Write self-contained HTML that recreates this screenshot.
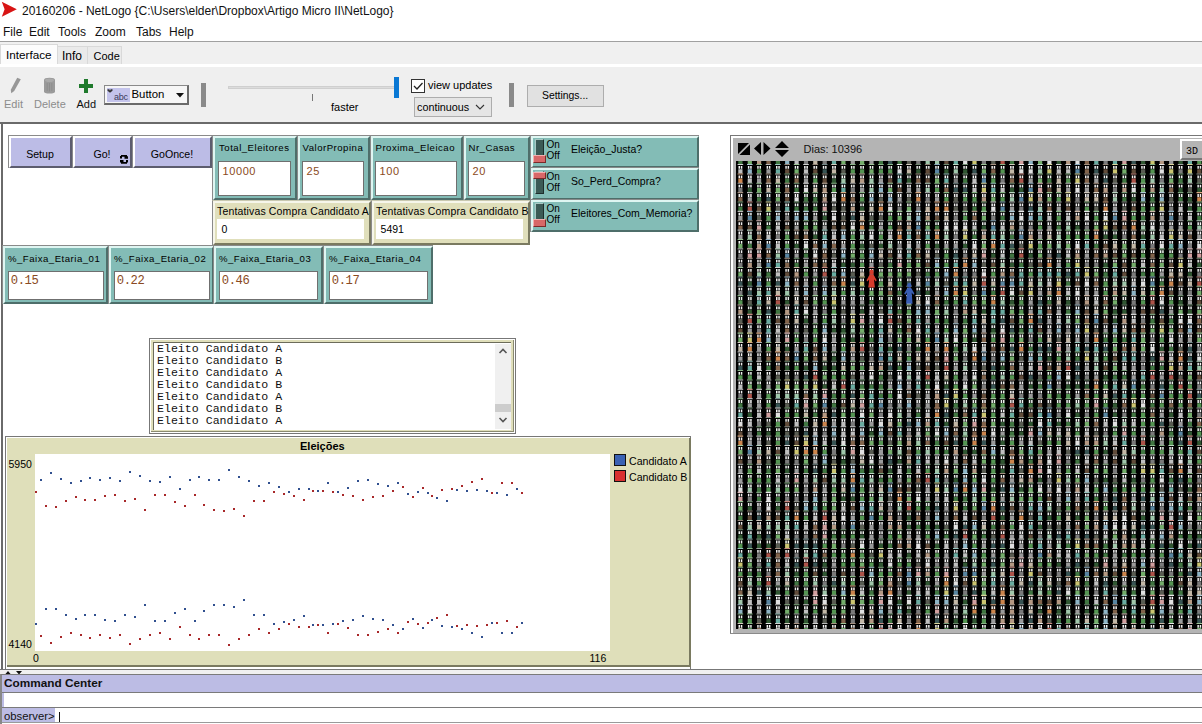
<!DOCTYPE html>
<html><head><meta charset="utf-8">
<style>
*{box-sizing:border-box;margin:0;padding:0}
html,body{width:1202px;height:724px;overflow:hidden;background:#f0f0f0;font-family:"Liberation Sans",sans-serif;color:#000}
.a{position:absolute}
.t{position:absolute;white-space:pre;line-height:1}
/* buttons */
.btn{position:absolute;background:#bcbce6;border-top:1px solid #8a8a8a;border-left:1px solid #8a8a8a;}
.btn .in{position:absolute;left:0;top:0;right:0;bottom:0;border-top:2px solid #fff;border-left:2px solid #fff;border-right:2px solid #5c5c6e;border-bottom:2px solid #5c5c6e}
.btn .lb{position:absolute;left:-1px;right:0;text-align:center;font-size:10.6px;top:12.7px;line-height:1}
/* teal widgets */
.tw{position:absolute;background:#83bcb6;border-top:1px solid #8a8a8a;border-left:1px solid #8a8a8a}
.tw .in{position:absolute;left:0;top:0;right:0;bottom:0;border-top:2px solid #dff6f2;border-left:2px solid #dff6f2;border-right:2px solid #4e6e6a;border-bottom:2px solid #4e6e6a}
.tw .lb{position:absolute;left:6px;top:7px;font-size:9.6px;letter-spacing:0.5px;white-space:pre;line-height:1}
.ibox{position:absolute;background:#fff;border:1px solid #6f6f6f}
.val{position:absolute;left:3.5px;top:3.8px;font-size:11px;letter-spacing:0.6px;color:#8a4a22;white-space:pre;line-height:1}
.mval{font-family:"Liberation Mono",monospace;font-size:12.2px;letter-spacing:-0.35px;top:3.2px;left:1.7px}
/* monitors */
.mon{position:absolute;background:#e0dfbb;border-top:1px solid #c8c8b0;border-left:1px solid #8a8a8a}
.mon .in{position:absolute;left:0;top:0;right:0;bottom:0;border-top:2px solid #f6f6ea;border-left:2px solid #f6f6ea;border-right:2px solid #7a7a60;border-bottom:2px solid #7a7a60}
.mon .lb{position:absolute;left:4px;top:4.8px;font-size:10.5px;letter-spacing:0.15px;white-space:pre;line-height:1}
.mbox{position:absolute;left:3.8px;width:147.4px;top:17.9px;height:20px;background:#fff}
.mbox span{position:absolute;left:4.8px;top:4.9px;font-size:10.5px;white-space:pre;line-height:1}
/* switches */
.sw{position:absolute;background:#83bcb6;border-top:1px solid #8a8a8a;border-left:1px solid #8a8a8a}
.sw .in{position:absolute;left:0;top:0;right:0;bottom:0;border-top:2px solid #dff6f2;border-left:2px solid #dff6f2;border-right:2px solid #4e6e6a;border-bottom:2px solid #4e6e6a}
.track{position:absolute;left:3.9px;top:3.4px;width:9px;height:22.5px;background:#3b5a55;border-left:1px solid #a8c8c4;border-top:1px solid #a8c8c4;border-right:1px solid #1e2e2c;border-bottom:1px solid #1e2e2c}
.knob{position:absolute;left:2.4px;width:12.6px;height:7.7px;background:#d86868;border-top:1px solid #f2b0b0;border-left:1px solid #f2b0b0;border-right:1px solid #7a2a2a;border-bottom:1px solid #7a2a2a}
.onoff{position:absolute;left:15.5px;font-size:10px;line-height:1;white-space:pre}
.swl{position:absolute;left:40px;top:8.2px;font-size:10.5px;white-space:pre;line-height:1}
</style></head><body>
<!-- title bar -->
<div class="a" style="left:0;top:0;width:1202px;height:41px;background:#fff"></div>
<svg class="a" style="left:0;top:0" width="20" height="20" viewBox="0 0 20 20"><path d="M1.8 1.8 L16.8 9.3 L1.8 16.8 L4.6 9.3 Z" fill="#d81414"/></svg>
<div class="t" style="left:22px;top:4.5px;font-size:12px;letter-spacing:-0.01px;color:#111">20160206 - NetLogo {C:\Users\elder\Dropbox\Artigo Micro II\NetLogo}</div>
<div class="t" style="left:3px;top:26px;font-size:12px;color:#111">File</div>
<div class="t" style="left:29px;top:26px;font-size:12px;color:#111">Edit</div>
<div class="t" style="left:58px;top:26px;font-size:12px;color:#111">Tools</div>
<div class="t" style="left:95px;top:26px;font-size:12px;color:#111">Zoom</div>
<div class="t" style="left:136px;top:26px;font-size:12px;color:#111">Tabs</div>
<div class="t" style="left:169px;top:26px;font-size:12px;color:#111">Help</div>
<div class="a" style="left:0;top:41px;width:1202px;height:1px;background:#a0a0a0"></div>
<!-- tabs -->
<div class="a" style="left:0;top:42px;width:1202px;height:26px;background:#f0f0f0"></div>
<div class="a" style="left:0;top:44px;width:58px;height:23px;background:#fcfcfc;border:1px solid #d9d9d9;border-bottom:none"></div>
<div class="a" style="left:58px;top:46px;width:30px;height:19px;background:#eaeaea;border:1px solid #d9d9d9;border-left:none"></div>
<div class="a" style="left:88px;top:46px;width:34px;height:19px;background:#eaeaea;border:1px solid #d9d9d9;border-left:none"></div>
<div class="t" style="left:6px;top:49.2px;font-size:11.7px">Interface</div>
<div class="t" style="left:62px;top:50.3px;font-size:12px">Info</div>
<div class="t" style="left:93.5px;top:50.6px;font-size:11px">Code</div>
<div class="a" style="left:0;top:64px;width:1202px;height:3px;background:#ffffff"></div>
<!-- toolbar -->
<div class="a" style="left:0;top:67px;width:1202px;height:55px;background:#efefef"></div>
<svg class="a" style="left:10px;top:77px" width="12" height="17" viewBox="0 0 12 17"><path d="M7.2 0.8 L10.8 2.2 L4.2 14 L1.2 16.3 L0.8 12.8 Z" fill="#979797"/></svg>
<svg class="a" style="left:43px;top:77px" width="13" height="17" viewBox="0 0 13 17"><path d="M1 3 Q1 0.8 6.5 0.8 Q12 0.8 12 3 L12 14.5 Q12 16.5 6.5 16.5 Q1 16.5 1 14.5Z" fill="#9a9a9a"/><path d="M4.2 6v8M6.5 6v8.5M8.8 6v8" stroke="#8a8a8a" stroke-width="0.8"/><ellipse cx="6.5" cy="3.2" rx="4.5" ry="1.8" fill="#aaa"/></svg>
<svg class="a" style="left:79px;top:79px" width="14" height="14" viewBox="0 0 14 14"><path d="M5 0h4v5h5v4h-5v5h-4v-5h-5v-4h5z" fill="#1f7a2c"/></svg>
<div class="t" style="left:4px;top:99.4px;font-size:11px;color:#8c8c8c">Edit</div>
<div class="t" style="left:34px;top:99.4px;font-size:11px;color:#8c8c8c">Delete</div>
<div class="t" style="left:76.5px;top:99.4px;font-size:11px;color:#111">Add</div>
<div class="a" style="left:104px;top:85px;width:85px;height:20px;background:#f6f6f6;border:1px solid #8a8a8a;border-right:2px solid #6a6a6a;border-bottom:2px solid #6a6a6a"></div>
<div class="a" style="left:107px;top:88px;width:23px;height:14px;background:#c4c4ec"></div>
<div class="t" style="left:114px;top:93px;font-size:9px;letter-spacing:-0.2px;color:#3c3c5c">abc</div>
<svg class="a" style="left:107px;top:88px" width="6" height="5"><path d="M0.5 1.2h2v1h1v-1h2v1.5l-2.5 2l-2.5-2z" fill="#333"/></svg>
<div class="t" style="left:131.5px;top:88.5px;font-size:11.4px">Button</div>
<svg class="a" style="left:176px;top:93px" width="8" height="5"><path d="M0 0h8L4 4.5z" fill="#111"/></svg>
<div class="a" style="left:201px;top:83px;width:5px;height:24px;background:#8a8a8a"></div>
<div class="a" style="left:228px;top:86px;width:168px;height:3px;background:#dcdcdc;border:1px solid #cfcfcf"></div>
<div class="a" style="left:312px;top:94px;width:1px;height:7px;background:#777"></div>
<div class="a" style="left:394px;top:77px;width:5px;height:21px;background:#0a78d4"></div>
<div class="t" style="left:331px;top:102.2px;font-size:11px">faster</div>
<div class="a" style="left:411px;top:79px;width:14px;height:14px;background:#fff;border:1px solid #333"></div>
<svg class="a" style="left:412px;top:80px" width="12" height="12"><path d="M2 6 L5 9 L10.5 3" stroke="#222" stroke-width="1.3" fill="none"/></svg>
<div class="t" style="left:428px;top:79.5px;font-size:11px">view updates</div>
<div class="a" style="left:414px;top:97px;width:78px;height:20px;background:#e5e5e5;border:1px solid #adadad"></div>
<div class="t" style="left:417px;top:101.7px;font-size:10.8px">continuous</div>
<svg class="a" style="left:475px;top:104px" width="10" height="6"><path d="M1 1 L5 5 L9 1" stroke="#333" stroke-width="1.1" fill="none"/></svg>
<div class="a" style="left:509px;top:83px;width:5px;height:24px;background:#8a8a8a"></div>
<div class="a" style="left:527px;top:85px;width:77px;height:22px;background:#e1e1e1;border:1px solid #adadad"></div>
<div class="t" style="left:542px;top:90.7px;font-size:10.4px">Settings...</div>
<div class="a" style="left:0;top:122px;width:1202px;height:2px;background:#6a6a6a"></div>
<!-- content area -->
<div class="a" style="left:0;top:124px;width:1202px;height:546px;background:#fff"></div>
<div class="a" style="left:1px;top:124px;width:2px;height:546px;background:#6a6a6a"></div>

<!-- buttons -->
<div class="btn" style="left:8px;top:135px;width:64px;height:33px"><div class="in"></div><div class="lb">Setup</div></div>
<div class="btn" style="left:72px;top:135px;width:60px;height:33px"><div class="in"></div><div class="lb">Go!</div>
<svg class="a" style="left:47px;top:19px" width="9" height="10" viewBox="0 0 9 10"><path fill="#000" d="M1 0h6v1.8h-6zM0 1h2v2.6h-2zM4.5 1.2h3.5v2.6h-3.5zM0 5h3.5v2.6h-3.5zM6 5h2v2.6h-2zM1 7h6v1.8h-6z"/></svg></div>
<div class="btn" style="left:132px;top:135px;width:80px;height:33px"><div class="in"></div><div class="lb">GoOnce!</div></div>

<!-- input widgets -->
<div class="tw" style="left:212px;top:135px;width:85px;height:65px"><div class="in"></div><div class="lb">Total_Eleitores</div><div class="ibox" style="left:5px;top:25px;width:73px;height:35px"><div class="val">10000</div></div></div>
<div class="tw" style="left:297px;top:135px;width:73px;height:65px"><div class="in"></div><div class="lb" style="left:4.5px">ValorPropina</div><div class="ibox" style="left:4px;top:25px;width:62px;height:35px"><div class="val">25</div></div></div>
<div class="tw" style="left:370px;top:135px;width:93px;height:65px"><div class="in"></div><div class="lb" style="left:4.5px">Proxima_Eleicao</div><div class="ibox" style="left:4px;top:25px;width:82px;height:35px"><div class="val">100</div></div></div>
<div class="tw" style="left:463px;top:135px;width:67px;height:65px"><div class="in"></div><div class="lb" style="left:4.5px">Nr_Casas</div><div class="ibox" style="left:4px;top:25px;width:57px;height:35px"><div class="val">20</div></div></div>

<!-- monitors -->
<div class="mon" style="left:212px;top:200px;width:159px;height:45px"><div class="in"></div><div class="lb">Tentativas Compra Candidato A</div><div class="mbox"><span>0</span></div></div>
<div class="mon" style="left:371px;top:200px;width:159px;height:45px"><div class="in"></div><div class="lb">Tentativas Compra Candidato B</div><div class="mbox"><span>5491</span></div></div>

<!-- switches -->
<div class="sw" style="left:530px;top:135px;width:169px;height:33px"><div class="in"></div><div class="track"></div><div class="knob" style="top:19px"></div><div class="onoff" style="top:4px">On</div><div class="onoff" style="top:15.1px">Off</div><div class="swl">Eleição_Justa?</div></div>
<div class="sw" style="left:530px;top:167px;width:169px;height:33px"><div class="in"></div><div class="track"></div><div class="knob" style="top:3.8px"></div><div class="onoff" style="top:4px">On</div><div class="onoff" style="top:15.1px">Off</div><div class="swl">So_Perd_Compra?</div></div>
<div class="sw" style="left:530px;top:199px;width:169px;height:33px"><div class="in"></div><div class="track"></div><div class="knob" style="top:19px"></div><div class="onoff" style="top:4px">On</div><div class="onoff" style="top:15.1px">Off</div><div class="swl">Eleitores_Com_Memoria?</div></div>

<!-- faixa inputs -->
<div class="tw" style="left:2px;top:245px;width:106px;height:59px"><div class="in"></div><div class="lb" style="left:5px;top:8.2px">%_Faixa_Etaria_01</div><div class="ibox" style="left:5px;top:25px;width:96px;height:29px"><div class="val mval">0.15</div></div></div>
<div class="tw" style="left:108px;top:245px;width:106px;height:59px"><div class="in"></div><div class="lb" style="left:5px;top:8.2px">%_Faixa_Etaria_02</div><div class="ibox" style="left:5px;top:25px;width:96px;height:29px"><div class="val mval">0.22</div></div></div>
<div class="tw" style="left:213px;top:245px;width:110px;height:59px"><div class="in"></div><div class="lb" style="left:5px;top:8.2px">%_Faixa_Etaria_03</div><div class="ibox" style="left:5px;top:25px;width:99px;height:29px"><div class="val mval">0.46</div></div></div>
<div class="tw" style="left:323px;top:245px;width:110px;height:59px"><div class="in"></div><div class="lb" style="left:5px;top:8.2px">%_Faixa_Etaria_04</div><div class="ibox" style="left:5px;top:25px;width:99px;height:29px"><div class="val mval">0.17</div></div></div>

<!-- output -->
<div class="a" style="left:149px;top:338px;width:367px;height:96px;border:1px solid #777;background:#fff"></div>
<div class="a" style="left:151px;top:340px;width:363px;height:92px;background:#e0dfbb;border-right:1px solid #8a8a70;border-bottom:1px solid #8a8a70"></div>
<div class="a" style="left:153px;top:342px;width:358px;height:88px;background:#fff;border-top:1px solid #6c6c5a;border-left:1px solid #6c6c5a"></div>
<div class="a" style="left:495px;top:344px;width:16px;height:85px;background:#f0f0f0"></div>
<div class="a" style="left:495px;top:404px;width:16px;height:8px;background:#cdcdcd"></div>
<svg class="a" style="left:498px;top:347px" width="10" height="8"><path d="M1.5 6 L5 2.5 L8.5 6" stroke="#555" stroke-width="1.6" fill="none"/></svg>
<svg class="a" style="left:498px;top:416px" width="10" height="8"><path d="M1.5 2 L5 5.5 L8.5 2" stroke="#555" stroke-width="1.6" fill="none"/></svg>
<div class="t" style="left:157px;top:343px;font-family:'Liberation Mono',monospace;font-size:11.6px;line-height:12px;color:#111">Eleito Candidato A
Eleito Candidato B
Eleito Candidato A
Eleito Candidato B
Eleito Candidato A
Eleito Candidato B
Eleito Candidato A</div>

<!-- plot -->
<div class="a" style="left:5px;top:436px;width:686px;height:234px;border:1px solid #777;background:#fff"></div>
<div class="a" style="left:7px;top:438px;width:684px;height:229px;background:#dfdfba;border-right:2px solid #7a7a60;border-bottom:2px solid #7a7a60"></div>
<div class="t" style="left:300px;top:441px;font-size:11px;font-weight:bold">Eleições</div>
<div class="a" style="left:35px;top:454px;width:575px;height:197px;background:#fff"></div>
<svg class="a" style="left:35px;top:454px" width="575" height="197"><path fill="#31508f" d="M0 169h2v2h-2zM5 25h2v2h-2zM10 154h2v2h-2zM15 18h2v2h-2zM20 154h2v2h-2zM25 24h2v2h-2zM30 160h2v2h-2zM35 28h2v2h-2zM40 164h2v2h-2zM45 26h2v2h-2zM49 160h2v2h-2zM54 23h2v2h-2zM59 160h2v2h-2zM64 25h2v2h-2zM69 165h2v2h-2zM74 23h2v2h-2zM79 166h2v2h-2zM84 26h2v2h-2zM89 160h2v2h-2zM94 17h2v2h-2zM99 162h2v2h-2zM104 21h2v2h-2zM109 150h2v2h-2zM114 26h2v2h-2zM119 166h2v2h-2zM124 27h2v2h-2zM129 166h2v2h-2zM134 22h2v2h-2zM139 158h2v2h-2zM144 34h2v2h-2zM149 154h2v2h-2zM154 25h2v2h-2zM159 166h2v2h-2zM163 22h2v2h-2zM168 156h2v2h-2zM173 25h2v2h-2zM178 150h2v2h-2zM183 25h2v2h-2zM188 150h2v2h-2zM193 15h2v2h-2zM198 152h2v2h-2zM203 22h2v2h-2zM208 145h2v2h-2zM213 26h2v2h-2zM218 160h2v2h-2zM223 31h2v2h-2zM228 160h2v2h-2zM233 28h2v2h-2zM238 169h2v2h-2zM243 32h2v2h-2zM248 167h2v2h-2zM253 37h2v2h-2zM258 165h2v2h-2zM263 34h2v2h-2zM268 161h2v2h-2zM273 34h2v2h-2zM277 170h2v2h-2zM282 36h2v2h-2zM287 170h2v2h-2zM292 28h2v2h-2zM297 169h2v2h-2zM302 37h2v2h-2zM307 166h2v2h-2zM312 33h2v2h-2zM317 165h2v2h-2zM322 26h2v2h-2zM327 161h2v2h-2zM332 25h2v2h-2zM337 164h2v2h-2zM342 29h2v2h-2zM347 165h2v2h-2zM352 31h2v2h-2zM357 170h2v2h-2zM362 28h2v2h-2zM367 174h2v2h-2zM372 39h2v2h-2zM377 164h2v2h-2zM382 37h2v2h-2zM387 173h2v2h-2zM392 38h2v2h-2zM396 165h2v2h-2zM401 43h2v2h-2zM406 171h2v2h-2zM411 46h2v2h-2zM416 172h2v2h-2zM421 35h2v2h-2zM426 174h2v2h-2zM431 36h2v2h-2zM436 178h2v2h-2zM441 35h2v2h-2zM446 182h2v2h-2zM451 36h2v2h-2zM456 168h2v2h-2zM461 38h2v2h-2zM466 178h2v2h-2zM471 40h2v2h-2zM476 178h2v2h-2zM481 34h2v2h-2zM486 168h2v2h-2z"/><path fill="#a8282a" d="M0 37h2v2h-2zM5 181h2v2h-2zM10 51h2v2h-2zM15 188h2v2h-2zM20 52h2v2h-2zM25 182h2v2h-2zM30 46h2v2h-2zM35 178h2v2h-2zM40 42h2v2h-2zM45 180h2v2h-2zM49 45h2v2h-2zM54 183h2v2h-2zM59 45h2v2h-2zM64 180h2v2h-2zM69 41h2v2h-2zM74 183h2v2h-2zM79 40h2v2h-2zM84 180h2v2h-2zM89 46h2v2h-2zM94 189h2v2h-2zM99 44h2v2h-2zM104 184h2v2h-2zM109 55h2v2h-2zM114 180h2v2h-2zM119 40h2v2h-2zM124 178h2v2h-2zM129 40h2v2h-2zM134 184h2v2h-2zM139 47h2v2h-2zM144 172h2v2h-2zM149 51h2v2h-2zM154 180h2v2h-2zM159 40h2v2h-2zM163 184h2v2h-2zM168 50h2v2h-2zM173 180h2v2h-2zM178 55h2v2h-2zM183 180h2v2h-2zM188 56h2v2h-2zM193 190h2v2h-2zM198 54h2v2h-2zM203 184h2v2h-2zM208 61h2v2h-2zM213 180h2v2h-2zM218 46h2v2h-2zM223 174h2v2h-2zM228 46h2v2h-2zM233 178h2v2h-2zM238 37h2v2h-2zM243 174h2v2h-2zM248 39h2v2h-2zM253 169h2v2h-2zM258 41h2v2h-2zM263 172h2v2h-2zM268 45h2v2h-2zM273 172h2v2h-2zM277 36h2v2h-2zM282 170h2v2h-2zM287 36h2v2h-2zM292 178h2v2h-2zM297 37h2v2h-2zM302 169h2v2h-2zM307 40h2v2h-2zM312 173h2v2h-2zM317 41h2v2h-2zM322 180h2v2h-2zM327 45h2v2h-2zM332 180h2v2h-2zM337 42h2v2h-2zM342 177h2v2h-2zM347 41h2v2h-2zM352 174h2v2h-2zM357 36h2v2h-2zM362 178h2v2h-2zM367 32h2v2h-2zM372 167h2v2h-2zM377 42h2v2h-2zM382 169h2v2h-2zM387 33h2v2h-2zM392 168h2v2h-2zM396 41h2v2h-2zM401 163h2v2h-2zM406 35h2v2h-2zM411 160h2v2h-2zM416 34h2v2h-2zM421 171h2v2h-2zM426 31h2v2h-2zM431 170h2v2h-2zM436 27h2v2h-2zM441 171h2v2h-2zM446 24h2v2h-2zM451 170h2v2h-2zM456 38h2v2h-2zM461 168h2v2h-2zM466 28h2v2h-2zM471 166h2v2h-2zM476 28h2v2h-2zM481 172h2v2h-2zM486 38h2v2h-2z"/></svg>
<div class="t" style="left:8.5px;top:459.3px;font-size:10.5px">5950</div>
<div class="t" style="left:8.5px;top:639.3px;font-size:10.5px">4140</div>
<div class="t" style="left:33px;top:653px;font-size:10.5px">0</div>
<div class="t" style="left:589.5px;top:652.5px;font-size:10.5px">116</div>
<div class="a" style="left:614px;top:454px;width:12px;height:12px;background:#3a62b4;border:1px solid #111"></div>
<div class="a" style="left:614px;top:470px;width:12px;height:12px;background:#d83030;border:1px solid #111"></div>
<div class="t" style="left:629px;top:456px;font-size:10.6px">Candidato A</div>
<div class="t" style="left:629px;top:472px;font-size:10.6px">Candidato B</div>

<!-- view -->
<div class="a" style="left:730px;top:135px;width:472px;height:499px;border-top:1px solid #777;border-left:1px solid #777;background:#fff"></div>
<div class="a" style="left:733px;top:138px;width:469px;height:495px;background:#b4b4b4"></div>
<svg class="a" style="left:738px;top:143px" width="12" height="12" viewBox="0 0 12 12"><path d="M0 0h11L0 11z M12 1.5V12H1.5z" fill="#000"/></svg>
<svg class="a" style="left:754px;top:142px" width="17" height="14" viewBox="0 0 17 14"><path d="M7 0V13L0 6.5z M9.5 0V13L16.5 6.5z" fill="#000"/></svg>
<svg class="a" style="left:775px;top:141px" width="14" height="16" viewBox="0 0 14 16"><path d="M0 7h14L7 0z M0 9h14L7 16z" fill="#000"/></svg>
<div class="t" style="left:803.5px;top:143.8px;font-size:11px;color:#111">Dias: 10396</div>
<div class="a" style="left:1180px;top:139px;width:22px;height:21px;background:#b4b4b4;border-top:2px solid #fff;border-left:2px solid #fff;border-bottom:2px solid #777"></div>
<div class="t" style="left:1186px;top:146.5px;font-family:'Liberation Mono',monospace;font-size:10px">3D</div>
<div class="a" style="left:736px;top:161px;width:466px;height:468px;background:#000;overflow:hidden">
<svg width="466" height="468"><path fill="#407641" d="M2.3 -1.2h4.2v4.3h-4.2zM2.3 45.7h4.2v4.3h-4.2zM2.3 242.3h4.2v4.3h-4.2zM2.3 354.7h4.2v4.3h-4.2zM11.7 83.1h4.2v4.3h-4.2zM11.7 410.9h4.2v4.3h-4.2zM21.0 36.3h4.2v4.3h-4.2zM21.0 223.6h4.2v4.3h-4.2zM21.0 270.4h4.2v4.3h-4.2zM21.0 326.6h4.2v4.3h-4.2zM21.0 336.0h4.2v4.3h-4.2zM21.0 410.9h4.2v4.3h-4.2zM30.4 64.4h4.2v4.3h-4.2zM30.4 111.2h4.2v4.3h-4.2zM30.4 204.9h4.2v4.3h-4.2zM30.4 307.9h4.2v4.3h-4.2zM39.8 -1.2h4.2v4.3h-4.2zM39.8 148.7h4.2v4.3h-4.2zM39.8 336.0h4.2v4.3h-4.2zM49.1 17.6h4.2v4.3h-4.2zM58.5 26.9h4.2v4.3h-4.2zM58.5 45.7h4.2v4.3h-4.2zM58.5 101.9h4.2v4.3h-4.2zM58.5 420.3h4.2v4.3h-4.2zM67.9 36.3h4.2v4.3h-4.2zM67.9 45.7h4.2v4.3h-4.2zM67.9 92.5h4.2v4.3h-4.2zM67.9 261.1h4.2v4.3h-4.2zM67.9 307.9h4.2v4.3h-4.2zM77.2 36.3h4.2v4.3h-4.2zM77.2 45.7h4.2v4.3h-4.2zM77.2 251.7h4.2v4.3h-4.2zM77.2 476.4h4.2v4.3h-4.2zM86.6 307.9h4.2v4.3h-4.2zM95.9 233.0h4.2v4.3h-4.2zM95.9 242.3h4.2v4.3h-4.2zM95.9 373.4h4.2v4.3h-4.2zM105.3 176.8h4.2v4.3h-4.2zM105.3 373.4h4.2v4.3h-4.2zM105.3 476.4h4.2v4.3h-4.2zM124.0 129.9h4.2v4.3h-4.2zM124.0 223.6h4.2v4.3h-4.2zM124.0 307.9h4.2v4.3h-4.2zM133.4 64.4h4.2v4.3h-4.2zM133.4 139.3h4.2v4.3h-4.2zM133.4 176.8h4.2v4.3h-4.2zM133.4 223.6h4.2v4.3h-4.2zM133.4 307.9h4.2v4.3h-4.2zM133.4 429.6h4.2v4.3h-4.2zM142.8 -1.2h4.2v4.3h-4.2zM142.8 214.2h4.2v4.3h-4.2zM142.8 223.6h4.2v4.3h-4.2zM142.8 233.0h4.2v4.3h-4.2zM142.8 317.2h4.2v4.3h-4.2zM152.1 101.9h4.2v4.3h-4.2zM152.1 382.8h4.2v4.3h-4.2zM152.1 457.7h4.2v4.3h-4.2zM161.5 -1.2h4.2v4.3h-4.2zM161.5 129.9h4.2v4.3h-4.2zM161.5 148.7h4.2v4.3h-4.2zM161.5 167.4h4.2v4.3h-4.2zM161.5 204.9h4.2v4.3h-4.2zM170.9 307.9h4.2v4.3h-4.2zM180.2 251.7h4.2v4.3h-4.2zM180.2 364.1h4.2v4.3h-4.2zM180.2 476.4h4.2v4.3h-4.2zM189.6 111.2h4.2v4.3h-4.2zM189.6 223.6h4.2v4.3h-4.2zM189.6 345.3h4.2v4.3h-4.2zM189.6 364.1h4.2v4.3h-4.2zM199.0 64.4h4.2v4.3h-4.2zM199.0 279.8h4.2v4.3h-4.2zM199.0 429.6h4.2v4.3h-4.2zM208.3 139.3h4.2v4.3h-4.2zM208.3 158.0h4.2v4.3h-4.2zM208.3 289.1h4.2v4.3h-4.2zM208.3 373.4h4.2v4.3h-4.2zM208.3 467.1h4.2v4.3h-4.2zM217.7 186.1h4.2v4.3h-4.2zM217.7 242.3h4.2v4.3h-4.2zM217.7 251.7h4.2v4.3h-4.2zM217.7 336.0h4.2v4.3h-4.2zM227.1 17.6h4.2v4.3h-4.2zM227.1 158.0h4.2v4.3h-4.2zM227.1 336.0h4.2v4.3h-4.2zM227.1 345.3h4.2v4.3h-4.2zM236.4 45.7h4.2v4.3h-4.2zM236.4 73.8h4.2v4.3h-4.2zM236.4 467.1h4.2v4.3h-4.2zM245.8 373.4h4.2v4.3h-4.2zM245.8 448.4h4.2v4.3h-4.2zM255.2 129.9h4.2v4.3h-4.2zM255.2 214.2h4.2v4.3h-4.2zM255.2 364.1h4.2v4.3h-4.2zM264.5 55.0h4.2v4.3h-4.2zM273.9 -1.2h4.2v4.3h-4.2zM273.9 73.8h4.2v4.3h-4.2zM273.9 92.5h4.2v4.3h-4.2zM273.9 261.1h4.2v4.3h-4.2zM273.9 270.4h4.2v4.3h-4.2zM283.2 101.9h4.2v4.3h-4.2zM283.2 167.4h4.2v4.3h-4.2zM292.6 186.1h4.2v4.3h-4.2zM292.6 242.3h4.2v4.3h-4.2zM292.6 298.5h4.2v4.3h-4.2zM292.6 429.6h4.2v4.3h-4.2zM292.6 476.4h4.2v4.3h-4.2zM302.0 223.6h4.2v4.3h-4.2zM311.3 17.6h4.2v4.3h-4.2zM311.3 139.3h4.2v4.3h-4.2zM320.7 64.4h4.2v4.3h-4.2zM320.7 233.0h4.2v4.3h-4.2zM320.7 457.7h4.2v4.3h-4.2zM330.1 120.6h4.2v4.3h-4.2zM330.1 148.7h4.2v4.3h-4.2zM330.1 261.1h4.2v4.3h-4.2zM330.1 382.8h4.2v4.3h-4.2zM339.4 195.5h4.2v4.3h-4.2zM339.4 298.5h4.2v4.3h-4.2zM339.4 410.9h4.2v4.3h-4.2zM348.8 420.3h4.2v4.3h-4.2zM348.8 439.0h4.2v4.3h-4.2zM358.2 83.1h4.2v4.3h-4.2zM358.2 336.0h4.2v4.3h-4.2zM367.5 111.2h4.2v4.3h-4.2zM367.5 176.8h4.2v4.3h-4.2zM367.5 382.8h4.2v4.3h-4.2zM367.5 392.2h4.2v4.3h-4.2zM376.9 214.2h4.2v4.3h-4.2zM376.9 326.6h4.2v4.3h-4.2zM386.3 17.6h4.2v4.3h-4.2zM386.3 36.3h4.2v4.3h-4.2zM386.3 176.8h4.2v4.3h-4.2zM386.3 214.2h4.2v4.3h-4.2zM386.3 392.2h4.2v4.3h-4.2zM386.3 448.4h4.2v4.3h-4.2zM386.3 476.4h4.2v4.3h-4.2zM395.6 233.0h4.2v4.3h-4.2zM395.6 251.7h4.2v4.3h-4.2zM395.6 307.9h4.2v4.3h-4.2zM395.6 429.6h4.2v4.3h-4.2zM405.0 55.0h4.2v4.3h-4.2zM405.0 111.2h4.2v4.3h-4.2zM405.0 223.6h4.2v4.3h-4.2zM405.0 289.1h4.2v4.3h-4.2zM405.0 392.2h4.2v4.3h-4.2zM414.4 36.3h4.2v4.3h-4.2zM414.4 158.0h4.2v4.3h-4.2zM414.4 204.9h4.2v4.3h-4.2zM414.4 242.3h4.2v4.3h-4.2zM414.4 279.8h4.2v4.3h-4.2zM414.4 420.3h4.2v4.3h-4.2zM414.4 476.4h4.2v4.3h-4.2zM423.7 120.6h4.2v4.3h-4.2zM423.7 204.9h4.2v4.3h-4.2zM433.1 158.0h4.2v4.3h-4.2zM433.1 186.1h4.2v4.3h-4.2zM433.1 270.4h4.2v4.3h-4.2zM433.1 317.2h4.2v4.3h-4.2zM433.1 429.6h4.2v4.3h-4.2zM442.5 17.6h4.2v4.3h-4.2zM442.5 36.3h4.2v4.3h-4.2zM442.5 373.4h4.2v4.3h-4.2zM442.5 401.5h4.2v4.3h-4.2zM442.5 410.9h4.2v4.3h-4.2zM442.5 429.6h4.2v4.3h-4.2zM451.8 261.1h4.2v4.3h-4.2zM451.8 345.3h4.2v4.3h-4.2zM451.8 373.4h4.2v4.3h-4.2zM461.2 55.0h4.2v4.3h-4.2z"/><path fill="#bfbfbf" d="M2.3 8.2h4.2v4.3h-4.2zM2.3 223.6h4.2v4.3h-4.2zM11.7 17.6h4.2v4.3h-4.2zM11.7 261.1h4.2v4.3h-4.2zM11.7 439.0h4.2v4.3h-4.2zM21.0 214.2h4.2v4.3h-4.2zM21.0 251.7h4.2v4.3h-4.2zM21.0 307.9h4.2v4.3h-4.2zM21.0 439.0h4.2v4.3h-4.2zM21.0 476.4h4.2v4.3h-4.2zM30.4 73.8h4.2v4.3h-4.2zM39.8 64.4h4.2v4.3h-4.2zM39.8 83.1h4.2v4.3h-4.2zM39.8 111.2h4.2v4.3h-4.2zM39.8 167.4h4.2v4.3h-4.2zM39.8 317.2h4.2v4.3h-4.2zM39.8 467.1h4.2v4.3h-4.2zM49.1 289.1h4.2v4.3h-4.2zM49.1 373.4h4.2v4.3h-4.2zM49.1 401.5h4.2v4.3h-4.2zM58.5 -1.2h4.2v4.3h-4.2zM58.5 261.1h4.2v4.3h-4.2zM67.9 8.2h4.2v4.3h-4.2zM67.9 364.1h4.2v4.3h-4.2zM67.9 448.4h4.2v4.3h-4.2zM77.2 270.4h4.2v4.3h-4.2zM77.2 354.7h4.2v4.3h-4.2zM77.2 467.1h4.2v4.3h-4.2zM86.6 279.8h4.2v4.3h-4.2zM95.9 73.8h4.2v4.3h-4.2zM95.9 101.9h4.2v4.3h-4.2zM95.9 223.6h4.2v4.3h-4.2zM105.3 261.1h4.2v4.3h-4.2zM105.3 270.4h4.2v4.3h-4.2zM105.3 345.3h4.2v4.3h-4.2zM114.7 270.4h4.2v4.3h-4.2zM124.0 429.6h4.2v4.3h-4.2zM124.0 467.1h4.2v4.3h-4.2zM133.4 148.7h4.2v4.3h-4.2zM152.1 73.8h4.2v4.3h-4.2zM152.1 392.2h4.2v4.3h-4.2zM161.5 92.5h4.2v4.3h-4.2zM161.5 307.9h4.2v4.3h-4.2zM161.5 392.2h4.2v4.3h-4.2zM170.9 83.1h4.2v4.3h-4.2zM180.2 120.6h4.2v4.3h-4.2zM180.2 214.2h4.2v4.3h-4.2zM180.2 270.4h4.2v4.3h-4.2zM180.2 307.9h4.2v4.3h-4.2zM180.2 392.2h4.2v4.3h-4.2zM180.2 429.6h4.2v4.3h-4.2zM189.6 251.7h4.2v4.3h-4.2zM189.6 298.5h4.2v4.3h-4.2zM189.6 429.6h4.2v4.3h-4.2zM189.6 457.7h4.2v4.3h-4.2zM199.0 214.2h4.2v4.3h-4.2zM208.3 336.0h4.2v4.3h-4.2zM208.3 382.8h4.2v4.3h-4.2zM217.7 401.5h4.2v4.3h-4.2zM227.1 354.7h4.2v4.3h-4.2zM227.1 392.2h4.2v4.3h-4.2zM236.4 17.6h4.2v4.3h-4.2zM236.4 26.9h4.2v4.3h-4.2zM236.4 64.4h4.2v4.3h-4.2zM236.4 298.5h4.2v4.3h-4.2zM245.8 186.1h4.2v4.3h-4.2zM255.2 429.6h4.2v4.3h-4.2zM264.5 26.9h4.2v4.3h-4.2zM264.5 64.4h4.2v4.3h-4.2zM264.5 92.5h4.2v4.3h-4.2zM264.5 251.7h4.2v4.3h-4.2zM264.5 289.1h4.2v4.3h-4.2zM283.2 373.4h4.2v4.3h-4.2zM292.6 204.9h4.2v4.3h-4.2zM292.6 279.8h4.2v4.3h-4.2zM311.3 55.0h4.2v4.3h-4.2zM311.3 120.6h4.2v4.3h-4.2zM320.7 8.2h4.2v4.3h-4.2zM320.7 158.0h4.2v4.3h-4.2zM320.7 270.4h4.2v4.3h-4.2zM320.7 289.1h4.2v4.3h-4.2zM320.7 392.2h4.2v4.3h-4.2zM330.1 8.2h4.2v4.3h-4.2zM330.1 55.0h4.2v4.3h-4.2zM330.1 92.5h4.2v4.3h-4.2zM330.1 129.9h4.2v4.3h-4.2zM330.1 392.2h4.2v4.3h-4.2zM330.1 476.4h4.2v4.3h-4.2zM339.4 307.9h4.2v4.3h-4.2zM348.8 270.4h4.2v4.3h-4.2zM348.8 298.5h4.2v4.3h-4.2zM348.8 326.6h4.2v4.3h-4.2zM358.2 139.3h4.2v4.3h-4.2zM358.2 420.3h4.2v4.3h-4.2zM358.2 439.0h4.2v4.3h-4.2zM367.5 261.1h4.2v4.3h-4.2zM367.5 373.4h4.2v4.3h-4.2zM376.9 279.8h4.2v4.3h-4.2zM386.3 204.9h4.2v4.3h-4.2zM386.3 317.2h4.2v4.3h-4.2zM395.6 120.6h4.2v4.3h-4.2zM395.6 158.0h4.2v4.3h-4.2zM395.6 261.1h4.2v4.3h-4.2zM405.0 101.9h4.2v4.3h-4.2zM405.0 298.5h4.2v4.3h-4.2zM405.0 382.8h4.2v4.3h-4.2zM405.0 476.4h4.2v4.3h-4.2zM414.4 373.4h4.2v4.3h-4.2zM423.7 73.8h4.2v4.3h-4.2zM433.1 195.5h4.2v4.3h-4.2zM433.1 298.5h4.2v4.3h-4.2zM433.1 354.7h4.2v4.3h-4.2zM442.5 45.7h4.2v4.3h-4.2zM442.5 251.7h4.2v4.3h-4.2zM442.5 336.0h4.2v4.3h-4.2zM451.8 55.0h4.2v4.3h-4.2zM451.8 101.9h4.2v4.3h-4.2zM451.8 307.9h4.2v4.3h-4.2zM461.2 476.4h4.2v4.3h-4.2z"/><path fill="#cb844c" d="M2.3 17.6h4.2v4.3h-4.2zM2.3 279.8h4.2v4.3h-4.2zM11.7 186.1h4.2v4.3h-4.2zM21.0 176.8h4.2v4.3h-4.2zM39.8 195.5h4.2v4.3h-4.2zM58.5 354.7h4.2v4.3h-4.2zM67.9 289.1h4.2v4.3h-4.2zM77.2 289.1h4.2v4.3h-4.2zM86.6 261.1h4.2v4.3h-4.2zM105.3 36.3h4.2v4.3h-4.2zM105.3 120.6h4.2v4.3h-4.2zM114.7 317.2h4.2v4.3h-4.2zM114.7 392.2h4.2v4.3h-4.2zM114.7 429.6h4.2v4.3h-4.2zM124.0 64.4h4.2v4.3h-4.2zM142.8 45.7h4.2v4.3h-4.2zM152.1 429.6h4.2v4.3h-4.2zM161.5 73.8h4.2v4.3h-4.2zM161.5 336.0h4.2v4.3h-4.2zM180.2 36.3h4.2v4.3h-4.2zM180.2 467.1h4.2v4.3h-4.2zM189.6 186.1h4.2v4.3h-4.2zM189.6 476.4h4.2v4.3h-4.2zM199.0 45.7h4.2v4.3h-4.2zM199.0 73.8h4.2v4.3h-4.2zM199.0 251.7h4.2v4.3h-4.2zM208.3 45.7h4.2v4.3h-4.2zM208.3 186.1h4.2v4.3h-4.2zM208.3 420.3h4.2v4.3h-4.2zM217.7 111.2h4.2v4.3h-4.2zM217.7 129.9h4.2v4.3h-4.2zM227.1 101.9h4.2v4.3h-4.2zM227.1 326.6h4.2v4.3h-4.2zM236.4 195.5h4.2v4.3h-4.2zM236.4 279.8h4.2v4.3h-4.2zM236.4 448.4h4.2v4.3h-4.2zM245.8 270.4h4.2v4.3h-4.2zM255.2 83.1h4.2v4.3h-4.2zM255.2 139.3h4.2v4.3h-4.2zM255.2 345.3h4.2v4.3h-4.2zM255.2 448.4h4.2v4.3h-4.2zM264.5 429.6h4.2v4.3h-4.2zM264.5 439.0h4.2v4.3h-4.2zM273.9 298.5h4.2v4.3h-4.2zM283.2 186.1h4.2v4.3h-4.2zM283.2 354.7h4.2v4.3h-4.2zM292.6 158.0h4.2v4.3h-4.2zM292.6 307.9h4.2v4.3h-4.2zM311.3 101.9h4.2v4.3h-4.2zM311.3 448.4h4.2v4.3h-4.2zM320.7 129.9h4.2v4.3h-4.2zM358.2 73.8h4.2v4.3h-4.2zM358.2 176.8h4.2v4.3h-4.2zM358.2 223.6h4.2v4.3h-4.2zM358.2 345.3h4.2v4.3h-4.2zM367.5 45.7h4.2v4.3h-4.2zM386.3 410.9h4.2v4.3h-4.2zM395.6 64.4h4.2v4.3h-4.2zM423.7 129.9h4.2v4.3h-4.2zM433.1 120.6h4.2v4.3h-4.2zM442.5 195.5h4.2v4.3h-4.2zM442.5 307.9h4.2v4.3h-4.2zM461.2 36.3h4.2v4.3h-4.2z"/><path fill="#7a7a7a" d="M2.3 26.9h4.2v4.3h-4.2zM2.3 92.5h4.2v4.3h-4.2zM2.3 101.9h4.2v4.3h-4.2zM2.3 129.9h4.2v4.3h-4.2zM2.3 233.0h4.2v4.3h-4.2zM2.3 476.4h4.2v4.3h-4.2zM11.7 270.4h4.2v4.3h-4.2zM11.7 298.5h4.2v4.3h-4.2zM11.7 336.0h4.2v4.3h-4.2zM21.0 167.4h4.2v4.3h-4.2zM21.0 195.5h4.2v4.3h-4.2zM21.0 261.1h4.2v4.3h-4.2zM21.0 345.3h4.2v4.3h-4.2zM21.0 392.2h4.2v4.3h-4.2zM21.0 401.5h4.2v4.3h-4.2zM30.4 410.9h4.2v4.3h-4.2zM39.8 73.8h4.2v4.3h-4.2zM49.1 55.0h4.2v4.3h-4.2zM49.1 298.5h4.2v4.3h-4.2zM49.1 317.2h4.2v4.3h-4.2zM49.1 336.0h4.2v4.3h-4.2zM58.5 167.4h4.2v4.3h-4.2zM58.5 214.2h4.2v4.3h-4.2zM58.5 298.5h4.2v4.3h-4.2zM58.5 336.0h4.2v4.3h-4.2zM58.5 373.4h4.2v4.3h-4.2zM58.5 392.2h4.2v4.3h-4.2zM58.5 457.7h4.2v4.3h-4.2zM67.9 -1.2h4.2v4.3h-4.2zM67.9 176.8h4.2v4.3h-4.2zM67.9 326.6h4.2v4.3h-4.2zM67.9 336.0h4.2v4.3h-4.2zM67.9 373.4h4.2v4.3h-4.2zM77.2 129.9h4.2v4.3h-4.2zM86.6 -1.2h4.2v4.3h-4.2zM86.6 120.6h4.2v4.3h-4.2zM86.6 148.7h4.2v4.3h-4.2zM86.6 270.4h4.2v4.3h-4.2zM86.6 420.3h4.2v4.3h-4.2zM95.9 289.1h4.2v4.3h-4.2zM95.9 410.9h4.2v4.3h-4.2zM105.3 158.0h4.2v4.3h-4.2zM105.3 364.1h4.2v4.3h-4.2zM105.3 382.8h4.2v4.3h-4.2zM114.7 26.9h4.2v4.3h-4.2zM114.7 261.1h4.2v4.3h-4.2zM114.7 410.9h4.2v4.3h-4.2zM114.7 448.4h4.2v4.3h-4.2zM114.7 457.7h4.2v4.3h-4.2zM133.4 195.5h4.2v4.3h-4.2zM142.8 251.7h4.2v4.3h-4.2zM142.8 364.1h4.2v4.3h-4.2zM142.8 373.4h4.2v4.3h-4.2zM142.8 476.4h4.2v4.3h-4.2zM152.1 176.8h4.2v4.3h-4.2zM152.1 242.3h4.2v4.3h-4.2zM152.1 345.3h4.2v4.3h-4.2zM161.5 45.7h4.2v4.3h-4.2zM161.5 83.1h4.2v4.3h-4.2zM161.5 354.7h4.2v4.3h-4.2zM161.5 429.6h4.2v4.3h-4.2zM161.5 476.4h4.2v4.3h-4.2zM170.9 186.1h4.2v4.3h-4.2zM170.9 270.4h4.2v4.3h-4.2zM170.9 457.7h4.2v4.3h-4.2zM170.9 467.1h4.2v4.3h-4.2zM180.2 -1.2h4.2v4.3h-4.2zM180.2 45.7h4.2v4.3h-4.2zM180.2 242.3h4.2v4.3h-4.2zM180.2 448.4h4.2v4.3h-4.2zM189.6 36.3h4.2v4.3h-4.2zM189.6 354.7h4.2v4.3h-4.2zM189.6 467.1h4.2v4.3h-4.2zM199.0 401.5h4.2v4.3h-4.2zM208.3 317.2h4.2v4.3h-4.2zM208.3 354.7h4.2v4.3h-4.2zM208.3 448.4h4.2v4.3h-4.2zM217.7 17.6h4.2v4.3h-4.2zM217.7 55.0h4.2v4.3h-4.2zM217.7 73.8h4.2v4.3h-4.2zM217.7 148.7h4.2v4.3h-4.2zM217.7 158.0h4.2v4.3h-4.2zM217.7 382.8h4.2v4.3h-4.2zM227.1 92.5h4.2v4.3h-4.2zM227.1 111.2h4.2v4.3h-4.2zM227.1 195.5h4.2v4.3h-4.2zM227.1 429.6h4.2v4.3h-4.2zM236.4 111.2h4.2v4.3h-4.2zM236.4 129.9h4.2v4.3h-4.2zM236.4 204.9h4.2v4.3h-4.2zM245.8 -1.2h4.2v4.3h-4.2zM245.8 223.6h4.2v4.3h-4.2zM245.8 354.7h4.2v4.3h-4.2zM255.2 55.0h4.2v4.3h-4.2zM255.2 195.5h4.2v4.3h-4.2zM264.5 17.6h4.2v4.3h-4.2zM264.5 420.3h4.2v4.3h-4.2zM283.2 45.7h4.2v4.3h-4.2zM283.2 233.0h4.2v4.3h-4.2zM283.2 345.3h4.2v4.3h-4.2zM283.2 410.9h4.2v4.3h-4.2zM283.2 429.6h4.2v4.3h-4.2zM283.2 448.4h4.2v4.3h-4.2zM292.6 64.4h4.2v4.3h-4.2zM292.6 176.8h4.2v4.3h-4.2zM302.0 233.0h4.2v4.3h-4.2zM302.0 373.4h4.2v4.3h-4.2zM311.3 92.5h4.2v4.3h-4.2zM311.3 317.2h4.2v4.3h-4.2zM311.3 410.9h4.2v4.3h-4.2zM320.7 223.6h4.2v4.3h-4.2zM320.7 251.7h4.2v4.3h-4.2zM320.7 410.9h4.2v4.3h-4.2zM330.1 167.4h4.2v4.3h-4.2zM330.1 298.5h4.2v4.3h-4.2zM339.4 36.3h4.2v4.3h-4.2zM339.4 45.7h4.2v4.3h-4.2zM339.4 139.3h4.2v4.3h-4.2zM339.4 373.4h4.2v4.3h-4.2zM348.8 64.4h4.2v4.3h-4.2zM348.8 101.9h4.2v4.3h-4.2zM348.8 176.8h4.2v4.3h-4.2zM348.8 214.2h4.2v4.3h-4.2zM348.8 251.7h4.2v4.3h-4.2zM358.2 101.9h4.2v4.3h-4.2zM358.2 354.7h4.2v4.3h-4.2zM358.2 429.6h4.2v4.3h-4.2zM367.5 -1.2h4.2v4.3h-4.2zM367.5 270.4h4.2v4.3h-4.2zM367.5 336.0h4.2v4.3h-4.2zM376.9 26.9h4.2v4.3h-4.2zM376.9 307.9h4.2v4.3h-4.2zM386.3 73.8h4.2v4.3h-4.2zM386.3 251.7h4.2v4.3h-4.2zM395.6 111.2h4.2v4.3h-4.2zM395.6 139.3h4.2v4.3h-4.2zM395.6 148.7h4.2v4.3h-4.2zM395.6 279.8h4.2v4.3h-4.2zM405.0 158.0h4.2v4.3h-4.2zM405.0 195.5h4.2v4.3h-4.2zM405.0 204.9h4.2v4.3h-4.2zM405.0 317.2h4.2v4.3h-4.2zM405.0 345.3h4.2v4.3h-4.2zM414.4 83.1h4.2v4.3h-4.2zM414.4 176.8h4.2v4.3h-4.2zM414.4 223.6h4.2v4.3h-4.2zM414.4 270.4h4.2v4.3h-4.2zM414.4 298.5h4.2v4.3h-4.2zM423.7 17.6h4.2v4.3h-4.2zM423.7 298.5h4.2v4.3h-4.2zM423.7 345.3h4.2v4.3h-4.2zM423.7 401.5h4.2v4.3h-4.2zM433.1 45.7h4.2v4.3h-4.2zM433.1 410.9h4.2v4.3h-4.2zM442.5 8.2h4.2v4.3h-4.2zM442.5 55.0h4.2v4.3h-4.2zM442.5 92.5h4.2v4.3h-4.2zM442.5 129.9h4.2v4.3h-4.2zM451.8 83.1h4.2v4.3h-4.2zM451.8 129.9h4.2v4.3h-4.2zM451.8 364.1h4.2v4.3h-4.2zM461.2 111.2h4.2v4.3h-4.2zM461.2 186.1h4.2v4.3h-4.2zM461.2 223.6h4.2v4.3h-4.2zM461.2 251.7h4.2v4.3h-4.2zM461.2 317.2h4.2v4.3h-4.2zM461.2 345.3h4.2v4.3h-4.2zM461.2 364.1h4.2v4.3h-4.2zM461.2 420.3h4.2v4.3h-4.2zM461.2 448.4h4.2v4.3h-4.2z"/><path fill="#81634b" d="M2.3 36.3h4.2v4.3h-4.2zM2.3 64.4h4.2v4.3h-4.2zM2.3 429.6h4.2v4.3h-4.2zM21.0 73.8h4.2v4.3h-4.2zM21.0 467.1h4.2v4.3h-4.2zM30.4 -1.2h4.2v4.3h-4.2zM30.4 17.6h4.2v4.3h-4.2zM30.4 92.5h4.2v4.3h-4.2zM30.4 195.5h4.2v4.3h-4.2zM39.8 204.9h4.2v4.3h-4.2zM39.8 392.2h4.2v4.3h-4.2zM39.8 401.5h4.2v4.3h-4.2zM39.8 410.9h4.2v4.3h-4.2zM49.1 26.9h4.2v4.3h-4.2zM49.1 101.9h4.2v4.3h-4.2zM49.1 158.0h4.2v4.3h-4.2zM49.1 167.4h4.2v4.3h-4.2zM49.1 195.5h4.2v4.3h-4.2zM58.5 17.6h4.2v4.3h-4.2zM58.5 120.6h4.2v4.3h-4.2zM58.5 467.1h4.2v4.3h-4.2zM67.9 73.8h4.2v4.3h-4.2zM67.9 233.0h4.2v4.3h-4.2zM77.2 83.1h4.2v4.3h-4.2zM77.2 101.9h4.2v4.3h-4.2zM77.2 195.5h4.2v4.3h-4.2zM77.2 364.1h4.2v4.3h-4.2zM77.2 373.4h4.2v4.3h-4.2zM86.6 92.5h4.2v4.3h-4.2zM86.6 101.9h4.2v4.3h-4.2zM86.6 392.2h4.2v4.3h-4.2zM95.9 83.1h4.2v4.3h-4.2zM95.9 120.6h4.2v4.3h-4.2zM95.9 467.1h4.2v4.3h-4.2zM105.3 457.7h4.2v4.3h-4.2zM114.7 36.3h4.2v4.3h-4.2zM114.7 279.8h4.2v4.3h-4.2zM114.7 467.1h4.2v4.3h-4.2zM124.0 279.8h4.2v4.3h-4.2zM152.1 129.9h4.2v4.3h-4.2zM161.5 382.8h4.2v4.3h-4.2zM161.5 410.9h4.2v4.3h-4.2zM170.9 167.4h4.2v4.3h-4.2zM180.2 17.6h4.2v4.3h-4.2zM180.2 73.8h4.2v4.3h-4.2zM180.2 92.5h4.2v4.3h-4.2zM180.2 317.2h4.2v4.3h-4.2zM180.2 354.7h4.2v4.3h-4.2zM180.2 457.7h4.2v4.3h-4.2zM189.6 279.8h4.2v4.3h-4.2zM199.0 139.3h4.2v4.3h-4.2zM199.0 242.3h4.2v4.3h-4.2zM208.3 26.9h4.2v4.3h-4.2zM217.7 270.4h4.2v4.3h-4.2zM217.7 354.7h4.2v4.3h-4.2zM227.1 251.7h4.2v4.3h-4.2zM227.1 298.5h4.2v4.3h-4.2zM236.4 55.0h4.2v4.3h-4.2zM236.4 270.4h4.2v4.3h-4.2zM245.8 176.8h4.2v4.3h-4.2zM245.8 214.2h4.2v4.3h-4.2zM245.8 242.3h4.2v4.3h-4.2zM245.8 261.1h4.2v4.3h-4.2zM245.8 289.1h4.2v4.3h-4.2zM255.2 8.2h4.2v4.3h-4.2zM264.5 186.1h4.2v4.3h-4.2zM264.5 317.2h4.2v4.3h-4.2zM273.9 17.6h4.2v4.3h-4.2zM273.9 111.2h4.2v4.3h-4.2zM273.9 204.9h4.2v4.3h-4.2zM273.9 223.6h4.2v4.3h-4.2zM302.0 439.0h4.2v4.3h-4.2zM311.3 45.7h4.2v4.3h-4.2zM311.3 148.7h4.2v4.3h-4.2zM330.1 420.3h4.2v4.3h-4.2zM339.4 345.3h4.2v4.3h-4.2zM339.4 364.1h4.2v4.3h-4.2zM348.8 -1.2h4.2v4.3h-4.2zM348.8 8.2h4.2v4.3h-4.2zM348.8 17.6h4.2v4.3h-4.2zM348.8 158.0h4.2v4.3h-4.2zM348.8 233.0h4.2v4.3h-4.2zM348.8 382.8h4.2v4.3h-4.2zM358.2 26.9h4.2v4.3h-4.2zM358.2 92.5h4.2v4.3h-4.2zM358.2 120.6h4.2v4.3h-4.2zM358.2 261.1h4.2v4.3h-4.2zM358.2 298.5h4.2v4.3h-4.2zM358.2 382.8h4.2v4.3h-4.2zM358.2 410.9h4.2v4.3h-4.2zM367.5 139.3h4.2v4.3h-4.2zM367.5 439.0h4.2v4.3h-4.2zM376.9 448.4h4.2v4.3h-4.2zM376.9 467.1h4.2v4.3h-4.2zM376.9 476.4h4.2v4.3h-4.2zM386.3 64.4h4.2v4.3h-4.2zM386.3 186.1h4.2v4.3h-4.2zM386.3 242.3h4.2v4.3h-4.2zM386.3 336.0h4.2v4.3h-4.2zM386.3 345.3h4.2v4.3h-4.2zM395.6 73.8h4.2v4.3h-4.2zM395.6 167.4h4.2v4.3h-4.2zM405.0 167.4h4.2v4.3h-4.2zM405.0 448.4h4.2v4.3h-4.2zM414.4 92.5h4.2v4.3h-4.2zM414.4 101.9h4.2v4.3h-4.2zM414.4 251.7h4.2v4.3h-4.2zM433.1 26.9h4.2v4.3h-4.2zM433.1 242.3h4.2v4.3h-4.2zM442.5 167.4h4.2v4.3h-4.2zM451.8 242.3h4.2v4.3h-4.2zM461.2 158.0h4.2v4.3h-4.2zM461.2 261.1h4.2v4.3h-4.2zM461.2 326.6h4.2v4.3h-4.2z"/><path fill="#9a9a9a" d="M2.3 55.0h4.2v4.3h-4.2zM2.3 73.8h4.2v4.3h-4.2zM2.3 195.5h4.2v4.3h-4.2zM2.3 307.9h4.2v4.3h-4.2zM2.3 317.2h4.2v4.3h-4.2zM11.7 36.3h4.2v4.3h-4.2zM11.7 167.4h4.2v4.3h-4.2zM11.7 242.3h4.2v4.3h-4.2zM11.7 279.8h4.2v4.3h-4.2zM21.0 17.6h4.2v4.3h-4.2zM21.0 101.9h4.2v4.3h-4.2zM21.0 186.1h4.2v4.3h-4.2zM21.0 233.0h4.2v4.3h-4.2zM21.0 242.3h4.2v4.3h-4.2zM21.0 279.8h4.2v4.3h-4.2zM21.0 448.4h4.2v4.3h-4.2zM30.4 8.2h4.2v4.3h-4.2zM30.4 214.2h4.2v4.3h-4.2zM30.4 223.6h4.2v4.3h-4.2zM39.8 176.8h4.2v4.3h-4.2zM39.8 420.3h4.2v4.3h-4.2zM39.8 448.4h4.2v4.3h-4.2zM58.5 64.4h4.2v4.3h-4.2zM58.5 92.5h4.2v4.3h-4.2zM58.5 129.9h4.2v4.3h-4.2zM58.5 186.1h4.2v4.3h-4.2zM58.5 307.9h4.2v4.3h-4.2zM67.9 17.6h4.2v4.3h-4.2zM67.9 101.9h4.2v4.3h-4.2zM67.9 120.6h4.2v4.3h-4.2zM67.9 317.2h4.2v4.3h-4.2zM77.2 55.0h4.2v4.3h-4.2zM77.2 111.2h4.2v4.3h-4.2zM77.2 148.7h4.2v4.3h-4.2zM77.2 158.0h4.2v4.3h-4.2zM77.2 298.5h4.2v4.3h-4.2zM77.2 457.7h4.2v4.3h-4.2zM86.6 64.4h4.2v4.3h-4.2zM86.6 326.6h4.2v4.3h-4.2zM86.6 336.0h4.2v4.3h-4.2zM86.6 467.1h4.2v4.3h-4.2zM95.9 176.8h4.2v4.3h-4.2zM95.9 186.1h4.2v4.3h-4.2zM95.9 261.1h4.2v4.3h-4.2zM95.9 401.5h4.2v4.3h-4.2zM105.3 83.1h4.2v4.3h-4.2zM105.3 139.3h4.2v4.3h-4.2zM114.7 -1.2h4.2v4.3h-4.2zM114.7 139.3h4.2v4.3h-4.2zM114.7 148.7h4.2v4.3h-4.2zM114.7 195.5h4.2v4.3h-4.2zM114.7 354.7h4.2v4.3h-4.2zM124.0 26.9h4.2v4.3h-4.2zM124.0 139.3h4.2v4.3h-4.2zM124.0 214.2h4.2v4.3h-4.2zM124.0 476.4h4.2v4.3h-4.2zM133.4 -1.2h4.2v4.3h-4.2zM133.4 101.9h4.2v4.3h-4.2zM133.4 158.0h4.2v4.3h-4.2zM133.4 261.1h4.2v4.3h-4.2zM133.4 326.6h4.2v4.3h-4.2zM133.4 364.1h4.2v4.3h-4.2zM133.4 373.4h4.2v4.3h-4.2zM133.4 382.8h4.2v4.3h-4.2zM142.8 17.6h4.2v4.3h-4.2zM142.8 64.4h4.2v4.3h-4.2zM142.8 289.1h4.2v4.3h-4.2zM142.8 298.5h4.2v4.3h-4.2zM152.1 223.6h4.2v4.3h-4.2zM152.1 448.4h4.2v4.3h-4.2zM161.5 36.3h4.2v4.3h-4.2zM161.5 242.3h4.2v4.3h-4.2zM161.5 317.2h4.2v4.3h-4.2zM170.9 26.9h4.2v4.3h-4.2zM170.9 223.6h4.2v4.3h-4.2zM170.9 251.7h4.2v4.3h-4.2zM170.9 373.4h4.2v4.3h-4.2zM180.2 26.9h4.2v4.3h-4.2zM180.2 83.1h4.2v4.3h-4.2zM180.2 373.4h4.2v4.3h-4.2zM189.6 158.0h4.2v4.3h-4.2zM189.6 233.0h4.2v4.3h-4.2zM189.6 242.3h4.2v4.3h-4.2zM189.6 326.6h4.2v4.3h-4.2zM189.6 336.0h4.2v4.3h-4.2zM199.0 36.3h4.2v4.3h-4.2zM199.0 129.9h4.2v4.3h-4.2zM199.0 167.4h4.2v4.3h-4.2zM199.0 186.1h4.2v4.3h-4.2zM199.0 298.5h4.2v4.3h-4.2zM199.0 336.0h4.2v4.3h-4.2zM199.0 420.3h4.2v4.3h-4.2zM208.3 83.1h4.2v4.3h-4.2zM208.3 345.3h4.2v4.3h-4.2zM208.3 392.2h4.2v4.3h-4.2zM208.3 401.5h4.2v4.3h-4.2zM217.7 83.1h4.2v4.3h-4.2zM217.7 204.9h4.2v4.3h-4.2zM217.7 298.5h4.2v4.3h-4.2zM217.7 410.9h4.2v4.3h-4.2zM217.7 448.4h4.2v4.3h-4.2zM227.1 214.2h4.2v4.3h-4.2zM236.4 233.0h4.2v4.3h-4.2zM245.8 167.4h4.2v4.3h-4.2zM245.8 382.8h4.2v4.3h-4.2zM245.8 410.9h4.2v4.3h-4.2zM255.2 279.8h4.2v4.3h-4.2zM255.2 392.2h4.2v4.3h-4.2zM255.2 457.7h4.2v4.3h-4.2zM255.2 467.1h4.2v4.3h-4.2zM264.5 270.4h4.2v4.3h-4.2zM264.5 336.0h4.2v4.3h-4.2zM264.5 448.4h4.2v4.3h-4.2zM273.9 45.7h4.2v4.3h-4.2zM273.9 317.2h4.2v4.3h-4.2zM273.9 354.7h4.2v4.3h-4.2zM273.9 373.4h4.2v4.3h-4.2zM283.2 64.4h4.2v4.3h-4.2zM283.2 204.9h4.2v4.3h-4.2zM283.2 223.6h4.2v4.3h-4.2zM283.2 279.8h4.2v4.3h-4.2zM283.2 382.8h4.2v4.3h-4.2zM283.2 392.2h4.2v4.3h-4.2zM283.2 457.7h4.2v4.3h-4.2zM292.6 17.6h4.2v4.3h-4.2zM292.6 139.3h4.2v4.3h-4.2zM292.6 148.7h4.2v4.3h-4.2zM292.6 233.0h4.2v4.3h-4.2zM292.6 392.2h4.2v4.3h-4.2zM302.0 73.8h4.2v4.3h-4.2zM302.0 129.9h4.2v4.3h-4.2zM311.3 64.4h4.2v4.3h-4.2zM311.3 158.0h4.2v4.3h-4.2zM311.3 167.4h4.2v4.3h-4.2zM311.3 289.1h4.2v4.3h-4.2zM311.3 326.6h4.2v4.3h-4.2zM311.3 382.8h4.2v4.3h-4.2zM320.7 45.7h4.2v4.3h-4.2zM320.7 101.9h4.2v4.3h-4.2zM320.7 148.7h4.2v4.3h-4.2zM320.7 307.9h4.2v4.3h-4.2zM320.7 336.0h4.2v4.3h-4.2zM330.1 26.9h4.2v4.3h-4.2zM330.1 186.1h4.2v4.3h-4.2zM330.1 326.6h4.2v4.3h-4.2zM330.1 364.1h4.2v4.3h-4.2zM330.1 401.5h4.2v4.3h-4.2zM339.4 176.8h4.2v4.3h-4.2zM339.4 233.0h4.2v4.3h-4.2zM339.4 336.0h4.2v4.3h-4.2zM339.4 448.4h4.2v4.3h-4.2zM348.8 26.9h4.2v4.3h-4.2zM348.8 92.5h4.2v4.3h-4.2zM348.8 129.9h4.2v4.3h-4.2zM348.8 204.9h4.2v4.3h-4.2zM358.2 17.6h4.2v4.3h-4.2zM358.2 129.9h4.2v4.3h-4.2zM358.2 214.2h4.2v4.3h-4.2zM367.5 167.4h4.2v4.3h-4.2zM367.5 298.5h4.2v4.3h-4.2zM376.9 45.7h4.2v4.3h-4.2zM376.9 392.2h4.2v4.3h-4.2zM376.9 401.5h4.2v4.3h-4.2zM386.3 420.3h4.2v4.3h-4.2zM386.3 467.1h4.2v4.3h-4.2zM395.6 204.9h4.2v4.3h-4.2zM395.6 214.2h4.2v4.3h-4.2zM395.6 336.0h4.2v4.3h-4.2zM395.6 401.5h4.2v4.3h-4.2zM405.0 270.4h4.2v4.3h-4.2zM414.4 392.2h4.2v4.3h-4.2zM423.7 55.0h4.2v4.3h-4.2zM423.7 64.4h4.2v4.3h-4.2zM423.7 111.2h4.2v4.3h-4.2zM423.7 214.2h4.2v4.3h-4.2zM423.7 251.7h4.2v4.3h-4.2zM423.7 279.8h4.2v4.3h-4.2zM433.1 -1.2h4.2v4.3h-4.2zM433.1 64.4h4.2v4.3h-4.2zM433.1 148.7h4.2v4.3h-4.2zM433.1 448.4h4.2v4.3h-4.2zM442.5 64.4h4.2v4.3h-4.2zM442.5 176.8h4.2v4.3h-4.2zM442.5 261.1h4.2v4.3h-4.2zM442.5 457.7h4.2v4.3h-4.2zM451.8 139.3h4.2v4.3h-4.2zM451.8 176.8h4.2v4.3h-4.2zM451.8 457.7h4.2v4.3h-4.2zM461.2 73.8h4.2v4.3h-4.2z"/><path fill="#73ad6a" d="M2.3 83.1h4.2v4.3h-4.2zM2.3 111.2h4.2v4.3h-4.2zM2.3 176.8h4.2v4.3h-4.2zM2.3 289.1h4.2v4.3h-4.2zM2.3 345.3h4.2v4.3h-4.2zM11.7 -1.2h4.2v4.3h-4.2zM11.7 223.6h4.2v4.3h-4.2zM11.7 317.2h4.2v4.3h-4.2zM11.7 401.5h4.2v4.3h-4.2zM21.0 26.9h4.2v4.3h-4.2zM21.0 148.7h4.2v4.3h-4.2zM21.0 158.0h4.2v4.3h-4.2zM39.8 26.9h4.2v4.3h-4.2zM39.8 36.3h4.2v4.3h-4.2zM39.8 223.6h4.2v4.3h-4.2zM39.8 307.9h4.2v4.3h-4.2zM39.8 373.4h4.2v4.3h-4.2zM49.1 448.4h4.2v4.3h-4.2zM58.5 8.2h4.2v4.3h-4.2zM58.5 223.6h4.2v4.3h-4.2zM58.5 326.6h4.2v4.3h-4.2zM67.9 195.5h4.2v4.3h-4.2zM67.9 223.6h4.2v4.3h-4.2zM67.9 298.5h4.2v4.3h-4.2zM77.2 64.4h4.2v4.3h-4.2zM77.2 139.3h4.2v4.3h-4.2zM77.2 242.3h4.2v4.3h-4.2zM86.6 214.2h4.2v4.3h-4.2zM95.9 336.0h4.2v4.3h-4.2zM95.9 345.3h4.2v4.3h-4.2zM95.9 382.8h4.2v4.3h-4.2zM105.3 -1.2h4.2v4.3h-4.2zM105.3 251.7h4.2v4.3h-4.2zM105.3 439.0h4.2v4.3h-4.2zM105.3 448.4h4.2v4.3h-4.2zM105.3 467.1h4.2v4.3h-4.2zM114.7 92.5h4.2v4.3h-4.2zM114.7 204.9h4.2v4.3h-4.2zM124.0 -1.2h4.2v4.3h-4.2zM124.0 167.4h4.2v4.3h-4.2zM124.0 233.0h4.2v4.3h-4.2zM124.0 401.5h4.2v4.3h-4.2zM124.0 439.0h4.2v4.3h-4.2zM133.4 8.2h4.2v4.3h-4.2zM133.4 120.6h4.2v4.3h-4.2zM133.4 129.9h4.2v4.3h-4.2zM133.4 251.7h4.2v4.3h-4.2zM133.4 279.8h4.2v4.3h-4.2zM133.4 336.0h4.2v4.3h-4.2zM142.8 111.2h4.2v4.3h-4.2zM142.8 129.9h4.2v4.3h-4.2zM142.8 420.3h4.2v4.3h-4.2zM152.1 26.9h4.2v4.3h-4.2zM152.1 111.2h4.2v4.3h-4.2zM152.1 289.1h4.2v4.3h-4.2zM161.5 55.0h4.2v4.3h-4.2zM161.5 111.2h4.2v4.3h-4.2zM161.5 176.8h4.2v4.3h-4.2zM161.5 261.1h4.2v4.3h-4.2zM161.5 279.8h4.2v4.3h-4.2zM161.5 373.4h4.2v4.3h-4.2zM170.9 45.7h4.2v4.3h-4.2zM170.9 111.2h4.2v4.3h-4.2zM170.9 158.0h4.2v4.3h-4.2zM170.9 176.8h4.2v4.3h-4.2zM170.9 317.2h4.2v4.3h-4.2zM170.9 336.0h4.2v4.3h-4.2zM170.9 476.4h4.2v4.3h-4.2zM180.2 101.9h4.2v4.3h-4.2zM189.6 64.4h4.2v4.3h-4.2zM189.6 270.4h4.2v4.3h-4.2zM199.0 17.6h4.2v4.3h-4.2zM199.0 148.7h4.2v4.3h-4.2zM217.7 195.5h4.2v4.3h-4.2zM217.7 307.9h4.2v4.3h-4.2zM227.1 167.4h4.2v4.3h-4.2zM227.1 176.8h4.2v4.3h-4.2zM227.1 261.1h4.2v4.3h-4.2zM236.4 139.3h4.2v4.3h-4.2zM236.4 223.6h4.2v4.3h-4.2zM236.4 242.3h4.2v4.3h-4.2zM236.4 317.2h4.2v4.3h-4.2zM236.4 345.3h4.2v4.3h-4.2zM236.4 373.4h4.2v4.3h-4.2zM245.8 8.2h4.2v4.3h-4.2zM245.8 55.0h4.2v4.3h-4.2zM245.8 83.1h4.2v4.3h-4.2zM245.8 139.3h4.2v4.3h-4.2zM245.8 298.5h4.2v4.3h-4.2zM245.8 336.0h4.2v4.3h-4.2zM245.8 401.5h4.2v4.3h-4.2zM245.8 420.3h4.2v4.3h-4.2zM245.8 429.6h4.2v4.3h-4.2zM255.2 36.3h4.2v4.3h-4.2zM255.2 242.3h4.2v4.3h-4.2zM255.2 261.1h4.2v4.3h-4.2zM255.2 336.0h4.2v4.3h-4.2zM264.5 392.2h4.2v4.3h-4.2zM264.5 401.5h4.2v4.3h-4.2zM273.9 148.7h4.2v4.3h-4.2zM273.9 195.5h4.2v4.3h-4.2zM283.2 158.0h4.2v4.3h-4.2zM283.2 176.8h4.2v4.3h-4.2zM283.2 289.1h4.2v4.3h-4.2zM283.2 336.0h4.2v4.3h-4.2zM292.6 326.6h4.2v4.3h-4.2zM292.6 336.0h4.2v4.3h-4.2zM302.0 -1.2h4.2v4.3h-4.2zM302.0 17.6h4.2v4.3h-4.2zM302.0 92.5h4.2v4.3h-4.2zM311.3 36.3h4.2v4.3h-4.2zM311.3 83.1h4.2v4.3h-4.2zM311.3 233.0h4.2v4.3h-4.2zM311.3 401.5h4.2v4.3h-4.2zM311.3 476.4h4.2v4.3h-4.2zM330.1 83.1h4.2v4.3h-4.2zM339.4 158.0h4.2v4.3h-4.2zM339.4 317.2h4.2v4.3h-4.2zM339.4 429.6h4.2v4.3h-4.2zM348.8 261.1h4.2v4.3h-4.2zM348.8 354.7h4.2v4.3h-4.2zM348.8 364.1h4.2v4.3h-4.2zM348.8 392.2h4.2v4.3h-4.2zM358.2 64.4h4.2v4.3h-4.2zM358.2 111.2h4.2v4.3h-4.2zM358.2 307.9h4.2v4.3h-4.2zM358.2 457.7h4.2v4.3h-4.2zM367.5 148.7h4.2v4.3h-4.2zM367.5 307.9h4.2v4.3h-4.2zM376.9 101.9h4.2v4.3h-4.2zM376.9 139.3h4.2v4.3h-4.2zM376.9 186.1h4.2v4.3h-4.2zM376.9 204.9h4.2v4.3h-4.2zM376.9 373.4h4.2v4.3h-4.2zM386.3 8.2h4.2v4.3h-4.2zM386.3 83.1h4.2v4.3h-4.2zM386.3 92.5h4.2v4.3h-4.2zM386.3 307.9h4.2v4.3h-4.2zM386.3 429.6h4.2v4.3h-4.2zM395.6 101.9h4.2v4.3h-4.2zM395.6 326.6h4.2v4.3h-4.2zM405.0 26.9h4.2v4.3h-4.2zM405.0 176.8h4.2v4.3h-4.2zM405.0 186.1h4.2v4.3h-4.2zM405.0 410.9h4.2v4.3h-4.2zM414.4 129.9h4.2v4.3h-4.2zM414.4 167.4h4.2v4.3h-4.2zM414.4 326.6h4.2v4.3h-4.2zM414.4 429.6h4.2v4.3h-4.2zM423.7 101.9h4.2v4.3h-4.2zM423.7 364.1h4.2v4.3h-4.2zM423.7 420.3h4.2v4.3h-4.2zM433.1 17.6h4.2v4.3h-4.2zM433.1 167.4h4.2v4.3h-4.2zM442.5 148.7h4.2v4.3h-4.2zM451.8 214.2h4.2v4.3h-4.2zM451.8 251.7h4.2v4.3h-4.2zM461.2 129.9h4.2v4.3h-4.2zM461.2 148.7h4.2v4.3h-4.2zM461.2 176.8h4.2v4.3h-4.2zM461.2 354.7h4.2v4.3h-4.2zM461.2 467.1h4.2v4.3h-4.2z"/><path fill="#385454" d="M2.3 120.6h4.2v4.3h-4.2zM2.3 204.9h4.2v4.3h-4.2zM11.7 129.9h4.2v4.3h-4.2zM11.7 382.8h4.2v4.3h-4.2zM21.0 354.7h4.2v4.3h-4.2zM21.0 429.6h4.2v4.3h-4.2zM30.4 36.3h4.2v4.3h-4.2zM30.4 148.7h4.2v4.3h-4.2zM30.4 373.4h4.2v4.3h-4.2zM39.8 120.6h4.2v4.3h-4.2zM39.8 242.3h4.2v4.3h-4.2zM49.1 279.8h4.2v4.3h-4.2zM49.1 476.4h4.2v4.3h-4.2zM58.5 382.8h4.2v4.3h-4.2zM58.5 401.5h4.2v4.3h-4.2zM67.9 214.2h4.2v4.3h-4.2zM67.9 270.4h4.2v4.3h-4.2zM67.9 382.8h4.2v4.3h-4.2zM77.2 307.9h4.2v4.3h-4.2zM77.2 382.8h4.2v4.3h-4.2zM77.2 401.5h4.2v4.3h-4.2zM86.6 8.2h4.2v4.3h-4.2zM95.9 251.7h4.2v4.3h-4.2zM95.9 279.8h4.2v4.3h-4.2zM95.9 420.3h4.2v4.3h-4.2zM114.7 55.0h4.2v4.3h-4.2zM114.7 120.6h4.2v4.3h-4.2zM114.7 233.0h4.2v4.3h-4.2zM142.8 457.7h4.2v4.3h-4.2zM152.1 -1.2h4.2v4.3h-4.2zM152.1 204.9h4.2v4.3h-4.2zM152.1 298.5h4.2v4.3h-4.2zM161.5 186.1h4.2v4.3h-4.2zM170.9 120.6h4.2v4.3h-4.2zM170.9 129.9h4.2v4.3h-4.2zM170.9 261.1h4.2v4.3h-4.2zM180.2 129.9h4.2v4.3h-4.2zM199.0 345.3h4.2v4.3h-4.2zM199.0 457.7h4.2v4.3h-4.2zM208.3 233.0h4.2v4.3h-4.2zM208.3 251.7h4.2v4.3h-4.2zM217.7 26.9h4.2v4.3h-4.2zM217.7 92.5h4.2v4.3h-4.2zM217.7 279.8h4.2v4.3h-4.2zM217.7 373.4h4.2v4.3h-4.2zM227.1 26.9h4.2v4.3h-4.2zM227.1 364.1h4.2v4.3h-4.2zM236.4 8.2h4.2v4.3h-4.2zM236.4 429.6h4.2v4.3h-4.2zM245.8 279.8h4.2v4.3h-4.2zM255.2 204.9h4.2v4.3h-4.2zM255.2 223.6h4.2v4.3h-4.2zM255.2 382.8h4.2v4.3h-4.2zM255.2 401.5h4.2v4.3h-4.2zM255.2 439.0h4.2v4.3h-4.2zM264.5 158.0h4.2v4.3h-4.2zM264.5 326.6h4.2v4.3h-4.2zM264.5 345.3h4.2v4.3h-4.2zM264.5 382.8h4.2v4.3h-4.2zM273.9 83.1h4.2v4.3h-4.2zM273.9 167.4h4.2v4.3h-4.2zM273.9 186.1h4.2v4.3h-4.2zM283.2 439.0h4.2v4.3h-4.2zM292.6 45.7h4.2v4.3h-4.2zM292.6 214.2h4.2v4.3h-4.2zM292.6 420.3h4.2v4.3h-4.2zM292.6 457.7h4.2v4.3h-4.2zM302.0 139.3h4.2v4.3h-4.2zM302.0 158.0h4.2v4.3h-4.2zM302.0 186.1h4.2v4.3h-4.2zM311.3 186.1h4.2v4.3h-4.2zM320.7 92.5h4.2v4.3h-4.2zM320.7 373.4h4.2v4.3h-4.2zM320.7 429.6h4.2v4.3h-4.2zM330.1 111.2h4.2v4.3h-4.2zM330.1 410.9h4.2v4.3h-4.2zM339.4 204.9h4.2v4.3h-4.2zM339.4 214.2h4.2v4.3h-4.2zM339.4 289.1h4.2v4.3h-4.2zM339.4 401.5h4.2v4.3h-4.2zM348.8 186.1h4.2v4.3h-4.2zM348.8 289.1h4.2v4.3h-4.2zM348.8 373.4h4.2v4.3h-4.2zM358.2 8.2h4.2v4.3h-4.2zM367.5 17.6h4.2v4.3h-4.2zM367.5 186.1h4.2v4.3h-4.2zM367.5 420.3h4.2v4.3h-4.2zM376.9 233.0h4.2v4.3h-4.2zM376.9 336.0h4.2v4.3h-4.2zM376.9 345.3h4.2v4.3h-4.2zM395.6 -1.2h4.2v4.3h-4.2zM395.6 420.3h4.2v4.3h-4.2zM405.0 336.0h4.2v4.3h-4.2zM405.0 364.1h4.2v4.3h-4.2zM414.4 195.5h4.2v4.3h-4.2zM414.4 364.1h4.2v4.3h-4.2zM414.4 467.1h4.2v4.3h-4.2zM423.7 148.7h4.2v4.3h-4.2zM423.7 223.6h4.2v4.3h-4.2zM423.7 261.1h4.2v4.3h-4.2zM423.7 382.8h4.2v4.3h-4.2zM423.7 457.7h4.2v4.3h-4.2zM433.1 401.5h4.2v4.3h-4.2zM442.5 279.8h4.2v4.3h-4.2zM442.5 317.2h4.2v4.3h-4.2zM442.5 354.7h4.2v4.3h-4.2zM442.5 439.0h4.2v4.3h-4.2zM451.8 186.1h4.2v4.3h-4.2zM451.8 195.5h4.2v4.3h-4.2zM451.8 410.9h4.2v4.3h-4.2zM461.2 233.0h4.2v4.3h-4.2zM461.2 382.8h4.2v4.3h-4.2zM461.2 457.7h4.2v4.3h-4.2z"/><path fill="#549552" d="M2.3 139.3h4.2v4.3h-4.2zM2.3 214.2h4.2v4.3h-4.2zM2.3 382.8h4.2v4.3h-4.2zM2.3 410.9h4.2v4.3h-4.2zM2.3 457.7h4.2v4.3h-4.2zM11.7 214.2h4.2v4.3h-4.2zM11.7 307.9h4.2v4.3h-4.2zM11.7 392.2h4.2v4.3h-4.2zM11.7 457.7h4.2v4.3h-4.2zM11.7 467.1h4.2v4.3h-4.2zM21.0 8.2h4.2v4.3h-4.2zM21.0 317.2h4.2v4.3h-4.2zM21.0 420.3h4.2v4.3h-4.2zM30.4 55.0h4.2v4.3h-4.2zM30.4 120.6h4.2v4.3h-4.2zM30.4 186.1h4.2v4.3h-4.2zM30.4 233.0h4.2v4.3h-4.2zM30.4 242.3h4.2v4.3h-4.2zM30.4 317.2h4.2v4.3h-4.2zM30.4 326.6h4.2v4.3h-4.2zM39.8 261.1h4.2v4.3h-4.2zM39.8 270.4h4.2v4.3h-4.2zM39.8 279.8h4.2v4.3h-4.2zM39.8 298.5h4.2v4.3h-4.2zM49.1 73.8h4.2v4.3h-4.2zM49.1 83.1h4.2v4.3h-4.2zM49.1 251.7h4.2v4.3h-4.2zM49.1 326.6h4.2v4.3h-4.2zM49.1 429.6h4.2v4.3h-4.2zM58.5 176.8h4.2v4.3h-4.2zM58.5 204.9h4.2v4.3h-4.2zM58.5 251.7h4.2v4.3h-4.2zM58.5 448.4h4.2v4.3h-4.2zM58.5 476.4h4.2v4.3h-4.2zM67.9 64.4h4.2v4.3h-4.2zM67.9 111.2h4.2v4.3h-4.2zM67.9 354.7h4.2v4.3h-4.2zM67.9 410.9h4.2v4.3h-4.2zM67.9 420.3h4.2v4.3h-4.2zM67.9 429.6h4.2v4.3h-4.2zM67.9 467.1h4.2v4.3h-4.2zM77.2 17.6h4.2v4.3h-4.2zM77.2 120.6h4.2v4.3h-4.2zM77.2 167.4h4.2v4.3h-4.2zM77.2 176.8h4.2v4.3h-4.2zM77.2 448.4h4.2v4.3h-4.2zM86.6 139.3h4.2v4.3h-4.2zM86.6 158.0h4.2v4.3h-4.2zM86.6 289.1h4.2v4.3h-4.2zM86.6 345.3h4.2v4.3h-4.2zM86.6 382.8h4.2v4.3h-4.2zM95.9 26.9h4.2v4.3h-4.2zM95.9 148.7h4.2v4.3h-4.2zM95.9 214.2h4.2v4.3h-4.2zM95.9 326.6h4.2v4.3h-4.2zM95.9 392.2h4.2v4.3h-4.2zM95.9 429.6h4.2v4.3h-4.2zM95.9 448.4h4.2v4.3h-4.2zM95.9 457.7h4.2v4.3h-4.2zM105.3 129.9h4.2v4.3h-4.2zM105.3 186.1h4.2v4.3h-4.2zM105.3 214.2h4.2v4.3h-4.2zM105.3 233.0h4.2v4.3h-4.2zM105.3 307.9h4.2v4.3h-4.2zM105.3 392.2h4.2v4.3h-4.2zM105.3 401.5h4.2v4.3h-4.2zM114.7 8.2h4.2v4.3h-4.2zM114.7 73.8h4.2v4.3h-4.2zM114.7 83.1h4.2v4.3h-4.2zM114.7 251.7h4.2v4.3h-4.2zM114.7 373.4h4.2v4.3h-4.2zM114.7 401.5h4.2v4.3h-4.2zM114.7 420.3h4.2v4.3h-4.2zM124.0 8.2h4.2v4.3h-4.2zM124.0 36.3h4.2v4.3h-4.2zM124.0 92.5h4.2v4.3h-4.2zM124.0 101.9h4.2v4.3h-4.2zM124.0 176.8h4.2v4.3h-4.2zM124.0 204.9h4.2v4.3h-4.2zM124.0 326.6h4.2v4.3h-4.2zM124.0 336.0h4.2v4.3h-4.2zM124.0 354.7h4.2v4.3h-4.2zM124.0 392.2h4.2v4.3h-4.2zM133.4 167.4h4.2v4.3h-4.2zM133.4 401.5h4.2v4.3h-4.2zM133.4 439.0h4.2v4.3h-4.2zM133.4 467.1h4.2v4.3h-4.2zM142.8 8.2h4.2v4.3h-4.2zM142.8 73.8h4.2v4.3h-4.2zM142.8 120.6h4.2v4.3h-4.2zM142.8 279.8h4.2v4.3h-4.2zM142.8 354.7h4.2v4.3h-4.2zM142.8 410.9h4.2v4.3h-4.2zM152.1 8.2h4.2v4.3h-4.2zM152.1 55.0h4.2v4.3h-4.2zM152.1 64.4h4.2v4.3h-4.2zM152.1 139.3h4.2v4.3h-4.2zM152.1 233.0h4.2v4.3h-4.2zM152.1 317.2h4.2v4.3h-4.2zM152.1 373.4h4.2v4.3h-4.2zM152.1 410.9h4.2v4.3h-4.2zM161.5 120.6h4.2v4.3h-4.2zM161.5 401.5h4.2v4.3h-4.2zM170.9 101.9h4.2v4.3h-4.2zM170.9 148.7h4.2v4.3h-4.2zM170.9 195.5h4.2v4.3h-4.2zM170.9 401.5h4.2v4.3h-4.2zM180.2 289.1h4.2v4.3h-4.2zM180.2 345.3h4.2v4.3h-4.2zM189.6 83.1h4.2v4.3h-4.2zM189.6 176.8h4.2v4.3h-4.2zM189.6 307.9h4.2v4.3h-4.2zM189.6 373.4h4.2v4.3h-4.2zM189.6 448.4h4.2v4.3h-4.2zM199.0 26.9h4.2v4.3h-4.2zM199.0 111.2h4.2v4.3h-4.2zM199.0 158.0h4.2v4.3h-4.2zM199.0 289.1h4.2v4.3h-4.2zM199.0 392.2h4.2v4.3h-4.2zM199.0 410.9h4.2v4.3h-4.2zM199.0 476.4h4.2v4.3h-4.2zM208.3 36.3h4.2v4.3h-4.2zM208.3 92.5h4.2v4.3h-4.2zM208.3 101.9h4.2v4.3h-4.2zM208.3 167.4h4.2v4.3h-4.2zM217.7 139.3h4.2v4.3h-4.2zM217.7 214.2h4.2v4.3h-4.2zM217.7 223.6h4.2v4.3h-4.2zM227.1 36.3h4.2v4.3h-4.2zM227.1 55.0h4.2v4.3h-4.2zM227.1 233.0h4.2v4.3h-4.2zM227.1 279.8h4.2v4.3h-4.2zM227.1 457.7h4.2v4.3h-4.2zM227.1 476.4h4.2v4.3h-4.2zM236.4 36.3h4.2v4.3h-4.2zM236.4 382.8h4.2v4.3h-4.2zM245.8 45.7h4.2v4.3h-4.2zM245.8 392.2h4.2v4.3h-4.2zM245.8 457.7h4.2v4.3h-4.2zM245.8 467.1h4.2v4.3h-4.2zM255.2 17.6h4.2v4.3h-4.2zM255.2 111.2h4.2v4.3h-4.2zM255.2 176.8h4.2v4.3h-4.2zM255.2 233.0h4.2v4.3h-4.2zM255.2 251.7h4.2v4.3h-4.2zM255.2 298.5h4.2v4.3h-4.2zM255.2 307.9h4.2v4.3h-4.2zM255.2 317.2h4.2v4.3h-4.2zM264.5 8.2h4.2v4.3h-4.2zM264.5 36.3h4.2v4.3h-4.2zM264.5 233.0h4.2v4.3h-4.2zM264.5 242.3h4.2v4.3h-4.2zM273.9 176.8h4.2v4.3h-4.2zM273.9 214.2h4.2v4.3h-4.2zM273.9 279.8h4.2v4.3h-4.2zM273.9 364.1h4.2v4.3h-4.2zM283.2 139.3h4.2v4.3h-4.2zM283.2 148.7h4.2v4.3h-4.2zM283.2 476.4h4.2v4.3h-4.2zM292.6 111.2h4.2v4.3h-4.2zM292.6 382.8h4.2v4.3h-4.2zM302.0 64.4h4.2v4.3h-4.2zM302.0 83.1h4.2v4.3h-4.2zM302.0 176.8h4.2v4.3h-4.2zM302.0 289.1h4.2v4.3h-4.2zM302.0 336.0h4.2v4.3h-4.2zM302.0 401.5h4.2v4.3h-4.2zM311.3 214.2h4.2v4.3h-4.2zM311.3 279.8h4.2v4.3h-4.2zM311.3 429.6h4.2v4.3h-4.2zM320.7 36.3h4.2v4.3h-4.2zM320.7 55.0h4.2v4.3h-4.2zM320.7 195.5h4.2v4.3h-4.2zM320.7 242.3h4.2v4.3h-4.2zM320.7 279.8h4.2v4.3h-4.2zM320.7 354.7h4.2v4.3h-4.2zM330.1 17.6h4.2v4.3h-4.2zM330.1 73.8h4.2v4.3h-4.2zM330.1 101.9h4.2v4.3h-4.2zM330.1 233.0h4.2v4.3h-4.2zM330.1 242.3h4.2v4.3h-4.2zM330.1 307.9h4.2v4.3h-4.2zM330.1 345.3h4.2v4.3h-4.2zM330.1 457.7h4.2v4.3h-4.2zM339.4 73.8h4.2v4.3h-4.2zM339.4 270.4h4.2v4.3h-4.2zM348.8 45.7h4.2v4.3h-4.2zM348.8 73.8h4.2v4.3h-4.2zM348.8 242.3h4.2v4.3h-4.2zM348.8 429.6h4.2v4.3h-4.2zM358.2 55.0h4.2v4.3h-4.2zM358.2 233.0h4.2v4.3h-4.2zM358.2 251.7h4.2v4.3h-4.2zM358.2 289.1h4.2v4.3h-4.2zM358.2 326.6h4.2v4.3h-4.2zM358.2 392.2h4.2v4.3h-4.2zM358.2 448.4h4.2v4.3h-4.2zM358.2 467.1h4.2v4.3h-4.2zM358.2 476.4h4.2v4.3h-4.2zM367.5 120.6h4.2v4.3h-4.2zM367.5 129.9h4.2v4.3h-4.2zM367.5 195.5h4.2v4.3h-4.2zM367.5 223.6h4.2v4.3h-4.2zM367.5 242.3h4.2v4.3h-4.2zM367.5 345.3h4.2v4.3h-4.2zM376.9 176.8h4.2v4.3h-4.2zM376.9 270.4h4.2v4.3h-4.2zM386.3 326.6h4.2v4.3h-4.2zM395.6 55.0h4.2v4.3h-4.2zM395.6 270.4h4.2v4.3h-4.2zM395.6 392.2h4.2v4.3h-4.2zM395.6 457.7h4.2v4.3h-4.2zM405.0 17.6h4.2v4.3h-4.2zM405.0 45.7h4.2v4.3h-4.2zM405.0 92.5h4.2v4.3h-4.2zM405.0 139.3h4.2v4.3h-4.2zM405.0 233.0h4.2v4.3h-4.2zM405.0 251.7h4.2v4.3h-4.2zM405.0 261.1h4.2v4.3h-4.2zM405.0 326.6h4.2v4.3h-4.2zM405.0 457.7h4.2v4.3h-4.2zM414.4 8.2h4.2v4.3h-4.2zM414.4 45.7h4.2v4.3h-4.2zM414.4 111.2h4.2v4.3h-4.2zM414.4 261.1h4.2v4.3h-4.2zM414.4 289.1h4.2v4.3h-4.2zM414.4 317.2h4.2v4.3h-4.2zM414.4 382.8h4.2v4.3h-4.2zM414.4 457.7h4.2v4.3h-4.2zM423.7 92.5h4.2v4.3h-4.2zM423.7 176.8h4.2v4.3h-4.2zM423.7 242.3h4.2v4.3h-4.2zM423.7 289.1h4.2v4.3h-4.2zM423.7 392.2h4.2v4.3h-4.2zM433.1 92.5h4.2v4.3h-4.2zM433.1 139.3h4.2v4.3h-4.2zM433.1 223.6h4.2v4.3h-4.2zM433.1 233.0h4.2v4.3h-4.2zM433.1 279.8h4.2v4.3h-4.2zM433.1 420.3h4.2v4.3h-4.2zM433.1 457.7h4.2v4.3h-4.2zM442.5 233.0h4.2v4.3h-4.2zM442.5 242.3h4.2v4.3h-4.2zM442.5 289.1h4.2v4.3h-4.2zM442.5 448.4h4.2v4.3h-4.2zM451.8 64.4h4.2v4.3h-4.2zM451.8 223.6h4.2v4.3h-4.2zM451.8 317.2h4.2v4.3h-4.2zM461.2 -1.2h4.2v4.3h-4.2zM461.2 45.7h4.2v4.3h-4.2zM461.2 242.3h4.2v4.3h-4.2zM461.2 270.4h4.2v4.3h-4.2zM461.2 298.5h4.2v4.3h-4.2z"/><path fill="#b49882" d="M2.3 148.7h4.2v4.3h-4.2zM11.7 101.9h4.2v4.3h-4.2zM21.0 -1.2h4.2v4.3h-4.2zM21.0 83.1h4.2v4.3h-4.2zM21.0 298.5h4.2v4.3h-4.2zM30.4 354.7h4.2v4.3h-4.2zM49.1 148.7h4.2v4.3h-4.2zM58.5 111.2h4.2v4.3h-4.2zM77.2 326.6h4.2v4.3h-4.2zM86.6 26.9h4.2v4.3h-4.2zM86.6 36.3h4.2v4.3h-4.2zM86.6 251.7h4.2v4.3h-4.2zM95.9 364.1h4.2v4.3h-4.2zM114.7 45.7h4.2v4.3h-4.2zM114.7 186.1h4.2v4.3h-4.2zM124.0 17.6h4.2v4.3h-4.2zM133.4 457.7h4.2v4.3h-4.2zM142.8 204.9h4.2v4.3h-4.2zM142.8 429.6h4.2v4.3h-4.2zM152.1 354.7h4.2v4.3h-4.2zM152.1 364.1h4.2v4.3h-4.2zM152.1 420.3h4.2v4.3h-4.2zM161.5 364.1h4.2v4.3h-4.2zM170.9 64.4h4.2v4.3h-4.2zM170.9 279.8h4.2v4.3h-4.2zM170.9 298.5h4.2v4.3h-4.2zM170.9 382.8h4.2v4.3h-4.2zM189.6 55.0h4.2v4.3h-4.2zM189.6 261.1h4.2v4.3h-4.2zM189.6 392.2h4.2v4.3h-4.2zM189.6 410.9h4.2v4.3h-4.2zM199.0 233.0h4.2v4.3h-4.2zM208.3 307.9h4.2v4.3h-4.2zM208.3 457.7h4.2v4.3h-4.2zM217.7 289.1h4.2v4.3h-4.2zM227.1 148.7h4.2v4.3h-4.2zM236.4 307.9h4.2v4.3h-4.2zM236.4 476.4h4.2v4.3h-4.2zM245.8 36.3h4.2v4.3h-4.2zM245.8 73.8h4.2v4.3h-4.2zM264.5 111.2h4.2v4.3h-4.2zM264.5 457.7h4.2v4.3h-4.2zM273.9 64.4h4.2v4.3h-4.2zM273.9 401.5h4.2v4.3h-4.2zM273.9 439.0h4.2v4.3h-4.2zM273.9 448.4h4.2v4.3h-4.2zM273.9 457.7h4.2v4.3h-4.2zM273.9 476.4h4.2v4.3h-4.2zM283.2 298.5h4.2v4.3h-4.2zM292.6 73.8h4.2v4.3h-4.2zM292.6 317.2h4.2v4.3h-4.2zM292.6 439.0h4.2v4.3h-4.2zM292.6 467.1h4.2v4.3h-4.2zM302.0 36.3h4.2v4.3h-4.2zM302.0 298.5h4.2v4.3h-4.2zM302.0 457.7h4.2v4.3h-4.2zM311.3 129.9h4.2v4.3h-4.2zM311.3 392.2h4.2v4.3h-4.2zM320.7 204.9h4.2v4.3h-4.2zM320.7 439.0h4.2v4.3h-4.2zM330.1 -1.2h4.2v4.3h-4.2zM339.4 55.0h4.2v4.3h-4.2zM339.4 92.5h4.2v4.3h-4.2zM339.4 326.6h4.2v4.3h-4.2zM348.8 139.3h4.2v4.3h-4.2zM348.8 279.8h4.2v4.3h-4.2zM358.2 279.8h4.2v4.3h-4.2zM358.2 364.1h4.2v4.3h-4.2zM367.5 26.9h4.2v4.3h-4.2zM367.5 92.5h4.2v4.3h-4.2zM367.5 410.9h4.2v4.3h-4.2zM376.9 129.9h4.2v4.3h-4.2zM386.3 26.9h4.2v4.3h-4.2zM386.3 158.0h4.2v4.3h-4.2zM386.3 373.4h4.2v4.3h-4.2zM386.3 382.8h4.2v4.3h-4.2zM395.6 186.1h4.2v4.3h-4.2zM395.6 382.8h4.2v4.3h-4.2zM395.6 467.1h4.2v4.3h-4.2zM414.4 26.9h4.2v4.3h-4.2zM414.4 55.0h4.2v4.3h-4.2zM423.7 -1.2h4.2v4.3h-4.2zM423.7 270.4h4.2v4.3h-4.2zM423.7 467.1h4.2v4.3h-4.2zM433.1 373.4h4.2v4.3h-4.2zM442.5 204.9h4.2v4.3h-4.2zM442.5 476.4h4.2v4.3h-4.2zM451.8 439.0h4.2v4.3h-4.2zM451.8 476.4h4.2v4.3h-4.2zM461.2 336.0h4.2v4.3h-4.2z"/><path fill="#595c52" d="M2.3 158.0h4.2v4.3h-4.2zM11.7 139.3h4.2v4.3h-4.2zM21.0 55.0h4.2v4.3h-4.2zM21.0 457.7h4.2v4.3h-4.2zM30.4 261.1h4.2v4.3h-4.2zM30.4 279.8h4.2v4.3h-4.2zM30.4 298.5h4.2v4.3h-4.2zM39.8 45.7h4.2v4.3h-4.2zM39.8 214.2h4.2v4.3h-4.2zM39.8 382.8h4.2v4.3h-4.2zM49.1 214.2h4.2v4.3h-4.2zM49.1 242.3h4.2v4.3h-4.2zM49.1 270.4h4.2v4.3h-4.2zM49.1 439.0h4.2v4.3h-4.2zM58.5 270.4h4.2v4.3h-4.2zM58.5 345.3h4.2v4.3h-4.2zM58.5 439.0h4.2v4.3h-4.2zM67.9 167.4h4.2v4.3h-4.2zM86.6 457.7h4.2v4.3h-4.2zM95.9 45.7h4.2v4.3h-4.2zM95.9 92.5h4.2v4.3h-4.2zM95.9 298.5h4.2v4.3h-4.2zM95.9 439.0h4.2v4.3h-4.2zM105.3 8.2h4.2v4.3h-4.2zM105.3 45.7h4.2v4.3h-4.2zM105.3 55.0h4.2v4.3h-4.2zM105.3 148.7h4.2v4.3h-4.2zM114.7 111.2h4.2v4.3h-4.2zM114.7 214.2h4.2v4.3h-4.2zM114.7 298.5h4.2v4.3h-4.2zM114.7 382.8h4.2v4.3h-4.2zM124.0 195.5h4.2v4.3h-4.2zM124.0 364.1h4.2v4.3h-4.2zM124.0 420.3h4.2v4.3h-4.2zM133.4 55.0h4.2v4.3h-4.2zM133.4 83.1h4.2v4.3h-4.2zM133.4 186.1h4.2v4.3h-4.2zM133.4 289.1h4.2v4.3h-4.2zM133.4 392.2h4.2v4.3h-4.2zM142.8 36.3h4.2v4.3h-4.2zM142.8 55.0h4.2v4.3h-4.2zM142.8 101.9h4.2v4.3h-4.2zM142.8 148.7h4.2v4.3h-4.2zM152.1 214.2h4.2v4.3h-4.2zM152.1 279.8h4.2v4.3h-4.2zM152.1 336.0h4.2v4.3h-4.2zM161.5 139.3h4.2v4.3h-4.2zM161.5 420.3h4.2v4.3h-4.2zM170.9 -1.2h4.2v4.3h-4.2zM170.9 36.3h4.2v4.3h-4.2zM180.2 111.2h4.2v4.3h-4.2zM180.2 204.9h4.2v4.3h-4.2zM180.2 233.0h4.2v4.3h-4.2zM180.2 326.6h4.2v4.3h-4.2zM180.2 401.5h4.2v4.3h-4.2zM189.6 439.0h4.2v4.3h-4.2zM199.0 92.5h4.2v4.3h-4.2zM199.0 204.9h4.2v4.3h-4.2zM208.3 120.6h4.2v4.3h-4.2zM208.3 364.1h4.2v4.3h-4.2zM217.7 36.3h4.2v4.3h-4.2zM217.7 45.7h4.2v4.3h-4.2zM227.1 45.7h4.2v4.3h-4.2zM245.8 101.9h4.2v4.3h-4.2zM245.8 204.9h4.2v4.3h-4.2zM245.8 307.9h4.2v4.3h-4.2zM255.2 -1.2h4.2v4.3h-4.2zM255.2 373.4h4.2v4.3h-4.2zM255.2 476.4h4.2v4.3h-4.2zM264.5 476.4h4.2v4.3h-4.2zM273.9 392.2h4.2v4.3h-4.2zM283.2 83.1h4.2v4.3h-4.2zM283.2 195.5h4.2v4.3h-4.2zM283.2 261.1h4.2v4.3h-4.2zM283.2 307.9h4.2v4.3h-4.2zM292.6 101.9h4.2v4.3h-4.2zM292.6 354.7h4.2v4.3h-4.2zM302.0 214.2h4.2v4.3h-4.2zM302.0 279.8h4.2v4.3h-4.2zM311.3 242.3h4.2v4.3h-4.2zM311.3 364.1h4.2v4.3h-4.2zM311.3 457.7h4.2v4.3h-4.2zM320.7 176.8h4.2v4.3h-4.2zM320.7 345.3h4.2v4.3h-4.2zM320.7 364.1h4.2v4.3h-4.2zM320.7 420.3h4.2v4.3h-4.2zM330.1 289.1h4.2v4.3h-4.2zM339.4 467.1h4.2v4.3h-4.2zM348.8 345.3h4.2v4.3h-4.2zM348.8 401.5h4.2v4.3h-4.2zM358.2 45.7h4.2v4.3h-4.2zM358.2 167.4h4.2v4.3h-4.2zM358.2 270.4h4.2v4.3h-4.2zM358.2 317.2h4.2v4.3h-4.2zM358.2 373.4h4.2v4.3h-4.2zM376.9 17.6h4.2v4.3h-4.2zM376.9 317.2h4.2v4.3h-4.2zM376.9 429.6h4.2v4.3h-4.2zM386.3 45.7h4.2v4.3h-4.2zM395.6 410.9h4.2v4.3h-4.2zM405.0 8.2h4.2v4.3h-4.2zM405.0 439.0h4.2v4.3h-4.2zM423.7 326.6h4.2v4.3h-4.2zM423.7 410.9h4.2v4.3h-4.2zM423.7 429.6h4.2v4.3h-4.2zM433.1 36.3h4.2v4.3h-4.2zM433.1 261.1h4.2v4.3h-4.2zM442.5 186.1h4.2v4.3h-4.2zM442.5 214.2h4.2v4.3h-4.2zM442.5 326.6h4.2v4.3h-4.2zM451.8 26.9h4.2v4.3h-4.2zM461.2 17.6h4.2v4.3h-4.2z"/><path fill="#614c3a" d="M2.3 167.4h4.2v4.3h-4.2zM2.3 270.4h4.2v4.3h-4.2zM2.3 298.5h4.2v4.3h-4.2zM2.3 364.1h4.2v4.3h-4.2zM2.3 420.3h4.2v4.3h-4.2zM11.7 64.4h4.2v4.3h-4.2zM11.7 111.2h4.2v4.3h-4.2zM11.7 354.7h4.2v4.3h-4.2zM21.0 45.7h4.2v4.3h-4.2zM39.8 158.0h4.2v4.3h-4.2zM39.8 289.1h4.2v4.3h-4.2zM39.8 354.7h4.2v4.3h-4.2zM49.1 8.2h4.2v4.3h-4.2zM49.1 36.3h4.2v4.3h-4.2zM49.1 64.4h4.2v4.3h-4.2zM49.1 111.2h4.2v4.3h-4.2zM49.1 261.1h4.2v4.3h-4.2zM58.5 73.8h4.2v4.3h-4.2zM58.5 279.8h4.2v4.3h-4.2zM58.5 429.6h4.2v4.3h-4.2zM67.9 139.3h4.2v4.3h-4.2zM77.2 8.2h4.2v4.3h-4.2zM77.2 186.1h4.2v4.3h-4.2zM77.2 410.9h4.2v4.3h-4.2zM86.6 17.6h4.2v4.3h-4.2zM86.6 317.2h4.2v4.3h-4.2zM95.9 64.4h4.2v4.3h-4.2zM105.3 64.4h4.2v4.3h-4.2zM105.3 242.3h4.2v4.3h-4.2zM105.3 410.9h4.2v4.3h-4.2zM114.7 345.3h4.2v4.3h-4.2zM114.7 476.4h4.2v4.3h-4.2zM142.8 307.9h4.2v4.3h-4.2zM152.1 17.6h4.2v4.3h-4.2zM152.1 92.5h4.2v4.3h-4.2zM152.1 270.4h4.2v4.3h-4.2zM161.5 26.9h4.2v4.3h-4.2zM161.5 64.4h4.2v4.3h-4.2zM161.5 158.0h4.2v4.3h-4.2zM161.5 326.6h4.2v4.3h-4.2zM170.9 233.0h4.2v4.3h-4.2zM170.9 289.1h4.2v4.3h-4.2zM170.9 326.6h4.2v4.3h-4.2zM189.6 8.2h4.2v4.3h-4.2zM189.6 17.6h4.2v4.3h-4.2zM189.6 101.9h4.2v4.3h-4.2zM189.6 204.9h4.2v4.3h-4.2zM189.6 382.8h4.2v4.3h-4.2zM199.0 55.0h4.2v4.3h-4.2zM199.0 195.5h4.2v4.3h-4.2zM208.3 -1.2h4.2v4.3h-4.2zM208.3 279.8h4.2v4.3h-4.2zM227.1 420.3h4.2v4.3h-4.2zM236.4 354.7h4.2v4.3h-4.2zM245.8 233.0h4.2v4.3h-4.2zM255.2 101.9h4.2v4.3h-4.2zM255.2 186.1h4.2v4.3h-4.2zM264.5 223.6h4.2v4.3h-4.2zM264.5 364.1h4.2v4.3h-4.2zM273.9 158.0h4.2v4.3h-4.2zM273.9 289.1h4.2v4.3h-4.2zM273.9 345.3h4.2v4.3h-4.2zM283.2 129.9h4.2v4.3h-4.2zM283.2 214.2h4.2v4.3h-4.2zM283.2 251.7h4.2v4.3h-4.2zM292.6 251.7h4.2v4.3h-4.2zM292.6 373.4h4.2v4.3h-4.2zM302.0 101.9h4.2v4.3h-4.2zM302.0 167.4h4.2v4.3h-4.2zM302.0 242.3h4.2v4.3h-4.2zM302.0 410.9h4.2v4.3h-4.2zM311.3 26.9h4.2v4.3h-4.2zM311.3 204.9h4.2v4.3h-4.2zM311.3 336.0h4.2v4.3h-4.2zM311.3 439.0h4.2v4.3h-4.2zM330.1 45.7h4.2v4.3h-4.2zM330.1 467.1h4.2v4.3h-4.2zM339.4 120.6h4.2v4.3h-4.2zM348.8 148.7h4.2v4.3h-4.2zM348.8 307.9h4.2v4.3h-4.2zM367.5 8.2h4.2v4.3h-4.2zM367.5 36.3h4.2v4.3h-4.2zM367.5 83.1h4.2v4.3h-4.2zM367.5 158.0h4.2v4.3h-4.2zM367.5 204.9h4.2v4.3h-4.2zM376.9 64.4h4.2v4.3h-4.2zM376.9 92.5h4.2v4.3h-4.2zM376.9 195.5h4.2v4.3h-4.2zM376.9 289.1h4.2v4.3h-4.2zM376.9 298.5h4.2v4.3h-4.2zM376.9 410.9h4.2v4.3h-4.2zM386.3 101.9h4.2v4.3h-4.2zM386.3 111.2h4.2v4.3h-4.2zM395.6 8.2h4.2v4.3h-4.2zM395.6 45.7h4.2v4.3h-4.2zM395.6 92.5h4.2v4.3h-4.2zM395.6 298.5h4.2v4.3h-4.2zM395.6 354.7h4.2v4.3h-4.2zM405.0 148.7h4.2v4.3h-4.2zM414.4 148.7h4.2v4.3h-4.2zM414.4 233.0h4.2v4.3h-4.2zM423.7 158.0h4.2v4.3h-4.2zM433.1 101.9h4.2v4.3h-4.2zM433.1 129.9h4.2v4.3h-4.2zM433.1 307.9h4.2v4.3h-4.2zM433.1 336.0h4.2v4.3h-4.2zM442.5 120.6h4.2v4.3h-4.2zM442.5 420.3h4.2v4.3h-4.2zM442.5 467.1h4.2v4.3h-4.2zM451.8 73.8h4.2v4.3h-4.2zM451.8 336.0h4.2v4.3h-4.2zM461.2 8.2h4.2v4.3h-4.2zM461.2 139.3h4.2v4.3h-4.2zM461.2 167.4h4.2v4.3h-4.2zM461.2 214.2h4.2v4.3h-4.2zM461.2 289.1h4.2v4.3h-4.2zM461.2 307.9h4.2v4.3h-4.2zM461.2 392.2h4.2v4.3h-4.2z"/><path fill="#c2b7a6" d="M2.3 186.1h4.2v4.3h-4.2zM2.3 467.1h4.2v4.3h-4.2zM11.7 195.5h4.2v4.3h-4.2zM11.7 429.6h4.2v4.3h-4.2zM21.0 364.1h4.2v4.3h-4.2zM30.4 26.9h4.2v4.3h-4.2zM30.4 139.3h4.2v4.3h-4.2zM30.4 289.1h4.2v4.3h-4.2zM39.8 17.6h4.2v4.3h-4.2zM39.8 129.9h4.2v4.3h-4.2zM39.8 186.1h4.2v4.3h-4.2zM49.1 420.3h4.2v4.3h-4.2zM49.1 467.1h4.2v4.3h-4.2zM58.5 139.3h4.2v4.3h-4.2zM58.5 158.0h4.2v4.3h-4.2zM67.9 251.7h4.2v4.3h-4.2zM67.9 476.4h4.2v4.3h-4.2zM77.2 -1.2h4.2v4.3h-4.2zM77.2 26.9h4.2v4.3h-4.2zM77.2 261.1h4.2v4.3h-4.2zM86.6 195.5h4.2v4.3h-4.2zM86.6 448.4h4.2v4.3h-4.2zM95.9 8.2h4.2v4.3h-4.2zM95.9 354.7h4.2v4.3h-4.2zM105.3 204.9h4.2v4.3h-4.2zM105.3 326.6h4.2v4.3h-4.2zM114.7 17.6h4.2v4.3h-4.2zM114.7 242.3h4.2v4.3h-4.2zM124.0 55.0h4.2v4.3h-4.2zM124.0 111.2h4.2v4.3h-4.2zM124.0 298.5h4.2v4.3h-4.2zM124.0 457.7h4.2v4.3h-4.2zM133.4 45.7h4.2v4.3h-4.2zM133.4 204.9h4.2v4.3h-4.2zM133.4 448.4h4.2v4.3h-4.2zM142.8 92.5h4.2v4.3h-4.2zM142.8 326.6h4.2v4.3h-4.2zM142.8 345.3h4.2v4.3h-4.2zM152.1 120.6h4.2v4.3h-4.2zM152.1 167.4h4.2v4.3h-4.2zM152.1 261.1h4.2v4.3h-4.2zM161.5 195.5h4.2v4.3h-4.2zM161.5 457.7h4.2v4.3h-4.2zM170.9 8.2h4.2v4.3h-4.2zM180.2 139.3h4.2v4.3h-4.2zM180.2 176.8h4.2v4.3h-4.2zM180.2 195.5h4.2v4.3h-4.2zM189.6 45.7h4.2v4.3h-4.2zM189.6 92.5h4.2v4.3h-4.2zM189.6 195.5h4.2v4.3h-4.2zM208.3 55.0h4.2v4.3h-4.2zM208.3 214.2h4.2v4.3h-4.2zM217.7 261.1h4.2v4.3h-4.2zM217.7 439.0h4.2v4.3h-4.2zM236.4 92.5h4.2v4.3h-4.2zM236.4 120.6h4.2v4.3h-4.2zM236.4 148.7h4.2v4.3h-4.2zM245.8 158.0h4.2v4.3h-4.2zM245.8 364.1h4.2v4.3h-4.2zM255.2 120.6h4.2v4.3h-4.2zM264.5 410.9h4.2v4.3h-4.2zM273.9 8.2h4.2v4.3h-4.2zM273.9 233.0h4.2v4.3h-4.2zM283.2 317.2h4.2v4.3h-4.2zM283.2 420.3h4.2v4.3h-4.2zM292.6 120.6h4.2v4.3h-4.2zM292.6 401.5h4.2v4.3h-4.2zM292.6 448.4h4.2v4.3h-4.2zM311.3 73.8h4.2v4.3h-4.2zM311.3 176.8h4.2v4.3h-4.2zM311.3 270.4h4.2v4.3h-4.2zM311.3 420.3h4.2v4.3h-4.2zM320.7 17.6h4.2v4.3h-4.2zM320.7 26.9h4.2v4.3h-4.2zM320.7 139.3h4.2v4.3h-4.2zM330.1 176.8h4.2v4.3h-4.2zM330.1 270.4h4.2v4.3h-4.2zM330.1 279.8h4.2v4.3h-4.2zM330.1 354.7h4.2v4.3h-4.2zM348.8 36.3h4.2v4.3h-4.2zM348.8 457.7h4.2v4.3h-4.2zM358.2 36.3h4.2v4.3h-4.2zM358.2 148.7h4.2v4.3h-4.2zM367.5 233.0h4.2v4.3h-4.2zM367.5 354.7h4.2v4.3h-4.2zM376.9 83.1h4.2v4.3h-4.2zM376.9 354.7h4.2v4.3h-4.2zM376.9 457.7h4.2v4.3h-4.2zM386.3 129.9h4.2v4.3h-4.2zM386.3 167.4h4.2v4.3h-4.2zM386.3 223.6h4.2v4.3h-4.2zM386.3 289.1h4.2v4.3h-4.2zM386.3 401.5h4.2v4.3h-4.2zM395.6 83.1h4.2v4.3h-4.2zM395.6 364.1h4.2v4.3h-4.2zM395.6 476.4h4.2v4.3h-4.2zM405.0 129.9h4.2v4.3h-4.2zM405.0 420.3h4.2v4.3h-4.2zM433.1 111.2h4.2v4.3h-4.2zM442.5 73.8h4.2v4.3h-4.2zM442.5 111.2h4.2v4.3h-4.2zM451.8 120.6h4.2v4.3h-4.2zM451.8 392.2h4.2v4.3h-4.2zM451.8 420.3h4.2v4.3h-4.2zM451.8 429.6h4.2v4.3h-4.2zM461.2 429.6h4.2v4.3h-4.2z"/><path fill="#69aca1" d="M2.3 251.7h4.2v4.3h-4.2zM2.3 392.2h4.2v4.3h-4.2zM11.7 204.9h4.2v4.3h-4.2zM11.7 373.4h4.2v4.3h-4.2zM21.0 139.3h4.2v4.3h-4.2zM30.4 129.9h4.2v4.3h-4.2zM30.4 158.0h4.2v4.3h-4.2zM30.4 167.4h4.2v4.3h-4.2zM30.4 401.5h4.2v4.3h-4.2zM30.4 476.4h4.2v4.3h-4.2zM39.8 8.2h4.2v4.3h-4.2zM39.8 101.9h4.2v4.3h-4.2zM39.8 457.7h4.2v4.3h-4.2zM49.1 45.7h4.2v4.3h-4.2zM49.1 354.7h4.2v4.3h-4.2zM58.5 148.7h4.2v4.3h-4.2zM58.5 242.3h4.2v4.3h-4.2zM58.5 364.1h4.2v4.3h-4.2zM67.9 186.1h4.2v4.3h-4.2zM77.2 345.3h4.2v4.3h-4.2zM77.2 392.2h4.2v4.3h-4.2zM86.6 73.8h4.2v4.3h-4.2zM95.9 -1.2h4.2v4.3h-4.2zM95.9 111.2h4.2v4.3h-4.2zM105.3 26.9h4.2v4.3h-4.2zM114.7 223.6h4.2v4.3h-4.2zM124.0 261.1h4.2v4.3h-4.2zM124.0 317.2h4.2v4.3h-4.2zM133.4 233.0h4.2v4.3h-4.2zM133.4 242.3h4.2v4.3h-4.2zM133.4 345.3h4.2v4.3h-4.2zM142.8 167.4h4.2v4.3h-4.2zM142.8 186.1h4.2v4.3h-4.2zM152.1 148.7h4.2v4.3h-4.2zM152.1 195.5h4.2v4.3h-4.2zM161.5 17.6h4.2v4.3h-4.2zM161.5 270.4h4.2v4.3h-4.2zM161.5 448.4h4.2v4.3h-4.2zM170.9 73.8h4.2v4.3h-4.2zM170.9 92.5h4.2v4.3h-4.2zM180.2 158.0h4.2v4.3h-4.2zM180.2 223.6h4.2v4.3h-4.2zM180.2 298.5h4.2v4.3h-4.2zM180.2 439.0h4.2v4.3h-4.2zM189.6 73.8h4.2v4.3h-4.2zM189.6 167.4h4.2v4.3h-4.2zM199.0 261.1h4.2v4.3h-4.2zM199.0 317.2h4.2v4.3h-4.2zM208.3 17.6h4.2v4.3h-4.2zM208.3 476.4h4.2v4.3h-4.2zM217.7 -1.2h4.2v4.3h-4.2zM217.7 101.9h4.2v4.3h-4.2zM217.7 120.6h4.2v4.3h-4.2zM217.7 392.2h4.2v4.3h-4.2zM217.7 476.4h4.2v4.3h-4.2zM227.1 120.6h4.2v4.3h-4.2zM227.1 139.3h4.2v4.3h-4.2zM236.4 158.0h4.2v4.3h-4.2zM236.4 251.7h4.2v4.3h-4.2zM255.2 26.9h4.2v4.3h-4.2zM255.2 73.8h4.2v4.3h-4.2zM255.2 148.7h4.2v4.3h-4.2zM255.2 158.0h4.2v4.3h-4.2zM255.2 420.3h4.2v4.3h-4.2zM264.5 83.1h4.2v4.3h-4.2zM264.5 148.7h4.2v4.3h-4.2zM273.9 251.7h4.2v4.3h-4.2zM273.9 307.9h4.2v4.3h-4.2zM273.9 420.3h4.2v4.3h-4.2zM283.2 111.2h4.2v4.3h-4.2zM283.2 120.6h4.2v4.3h-4.2zM283.2 242.3h4.2v4.3h-4.2zM292.6 167.4h4.2v4.3h-4.2zM292.6 289.1h4.2v4.3h-4.2zM292.6 345.3h4.2v4.3h-4.2zM292.6 364.1h4.2v4.3h-4.2zM302.0 55.0h4.2v4.3h-4.2zM302.0 111.2h4.2v4.3h-4.2zM302.0 148.7h4.2v4.3h-4.2zM302.0 195.5h4.2v4.3h-4.2zM302.0 251.7h4.2v4.3h-4.2zM302.0 354.7h4.2v4.3h-4.2zM302.0 382.8h4.2v4.3h-4.2zM311.3 111.2h4.2v4.3h-4.2zM311.3 261.1h4.2v4.3h-4.2zM320.7 111.2h4.2v4.3h-4.2zM320.7 467.1h4.2v4.3h-4.2zM330.1 373.4h4.2v4.3h-4.2zM339.4 111.2h4.2v4.3h-4.2zM339.4 186.1h4.2v4.3h-4.2zM339.4 392.2h4.2v4.3h-4.2zM348.8 83.1h4.2v4.3h-4.2zM348.8 336.0h4.2v4.3h-4.2zM348.8 467.1h4.2v4.3h-4.2zM358.2 -1.2h4.2v4.3h-4.2zM358.2 186.1h4.2v4.3h-4.2zM367.5 429.6h4.2v4.3h-4.2zM376.9 -1.2h4.2v4.3h-4.2zM376.9 111.2h4.2v4.3h-4.2zM376.9 223.6h4.2v4.3h-4.2zM386.3 195.5h4.2v4.3h-4.2zM386.3 233.0h4.2v4.3h-4.2zM386.3 279.8h4.2v4.3h-4.2zM386.3 439.0h4.2v4.3h-4.2zM395.6 176.8h4.2v4.3h-4.2zM395.6 195.5h4.2v4.3h-4.2zM395.6 448.4h4.2v4.3h-4.2zM405.0 83.1h4.2v4.3h-4.2zM405.0 214.2h4.2v4.3h-4.2zM405.0 373.4h4.2v4.3h-4.2zM423.7 307.9h4.2v4.3h-4.2zM433.1 83.1h4.2v4.3h-4.2zM433.1 326.6h4.2v4.3h-4.2zM442.5 345.3h4.2v4.3h-4.2zM442.5 392.2h4.2v4.3h-4.2zM451.8 -1.2h4.2v4.3h-4.2zM451.8 204.9h4.2v4.3h-4.2zM451.8 289.1h4.2v4.3h-4.2zM451.8 448.4h4.2v4.3h-4.2z"/><path fill="#e0e0e0" d="M2.3 261.1h4.2v4.3h-4.2zM2.3 326.6h4.2v4.3h-4.2zM11.7 448.4h4.2v4.3h-4.2zM21.0 204.9h4.2v4.3h-4.2zM30.4 336.0h4.2v4.3h-4.2zM30.4 345.3h4.2v4.3h-4.2zM30.4 467.1h4.2v4.3h-4.2zM39.8 251.7h4.2v4.3h-4.2zM39.8 439.0h4.2v4.3h-4.2zM58.5 36.3h4.2v4.3h-4.2zM67.9 26.9h4.2v4.3h-4.2zM67.9 83.1h4.2v4.3h-4.2zM67.9 148.7h4.2v4.3h-4.2zM77.2 92.5h4.2v4.3h-4.2zM86.6 176.8h4.2v4.3h-4.2zM86.6 439.0h4.2v4.3h-4.2zM95.9 36.3h4.2v4.3h-4.2zM95.9 55.0h4.2v4.3h-4.2zM95.9 476.4h4.2v4.3h-4.2zM105.3 279.8h4.2v4.3h-4.2zM105.3 354.7h4.2v4.3h-4.2zM114.7 64.4h4.2v4.3h-4.2zM124.0 251.7h4.2v4.3h-4.2zM124.0 289.1h4.2v4.3h-4.2zM124.0 382.8h4.2v4.3h-4.2zM124.0 448.4h4.2v4.3h-4.2zM133.4 73.8h4.2v4.3h-4.2zM133.4 214.2h4.2v4.3h-4.2zM133.4 298.5h4.2v4.3h-4.2zM142.8 158.0h4.2v4.3h-4.2zM142.8 261.1h4.2v4.3h-4.2zM152.1 45.7h4.2v4.3h-4.2zM152.1 251.7h4.2v4.3h-4.2zM152.1 401.5h4.2v4.3h-4.2zM152.1 439.0h4.2v4.3h-4.2zM152.1 476.4h4.2v4.3h-4.2zM161.5 8.2h4.2v4.3h-4.2zM161.5 214.2h4.2v4.3h-4.2zM161.5 233.0h4.2v4.3h-4.2zM161.5 467.1h4.2v4.3h-4.2zM170.9 139.3h4.2v4.3h-4.2zM170.9 439.0h4.2v4.3h-4.2zM180.2 167.4h4.2v4.3h-4.2zM180.2 336.0h4.2v4.3h-4.2zM180.2 382.8h4.2v4.3h-4.2zM189.6 139.3h4.2v4.3h-4.2zM189.6 401.5h4.2v4.3h-4.2zM199.0 223.6h4.2v4.3h-4.2zM199.0 270.4h4.2v4.3h-4.2zM208.3 64.4h4.2v4.3h-4.2zM208.3 298.5h4.2v4.3h-4.2zM217.7 64.4h4.2v4.3h-4.2zM217.7 176.8h4.2v4.3h-4.2zM217.7 364.1h4.2v4.3h-4.2zM217.7 420.3h4.2v4.3h-4.2zM227.1 -1.2h4.2v4.3h-4.2zM227.1 64.4h4.2v4.3h-4.2zM227.1 223.6h4.2v4.3h-4.2zM227.1 467.1h4.2v4.3h-4.2zM236.4 83.1h4.2v4.3h-4.2zM236.4 186.1h4.2v4.3h-4.2zM236.4 214.2h4.2v4.3h-4.2zM245.8 111.2h4.2v4.3h-4.2zM245.8 317.2h4.2v4.3h-4.2zM255.2 45.7h4.2v4.3h-4.2zM255.2 270.4h4.2v4.3h-4.2zM264.5 167.4h4.2v4.3h-4.2zM273.9 129.9h4.2v4.3h-4.2zM273.9 382.8h4.2v4.3h-4.2zM283.2 8.2h4.2v4.3h-4.2zM283.2 55.0h4.2v4.3h-4.2zM283.2 364.1h4.2v4.3h-4.2zM292.6 8.2h4.2v4.3h-4.2zM302.0 261.1h4.2v4.3h-4.2zM302.0 326.6h4.2v4.3h-4.2zM302.0 467.1h4.2v4.3h-4.2zM302.0 476.4h4.2v4.3h-4.2zM311.3 -1.2h4.2v4.3h-4.2zM311.3 298.5h4.2v4.3h-4.2zM311.3 307.9h4.2v4.3h-4.2zM320.7 326.6h4.2v4.3h-4.2zM330.1 214.2h4.2v4.3h-4.2zM330.1 251.7h4.2v4.3h-4.2zM330.1 429.6h4.2v4.3h-4.2zM339.4 -1.2h4.2v4.3h-4.2zM339.4 26.9h4.2v4.3h-4.2zM339.4 83.1h4.2v4.3h-4.2zM339.4 129.9h4.2v4.3h-4.2zM339.4 279.8h4.2v4.3h-4.2zM348.8 55.0h4.2v4.3h-4.2zM348.8 120.6h4.2v4.3h-4.2zM367.5 55.0h4.2v4.3h-4.2zM376.9 261.1h4.2v4.3h-4.2zM376.9 364.1h4.2v4.3h-4.2zM386.3 354.7h4.2v4.3h-4.2zM386.3 364.1h4.2v4.3h-4.2zM395.6 26.9h4.2v4.3h-4.2zM405.0 120.6h4.2v4.3h-4.2zM405.0 242.3h4.2v4.3h-4.2zM405.0 429.6h4.2v4.3h-4.2zM414.4 64.4h4.2v4.3h-4.2zM414.4 186.1h4.2v4.3h-4.2zM423.7 8.2h4.2v4.3h-4.2zM423.7 83.1h4.2v4.3h-4.2zM423.7 139.3h4.2v4.3h-4.2zM423.7 317.2h4.2v4.3h-4.2zM433.1 176.8h4.2v4.3h-4.2zM433.1 439.0h4.2v4.3h-4.2zM433.1 467.1h4.2v4.3h-4.2zM442.5 158.0h4.2v4.3h-4.2zM442.5 298.5h4.2v4.3h-4.2zM442.5 382.8h4.2v4.3h-4.2zM451.8 158.0h4.2v4.3h-4.2zM451.8 354.7h4.2v4.3h-4.2zM461.2 83.1h4.2v4.3h-4.2zM461.2 195.5h4.2v4.3h-4.2z"/><path fill="#d19f9f" d="M2.3 336.0h4.2v4.3h-4.2zM11.7 92.5h4.2v4.3h-4.2zM21.0 64.4h4.2v4.3h-4.2zM21.0 92.5h4.2v4.3h-4.2zM30.4 251.7h4.2v4.3h-4.2zM49.1 176.8h4.2v4.3h-4.2zM58.5 317.2h4.2v4.3h-4.2zM67.9 242.3h4.2v4.3h-4.2zM77.2 429.6h4.2v4.3h-4.2zM77.2 439.0h4.2v4.3h-4.2zM86.6 45.7h4.2v4.3h-4.2zM86.6 233.0h4.2v4.3h-4.2zM86.6 364.1h4.2v4.3h-4.2zM86.6 373.4h4.2v4.3h-4.2zM114.7 289.1h4.2v4.3h-4.2zM124.0 158.0h4.2v4.3h-4.2zM124.0 242.3h4.2v4.3h-4.2zM142.8 439.0h4.2v4.3h-4.2zM152.1 467.1h4.2v4.3h-4.2zM161.5 101.9h4.2v4.3h-4.2zM180.2 410.9h4.2v4.3h-4.2zM199.0 448.4h4.2v4.3h-4.2zM208.3 195.5h4.2v4.3h-4.2zM208.3 410.9h4.2v4.3h-4.2zM236.4 261.1h4.2v4.3h-4.2zM236.4 439.0h4.2v4.3h-4.2zM245.8 92.5h4.2v4.3h-4.2zM245.8 326.6h4.2v4.3h-4.2zM264.5 176.8h4.2v4.3h-4.2zM264.5 467.1h4.2v4.3h-4.2zM283.2 -1.2h4.2v4.3h-4.2zM283.2 401.5h4.2v4.3h-4.2zM292.6 270.4h4.2v4.3h-4.2zM302.0 26.9h4.2v4.3h-4.2zM302.0 204.9h4.2v4.3h-4.2zM302.0 307.9h4.2v4.3h-4.2zM320.7 186.1h4.2v4.3h-4.2zM320.7 298.5h4.2v4.3h-4.2zM358.2 242.3h4.2v4.3h-4.2zM367.5 401.5h4.2v4.3h-4.2zM386.3 -1.2h4.2v4.3h-4.2zM386.3 55.0h4.2v4.3h-4.2zM386.3 270.4h4.2v4.3h-4.2zM386.3 457.7h4.2v4.3h-4.2zM414.4 401.5h4.2v4.3h-4.2zM423.7 195.5h4.2v4.3h-4.2zM423.7 354.7h4.2v4.3h-4.2zM423.7 439.0h4.2v4.3h-4.2zM451.8 92.5h4.2v4.3h-4.2zM451.8 467.1h4.2v4.3h-4.2zM461.2 92.5h4.2v4.3h-4.2z"/><path fill="#305732" d="M2.3 373.4h4.2v4.3h-4.2zM11.7 26.9h4.2v4.3h-4.2zM11.7 120.6h4.2v4.3h-4.2zM11.7 148.7h4.2v4.3h-4.2zM11.7 251.7h4.2v4.3h-4.2zM11.7 345.3h4.2v4.3h-4.2zM11.7 476.4h4.2v4.3h-4.2zM21.0 373.4h4.2v4.3h-4.2zM21.0 382.8h4.2v4.3h-4.2zM30.4 270.4h4.2v4.3h-4.2zM30.4 382.8h4.2v4.3h-4.2zM30.4 457.7h4.2v4.3h-4.2zM39.8 345.3h4.2v4.3h-4.2zM39.8 429.6h4.2v4.3h-4.2zM39.8 476.4h4.2v4.3h-4.2zM49.1 139.3h4.2v4.3h-4.2zM49.1 186.1h4.2v4.3h-4.2zM49.1 204.9h4.2v4.3h-4.2zM49.1 307.9h4.2v4.3h-4.2zM49.1 457.7h4.2v4.3h-4.2zM58.5 83.1h4.2v4.3h-4.2zM58.5 410.9h4.2v4.3h-4.2zM67.9 158.0h4.2v4.3h-4.2zM67.9 204.9h4.2v4.3h-4.2zM67.9 439.0h4.2v4.3h-4.2zM67.9 457.7h4.2v4.3h-4.2zM77.2 73.8h4.2v4.3h-4.2zM86.6 55.0h4.2v4.3h-4.2zM86.6 204.9h4.2v4.3h-4.2zM86.6 223.6h4.2v4.3h-4.2zM86.6 401.5h4.2v4.3h-4.2zM86.6 410.9h4.2v4.3h-4.2zM86.6 476.4h4.2v4.3h-4.2zM95.9 17.6h4.2v4.3h-4.2zM95.9 167.4h4.2v4.3h-4.2zM95.9 195.5h4.2v4.3h-4.2zM95.9 204.9h4.2v4.3h-4.2zM105.3 101.9h4.2v4.3h-4.2zM105.3 167.4h4.2v4.3h-4.2zM105.3 298.5h4.2v4.3h-4.2zM105.3 336.0h4.2v4.3h-4.2zM114.7 101.9h4.2v4.3h-4.2zM114.7 176.8h4.2v4.3h-4.2zM114.7 336.0h4.2v4.3h-4.2zM124.0 45.7h4.2v4.3h-4.2zM124.0 83.1h4.2v4.3h-4.2zM124.0 148.7h4.2v4.3h-4.2zM124.0 373.4h4.2v4.3h-4.2zM133.4 270.4h4.2v4.3h-4.2zM142.8 83.1h4.2v4.3h-4.2zM142.8 139.3h4.2v4.3h-4.2zM142.8 382.8h4.2v4.3h-4.2zM142.8 401.5h4.2v4.3h-4.2zM152.1 186.1h4.2v4.3h-4.2zM152.1 307.9h4.2v4.3h-4.2zM161.5 298.5h4.2v4.3h-4.2zM161.5 439.0h4.2v4.3h-4.2zM170.9 17.6h4.2v4.3h-4.2zM170.9 354.7h4.2v4.3h-4.2zM170.9 364.1h4.2v4.3h-4.2zM170.9 392.2h4.2v4.3h-4.2zM170.9 429.6h4.2v4.3h-4.2zM170.9 448.4h4.2v4.3h-4.2zM180.2 8.2h4.2v4.3h-4.2zM180.2 186.1h4.2v4.3h-4.2zM189.6 129.9h4.2v4.3h-4.2zM189.6 420.3h4.2v4.3h-4.2zM199.0 83.1h4.2v4.3h-4.2zM199.0 364.1h4.2v4.3h-4.2zM199.0 382.8h4.2v4.3h-4.2zM208.3 8.2h4.2v4.3h-4.2zM208.3 223.6h4.2v4.3h-4.2zM208.3 261.1h4.2v4.3h-4.2zM217.7 317.2h4.2v4.3h-4.2zM217.7 457.7h4.2v4.3h-4.2zM217.7 467.1h4.2v4.3h-4.2zM227.1 8.2h4.2v4.3h-4.2zM227.1 83.1h4.2v4.3h-4.2zM227.1 289.1h4.2v4.3h-4.2zM227.1 401.5h4.2v4.3h-4.2zM227.1 439.0h4.2v4.3h-4.2zM236.4 176.8h4.2v4.3h-4.2zM236.4 289.1h4.2v4.3h-4.2zM236.4 457.7h4.2v4.3h-4.2zM245.8 64.4h4.2v4.3h-4.2zM245.8 148.7h4.2v4.3h-4.2zM255.2 92.5h4.2v4.3h-4.2zM255.2 167.4h4.2v4.3h-4.2zM255.2 326.6h4.2v4.3h-4.2zM264.5 204.9h4.2v4.3h-4.2zM264.5 261.1h4.2v4.3h-4.2zM264.5 279.8h4.2v4.3h-4.2zM264.5 298.5h4.2v4.3h-4.2zM264.5 307.9h4.2v4.3h-4.2zM264.5 354.7h4.2v4.3h-4.2zM273.9 26.9h4.2v4.3h-4.2zM273.9 101.9h4.2v4.3h-4.2zM273.9 139.3h4.2v4.3h-4.2zM283.2 26.9h4.2v4.3h-4.2zM283.2 270.4h4.2v4.3h-4.2zM283.2 326.6h4.2v4.3h-4.2zM292.6 92.5h4.2v4.3h-4.2zM292.6 223.6h4.2v4.3h-4.2zM292.6 261.1h4.2v4.3h-4.2zM302.0 317.2h4.2v4.3h-4.2zM302.0 364.1h4.2v4.3h-4.2zM302.0 448.4h4.2v4.3h-4.2zM311.3 195.5h4.2v4.3h-4.2zM311.3 354.7h4.2v4.3h-4.2zM320.7 -1.2h4.2v4.3h-4.2zM320.7 261.1h4.2v4.3h-4.2zM320.7 401.5h4.2v4.3h-4.2zM320.7 448.4h4.2v4.3h-4.2zM320.7 476.4h4.2v4.3h-4.2zM330.1 139.3h4.2v4.3h-4.2zM330.1 223.6h4.2v4.3h-4.2zM330.1 439.0h4.2v4.3h-4.2zM339.4 64.4h4.2v4.3h-4.2zM339.4 223.6h4.2v4.3h-4.2zM339.4 251.7h4.2v4.3h-4.2zM339.4 354.7h4.2v4.3h-4.2zM339.4 476.4h4.2v4.3h-4.2zM348.8 223.6h4.2v4.3h-4.2zM348.8 448.4h4.2v4.3h-4.2zM358.2 401.5h4.2v4.3h-4.2zM367.5 73.8h4.2v4.3h-4.2zM367.5 101.9h4.2v4.3h-4.2zM367.5 214.2h4.2v4.3h-4.2zM367.5 289.1h4.2v4.3h-4.2zM367.5 317.2h4.2v4.3h-4.2zM367.5 476.4h4.2v4.3h-4.2zM376.9 73.8h4.2v4.3h-4.2zM376.9 148.7h4.2v4.3h-4.2zM376.9 158.0h4.2v4.3h-4.2zM376.9 242.3h4.2v4.3h-4.2zM376.9 251.7h4.2v4.3h-4.2zM376.9 420.3h4.2v4.3h-4.2zM386.3 139.3h4.2v4.3h-4.2zM386.3 148.7h4.2v4.3h-4.2zM395.6 36.3h4.2v4.3h-4.2zM395.6 317.2h4.2v4.3h-4.2zM395.6 373.4h4.2v4.3h-4.2zM405.0 -1.2h4.2v4.3h-4.2zM405.0 73.8h4.2v4.3h-4.2zM405.0 354.7h4.2v4.3h-4.2zM405.0 467.1h4.2v4.3h-4.2zM423.7 186.1h4.2v4.3h-4.2zM423.7 476.4h4.2v4.3h-4.2zM433.1 251.7h4.2v4.3h-4.2zM433.1 382.8h4.2v4.3h-4.2zM442.5 -1.2h4.2v4.3h-4.2zM442.5 26.9h4.2v4.3h-4.2zM442.5 139.3h4.2v4.3h-4.2zM451.8 36.3h4.2v4.3h-4.2zM451.8 45.7h4.2v4.3h-4.2zM451.8 111.2h4.2v4.3h-4.2zM451.8 148.7h4.2v4.3h-4.2zM451.8 270.4h4.2v4.3h-4.2zM451.8 326.6h4.2v4.3h-4.2zM451.8 382.8h4.2v4.3h-4.2zM461.2 26.9h4.2v4.3h-4.2zM461.2 101.9h4.2v4.3h-4.2zM461.2 279.8h4.2v4.3h-4.2zM461.2 373.4h4.2v4.3h-4.2z"/><path fill="#cac470" d="M2.3 401.5h4.2v4.3h-4.2zM11.7 176.8h4.2v4.3h-4.2zM30.4 45.7h4.2v4.3h-4.2zM49.1 223.6h4.2v4.3h-4.2zM49.1 382.8h4.2v4.3h-4.2zM58.5 289.1h4.2v4.3h-4.2zM67.9 279.8h4.2v4.3h-4.2zM77.2 223.6h4.2v4.3h-4.2zM95.9 139.3h4.2v4.3h-4.2zM95.9 307.9h4.2v4.3h-4.2zM114.7 158.0h4.2v4.3h-4.2zM114.7 439.0h4.2v4.3h-4.2zM124.0 120.6h4.2v4.3h-4.2zM133.4 476.4h4.2v4.3h-4.2zM142.8 392.2h4.2v4.3h-4.2zM199.0 326.6h4.2v4.3h-4.2zM199.0 467.1h4.2v4.3h-4.2zM208.3 242.3h4.2v4.3h-4.2zM208.3 429.6h4.2v4.3h-4.2zM217.7 233.0h4.2v4.3h-4.2zM217.7 345.3h4.2v4.3h-4.2zM227.1 73.8h4.2v4.3h-4.2zM227.1 129.9h4.2v4.3h-4.2zM236.4 -1.2h4.2v4.3h-4.2zM236.4 420.3h4.2v4.3h-4.2zM245.8 26.9h4.2v4.3h-4.2zM245.8 251.7h4.2v4.3h-4.2zM245.8 439.0h4.2v4.3h-4.2zM273.9 467.1h4.2v4.3h-4.2zM292.6 36.3h4.2v4.3h-4.2zM292.6 83.1h4.2v4.3h-4.2zM292.6 129.9h4.2v4.3h-4.2zM292.6 410.9h4.2v4.3h-4.2zM311.3 8.2h4.2v4.3h-4.2zM320.7 120.6h4.2v4.3h-4.2zM320.7 317.2h4.2v4.3h-4.2zM330.1 36.3h4.2v4.3h-4.2zM339.4 17.6h4.2v4.3h-4.2zM339.4 101.9h4.2v4.3h-4.2zM339.4 382.8h4.2v4.3h-4.2zM339.4 420.3h4.2v4.3h-4.2zM348.8 111.2h4.2v4.3h-4.2zM348.8 167.4h4.2v4.3h-4.2zM348.8 195.5h4.2v4.3h-4.2zM367.5 64.4h4.2v4.3h-4.2zM376.9 8.2h4.2v4.3h-4.2zM395.6 242.3h4.2v4.3h-4.2zM405.0 307.9h4.2v4.3h-4.2zM414.4 -1.2h4.2v4.3h-4.2zM414.4 307.9h4.2v4.3h-4.2zM414.4 448.4h4.2v4.3h-4.2zM423.7 45.7h4.2v4.3h-4.2zM423.7 167.4h4.2v4.3h-4.2zM433.1 8.2h4.2v4.3h-4.2zM433.1 73.8h4.2v4.3h-4.2zM433.1 204.9h4.2v4.3h-4.2zM433.1 476.4h4.2v4.3h-4.2zM442.5 101.9h4.2v4.3h-4.2zM451.8 8.2h4.2v4.3h-4.2zM461.2 401.5h4.2v4.3h-4.2z"/><path fill="#9fc6aa" d="M2.3 439.0h4.2v4.3h-4.2zM11.7 73.8h4.2v4.3h-4.2zM11.7 326.6h4.2v4.3h-4.2zM11.7 364.1h4.2v4.3h-4.2zM11.7 420.3h4.2v4.3h-4.2zM21.0 111.2h4.2v4.3h-4.2zM21.0 129.9h4.2v4.3h-4.2zM21.0 289.1h4.2v4.3h-4.2zM30.4 364.1h4.2v4.3h-4.2zM30.4 429.6h4.2v4.3h-4.2zM39.8 92.5h4.2v4.3h-4.2zM39.8 233.0h4.2v4.3h-4.2zM39.8 326.6h4.2v4.3h-4.2zM39.8 364.1h4.2v4.3h-4.2zM49.1 129.9h4.2v4.3h-4.2zM49.1 233.0h4.2v4.3h-4.2zM49.1 364.1h4.2v4.3h-4.2zM49.1 410.9h4.2v4.3h-4.2zM58.5 233.0h4.2v4.3h-4.2zM67.9 392.2h4.2v4.3h-4.2zM77.2 233.0h4.2v4.3h-4.2zM77.2 317.2h4.2v4.3h-4.2zM77.2 420.3h4.2v4.3h-4.2zM86.6 429.6h4.2v4.3h-4.2zM95.9 129.9h4.2v4.3h-4.2zM95.9 158.0h4.2v4.3h-4.2zM95.9 317.2h4.2v4.3h-4.2zM105.3 17.6h4.2v4.3h-4.2zM105.3 289.1h4.2v4.3h-4.2zM105.3 317.2h4.2v4.3h-4.2zM105.3 420.3h4.2v4.3h-4.2zM114.7 129.9h4.2v4.3h-4.2zM114.7 167.4h4.2v4.3h-4.2zM124.0 73.8h4.2v4.3h-4.2zM133.4 17.6h4.2v4.3h-4.2zM133.4 26.9h4.2v4.3h-4.2zM133.4 317.2h4.2v4.3h-4.2zM133.4 420.3h4.2v4.3h-4.2zM142.8 336.0h4.2v4.3h-4.2zM152.1 83.1h4.2v4.3h-4.2zM161.5 251.7h4.2v4.3h-4.2zM161.5 289.1h4.2v4.3h-4.2zM161.5 345.3h4.2v4.3h-4.2zM170.9 55.0h4.2v4.3h-4.2zM170.9 214.2h4.2v4.3h-4.2zM180.2 279.8h4.2v4.3h-4.2zM180.2 420.3h4.2v4.3h-4.2zM189.6 -1.2h4.2v4.3h-4.2zM189.6 26.9h4.2v4.3h-4.2zM189.6 289.1h4.2v4.3h-4.2zM199.0 -1.2h4.2v4.3h-4.2zM199.0 120.6h4.2v4.3h-4.2zM199.0 307.9h4.2v4.3h-4.2zM208.3 73.8h4.2v4.3h-4.2zM208.3 148.7h4.2v4.3h-4.2zM208.3 176.8h4.2v4.3h-4.2zM208.3 326.6h4.2v4.3h-4.2zM217.7 8.2h4.2v4.3h-4.2zM227.1 186.1h4.2v4.3h-4.2zM227.1 204.9h4.2v4.3h-4.2zM227.1 242.3h4.2v4.3h-4.2zM227.1 270.4h4.2v4.3h-4.2zM227.1 448.4h4.2v4.3h-4.2zM236.4 336.0h4.2v4.3h-4.2zM236.4 401.5h4.2v4.3h-4.2zM255.2 410.9h4.2v4.3h-4.2zM264.5 73.8h4.2v4.3h-4.2zM264.5 101.9h4.2v4.3h-4.2zM264.5 139.3h4.2v4.3h-4.2zM264.5 214.2h4.2v4.3h-4.2zM273.9 36.3h4.2v4.3h-4.2zM273.9 336.0h4.2v4.3h-4.2zM273.9 429.6h4.2v4.3h-4.2zM302.0 8.2h4.2v4.3h-4.2zM302.0 45.7h4.2v4.3h-4.2zM302.0 120.6h4.2v4.3h-4.2zM302.0 420.3h4.2v4.3h-4.2zM302.0 429.6h4.2v4.3h-4.2zM311.3 345.3h4.2v4.3h-4.2zM311.3 373.4h4.2v4.3h-4.2zM320.7 73.8h4.2v4.3h-4.2zM320.7 83.1h4.2v4.3h-4.2zM320.7 382.8h4.2v4.3h-4.2zM330.1 64.4h4.2v4.3h-4.2zM330.1 158.0h4.2v4.3h-4.2zM330.1 195.5h4.2v4.3h-4.2zM330.1 317.2h4.2v4.3h-4.2zM330.1 448.4h4.2v4.3h-4.2zM339.4 242.3h4.2v4.3h-4.2zM339.4 261.1h4.2v4.3h-4.2zM339.4 457.7h4.2v4.3h-4.2zM348.8 476.4h4.2v4.3h-4.2zM358.2 195.5h4.2v4.3h-4.2zM358.2 204.9h4.2v4.3h-4.2zM367.5 279.8h4.2v4.3h-4.2zM376.9 36.3h4.2v4.3h-4.2zM376.9 120.6h4.2v4.3h-4.2zM376.9 382.8h4.2v4.3h-4.2zM386.3 120.6h4.2v4.3h-4.2zM386.3 261.1h4.2v4.3h-4.2zM386.3 298.5h4.2v4.3h-4.2zM395.6 289.1h4.2v4.3h-4.2zM395.6 345.3h4.2v4.3h-4.2zM395.6 439.0h4.2v4.3h-4.2zM405.0 64.4h4.2v4.3h-4.2zM414.4 17.6h4.2v4.3h-4.2zM414.4 73.8h4.2v4.3h-4.2zM414.4 336.0h4.2v4.3h-4.2zM414.4 354.7h4.2v4.3h-4.2zM423.7 26.9h4.2v4.3h-4.2zM433.1 289.1h4.2v4.3h-4.2zM451.8 17.6h4.2v4.3h-4.2zM451.8 298.5h4.2v4.3h-4.2zM451.8 401.5h4.2v4.3h-4.2zM461.2 64.4h4.2v4.3h-4.2zM461.2 204.9h4.2v4.3h-4.2z"/><path fill="#8db4c5" d="M2.3 448.4h4.2v4.3h-4.2zM11.7 8.2h4.2v4.3h-4.2zM30.4 176.8h4.2v4.3h-4.2zM30.4 448.4h4.2v4.3h-4.2zM39.8 55.0h4.2v4.3h-4.2zM49.1 -1.2h4.2v4.3h-4.2zM49.1 120.6h4.2v4.3h-4.2zM58.5 55.0h4.2v4.3h-4.2zM67.9 55.0h4.2v4.3h-4.2zM67.9 129.9h4.2v4.3h-4.2zM67.9 345.3h4.2v4.3h-4.2zM77.2 204.9h4.2v4.3h-4.2zM77.2 279.8h4.2v4.3h-4.2zM77.2 336.0h4.2v4.3h-4.2zM86.6 83.1h4.2v4.3h-4.2zM86.6 129.9h4.2v4.3h-4.2zM86.6 167.4h4.2v4.3h-4.2zM86.6 186.1h4.2v4.3h-4.2zM86.6 298.5h4.2v4.3h-4.2zM95.9 270.4h4.2v4.3h-4.2zM105.3 73.8h4.2v4.3h-4.2zM105.3 92.5h4.2v4.3h-4.2zM105.3 111.2h4.2v4.3h-4.2zM105.3 195.5h4.2v4.3h-4.2zM105.3 429.6h4.2v4.3h-4.2zM114.7 307.9h4.2v4.3h-4.2zM124.0 270.4h4.2v4.3h-4.2zM124.0 345.3h4.2v4.3h-4.2zM133.4 36.3h4.2v4.3h-4.2zM133.4 92.5h4.2v4.3h-4.2zM133.4 410.9h4.2v4.3h-4.2zM142.8 26.9h4.2v4.3h-4.2zM142.8 176.8h4.2v4.3h-4.2zM142.8 270.4h4.2v4.3h-4.2zM142.8 448.4h4.2v4.3h-4.2zM152.1 36.3h4.2v4.3h-4.2zM161.5 223.6h4.2v4.3h-4.2zM170.9 204.9h4.2v4.3h-4.2zM170.9 242.3h4.2v4.3h-4.2zM180.2 55.0h4.2v4.3h-4.2zM180.2 148.7h4.2v4.3h-4.2zM180.2 261.1h4.2v4.3h-4.2zM189.6 148.7h4.2v4.3h-4.2zM199.0 101.9h4.2v4.3h-4.2zM199.0 354.7h4.2v4.3h-4.2zM199.0 373.4h4.2v4.3h-4.2zM199.0 439.0h4.2v4.3h-4.2zM208.3 111.2h4.2v4.3h-4.2zM208.3 129.9h4.2v4.3h-4.2zM208.3 270.4h4.2v4.3h-4.2zM208.3 439.0h4.2v4.3h-4.2zM217.7 167.4h4.2v4.3h-4.2zM227.1 307.9h4.2v4.3h-4.2zM227.1 317.2h4.2v4.3h-4.2zM227.1 382.8h4.2v4.3h-4.2zM236.4 101.9h4.2v4.3h-4.2zM236.4 167.4h4.2v4.3h-4.2zM236.4 326.6h4.2v4.3h-4.2zM236.4 364.1h4.2v4.3h-4.2zM236.4 392.2h4.2v4.3h-4.2zM245.8 476.4h4.2v4.3h-4.2zM255.2 289.1h4.2v4.3h-4.2zM264.5 195.5h4.2v4.3h-4.2zM273.9 55.0h4.2v4.3h-4.2zM273.9 326.6h4.2v4.3h-4.2zM283.2 467.1h4.2v4.3h-4.2zM292.6 -1.2h4.2v4.3h-4.2zM292.6 55.0h4.2v4.3h-4.2zM292.6 195.5h4.2v4.3h-4.2zM302.0 270.4h4.2v4.3h-4.2zM302.0 345.3h4.2v4.3h-4.2zM320.7 167.4h4.2v4.3h-4.2zM320.7 214.2h4.2v4.3h-4.2zM330.1 336.0h4.2v4.3h-4.2zM339.4 148.7h4.2v4.3h-4.2zM339.4 167.4h4.2v4.3h-4.2zM339.4 439.0h4.2v4.3h-4.2zM348.8 317.2h4.2v4.3h-4.2zM367.5 326.6h4.2v4.3h-4.2zM367.5 364.1h4.2v4.3h-4.2zM367.5 448.4h4.2v4.3h-4.2zM367.5 457.7h4.2v4.3h-4.2zM367.5 467.1h4.2v4.3h-4.2zM376.9 167.4h4.2v4.3h-4.2zM395.6 129.9h4.2v4.3h-4.2zM405.0 36.3h4.2v4.3h-4.2zM405.0 401.5h4.2v4.3h-4.2zM423.7 36.3h4.2v4.3h-4.2zM423.7 336.0h4.2v4.3h-4.2zM423.7 373.4h4.2v4.3h-4.2zM423.7 448.4h4.2v4.3h-4.2zM433.1 345.3h4.2v4.3h-4.2zM442.5 83.1h4.2v4.3h-4.2zM442.5 364.1h4.2v4.3h-4.2zM451.8 167.4h4.2v4.3h-4.2zM461.2 410.9h4.2v4.3h-4.2zM461.2 439.0h4.2v4.3h-4.2z"/><path fill="#ad5349" d="M11.7 45.7h4.2v4.3h-4.2zM11.7 158.0h4.2v4.3h-4.2zM11.7 233.0h4.2v4.3h-4.2zM30.4 392.2h4.2v4.3h-4.2zM30.4 420.3h4.2v4.3h-4.2zM39.8 139.3h4.2v4.3h-4.2zM49.1 345.3h4.2v4.3h-4.2zM49.1 392.2h4.2v4.3h-4.2zM67.9 401.5h4.2v4.3h-4.2zM77.2 214.2h4.2v4.3h-4.2zM86.6 111.2h4.2v4.3h-4.2zM86.6 354.7h4.2v4.3h-4.2zM105.3 223.6h4.2v4.3h-4.2zM124.0 186.1h4.2v4.3h-4.2zM124.0 410.9h4.2v4.3h-4.2zM133.4 111.2h4.2v4.3h-4.2zM142.8 467.1h4.2v4.3h-4.2zM152.1 158.0h4.2v4.3h-4.2zM170.9 345.3h4.2v4.3h-4.2zM189.6 214.2h4.2v4.3h-4.2zM189.6 317.2h4.2v4.3h-4.2zM208.3 204.9h4.2v4.3h-4.2zM227.1 373.4h4.2v4.3h-4.2zM245.8 120.6h4.2v4.3h-4.2zM255.2 354.7h4.2v4.3h-4.2zM264.5 -1.2h4.2v4.3h-4.2zM264.5 129.9h4.2v4.3h-4.2zM264.5 373.4h4.2v4.3h-4.2zM273.9 242.3h4.2v4.3h-4.2zM273.9 410.9h4.2v4.3h-4.2zM283.2 17.6h4.2v4.3h-4.2zM283.2 92.5h4.2v4.3h-4.2zM311.3 467.1h4.2v4.3h-4.2zM330.1 204.9h4.2v4.3h-4.2zM395.6 17.6h4.2v4.3h-4.2zM405.0 279.8h4.2v4.3h-4.2zM414.4 139.3h4.2v4.3h-4.2zM414.4 214.2h4.2v4.3h-4.2zM414.4 410.9h4.2v4.3h-4.2zM414.4 439.0h4.2v4.3h-4.2zM433.1 214.2h4.2v4.3h-4.2zM433.1 364.1h4.2v4.3h-4.2zM442.5 223.6h4.2v4.3h-4.2zM451.8 233.0h4.2v4.3h-4.2zM451.8 279.8h4.2v4.3h-4.2zM461.2 120.6h4.2v4.3h-4.2z"/><path fill="#5885a1" d="M11.7 55.0h4.2v4.3h-4.2zM11.7 289.1h4.2v4.3h-4.2zM21.0 120.6h4.2v4.3h-4.2zM30.4 83.1h4.2v4.3h-4.2zM30.4 101.9h4.2v4.3h-4.2zM30.4 439.0h4.2v4.3h-4.2zM49.1 92.5h4.2v4.3h-4.2zM58.5 195.5h4.2v4.3h-4.2zM86.6 242.3h4.2v4.3h-4.2zM114.7 326.6h4.2v4.3h-4.2zM114.7 364.1h4.2v4.3h-4.2zM133.4 354.7h4.2v4.3h-4.2zM142.8 195.5h4.2v4.3h-4.2zM142.8 242.3h4.2v4.3h-4.2zM152.1 326.6h4.2v4.3h-4.2zM170.9 410.9h4.2v4.3h-4.2zM170.9 420.3h4.2v4.3h-4.2zM180.2 64.4h4.2v4.3h-4.2zM189.6 120.6h4.2v4.3h-4.2zM199.0 8.2h4.2v4.3h-4.2zM199.0 176.8h4.2v4.3h-4.2zM217.7 326.6h4.2v4.3h-4.2zM217.7 429.6h4.2v4.3h-4.2zM227.1 410.9h4.2v4.3h-4.2zM236.4 410.9h4.2v4.3h-4.2zM245.8 17.6h4.2v4.3h-4.2zM245.8 129.9h4.2v4.3h-4.2zM245.8 195.5h4.2v4.3h-4.2zM245.8 345.3h4.2v4.3h-4.2zM255.2 64.4h4.2v4.3h-4.2zM264.5 45.7h4.2v4.3h-4.2zM264.5 120.6h4.2v4.3h-4.2zM273.9 120.6h4.2v4.3h-4.2zM283.2 36.3h4.2v4.3h-4.2zM283.2 73.8h4.2v4.3h-4.2zM292.6 26.9h4.2v4.3h-4.2zM302.0 392.2h4.2v4.3h-4.2zM311.3 223.6h4.2v4.3h-4.2zM311.3 251.7h4.2v4.3h-4.2zM339.4 8.2h4.2v4.3h-4.2zM348.8 410.9h4.2v4.3h-4.2zM358.2 158.0h4.2v4.3h-4.2zM367.5 251.7h4.2v4.3h-4.2zM376.9 55.0h4.2v4.3h-4.2zM376.9 439.0h4.2v4.3h-4.2zM395.6 223.6h4.2v4.3h-4.2zM414.4 120.6h4.2v4.3h-4.2zM414.4 345.3h4.2v4.3h-4.2zM423.7 233.0h4.2v4.3h-4.2zM433.1 55.0h4.2v4.3h-4.2zM433.1 392.2h4.2v4.3h-4.2zM442.5 270.4h4.2v4.3h-4.2z"/><path fill="#799f7a" d="M1.6 -6.4h5.6v1.1h-5.6zM1.6 40.5h5.6v1.1h-5.6zM1.6 237.1h5.6v1.1h-5.6zM1.6 349.5h5.6v1.1h-5.6zM11.0 77.9h5.6v1.1h-5.6zM11.0 405.7h5.6v1.1h-5.6zM20.3 31.1h5.6v1.1h-5.6zM20.3 218.4h5.6v1.1h-5.6zM20.3 265.2h5.6v1.1h-5.6zM20.3 321.4h5.6v1.1h-5.6zM20.3 330.8h5.6v1.1h-5.6zM20.3 405.7h5.6v1.1h-5.6zM29.7 59.2h5.6v1.1h-5.6zM29.7 106.0h5.6v1.1h-5.6zM29.7 199.7h5.6v1.1h-5.6zM29.7 302.7h5.6v1.1h-5.6zM39.1 -6.4h5.6v1.1h-5.6zM39.1 143.5h5.6v1.1h-5.6zM39.1 330.8h5.6v1.1h-5.6zM48.4 12.4h5.6v1.1h-5.6zM57.8 21.7h5.6v1.1h-5.6zM57.8 40.5h5.6v1.1h-5.6zM57.8 96.7h5.6v1.1h-5.6zM57.8 415.1h5.6v1.1h-5.6zM67.2 31.1h5.6v1.1h-5.6zM67.2 40.5h5.6v1.1h-5.6zM67.2 87.3h5.6v1.1h-5.6zM67.2 255.9h5.6v1.1h-5.6zM67.2 302.7h5.6v1.1h-5.6zM76.5 31.1h5.6v1.1h-5.6zM76.5 40.5h5.6v1.1h-5.6zM76.5 246.5h5.6v1.1h-5.6zM76.5 471.2h5.6v1.1h-5.6zM85.9 302.7h5.6v1.1h-5.6zM95.2 227.8h5.6v1.1h-5.6zM95.2 237.1h5.6v1.1h-5.6zM95.2 368.2h5.6v1.1h-5.6zM104.6 171.6h5.6v1.1h-5.6zM104.6 368.2h5.6v1.1h-5.6zM104.6 471.2h5.6v1.1h-5.6zM123.3 124.7h5.6v1.1h-5.6zM123.3 218.4h5.6v1.1h-5.6zM123.3 302.7h5.6v1.1h-5.6zM132.7 59.2h5.6v1.1h-5.6zM132.7 134.1h5.6v1.1h-5.6zM132.7 171.6h5.6v1.1h-5.6zM132.7 218.4h5.6v1.1h-5.6zM132.7 302.7h5.6v1.1h-5.6zM132.7 424.4h5.6v1.1h-5.6zM142.1 -6.4h5.6v1.1h-5.6zM142.1 209.0h5.6v1.1h-5.6zM142.1 218.4h5.6v1.1h-5.6zM142.1 227.8h5.6v1.1h-5.6zM142.1 312.0h5.6v1.1h-5.6zM151.4 96.7h5.6v1.1h-5.6zM151.4 377.6h5.6v1.1h-5.6zM151.4 452.5h5.6v1.1h-5.6zM160.8 -6.4h5.6v1.1h-5.6zM160.8 124.7h5.6v1.1h-5.6zM160.8 143.5h5.6v1.1h-5.6zM160.8 162.2h5.6v1.1h-5.6zM160.8 199.7h5.6v1.1h-5.6zM170.2 302.7h5.6v1.1h-5.6zM179.5 246.5h5.6v1.1h-5.6zM179.5 358.9h5.6v1.1h-5.6zM179.5 471.2h5.6v1.1h-5.6zM188.9 106.0h5.6v1.1h-5.6zM188.9 218.4h5.6v1.1h-5.6zM188.9 340.1h5.6v1.1h-5.6zM188.9 358.9h5.6v1.1h-5.6zM198.3 59.2h5.6v1.1h-5.6zM198.3 274.6h5.6v1.1h-5.6zM198.3 424.4h5.6v1.1h-5.6zM207.6 134.1h5.6v1.1h-5.6zM207.6 152.8h5.6v1.1h-5.6zM207.6 283.9h5.6v1.1h-5.6zM207.6 368.2h5.6v1.1h-5.6zM207.6 461.9h5.6v1.1h-5.6zM217.0 180.9h5.6v1.1h-5.6zM217.0 237.1h5.6v1.1h-5.6zM217.0 246.5h5.6v1.1h-5.6zM217.0 330.8h5.6v1.1h-5.6zM226.4 12.4h5.6v1.1h-5.6zM226.4 152.8h5.6v1.1h-5.6zM226.4 330.8h5.6v1.1h-5.6zM226.4 340.1h5.6v1.1h-5.6zM235.7 40.5h5.6v1.1h-5.6zM235.7 68.6h5.6v1.1h-5.6zM235.7 461.9h5.6v1.1h-5.6zM245.1 368.2h5.6v1.1h-5.6zM245.1 443.2h5.6v1.1h-5.6zM254.5 124.7h5.6v1.1h-5.6zM254.5 209.0h5.6v1.1h-5.6zM254.5 358.9h5.6v1.1h-5.6zM263.8 49.8h5.6v1.1h-5.6zM273.2 -6.4h5.6v1.1h-5.6zM273.2 68.6h5.6v1.1h-5.6zM273.2 87.3h5.6v1.1h-5.6zM273.2 255.9h5.6v1.1h-5.6zM273.2 265.2h5.6v1.1h-5.6zM282.5 96.7h5.6v1.1h-5.6zM282.5 162.2h5.6v1.1h-5.6zM291.9 180.9h5.6v1.1h-5.6zM291.9 237.1h5.6v1.1h-5.6zM291.9 293.3h5.6v1.1h-5.6zM291.9 424.4h5.6v1.1h-5.6zM291.9 471.2h5.6v1.1h-5.6zM301.3 218.4h5.6v1.1h-5.6zM310.6 12.4h5.6v1.1h-5.6zM310.6 134.1h5.6v1.1h-5.6zM320.0 59.2h5.6v1.1h-5.6zM320.0 227.8h5.6v1.1h-5.6zM320.0 452.5h5.6v1.1h-5.6zM329.4 115.4h5.6v1.1h-5.6zM329.4 143.5h5.6v1.1h-5.6zM329.4 255.9h5.6v1.1h-5.6zM329.4 377.6h5.6v1.1h-5.6zM338.7 190.3h5.6v1.1h-5.6zM338.7 293.3h5.6v1.1h-5.6zM338.7 405.7h5.6v1.1h-5.6zM348.1 415.1h5.6v1.1h-5.6zM348.1 433.8h5.6v1.1h-5.6zM357.5 77.9h5.6v1.1h-5.6zM357.5 330.8h5.6v1.1h-5.6zM366.8 106.0h5.6v1.1h-5.6zM366.8 171.6h5.6v1.1h-5.6zM366.8 377.6h5.6v1.1h-5.6zM366.8 387.0h5.6v1.1h-5.6zM376.2 209.0h5.6v1.1h-5.6zM376.2 321.4h5.6v1.1h-5.6zM385.6 12.4h5.6v1.1h-5.6zM385.6 31.1h5.6v1.1h-5.6zM385.6 171.6h5.6v1.1h-5.6zM385.6 209.0h5.6v1.1h-5.6zM385.6 387.0h5.6v1.1h-5.6zM385.6 443.2h5.6v1.1h-5.6zM385.6 471.2h5.6v1.1h-5.6zM394.9 227.8h5.6v1.1h-5.6zM394.9 246.5h5.6v1.1h-5.6zM394.9 302.7h5.6v1.1h-5.6zM394.9 424.4h5.6v1.1h-5.6zM404.3 49.8h5.6v1.1h-5.6zM404.3 106.0h5.6v1.1h-5.6zM404.3 218.4h5.6v1.1h-5.6zM404.3 283.9h5.6v1.1h-5.6zM404.3 387.0h5.6v1.1h-5.6zM413.7 31.1h5.6v1.1h-5.6zM413.7 152.8h5.6v1.1h-5.6zM413.7 199.7h5.6v1.1h-5.6zM413.7 237.1h5.6v1.1h-5.6zM413.7 274.6h5.6v1.1h-5.6zM413.7 415.1h5.6v1.1h-5.6zM413.7 471.2h5.6v1.1h-5.6zM423.0 115.4h5.6v1.1h-5.6zM423.0 199.7h5.6v1.1h-5.6zM432.4 152.8h5.6v1.1h-5.6zM432.4 180.9h5.6v1.1h-5.6zM432.4 265.2h5.6v1.1h-5.6zM432.4 312.0h5.6v1.1h-5.6zM432.4 424.4h5.6v1.1h-5.6zM441.8 12.4h5.6v1.1h-5.6zM441.8 31.1h5.6v1.1h-5.6zM441.8 368.2h5.6v1.1h-5.6zM441.8 396.3h5.6v1.1h-5.6zM441.8 405.7h5.6v1.1h-5.6zM441.8 424.4h5.6v1.1h-5.6zM451.1 255.9h5.6v1.1h-5.6zM451.1 340.1h5.6v1.1h-5.6zM451.1 368.2h5.6v1.1h-5.6zM460.5 49.8h5.6v1.1h-5.6z"/><path fill="#d2d2d2" d="M1.6 3.0h5.6v1.1h-5.6zM1.6 218.4h5.6v1.1h-5.6zM11.0 12.4h5.6v1.1h-5.6zM11.0 255.9h5.6v1.1h-5.6zM11.0 433.8h5.6v1.1h-5.6zM20.3 209.0h5.6v1.1h-5.6zM20.3 246.5h5.6v1.1h-5.6zM20.3 302.7h5.6v1.1h-5.6zM20.3 433.8h5.6v1.1h-5.6zM20.3 471.2h5.6v1.1h-5.6zM29.7 68.6h5.6v1.1h-5.6zM39.1 59.2h5.6v1.1h-5.6zM39.1 77.9h5.6v1.1h-5.6zM39.1 106.0h5.6v1.1h-5.6zM39.1 162.2h5.6v1.1h-5.6zM39.1 312.0h5.6v1.1h-5.6zM39.1 461.9h5.6v1.1h-5.6zM48.4 283.9h5.6v1.1h-5.6zM48.4 368.2h5.6v1.1h-5.6zM48.4 396.3h5.6v1.1h-5.6zM57.8 -6.4h5.6v1.1h-5.6zM57.8 255.9h5.6v1.1h-5.6zM67.2 3.0h5.6v1.1h-5.6zM67.2 358.9h5.6v1.1h-5.6zM67.2 443.2h5.6v1.1h-5.6zM76.5 265.2h5.6v1.1h-5.6zM76.5 349.5h5.6v1.1h-5.6zM76.5 461.9h5.6v1.1h-5.6zM85.9 274.6h5.6v1.1h-5.6zM95.2 68.6h5.6v1.1h-5.6zM95.2 96.7h5.6v1.1h-5.6zM95.2 218.4h5.6v1.1h-5.6zM104.6 255.9h5.6v1.1h-5.6zM104.6 265.2h5.6v1.1h-5.6zM104.6 340.1h5.6v1.1h-5.6zM114.0 265.2h5.6v1.1h-5.6zM123.3 424.4h5.6v1.1h-5.6zM123.3 461.9h5.6v1.1h-5.6zM132.7 143.5h5.6v1.1h-5.6zM151.4 68.6h5.6v1.1h-5.6zM151.4 387.0h5.6v1.1h-5.6zM160.8 87.3h5.6v1.1h-5.6zM160.8 302.7h5.6v1.1h-5.6zM160.8 387.0h5.6v1.1h-5.6zM170.2 77.9h5.6v1.1h-5.6zM179.5 115.4h5.6v1.1h-5.6zM179.5 209.0h5.6v1.1h-5.6zM179.5 265.2h5.6v1.1h-5.6zM179.5 302.7h5.6v1.1h-5.6zM179.5 387.0h5.6v1.1h-5.6zM179.5 424.4h5.6v1.1h-5.6zM188.9 246.5h5.6v1.1h-5.6zM188.9 293.3h5.6v1.1h-5.6zM188.9 424.4h5.6v1.1h-5.6zM188.9 452.5h5.6v1.1h-5.6zM198.3 209.0h5.6v1.1h-5.6zM207.6 330.8h5.6v1.1h-5.6zM207.6 377.6h5.6v1.1h-5.6zM217.0 396.3h5.6v1.1h-5.6zM226.4 349.5h5.6v1.1h-5.6zM226.4 387.0h5.6v1.1h-5.6zM235.7 12.4h5.6v1.1h-5.6zM235.7 21.7h5.6v1.1h-5.6zM235.7 59.2h5.6v1.1h-5.6zM235.7 293.3h5.6v1.1h-5.6zM245.1 180.9h5.6v1.1h-5.6zM254.5 424.4h5.6v1.1h-5.6zM263.8 21.7h5.6v1.1h-5.6zM263.8 59.2h5.6v1.1h-5.6zM263.8 87.3h5.6v1.1h-5.6zM263.8 246.5h5.6v1.1h-5.6zM263.8 283.9h5.6v1.1h-5.6zM282.5 368.2h5.6v1.1h-5.6zM291.9 199.7h5.6v1.1h-5.6zM291.9 274.6h5.6v1.1h-5.6zM310.6 49.8h5.6v1.1h-5.6zM310.6 115.4h5.6v1.1h-5.6zM320.0 3.0h5.6v1.1h-5.6zM320.0 152.8h5.6v1.1h-5.6zM320.0 265.2h5.6v1.1h-5.6zM320.0 283.9h5.6v1.1h-5.6zM320.0 387.0h5.6v1.1h-5.6zM329.4 3.0h5.6v1.1h-5.6zM329.4 49.8h5.6v1.1h-5.6zM329.4 87.3h5.6v1.1h-5.6zM329.4 124.7h5.6v1.1h-5.6zM329.4 387.0h5.6v1.1h-5.6zM329.4 471.2h5.6v1.1h-5.6zM338.7 302.7h5.6v1.1h-5.6zM348.1 265.2h5.6v1.1h-5.6zM348.1 293.3h5.6v1.1h-5.6zM348.1 321.4h5.6v1.1h-5.6zM357.5 134.1h5.6v1.1h-5.6zM357.5 415.1h5.6v1.1h-5.6zM357.5 433.8h5.6v1.1h-5.6zM366.8 255.9h5.6v1.1h-5.6zM366.8 368.2h5.6v1.1h-5.6zM376.2 274.6h5.6v1.1h-5.6zM385.6 199.7h5.6v1.1h-5.6zM385.6 312.0h5.6v1.1h-5.6zM394.9 115.4h5.6v1.1h-5.6zM394.9 152.8h5.6v1.1h-5.6zM394.9 255.9h5.6v1.1h-5.6zM404.3 96.7h5.6v1.1h-5.6zM404.3 293.3h5.6v1.1h-5.6zM404.3 377.6h5.6v1.1h-5.6zM404.3 471.2h5.6v1.1h-5.6zM413.7 368.2h5.6v1.1h-5.6zM423.0 68.6h5.6v1.1h-5.6zM432.4 190.3h5.6v1.1h-5.6zM432.4 293.3h5.6v1.1h-5.6zM432.4 349.5h5.6v1.1h-5.6zM441.8 40.5h5.6v1.1h-5.6zM441.8 246.5h5.6v1.1h-5.6zM441.8 330.8h5.6v1.1h-5.6zM451.1 49.8h5.6v1.1h-5.6zM451.1 96.7h5.6v1.1h-5.6zM451.1 302.7h5.6v1.1h-5.6zM460.5 471.2h5.6v1.1h-5.6z"/><path fill="#daa881" d="M1.6 12.4h5.6v1.1h-5.6zM1.6 274.6h5.6v1.1h-5.6zM11.0 180.9h5.6v1.1h-5.6zM20.3 171.6h5.6v1.1h-5.6zM39.1 190.3h5.6v1.1h-5.6zM57.8 349.5h5.6v1.1h-5.6zM67.2 283.9h5.6v1.1h-5.6zM76.5 283.9h5.6v1.1h-5.6zM85.9 255.9h5.6v1.1h-5.6zM104.6 31.1h5.6v1.1h-5.6zM104.6 115.4h5.6v1.1h-5.6zM114.0 312.0h5.6v1.1h-5.6zM114.0 387.0h5.6v1.1h-5.6zM114.0 424.4h5.6v1.1h-5.6zM123.3 59.2h5.6v1.1h-5.6zM142.1 40.5h5.6v1.1h-5.6zM151.4 424.4h5.6v1.1h-5.6zM160.8 68.6h5.6v1.1h-5.6zM160.8 330.8h5.6v1.1h-5.6zM179.5 31.1h5.6v1.1h-5.6zM179.5 461.9h5.6v1.1h-5.6zM188.9 180.9h5.6v1.1h-5.6zM188.9 471.2h5.6v1.1h-5.6zM198.3 40.5h5.6v1.1h-5.6zM198.3 68.6h5.6v1.1h-5.6zM198.3 246.5h5.6v1.1h-5.6zM207.6 40.5h5.6v1.1h-5.6zM207.6 180.9h5.6v1.1h-5.6zM207.6 415.1h5.6v1.1h-5.6zM217.0 106.0h5.6v1.1h-5.6zM217.0 124.7h5.6v1.1h-5.6zM226.4 96.7h5.6v1.1h-5.6zM226.4 321.4h5.6v1.1h-5.6zM235.7 190.3h5.6v1.1h-5.6zM235.7 274.6h5.6v1.1h-5.6zM235.7 443.2h5.6v1.1h-5.6zM245.1 265.2h5.6v1.1h-5.6zM254.5 77.9h5.6v1.1h-5.6zM254.5 134.1h5.6v1.1h-5.6zM254.5 340.1h5.6v1.1h-5.6zM254.5 443.2h5.6v1.1h-5.6zM263.8 424.4h5.6v1.1h-5.6zM263.8 433.8h5.6v1.1h-5.6zM273.2 293.3h5.6v1.1h-5.6zM282.5 180.9h5.6v1.1h-5.6zM282.5 349.5h5.6v1.1h-5.6zM291.9 152.8h5.6v1.1h-5.6zM291.9 302.7h5.6v1.1h-5.6zM310.6 96.7h5.6v1.1h-5.6zM310.6 443.2h5.6v1.1h-5.6zM320.0 124.7h5.6v1.1h-5.6zM357.5 68.6h5.6v1.1h-5.6zM357.5 171.6h5.6v1.1h-5.6zM357.5 218.4h5.6v1.1h-5.6zM357.5 340.1h5.6v1.1h-5.6zM366.8 40.5h5.6v1.1h-5.6zM385.6 405.7h5.6v1.1h-5.6zM394.9 59.2h5.6v1.1h-5.6zM423.0 124.7h5.6v1.1h-5.6zM432.4 115.4h5.6v1.1h-5.6zM441.8 190.3h5.6v1.1h-5.6zM441.8 302.7h5.6v1.1h-5.6zM460.5 31.1h5.6v1.1h-5.6z"/><path fill="#a1a1a1" d="M1.6 21.7h5.6v1.1h-5.6zM1.6 87.3h5.6v1.1h-5.6zM1.6 96.7h5.6v1.1h-5.6zM1.6 124.7h5.6v1.1h-5.6zM1.6 227.8h5.6v1.1h-5.6zM1.6 471.2h5.6v1.1h-5.6zM11.0 265.2h5.6v1.1h-5.6zM11.0 293.3h5.6v1.1h-5.6zM11.0 330.8h5.6v1.1h-5.6zM20.3 162.2h5.6v1.1h-5.6zM20.3 190.3h5.6v1.1h-5.6zM20.3 255.9h5.6v1.1h-5.6zM20.3 340.1h5.6v1.1h-5.6zM20.3 387.0h5.6v1.1h-5.6zM20.3 396.3h5.6v1.1h-5.6zM29.7 405.7h5.6v1.1h-5.6zM39.1 68.6h5.6v1.1h-5.6zM48.4 49.8h5.6v1.1h-5.6zM48.4 293.3h5.6v1.1h-5.6zM48.4 312.0h5.6v1.1h-5.6zM48.4 330.8h5.6v1.1h-5.6zM57.8 162.2h5.6v1.1h-5.6zM57.8 209.0h5.6v1.1h-5.6zM57.8 293.3h5.6v1.1h-5.6zM57.8 330.8h5.6v1.1h-5.6zM57.8 368.2h5.6v1.1h-5.6zM57.8 387.0h5.6v1.1h-5.6zM57.8 452.5h5.6v1.1h-5.6zM67.2 -6.4h5.6v1.1h-5.6zM67.2 171.6h5.6v1.1h-5.6zM67.2 321.4h5.6v1.1h-5.6zM67.2 330.8h5.6v1.1h-5.6zM67.2 368.2h5.6v1.1h-5.6zM76.5 124.7h5.6v1.1h-5.6zM85.9 -6.4h5.6v1.1h-5.6zM85.9 115.4h5.6v1.1h-5.6zM85.9 143.5h5.6v1.1h-5.6zM85.9 265.2h5.6v1.1h-5.6zM85.9 415.1h5.6v1.1h-5.6zM95.2 283.9h5.6v1.1h-5.6zM95.2 405.7h5.6v1.1h-5.6zM104.6 152.8h5.6v1.1h-5.6zM104.6 358.9h5.6v1.1h-5.6zM104.6 377.6h5.6v1.1h-5.6zM114.0 21.7h5.6v1.1h-5.6zM114.0 255.9h5.6v1.1h-5.6zM114.0 405.7h5.6v1.1h-5.6zM114.0 443.2h5.6v1.1h-5.6zM114.0 452.5h5.6v1.1h-5.6zM132.7 190.3h5.6v1.1h-5.6zM142.1 246.5h5.6v1.1h-5.6zM142.1 358.9h5.6v1.1h-5.6zM142.1 368.2h5.6v1.1h-5.6zM142.1 471.2h5.6v1.1h-5.6zM151.4 171.6h5.6v1.1h-5.6zM151.4 237.1h5.6v1.1h-5.6zM151.4 340.1h5.6v1.1h-5.6zM160.8 40.5h5.6v1.1h-5.6zM160.8 77.9h5.6v1.1h-5.6zM160.8 349.5h5.6v1.1h-5.6zM160.8 424.4h5.6v1.1h-5.6zM160.8 471.2h5.6v1.1h-5.6zM170.2 180.9h5.6v1.1h-5.6zM170.2 265.2h5.6v1.1h-5.6zM170.2 452.5h5.6v1.1h-5.6zM170.2 461.9h5.6v1.1h-5.6zM179.5 -6.4h5.6v1.1h-5.6zM179.5 40.5h5.6v1.1h-5.6zM179.5 237.1h5.6v1.1h-5.6zM179.5 443.2h5.6v1.1h-5.6zM188.9 31.1h5.6v1.1h-5.6zM188.9 349.5h5.6v1.1h-5.6zM188.9 461.9h5.6v1.1h-5.6zM198.3 396.3h5.6v1.1h-5.6zM207.6 312.0h5.6v1.1h-5.6zM207.6 349.5h5.6v1.1h-5.6zM207.6 443.2h5.6v1.1h-5.6zM217.0 12.4h5.6v1.1h-5.6zM217.0 49.8h5.6v1.1h-5.6zM217.0 68.6h5.6v1.1h-5.6zM217.0 143.5h5.6v1.1h-5.6zM217.0 152.8h5.6v1.1h-5.6zM217.0 377.6h5.6v1.1h-5.6zM226.4 87.3h5.6v1.1h-5.6zM226.4 106.0h5.6v1.1h-5.6zM226.4 190.3h5.6v1.1h-5.6zM226.4 424.4h5.6v1.1h-5.6zM235.7 106.0h5.6v1.1h-5.6zM235.7 124.7h5.6v1.1h-5.6zM235.7 199.7h5.6v1.1h-5.6zM245.1 -6.4h5.6v1.1h-5.6zM245.1 218.4h5.6v1.1h-5.6zM245.1 349.5h5.6v1.1h-5.6zM254.5 49.8h5.6v1.1h-5.6zM254.5 190.3h5.6v1.1h-5.6zM263.8 12.4h5.6v1.1h-5.6zM263.8 415.1h5.6v1.1h-5.6zM282.5 40.5h5.6v1.1h-5.6zM282.5 227.8h5.6v1.1h-5.6zM282.5 340.1h5.6v1.1h-5.6zM282.5 405.7h5.6v1.1h-5.6zM282.5 424.4h5.6v1.1h-5.6zM282.5 443.2h5.6v1.1h-5.6zM291.9 59.2h5.6v1.1h-5.6zM291.9 171.6h5.6v1.1h-5.6zM301.3 227.8h5.6v1.1h-5.6zM301.3 368.2h5.6v1.1h-5.6zM310.6 87.3h5.6v1.1h-5.6zM310.6 312.0h5.6v1.1h-5.6zM310.6 405.7h5.6v1.1h-5.6zM320.0 218.4h5.6v1.1h-5.6zM320.0 246.5h5.6v1.1h-5.6zM320.0 405.7h5.6v1.1h-5.6zM329.4 162.2h5.6v1.1h-5.6zM329.4 293.3h5.6v1.1h-5.6zM338.7 31.1h5.6v1.1h-5.6zM338.7 40.5h5.6v1.1h-5.6zM338.7 134.1h5.6v1.1h-5.6zM338.7 368.2h5.6v1.1h-5.6zM348.1 59.2h5.6v1.1h-5.6zM348.1 96.7h5.6v1.1h-5.6zM348.1 171.6h5.6v1.1h-5.6zM348.1 209.0h5.6v1.1h-5.6zM348.1 246.5h5.6v1.1h-5.6zM357.5 96.7h5.6v1.1h-5.6zM357.5 349.5h5.6v1.1h-5.6zM357.5 424.4h5.6v1.1h-5.6zM366.8 -6.4h5.6v1.1h-5.6zM366.8 265.2h5.6v1.1h-5.6zM366.8 330.8h5.6v1.1h-5.6zM376.2 21.7h5.6v1.1h-5.6zM376.2 302.7h5.6v1.1h-5.6zM385.6 68.6h5.6v1.1h-5.6zM385.6 246.5h5.6v1.1h-5.6zM394.9 106.0h5.6v1.1h-5.6zM394.9 134.1h5.6v1.1h-5.6zM394.9 143.5h5.6v1.1h-5.6zM394.9 274.6h5.6v1.1h-5.6zM404.3 152.8h5.6v1.1h-5.6zM404.3 190.3h5.6v1.1h-5.6zM404.3 199.7h5.6v1.1h-5.6zM404.3 312.0h5.6v1.1h-5.6zM404.3 340.1h5.6v1.1h-5.6zM413.7 77.9h5.6v1.1h-5.6zM413.7 171.6h5.6v1.1h-5.6zM413.7 218.4h5.6v1.1h-5.6zM413.7 265.2h5.6v1.1h-5.6zM413.7 293.3h5.6v1.1h-5.6zM423.0 12.4h5.6v1.1h-5.6zM423.0 293.3h5.6v1.1h-5.6zM423.0 340.1h5.6v1.1h-5.6zM423.0 396.3h5.6v1.1h-5.6zM432.4 40.5h5.6v1.1h-5.6zM432.4 405.7h5.6v1.1h-5.6zM441.8 3.0h5.6v1.1h-5.6zM441.8 49.8h5.6v1.1h-5.6zM441.8 87.3h5.6v1.1h-5.6zM441.8 124.7h5.6v1.1h-5.6zM451.1 77.9h5.6v1.1h-5.6zM451.1 124.7h5.6v1.1h-5.6zM451.1 358.9h5.6v1.1h-5.6zM460.5 106.0h5.6v1.1h-5.6zM460.5 180.9h5.6v1.1h-5.6zM460.5 218.4h5.6v1.1h-5.6zM460.5 246.5h5.6v1.1h-5.6zM460.5 312.0h5.6v1.1h-5.6zM460.5 340.1h5.6v1.1h-5.6zM460.5 358.9h5.6v1.1h-5.6zM460.5 415.1h5.6v1.1h-5.6zM460.5 443.2h5.6v1.1h-5.6z"/><path fill="#a69181" d="M1.6 31.1h5.6v1.1h-5.6zM1.6 59.2h5.6v1.1h-5.6zM1.6 424.4h5.6v1.1h-5.6zM20.3 68.6h5.6v1.1h-5.6zM20.3 461.9h5.6v1.1h-5.6zM29.7 -6.4h5.6v1.1h-5.6zM29.7 12.4h5.6v1.1h-5.6zM29.7 87.3h5.6v1.1h-5.6zM29.7 190.3h5.6v1.1h-5.6zM39.1 199.7h5.6v1.1h-5.6zM39.1 387.0h5.6v1.1h-5.6zM39.1 396.3h5.6v1.1h-5.6zM39.1 405.7h5.6v1.1h-5.6zM48.4 21.7h5.6v1.1h-5.6zM48.4 96.7h5.6v1.1h-5.6zM48.4 152.8h5.6v1.1h-5.6zM48.4 162.2h5.6v1.1h-5.6zM48.4 190.3h5.6v1.1h-5.6zM57.8 12.4h5.6v1.1h-5.6zM57.8 115.4h5.6v1.1h-5.6zM57.8 461.9h5.6v1.1h-5.6zM67.2 68.6h5.6v1.1h-5.6zM67.2 227.8h5.6v1.1h-5.6zM76.5 77.9h5.6v1.1h-5.6zM76.5 96.7h5.6v1.1h-5.6zM76.5 190.3h5.6v1.1h-5.6zM76.5 358.9h5.6v1.1h-5.6zM76.5 368.2h5.6v1.1h-5.6zM85.9 87.3h5.6v1.1h-5.6zM85.9 96.7h5.6v1.1h-5.6zM85.9 387.0h5.6v1.1h-5.6zM95.2 77.9h5.6v1.1h-5.6zM95.2 115.4h5.6v1.1h-5.6zM95.2 461.9h5.6v1.1h-5.6zM104.6 452.5h5.6v1.1h-5.6zM114.0 31.1h5.6v1.1h-5.6zM114.0 274.6h5.6v1.1h-5.6zM114.0 461.9h5.6v1.1h-5.6zM123.3 274.6h5.6v1.1h-5.6zM151.4 124.7h5.6v1.1h-5.6zM160.8 377.6h5.6v1.1h-5.6zM160.8 405.7h5.6v1.1h-5.6zM170.2 162.2h5.6v1.1h-5.6zM179.5 12.4h5.6v1.1h-5.6zM179.5 68.6h5.6v1.1h-5.6zM179.5 87.3h5.6v1.1h-5.6zM179.5 312.0h5.6v1.1h-5.6zM179.5 349.5h5.6v1.1h-5.6zM179.5 452.5h5.6v1.1h-5.6zM188.9 274.6h5.6v1.1h-5.6zM198.3 134.1h5.6v1.1h-5.6zM198.3 237.1h5.6v1.1h-5.6zM207.6 21.7h5.6v1.1h-5.6zM217.0 265.2h5.6v1.1h-5.6zM217.0 349.5h5.6v1.1h-5.6zM226.4 246.5h5.6v1.1h-5.6zM226.4 293.3h5.6v1.1h-5.6zM235.7 49.8h5.6v1.1h-5.6zM235.7 265.2h5.6v1.1h-5.6zM245.1 171.6h5.6v1.1h-5.6zM245.1 209.0h5.6v1.1h-5.6zM245.1 237.1h5.6v1.1h-5.6zM245.1 255.9h5.6v1.1h-5.6zM245.1 283.9h5.6v1.1h-5.6zM254.5 3.0h5.6v1.1h-5.6zM263.8 180.9h5.6v1.1h-5.6zM263.8 312.0h5.6v1.1h-5.6zM273.2 12.4h5.6v1.1h-5.6zM273.2 106.0h5.6v1.1h-5.6zM273.2 199.7h5.6v1.1h-5.6zM273.2 218.4h5.6v1.1h-5.6zM301.3 433.8h5.6v1.1h-5.6zM310.6 40.5h5.6v1.1h-5.6zM310.6 143.5h5.6v1.1h-5.6zM329.4 415.1h5.6v1.1h-5.6zM338.7 340.1h5.6v1.1h-5.6zM338.7 358.9h5.6v1.1h-5.6zM348.1 -6.4h5.6v1.1h-5.6zM348.1 3.0h5.6v1.1h-5.6zM348.1 12.4h5.6v1.1h-5.6zM348.1 152.8h5.6v1.1h-5.6zM348.1 227.8h5.6v1.1h-5.6zM348.1 377.6h5.6v1.1h-5.6zM357.5 21.7h5.6v1.1h-5.6zM357.5 87.3h5.6v1.1h-5.6zM357.5 115.4h5.6v1.1h-5.6zM357.5 255.9h5.6v1.1h-5.6zM357.5 293.3h5.6v1.1h-5.6zM357.5 377.6h5.6v1.1h-5.6zM357.5 405.7h5.6v1.1h-5.6zM366.8 134.1h5.6v1.1h-5.6zM366.8 433.8h5.6v1.1h-5.6zM376.2 443.2h5.6v1.1h-5.6zM376.2 461.9h5.6v1.1h-5.6zM376.2 471.2h5.6v1.1h-5.6zM385.6 59.2h5.6v1.1h-5.6zM385.6 180.9h5.6v1.1h-5.6zM385.6 237.1h5.6v1.1h-5.6zM385.6 330.8h5.6v1.1h-5.6zM385.6 340.1h5.6v1.1h-5.6zM394.9 68.6h5.6v1.1h-5.6zM394.9 162.2h5.6v1.1h-5.6zM404.3 162.2h5.6v1.1h-5.6zM404.3 443.2h5.6v1.1h-5.6zM413.7 87.3h5.6v1.1h-5.6zM413.7 96.7h5.6v1.1h-5.6zM413.7 246.5h5.6v1.1h-5.6zM432.4 21.7h5.6v1.1h-5.6zM432.4 237.1h5.6v1.1h-5.6zM441.8 162.2h5.6v1.1h-5.6zM451.1 237.1h5.6v1.1h-5.6zM460.5 152.8h5.6v1.1h-5.6zM460.5 255.9h5.6v1.1h-5.6zM460.5 321.4h5.6v1.1h-5.6z"/><path fill="#b8b8b8" d="M1.6 49.8h5.6v1.1h-5.6zM1.6 68.6h5.6v1.1h-5.6zM1.6 190.3h5.6v1.1h-5.6zM1.6 302.7h5.6v1.1h-5.6zM1.6 312.0h5.6v1.1h-5.6zM11.0 31.1h5.6v1.1h-5.6zM11.0 162.2h5.6v1.1h-5.6zM11.0 237.1h5.6v1.1h-5.6zM11.0 274.6h5.6v1.1h-5.6zM20.3 12.4h5.6v1.1h-5.6zM20.3 96.7h5.6v1.1h-5.6zM20.3 180.9h5.6v1.1h-5.6zM20.3 227.8h5.6v1.1h-5.6zM20.3 237.1h5.6v1.1h-5.6zM20.3 274.6h5.6v1.1h-5.6zM20.3 443.2h5.6v1.1h-5.6zM29.7 3.0h5.6v1.1h-5.6zM29.7 209.0h5.6v1.1h-5.6zM29.7 218.4h5.6v1.1h-5.6zM39.1 171.6h5.6v1.1h-5.6zM39.1 415.1h5.6v1.1h-5.6zM39.1 443.2h5.6v1.1h-5.6zM57.8 59.2h5.6v1.1h-5.6zM57.8 87.3h5.6v1.1h-5.6zM57.8 124.7h5.6v1.1h-5.6zM57.8 180.9h5.6v1.1h-5.6zM57.8 302.7h5.6v1.1h-5.6zM67.2 12.4h5.6v1.1h-5.6zM67.2 96.7h5.6v1.1h-5.6zM67.2 115.4h5.6v1.1h-5.6zM67.2 312.0h5.6v1.1h-5.6zM76.5 49.8h5.6v1.1h-5.6zM76.5 106.0h5.6v1.1h-5.6zM76.5 143.5h5.6v1.1h-5.6zM76.5 152.8h5.6v1.1h-5.6zM76.5 293.3h5.6v1.1h-5.6zM76.5 452.5h5.6v1.1h-5.6zM85.9 59.2h5.6v1.1h-5.6zM85.9 321.4h5.6v1.1h-5.6zM85.9 330.8h5.6v1.1h-5.6zM85.9 461.9h5.6v1.1h-5.6zM95.2 171.6h5.6v1.1h-5.6zM95.2 180.9h5.6v1.1h-5.6zM95.2 255.9h5.6v1.1h-5.6zM95.2 396.3h5.6v1.1h-5.6zM104.6 77.9h5.6v1.1h-5.6zM104.6 134.1h5.6v1.1h-5.6zM114.0 -6.4h5.6v1.1h-5.6zM114.0 134.1h5.6v1.1h-5.6zM114.0 143.5h5.6v1.1h-5.6zM114.0 190.3h5.6v1.1h-5.6zM114.0 349.5h5.6v1.1h-5.6zM123.3 21.7h5.6v1.1h-5.6zM123.3 134.1h5.6v1.1h-5.6zM123.3 209.0h5.6v1.1h-5.6zM123.3 471.2h5.6v1.1h-5.6zM132.7 -6.4h5.6v1.1h-5.6zM132.7 96.7h5.6v1.1h-5.6zM132.7 152.8h5.6v1.1h-5.6zM132.7 255.9h5.6v1.1h-5.6zM132.7 321.4h5.6v1.1h-5.6zM132.7 358.9h5.6v1.1h-5.6zM132.7 368.2h5.6v1.1h-5.6zM132.7 377.6h5.6v1.1h-5.6zM142.1 12.4h5.6v1.1h-5.6zM142.1 59.2h5.6v1.1h-5.6zM142.1 283.9h5.6v1.1h-5.6zM142.1 293.3h5.6v1.1h-5.6zM151.4 218.4h5.6v1.1h-5.6zM151.4 443.2h5.6v1.1h-5.6zM160.8 31.1h5.6v1.1h-5.6zM160.8 237.1h5.6v1.1h-5.6zM160.8 312.0h5.6v1.1h-5.6zM170.2 21.7h5.6v1.1h-5.6zM170.2 218.4h5.6v1.1h-5.6zM170.2 246.5h5.6v1.1h-5.6zM170.2 368.2h5.6v1.1h-5.6zM179.5 21.7h5.6v1.1h-5.6zM179.5 77.9h5.6v1.1h-5.6zM179.5 368.2h5.6v1.1h-5.6zM188.9 152.8h5.6v1.1h-5.6zM188.9 227.8h5.6v1.1h-5.6zM188.9 237.1h5.6v1.1h-5.6zM188.9 321.4h5.6v1.1h-5.6zM188.9 330.8h5.6v1.1h-5.6zM198.3 31.1h5.6v1.1h-5.6zM198.3 124.7h5.6v1.1h-5.6zM198.3 162.2h5.6v1.1h-5.6zM198.3 180.9h5.6v1.1h-5.6zM198.3 293.3h5.6v1.1h-5.6zM198.3 330.8h5.6v1.1h-5.6zM198.3 415.1h5.6v1.1h-5.6zM207.6 77.9h5.6v1.1h-5.6zM207.6 340.1h5.6v1.1h-5.6zM207.6 387.0h5.6v1.1h-5.6zM207.6 396.3h5.6v1.1h-5.6zM217.0 77.9h5.6v1.1h-5.6zM217.0 199.7h5.6v1.1h-5.6zM217.0 293.3h5.6v1.1h-5.6zM217.0 405.7h5.6v1.1h-5.6zM217.0 443.2h5.6v1.1h-5.6zM226.4 209.0h5.6v1.1h-5.6zM235.7 227.8h5.6v1.1h-5.6zM245.1 162.2h5.6v1.1h-5.6zM245.1 377.6h5.6v1.1h-5.6zM245.1 405.7h5.6v1.1h-5.6zM254.5 274.6h5.6v1.1h-5.6zM254.5 387.0h5.6v1.1h-5.6zM254.5 452.5h5.6v1.1h-5.6zM254.5 461.9h5.6v1.1h-5.6zM263.8 265.2h5.6v1.1h-5.6zM263.8 330.8h5.6v1.1h-5.6zM263.8 443.2h5.6v1.1h-5.6zM273.2 40.5h5.6v1.1h-5.6zM273.2 312.0h5.6v1.1h-5.6zM273.2 349.5h5.6v1.1h-5.6zM273.2 368.2h5.6v1.1h-5.6zM282.5 59.2h5.6v1.1h-5.6zM282.5 199.7h5.6v1.1h-5.6zM282.5 218.4h5.6v1.1h-5.6zM282.5 274.6h5.6v1.1h-5.6zM282.5 377.6h5.6v1.1h-5.6zM282.5 387.0h5.6v1.1h-5.6zM282.5 452.5h5.6v1.1h-5.6zM291.9 12.4h5.6v1.1h-5.6zM291.9 134.1h5.6v1.1h-5.6zM291.9 143.5h5.6v1.1h-5.6zM291.9 227.8h5.6v1.1h-5.6zM291.9 387.0h5.6v1.1h-5.6zM301.3 68.6h5.6v1.1h-5.6zM301.3 124.7h5.6v1.1h-5.6zM310.6 59.2h5.6v1.1h-5.6zM310.6 152.8h5.6v1.1h-5.6zM310.6 162.2h5.6v1.1h-5.6zM310.6 283.9h5.6v1.1h-5.6zM310.6 321.4h5.6v1.1h-5.6zM310.6 377.6h5.6v1.1h-5.6zM320.0 40.5h5.6v1.1h-5.6zM320.0 96.7h5.6v1.1h-5.6zM320.0 143.5h5.6v1.1h-5.6zM320.0 302.7h5.6v1.1h-5.6zM320.0 330.8h5.6v1.1h-5.6zM329.4 21.7h5.6v1.1h-5.6zM329.4 180.9h5.6v1.1h-5.6zM329.4 321.4h5.6v1.1h-5.6zM329.4 358.9h5.6v1.1h-5.6zM329.4 396.3h5.6v1.1h-5.6zM338.7 171.6h5.6v1.1h-5.6zM338.7 227.8h5.6v1.1h-5.6zM338.7 330.8h5.6v1.1h-5.6zM338.7 443.2h5.6v1.1h-5.6zM348.1 21.7h5.6v1.1h-5.6zM348.1 87.3h5.6v1.1h-5.6zM348.1 124.7h5.6v1.1h-5.6zM348.1 199.7h5.6v1.1h-5.6zM357.5 12.4h5.6v1.1h-5.6zM357.5 124.7h5.6v1.1h-5.6zM357.5 209.0h5.6v1.1h-5.6zM366.8 162.2h5.6v1.1h-5.6zM366.8 293.3h5.6v1.1h-5.6zM376.2 40.5h5.6v1.1h-5.6zM376.2 387.0h5.6v1.1h-5.6zM376.2 396.3h5.6v1.1h-5.6zM385.6 415.1h5.6v1.1h-5.6zM385.6 461.9h5.6v1.1h-5.6zM394.9 199.7h5.6v1.1h-5.6zM394.9 209.0h5.6v1.1h-5.6zM394.9 330.8h5.6v1.1h-5.6zM394.9 396.3h5.6v1.1h-5.6zM404.3 265.2h5.6v1.1h-5.6zM413.7 387.0h5.6v1.1h-5.6zM423.0 49.8h5.6v1.1h-5.6zM423.0 59.2h5.6v1.1h-5.6zM423.0 106.0h5.6v1.1h-5.6zM423.0 209.0h5.6v1.1h-5.6zM423.0 246.5h5.6v1.1h-5.6zM423.0 274.6h5.6v1.1h-5.6zM432.4 -6.4h5.6v1.1h-5.6zM432.4 59.2h5.6v1.1h-5.6zM432.4 143.5h5.6v1.1h-5.6zM432.4 443.2h5.6v1.1h-5.6zM441.8 59.2h5.6v1.1h-5.6zM441.8 171.6h5.6v1.1h-5.6zM441.8 255.9h5.6v1.1h-5.6zM441.8 452.5h5.6v1.1h-5.6zM451.1 134.1h5.6v1.1h-5.6zM451.1 171.6h5.6v1.1h-5.6zM451.1 452.5h5.6v1.1h-5.6zM460.5 68.6h5.6v1.1h-5.6z"/><path fill="#9dc596" d="M1.6 77.9h5.6v1.1h-5.6zM1.6 106.0h5.6v1.1h-5.6zM1.6 171.6h5.6v1.1h-5.6zM1.6 283.9h5.6v1.1h-5.6zM1.6 340.1h5.6v1.1h-5.6zM11.0 -6.4h5.6v1.1h-5.6zM11.0 218.4h5.6v1.1h-5.6zM11.0 312.0h5.6v1.1h-5.6zM11.0 396.3h5.6v1.1h-5.6zM20.3 21.7h5.6v1.1h-5.6zM20.3 143.5h5.6v1.1h-5.6zM20.3 152.8h5.6v1.1h-5.6zM39.1 21.7h5.6v1.1h-5.6zM39.1 31.1h5.6v1.1h-5.6zM39.1 218.4h5.6v1.1h-5.6zM39.1 302.7h5.6v1.1h-5.6zM39.1 368.2h5.6v1.1h-5.6zM48.4 443.2h5.6v1.1h-5.6zM57.8 3.0h5.6v1.1h-5.6zM57.8 218.4h5.6v1.1h-5.6zM57.8 321.4h5.6v1.1h-5.6zM67.2 190.3h5.6v1.1h-5.6zM67.2 218.4h5.6v1.1h-5.6zM67.2 293.3h5.6v1.1h-5.6zM76.5 59.2h5.6v1.1h-5.6zM76.5 134.1h5.6v1.1h-5.6zM76.5 237.1h5.6v1.1h-5.6zM85.9 209.0h5.6v1.1h-5.6zM95.2 330.8h5.6v1.1h-5.6zM95.2 340.1h5.6v1.1h-5.6zM95.2 377.6h5.6v1.1h-5.6zM104.6 -6.4h5.6v1.1h-5.6zM104.6 246.5h5.6v1.1h-5.6zM104.6 433.8h5.6v1.1h-5.6zM104.6 443.2h5.6v1.1h-5.6zM104.6 461.9h5.6v1.1h-5.6zM114.0 87.3h5.6v1.1h-5.6zM114.0 199.7h5.6v1.1h-5.6zM123.3 -6.4h5.6v1.1h-5.6zM123.3 162.2h5.6v1.1h-5.6zM123.3 227.8h5.6v1.1h-5.6zM123.3 396.3h5.6v1.1h-5.6zM123.3 433.8h5.6v1.1h-5.6zM132.7 3.0h5.6v1.1h-5.6zM132.7 115.4h5.6v1.1h-5.6zM132.7 124.7h5.6v1.1h-5.6zM132.7 246.5h5.6v1.1h-5.6zM132.7 274.6h5.6v1.1h-5.6zM132.7 330.8h5.6v1.1h-5.6zM142.1 106.0h5.6v1.1h-5.6zM142.1 124.7h5.6v1.1h-5.6zM142.1 415.1h5.6v1.1h-5.6zM151.4 21.7h5.6v1.1h-5.6zM151.4 106.0h5.6v1.1h-5.6zM151.4 283.9h5.6v1.1h-5.6zM160.8 49.8h5.6v1.1h-5.6zM160.8 106.0h5.6v1.1h-5.6zM160.8 171.6h5.6v1.1h-5.6zM160.8 255.9h5.6v1.1h-5.6zM160.8 274.6h5.6v1.1h-5.6zM160.8 368.2h5.6v1.1h-5.6zM170.2 40.5h5.6v1.1h-5.6zM170.2 106.0h5.6v1.1h-5.6zM170.2 152.8h5.6v1.1h-5.6zM170.2 171.6h5.6v1.1h-5.6zM170.2 312.0h5.6v1.1h-5.6zM170.2 330.8h5.6v1.1h-5.6zM170.2 471.2h5.6v1.1h-5.6zM179.5 96.7h5.6v1.1h-5.6zM188.9 59.2h5.6v1.1h-5.6zM188.9 265.2h5.6v1.1h-5.6zM198.3 12.4h5.6v1.1h-5.6zM198.3 143.5h5.6v1.1h-5.6zM217.0 190.3h5.6v1.1h-5.6zM217.0 302.7h5.6v1.1h-5.6zM226.4 162.2h5.6v1.1h-5.6zM226.4 171.6h5.6v1.1h-5.6zM226.4 255.9h5.6v1.1h-5.6zM235.7 134.1h5.6v1.1h-5.6zM235.7 218.4h5.6v1.1h-5.6zM235.7 237.1h5.6v1.1h-5.6zM235.7 312.0h5.6v1.1h-5.6zM235.7 340.1h5.6v1.1h-5.6zM235.7 368.2h5.6v1.1h-5.6zM245.1 3.0h5.6v1.1h-5.6zM245.1 49.8h5.6v1.1h-5.6zM245.1 77.9h5.6v1.1h-5.6zM245.1 134.1h5.6v1.1h-5.6zM245.1 293.3h5.6v1.1h-5.6zM245.1 330.8h5.6v1.1h-5.6zM245.1 396.3h5.6v1.1h-5.6zM245.1 415.1h5.6v1.1h-5.6zM245.1 424.4h5.6v1.1h-5.6zM254.5 31.1h5.6v1.1h-5.6zM254.5 237.1h5.6v1.1h-5.6zM254.5 255.9h5.6v1.1h-5.6zM254.5 330.8h5.6v1.1h-5.6zM263.8 387.0h5.6v1.1h-5.6zM263.8 396.3h5.6v1.1h-5.6zM273.2 143.5h5.6v1.1h-5.6zM273.2 190.3h5.6v1.1h-5.6zM282.5 152.8h5.6v1.1h-5.6zM282.5 171.6h5.6v1.1h-5.6zM282.5 283.9h5.6v1.1h-5.6zM282.5 330.8h5.6v1.1h-5.6zM291.9 321.4h5.6v1.1h-5.6zM291.9 330.8h5.6v1.1h-5.6zM301.3 -6.4h5.6v1.1h-5.6zM301.3 12.4h5.6v1.1h-5.6zM301.3 87.3h5.6v1.1h-5.6zM310.6 31.1h5.6v1.1h-5.6zM310.6 77.9h5.6v1.1h-5.6zM310.6 227.8h5.6v1.1h-5.6zM310.6 396.3h5.6v1.1h-5.6zM310.6 471.2h5.6v1.1h-5.6zM329.4 77.9h5.6v1.1h-5.6zM338.7 152.8h5.6v1.1h-5.6zM338.7 312.0h5.6v1.1h-5.6zM338.7 424.4h5.6v1.1h-5.6zM348.1 255.9h5.6v1.1h-5.6zM348.1 349.5h5.6v1.1h-5.6zM348.1 358.9h5.6v1.1h-5.6zM348.1 387.0h5.6v1.1h-5.6zM357.5 59.2h5.6v1.1h-5.6zM357.5 106.0h5.6v1.1h-5.6zM357.5 302.7h5.6v1.1h-5.6zM357.5 452.5h5.6v1.1h-5.6zM366.8 143.5h5.6v1.1h-5.6zM366.8 302.7h5.6v1.1h-5.6zM376.2 96.7h5.6v1.1h-5.6zM376.2 134.1h5.6v1.1h-5.6zM376.2 180.9h5.6v1.1h-5.6zM376.2 199.7h5.6v1.1h-5.6zM376.2 368.2h5.6v1.1h-5.6zM385.6 3.0h5.6v1.1h-5.6zM385.6 77.9h5.6v1.1h-5.6zM385.6 87.3h5.6v1.1h-5.6zM385.6 302.7h5.6v1.1h-5.6zM385.6 424.4h5.6v1.1h-5.6zM394.9 96.7h5.6v1.1h-5.6zM394.9 321.4h5.6v1.1h-5.6zM404.3 21.7h5.6v1.1h-5.6zM404.3 171.6h5.6v1.1h-5.6zM404.3 180.9h5.6v1.1h-5.6zM404.3 405.7h5.6v1.1h-5.6zM413.7 124.7h5.6v1.1h-5.6zM413.7 162.2h5.6v1.1h-5.6zM413.7 321.4h5.6v1.1h-5.6zM413.7 424.4h5.6v1.1h-5.6zM423.0 96.7h5.6v1.1h-5.6zM423.0 358.9h5.6v1.1h-5.6zM423.0 415.1h5.6v1.1h-5.6zM432.4 12.4h5.6v1.1h-5.6zM432.4 162.2h5.6v1.1h-5.6zM441.8 143.5h5.6v1.1h-5.6zM451.1 209.0h5.6v1.1h-5.6zM451.1 246.5h5.6v1.1h-5.6zM460.5 124.7h5.6v1.1h-5.6zM460.5 143.5h5.6v1.1h-5.6zM460.5 171.6h5.6v1.1h-5.6zM460.5 349.5h5.6v1.1h-5.6zM460.5 461.9h5.6v1.1h-5.6z"/><path fill="#738787" d="M1.6 115.4h5.6v1.1h-5.6zM1.6 199.7h5.6v1.1h-5.6zM11.0 124.7h5.6v1.1h-5.6zM11.0 377.6h5.6v1.1h-5.6zM20.3 349.5h5.6v1.1h-5.6zM20.3 424.4h5.6v1.1h-5.6zM29.7 31.1h5.6v1.1h-5.6zM29.7 143.5h5.6v1.1h-5.6zM29.7 368.2h5.6v1.1h-5.6zM39.1 115.4h5.6v1.1h-5.6zM39.1 237.1h5.6v1.1h-5.6zM48.4 274.6h5.6v1.1h-5.6zM48.4 471.2h5.6v1.1h-5.6zM57.8 377.6h5.6v1.1h-5.6zM57.8 396.3h5.6v1.1h-5.6zM67.2 209.0h5.6v1.1h-5.6zM67.2 265.2h5.6v1.1h-5.6zM67.2 377.6h5.6v1.1h-5.6zM76.5 302.7h5.6v1.1h-5.6zM76.5 377.6h5.6v1.1h-5.6zM76.5 396.3h5.6v1.1h-5.6zM85.9 3.0h5.6v1.1h-5.6zM95.2 246.5h5.6v1.1h-5.6zM95.2 274.6h5.6v1.1h-5.6zM95.2 415.1h5.6v1.1h-5.6zM114.0 49.8h5.6v1.1h-5.6zM114.0 115.4h5.6v1.1h-5.6zM114.0 227.8h5.6v1.1h-5.6zM142.1 452.5h5.6v1.1h-5.6zM151.4 -6.4h5.6v1.1h-5.6zM151.4 199.7h5.6v1.1h-5.6zM151.4 293.3h5.6v1.1h-5.6zM160.8 180.9h5.6v1.1h-5.6zM170.2 115.4h5.6v1.1h-5.6zM170.2 124.7h5.6v1.1h-5.6zM170.2 255.9h5.6v1.1h-5.6zM179.5 124.7h5.6v1.1h-5.6zM198.3 340.1h5.6v1.1h-5.6zM198.3 452.5h5.6v1.1h-5.6zM207.6 227.8h5.6v1.1h-5.6zM207.6 246.5h5.6v1.1h-5.6zM217.0 21.7h5.6v1.1h-5.6zM217.0 87.3h5.6v1.1h-5.6zM217.0 274.6h5.6v1.1h-5.6zM217.0 368.2h5.6v1.1h-5.6zM226.4 21.7h5.6v1.1h-5.6zM226.4 358.9h5.6v1.1h-5.6zM235.7 3.0h5.6v1.1h-5.6zM235.7 424.4h5.6v1.1h-5.6zM245.1 274.6h5.6v1.1h-5.6zM254.5 199.7h5.6v1.1h-5.6zM254.5 218.4h5.6v1.1h-5.6zM254.5 377.6h5.6v1.1h-5.6zM254.5 396.3h5.6v1.1h-5.6zM254.5 433.8h5.6v1.1h-5.6zM263.8 152.8h5.6v1.1h-5.6zM263.8 321.4h5.6v1.1h-5.6zM263.8 340.1h5.6v1.1h-5.6zM263.8 377.6h5.6v1.1h-5.6zM273.2 77.9h5.6v1.1h-5.6zM273.2 162.2h5.6v1.1h-5.6zM273.2 180.9h5.6v1.1h-5.6zM282.5 433.8h5.6v1.1h-5.6zM291.9 40.5h5.6v1.1h-5.6zM291.9 209.0h5.6v1.1h-5.6zM291.9 415.1h5.6v1.1h-5.6zM291.9 452.5h5.6v1.1h-5.6zM301.3 134.1h5.6v1.1h-5.6zM301.3 152.8h5.6v1.1h-5.6zM301.3 180.9h5.6v1.1h-5.6zM310.6 180.9h5.6v1.1h-5.6zM320.0 87.3h5.6v1.1h-5.6zM320.0 368.2h5.6v1.1h-5.6zM320.0 424.4h5.6v1.1h-5.6zM329.4 106.0h5.6v1.1h-5.6zM329.4 405.7h5.6v1.1h-5.6zM338.7 199.7h5.6v1.1h-5.6zM338.7 209.0h5.6v1.1h-5.6zM338.7 283.9h5.6v1.1h-5.6zM338.7 396.3h5.6v1.1h-5.6zM348.1 180.9h5.6v1.1h-5.6zM348.1 283.9h5.6v1.1h-5.6zM348.1 368.2h5.6v1.1h-5.6zM357.5 3.0h5.6v1.1h-5.6zM366.8 12.4h5.6v1.1h-5.6zM366.8 180.9h5.6v1.1h-5.6zM366.8 415.1h5.6v1.1h-5.6zM376.2 227.8h5.6v1.1h-5.6zM376.2 330.8h5.6v1.1h-5.6zM376.2 340.1h5.6v1.1h-5.6zM394.9 -6.4h5.6v1.1h-5.6zM394.9 415.1h5.6v1.1h-5.6zM404.3 330.8h5.6v1.1h-5.6zM404.3 358.9h5.6v1.1h-5.6zM413.7 190.3h5.6v1.1h-5.6zM413.7 358.9h5.6v1.1h-5.6zM413.7 461.9h5.6v1.1h-5.6zM423.0 143.5h5.6v1.1h-5.6zM423.0 218.4h5.6v1.1h-5.6zM423.0 255.9h5.6v1.1h-5.6zM423.0 377.6h5.6v1.1h-5.6zM423.0 452.5h5.6v1.1h-5.6zM432.4 396.3h5.6v1.1h-5.6zM441.8 274.6h5.6v1.1h-5.6zM441.8 312.0h5.6v1.1h-5.6zM441.8 349.5h5.6v1.1h-5.6zM441.8 433.8h5.6v1.1h-5.6zM451.1 180.9h5.6v1.1h-5.6zM451.1 190.3h5.6v1.1h-5.6zM451.1 405.7h5.6v1.1h-5.6zM460.5 227.8h5.6v1.1h-5.6zM460.5 377.6h5.6v1.1h-5.6zM460.5 452.5h5.6v1.1h-5.6z"/><path fill="#87b485" d="M1.6 134.1h5.6v1.1h-5.6zM1.6 209.0h5.6v1.1h-5.6zM1.6 377.6h5.6v1.1h-5.6zM1.6 405.7h5.6v1.1h-5.6zM1.6 452.5h5.6v1.1h-5.6zM11.0 209.0h5.6v1.1h-5.6zM11.0 302.7h5.6v1.1h-5.6zM11.0 387.0h5.6v1.1h-5.6zM11.0 452.5h5.6v1.1h-5.6zM11.0 461.9h5.6v1.1h-5.6zM20.3 3.0h5.6v1.1h-5.6zM20.3 312.0h5.6v1.1h-5.6zM20.3 415.1h5.6v1.1h-5.6zM29.7 49.8h5.6v1.1h-5.6zM29.7 115.4h5.6v1.1h-5.6zM29.7 180.9h5.6v1.1h-5.6zM29.7 227.8h5.6v1.1h-5.6zM29.7 237.1h5.6v1.1h-5.6zM29.7 312.0h5.6v1.1h-5.6zM29.7 321.4h5.6v1.1h-5.6zM39.1 255.9h5.6v1.1h-5.6zM39.1 265.2h5.6v1.1h-5.6zM39.1 274.6h5.6v1.1h-5.6zM39.1 293.3h5.6v1.1h-5.6zM48.4 68.6h5.6v1.1h-5.6zM48.4 77.9h5.6v1.1h-5.6zM48.4 246.5h5.6v1.1h-5.6zM48.4 321.4h5.6v1.1h-5.6zM48.4 424.4h5.6v1.1h-5.6zM57.8 171.6h5.6v1.1h-5.6zM57.8 199.7h5.6v1.1h-5.6zM57.8 246.5h5.6v1.1h-5.6zM57.8 443.2h5.6v1.1h-5.6zM57.8 471.2h5.6v1.1h-5.6zM67.2 59.2h5.6v1.1h-5.6zM67.2 106.0h5.6v1.1h-5.6zM67.2 349.5h5.6v1.1h-5.6zM67.2 405.7h5.6v1.1h-5.6zM67.2 415.1h5.6v1.1h-5.6zM67.2 424.4h5.6v1.1h-5.6zM67.2 461.9h5.6v1.1h-5.6zM76.5 12.4h5.6v1.1h-5.6zM76.5 115.4h5.6v1.1h-5.6zM76.5 162.2h5.6v1.1h-5.6zM76.5 171.6h5.6v1.1h-5.6zM76.5 443.2h5.6v1.1h-5.6zM85.9 134.1h5.6v1.1h-5.6zM85.9 152.8h5.6v1.1h-5.6zM85.9 283.9h5.6v1.1h-5.6zM85.9 340.1h5.6v1.1h-5.6zM85.9 377.6h5.6v1.1h-5.6zM95.2 21.7h5.6v1.1h-5.6zM95.2 143.5h5.6v1.1h-5.6zM95.2 209.0h5.6v1.1h-5.6zM95.2 321.4h5.6v1.1h-5.6zM95.2 387.0h5.6v1.1h-5.6zM95.2 424.4h5.6v1.1h-5.6zM95.2 443.2h5.6v1.1h-5.6zM95.2 452.5h5.6v1.1h-5.6zM104.6 124.7h5.6v1.1h-5.6zM104.6 180.9h5.6v1.1h-5.6zM104.6 209.0h5.6v1.1h-5.6zM104.6 227.8h5.6v1.1h-5.6zM104.6 302.7h5.6v1.1h-5.6zM104.6 387.0h5.6v1.1h-5.6zM104.6 396.3h5.6v1.1h-5.6zM114.0 3.0h5.6v1.1h-5.6zM114.0 68.6h5.6v1.1h-5.6zM114.0 77.9h5.6v1.1h-5.6zM114.0 246.5h5.6v1.1h-5.6zM114.0 368.2h5.6v1.1h-5.6zM114.0 396.3h5.6v1.1h-5.6zM114.0 415.1h5.6v1.1h-5.6zM123.3 3.0h5.6v1.1h-5.6zM123.3 31.1h5.6v1.1h-5.6zM123.3 87.3h5.6v1.1h-5.6zM123.3 96.7h5.6v1.1h-5.6zM123.3 171.6h5.6v1.1h-5.6zM123.3 199.7h5.6v1.1h-5.6zM123.3 321.4h5.6v1.1h-5.6zM123.3 330.8h5.6v1.1h-5.6zM123.3 349.5h5.6v1.1h-5.6zM123.3 387.0h5.6v1.1h-5.6zM132.7 162.2h5.6v1.1h-5.6zM132.7 396.3h5.6v1.1h-5.6zM132.7 433.8h5.6v1.1h-5.6zM132.7 461.9h5.6v1.1h-5.6zM142.1 3.0h5.6v1.1h-5.6zM142.1 68.6h5.6v1.1h-5.6zM142.1 115.4h5.6v1.1h-5.6zM142.1 274.6h5.6v1.1h-5.6zM142.1 349.5h5.6v1.1h-5.6zM142.1 405.7h5.6v1.1h-5.6zM151.4 3.0h5.6v1.1h-5.6zM151.4 49.8h5.6v1.1h-5.6zM151.4 59.2h5.6v1.1h-5.6zM151.4 134.1h5.6v1.1h-5.6zM151.4 227.8h5.6v1.1h-5.6zM151.4 312.0h5.6v1.1h-5.6zM151.4 368.2h5.6v1.1h-5.6zM151.4 405.7h5.6v1.1h-5.6zM160.8 115.4h5.6v1.1h-5.6zM160.8 396.3h5.6v1.1h-5.6zM170.2 96.7h5.6v1.1h-5.6zM170.2 143.5h5.6v1.1h-5.6zM170.2 190.3h5.6v1.1h-5.6zM170.2 396.3h5.6v1.1h-5.6zM179.5 283.9h5.6v1.1h-5.6zM179.5 340.1h5.6v1.1h-5.6zM188.9 77.9h5.6v1.1h-5.6zM188.9 171.6h5.6v1.1h-5.6zM188.9 302.7h5.6v1.1h-5.6zM188.9 368.2h5.6v1.1h-5.6zM188.9 443.2h5.6v1.1h-5.6zM198.3 21.7h5.6v1.1h-5.6zM198.3 106.0h5.6v1.1h-5.6zM198.3 152.8h5.6v1.1h-5.6zM198.3 283.9h5.6v1.1h-5.6zM198.3 387.0h5.6v1.1h-5.6zM198.3 405.7h5.6v1.1h-5.6zM198.3 471.2h5.6v1.1h-5.6zM207.6 31.1h5.6v1.1h-5.6zM207.6 87.3h5.6v1.1h-5.6zM207.6 96.7h5.6v1.1h-5.6zM207.6 162.2h5.6v1.1h-5.6zM217.0 134.1h5.6v1.1h-5.6zM217.0 209.0h5.6v1.1h-5.6zM217.0 218.4h5.6v1.1h-5.6zM226.4 31.1h5.6v1.1h-5.6zM226.4 49.8h5.6v1.1h-5.6zM226.4 227.8h5.6v1.1h-5.6zM226.4 274.6h5.6v1.1h-5.6zM226.4 452.5h5.6v1.1h-5.6zM226.4 471.2h5.6v1.1h-5.6zM235.7 31.1h5.6v1.1h-5.6zM235.7 377.6h5.6v1.1h-5.6zM245.1 40.5h5.6v1.1h-5.6zM245.1 387.0h5.6v1.1h-5.6zM245.1 452.5h5.6v1.1h-5.6zM245.1 461.9h5.6v1.1h-5.6zM254.5 12.4h5.6v1.1h-5.6zM254.5 106.0h5.6v1.1h-5.6zM254.5 171.6h5.6v1.1h-5.6zM254.5 227.8h5.6v1.1h-5.6zM254.5 246.5h5.6v1.1h-5.6zM254.5 293.3h5.6v1.1h-5.6zM254.5 302.7h5.6v1.1h-5.6zM254.5 312.0h5.6v1.1h-5.6zM263.8 3.0h5.6v1.1h-5.6zM263.8 31.1h5.6v1.1h-5.6zM263.8 227.8h5.6v1.1h-5.6zM263.8 237.1h5.6v1.1h-5.6zM273.2 171.6h5.6v1.1h-5.6zM273.2 209.0h5.6v1.1h-5.6zM273.2 274.6h5.6v1.1h-5.6zM273.2 358.9h5.6v1.1h-5.6zM282.5 134.1h5.6v1.1h-5.6zM282.5 143.5h5.6v1.1h-5.6zM282.5 471.2h5.6v1.1h-5.6zM291.9 106.0h5.6v1.1h-5.6zM291.9 377.6h5.6v1.1h-5.6zM301.3 59.2h5.6v1.1h-5.6zM301.3 77.9h5.6v1.1h-5.6zM301.3 171.6h5.6v1.1h-5.6zM301.3 283.9h5.6v1.1h-5.6zM301.3 330.8h5.6v1.1h-5.6zM301.3 396.3h5.6v1.1h-5.6zM310.6 209.0h5.6v1.1h-5.6zM310.6 274.6h5.6v1.1h-5.6zM310.6 424.4h5.6v1.1h-5.6zM320.0 31.1h5.6v1.1h-5.6zM320.0 49.8h5.6v1.1h-5.6zM320.0 190.3h5.6v1.1h-5.6zM320.0 237.1h5.6v1.1h-5.6zM320.0 274.6h5.6v1.1h-5.6zM320.0 349.5h5.6v1.1h-5.6zM329.4 12.4h5.6v1.1h-5.6zM329.4 68.6h5.6v1.1h-5.6zM329.4 96.7h5.6v1.1h-5.6zM329.4 227.8h5.6v1.1h-5.6zM329.4 237.1h5.6v1.1h-5.6zM329.4 302.7h5.6v1.1h-5.6zM329.4 340.1h5.6v1.1h-5.6zM329.4 452.5h5.6v1.1h-5.6zM338.7 68.6h5.6v1.1h-5.6zM338.7 265.2h5.6v1.1h-5.6zM348.1 40.5h5.6v1.1h-5.6zM348.1 68.6h5.6v1.1h-5.6zM348.1 237.1h5.6v1.1h-5.6zM348.1 424.4h5.6v1.1h-5.6zM357.5 49.8h5.6v1.1h-5.6zM357.5 227.8h5.6v1.1h-5.6zM357.5 246.5h5.6v1.1h-5.6zM357.5 283.9h5.6v1.1h-5.6zM357.5 321.4h5.6v1.1h-5.6zM357.5 387.0h5.6v1.1h-5.6zM357.5 443.2h5.6v1.1h-5.6zM357.5 461.9h5.6v1.1h-5.6zM357.5 471.2h5.6v1.1h-5.6zM366.8 115.4h5.6v1.1h-5.6zM366.8 124.7h5.6v1.1h-5.6zM366.8 190.3h5.6v1.1h-5.6zM366.8 218.4h5.6v1.1h-5.6zM366.8 237.1h5.6v1.1h-5.6zM366.8 340.1h5.6v1.1h-5.6zM376.2 171.6h5.6v1.1h-5.6zM376.2 265.2h5.6v1.1h-5.6zM385.6 321.4h5.6v1.1h-5.6zM394.9 49.8h5.6v1.1h-5.6zM394.9 265.2h5.6v1.1h-5.6zM394.9 387.0h5.6v1.1h-5.6zM394.9 452.5h5.6v1.1h-5.6zM404.3 12.4h5.6v1.1h-5.6zM404.3 40.5h5.6v1.1h-5.6zM404.3 87.3h5.6v1.1h-5.6zM404.3 134.1h5.6v1.1h-5.6zM404.3 227.8h5.6v1.1h-5.6zM404.3 246.5h5.6v1.1h-5.6zM404.3 255.9h5.6v1.1h-5.6zM404.3 321.4h5.6v1.1h-5.6zM404.3 452.5h5.6v1.1h-5.6zM413.7 3.0h5.6v1.1h-5.6zM413.7 40.5h5.6v1.1h-5.6zM413.7 106.0h5.6v1.1h-5.6zM413.7 255.9h5.6v1.1h-5.6zM413.7 283.9h5.6v1.1h-5.6zM413.7 312.0h5.6v1.1h-5.6zM413.7 377.6h5.6v1.1h-5.6zM413.7 452.5h5.6v1.1h-5.6zM423.0 87.3h5.6v1.1h-5.6zM423.0 171.6h5.6v1.1h-5.6zM423.0 237.1h5.6v1.1h-5.6zM423.0 283.9h5.6v1.1h-5.6zM423.0 387.0h5.6v1.1h-5.6zM432.4 87.3h5.6v1.1h-5.6zM432.4 134.1h5.6v1.1h-5.6zM432.4 218.4h5.6v1.1h-5.6zM432.4 227.8h5.6v1.1h-5.6zM432.4 274.6h5.6v1.1h-5.6zM432.4 415.1h5.6v1.1h-5.6zM432.4 452.5h5.6v1.1h-5.6zM441.8 227.8h5.6v1.1h-5.6zM441.8 237.1h5.6v1.1h-5.6zM441.8 283.9h5.6v1.1h-5.6zM441.8 443.2h5.6v1.1h-5.6zM451.1 59.2h5.6v1.1h-5.6zM451.1 218.4h5.6v1.1h-5.6zM451.1 312.0h5.6v1.1h-5.6zM460.5 -6.4h5.6v1.1h-5.6zM460.5 40.5h5.6v1.1h-5.6zM460.5 237.1h5.6v1.1h-5.6zM460.5 265.2h5.6v1.1h-5.6zM460.5 293.3h5.6v1.1h-5.6z"/><path fill="#cab6a7" d="M1.6 143.5h5.6v1.1h-5.6zM11.0 96.7h5.6v1.1h-5.6zM20.3 -6.4h5.6v1.1h-5.6zM20.3 77.9h5.6v1.1h-5.6zM20.3 293.3h5.6v1.1h-5.6zM29.7 349.5h5.6v1.1h-5.6zM48.4 143.5h5.6v1.1h-5.6zM57.8 106.0h5.6v1.1h-5.6zM76.5 321.4h5.6v1.1h-5.6zM85.9 21.7h5.6v1.1h-5.6zM85.9 31.1h5.6v1.1h-5.6zM85.9 246.5h5.6v1.1h-5.6zM95.2 358.9h5.6v1.1h-5.6zM114.0 40.5h5.6v1.1h-5.6zM114.0 180.9h5.6v1.1h-5.6zM123.3 12.4h5.6v1.1h-5.6zM132.7 452.5h5.6v1.1h-5.6zM142.1 199.7h5.6v1.1h-5.6zM142.1 424.4h5.6v1.1h-5.6zM151.4 349.5h5.6v1.1h-5.6zM151.4 358.9h5.6v1.1h-5.6zM151.4 415.1h5.6v1.1h-5.6zM160.8 358.9h5.6v1.1h-5.6zM170.2 59.2h5.6v1.1h-5.6zM170.2 274.6h5.6v1.1h-5.6zM170.2 293.3h5.6v1.1h-5.6zM170.2 377.6h5.6v1.1h-5.6zM188.9 49.8h5.6v1.1h-5.6zM188.9 255.9h5.6v1.1h-5.6zM188.9 387.0h5.6v1.1h-5.6zM188.9 405.7h5.6v1.1h-5.6zM198.3 227.8h5.6v1.1h-5.6zM207.6 302.7h5.6v1.1h-5.6zM207.6 452.5h5.6v1.1h-5.6zM217.0 283.9h5.6v1.1h-5.6zM226.4 143.5h5.6v1.1h-5.6zM235.7 302.7h5.6v1.1h-5.6zM235.7 471.2h5.6v1.1h-5.6zM245.1 31.1h5.6v1.1h-5.6zM245.1 68.6h5.6v1.1h-5.6zM263.8 106.0h5.6v1.1h-5.6zM263.8 452.5h5.6v1.1h-5.6zM273.2 59.2h5.6v1.1h-5.6zM273.2 396.3h5.6v1.1h-5.6zM273.2 433.8h5.6v1.1h-5.6zM273.2 443.2h5.6v1.1h-5.6zM273.2 452.5h5.6v1.1h-5.6zM273.2 471.2h5.6v1.1h-5.6zM282.5 293.3h5.6v1.1h-5.6zM291.9 68.6h5.6v1.1h-5.6zM291.9 312.0h5.6v1.1h-5.6zM291.9 433.8h5.6v1.1h-5.6zM291.9 461.9h5.6v1.1h-5.6zM301.3 31.1h5.6v1.1h-5.6zM301.3 293.3h5.6v1.1h-5.6zM301.3 452.5h5.6v1.1h-5.6zM310.6 124.7h5.6v1.1h-5.6zM310.6 387.0h5.6v1.1h-5.6zM320.0 199.7h5.6v1.1h-5.6zM320.0 433.8h5.6v1.1h-5.6zM329.4 -6.4h5.6v1.1h-5.6zM338.7 49.8h5.6v1.1h-5.6zM338.7 87.3h5.6v1.1h-5.6zM338.7 321.4h5.6v1.1h-5.6zM348.1 134.1h5.6v1.1h-5.6zM348.1 274.6h5.6v1.1h-5.6zM357.5 274.6h5.6v1.1h-5.6zM357.5 358.9h5.6v1.1h-5.6zM366.8 21.7h5.6v1.1h-5.6zM366.8 87.3h5.6v1.1h-5.6zM366.8 405.7h5.6v1.1h-5.6zM376.2 124.7h5.6v1.1h-5.6zM385.6 21.7h5.6v1.1h-5.6zM385.6 152.8h5.6v1.1h-5.6zM385.6 368.2h5.6v1.1h-5.6zM385.6 377.6h5.6v1.1h-5.6zM394.9 180.9h5.6v1.1h-5.6zM394.9 377.6h5.6v1.1h-5.6zM394.9 461.9h5.6v1.1h-5.6zM413.7 21.7h5.6v1.1h-5.6zM413.7 49.8h5.6v1.1h-5.6zM423.0 -6.4h5.6v1.1h-5.6zM423.0 265.2h5.6v1.1h-5.6zM423.0 461.9h5.6v1.1h-5.6zM432.4 368.2h5.6v1.1h-5.6zM441.8 199.7h5.6v1.1h-5.6zM441.8 471.2h5.6v1.1h-5.6zM451.1 433.8h5.6v1.1h-5.6zM451.1 471.2h5.6v1.1h-5.6zM460.5 330.8h5.6v1.1h-5.6z"/><path fill="#8a8c85" d="M1.6 152.8h5.6v1.1h-5.6zM11.0 134.1h5.6v1.1h-5.6zM20.3 49.8h5.6v1.1h-5.6zM20.3 452.5h5.6v1.1h-5.6zM29.7 255.9h5.6v1.1h-5.6zM29.7 274.6h5.6v1.1h-5.6zM29.7 293.3h5.6v1.1h-5.6zM39.1 40.5h5.6v1.1h-5.6zM39.1 209.0h5.6v1.1h-5.6zM39.1 377.6h5.6v1.1h-5.6zM48.4 209.0h5.6v1.1h-5.6zM48.4 237.1h5.6v1.1h-5.6zM48.4 265.2h5.6v1.1h-5.6zM48.4 433.8h5.6v1.1h-5.6zM57.8 265.2h5.6v1.1h-5.6zM57.8 340.1h5.6v1.1h-5.6zM57.8 433.8h5.6v1.1h-5.6zM67.2 162.2h5.6v1.1h-5.6zM85.9 452.5h5.6v1.1h-5.6zM95.2 40.5h5.6v1.1h-5.6zM95.2 87.3h5.6v1.1h-5.6zM95.2 293.3h5.6v1.1h-5.6zM95.2 433.8h5.6v1.1h-5.6zM104.6 3.0h5.6v1.1h-5.6zM104.6 40.5h5.6v1.1h-5.6zM104.6 49.8h5.6v1.1h-5.6zM104.6 143.5h5.6v1.1h-5.6zM114.0 106.0h5.6v1.1h-5.6zM114.0 209.0h5.6v1.1h-5.6zM114.0 293.3h5.6v1.1h-5.6zM114.0 377.6h5.6v1.1h-5.6zM123.3 190.3h5.6v1.1h-5.6zM123.3 358.9h5.6v1.1h-5.6zM123.3 415.1h5.6v1.1h-5.6zM132.7 49.8h5.6v1.1h-5.6zM132.7 77.9h5.6v1.1h-5.6zM132.7 180.9h5.6v1.1h-5.6zM132.7 283.9h5.6v1.1h-5.6zM132.7 387.0h5.6v1.1h-5.6zM142.1 31.1h5.6v1.1h-5.6zM142.1 49.8h5.6v1.1h-5.6zM142.1 96.7h5.6v1.1h-5.6zM142.1 143.5h5.6v1.1h-5.6zM151.4 209.0h5.6v1.1h-5.6zM151.4 274.6h5.6v1.1h-5.6zM151.4 330.8h5.6v1.1h-5.6zM160.8 134.1h5.6v1.1h-5.6zM160.8 415.1h5.6v1.1h-5.6zM170.2 -6.4h5.6v1.1h-5.6zM170.2 31.1h5.6v1.1h-5.6zM179.5 106.0h5.6v1.1h-5.6zM179.5 199.7h5.6v1.1h-5.6zM179.5 227.8h5.6v1.1h-5.6zM179.5 321.4h5.6v1.1h-5.6zM179.5 396.3h5.6v1.1h-5.6zM188.9 433.8h5.6v1.1h-5.6zM198.3 87.3h5.6v1.1h-5.6zM198.3 199.7h5.6v1.1h-5.6zM207.6 115.4h5.6v1.1h-5.6zM207.6 358.9h5.6v1.1h-5.6zM217.0 31.1h5.6v1.1h-5.6zM217.0 40.5h5.6v1.1h-5.6zM226.4 40.5h5.6v1.1h-5.6zM245.1 96.7h5.6v1.1h-5.6zM245.1 199.7h5.6v1.1h-5.6zM245.1 302.7h5.6v1.1h-5.6zM254.5 -6.4h5.6v1.1h-5.6zM254.5 368.2h5.6v1.1h-5.6zM254.5 471.2h5.6v1.1h-5.6zM263.8 471.2h5.6v1.1h-5.6zM273.2 387.0h5.6v1.1h-5.6zM282.5 77.9h5.6v1.1h-5.6zM282.5 190.3h5.6v1.1h-5.6zM282.5 255.9h5.6v1.1h-5.6zM282.5 302.7h5.6v1.1h-5.6zM291.9 96.7h5.6v1.1h-5.6zM291.9 349.5h5.6v1.1h-5.6zM301.3 209.0h5.6v1.1h-5.6zM301.3 274.6h5.6v1.1h-5.6zM310.6 237.1h5.6v1.1h-5.6zM310.6 358.9h5.6v1.1h-5.6zM310.6 452.5h5.6v1.1h-5.6zM320.0 171.6h5.6v1.1h-5.6zM320.0 340.1h5.6v1.1h-5.6zM320.0 358.9h5.6v1.1h-5.6zM320.0 415.1h5.6v1.1h-5.6zM329.4 283.9h5.6v1.1h-5.6zM338.7 461.9h5.6v1.1h-5.6zM348.1 340.1h5.6v1.1h-5.6zM348.1 396.3h5.6v1.1h-5.6zM357.5 40.5h5.6v1.1h-5.6zM357.5 162.2h5.6v1.1h-5.6zM357.5 265.2h5.6v1.1h-5.6zM357.5 312.0h5.6v1.1h-5.6zM357.5 368.2h5.6v1.1h-5.6zM376.2 12.4h5.6v1.1h-5.6zM376.2 312.0h5.6v1.1h-5.6zM376.2 424.4h5.6v1.1h-5.6zM385.6 40.5h5.6v1.1h-5.6zM394.9 405.7h5.6v1.1h-5.6zM404.3 3.0h5.6v1.1h-5.6zM404.3 433.8h5.6v1.1h-5.6zM423.0 321.4h5.6v1.1h-5.6zM423.0 405.7h5.6v1.1h-5.6zM423.0 424.4h5.6v1.1h-5.6zM432.4 31.1h5.6v1.1h-5.6zM432.4 255.9h5.6v1.1h-5.6zM441.8 180.9h5.6v1.1h-5.6zM441.8 209.0h5.6v1.1h-5.6zM441.8 321.4h5.6v1.1h-5.6zM451.1 21.7h5.6v1.1h-5.6zM460.5 12.4h5.6v1.1h-5.6z"/><path fill="#908175" d="M1.6 162.2h5.6v1.1h-5.6zM1.6 265.2h5.6v1.1h-5.6zM1.6 293.3h5.6v1.1h-5.6zM1.6 358.9h5.6v1.1h-5.6zM1.6 415.1h5.6v1.1h-5.6zM11.0 59.2h5.6v1.1h-5.6zM11.0 106.0h5.6v1.1h-5.6zM11.0 349.5h5.6v1.1h-5.6zM20.3 40.5h5.6v1.1h-5.6zM39.1 152.8h5.6v1.1h-5.6zM39.1 283.9h5.6v1.1h-5.6zM39.1 349.5h5.6v1.1h-5.6zM48.4 3.0h5.6v1.1h-5.6zM48.4 31.1h5.6v1.1h-5.6zM48.4 59.2h5.6v1.1h-5.6zM48.4 106.0h5.6v1.1h-5.6zM48.4 255.9h5.6v1.1h-5.6zM57.8 68.6h5.6v1.1h-5.6zM57.8 274.6h5.6v1.1h-5.6zM57.8 424.4h5.6v1.1h-5.6zM67.2 134.1h5.6v1.1h-5.6zM76.5 3.0h5.6v1.1h-5.6zM76.5 180.9h5.6v1.1h-5.6zM76.5 405.7h5.6v1.1h-5.6zM85.9 12.4h5.6v1.1h-5.6zM85.9 312.0h5.6v1.1h-5.6zM95.2 59.2h5.6v1.1h-5.6zM104.6 59.2h5.6v1.1h-5.6zM104.6 237.1h5.6v1.1h-5.6zM104.6 405.7h5.6v1.1h-5.6zM114.0 340.1h5.6v1.1h-5.6zM114.0 471.2h5.6v1.1h-5.6zM142.1 302.7h5.6v1.1h-5.6zM151.4 12.4h5.6v1.1h-5.6zM151.4 87.3h5.6v1.1h-5.6zM151.4 265.2h5.6v1.1h-5.6zM160.8 21.7h5.6v1.1h-5.6zM160.8 59.2h5.6v1.1h-5.6zM160.8 152.8h5.6v1.1h-5.6zM160.8 321.4h5.6v1.1h-5.6zM170.2 227.8h5.6v1.1h-5.6zM170.2 283.9h5.6v1.1h-5.6zM170.2 321.4h5.6v1.1h-5.6zM188.9 3.0h5.6v1.1h-5.6zM188.9 12.4h5.6v1.1h-5.6zM188.9 96.7h5.6v1.1h-5.6zM188.9 199.7h5.6v1.1h-5.6zM188.9 377.6h5.6v1.1h-5.6zM198.3 49.8h5.6v1.1h-5.6zM198.3 190.3h5.6v1.1h-5.6zM207.6 -6.4h5.6v1.1h-5.6zM207.6 274.6h5.6v1.1h-5.6zM226.4 415.1h5.6v1.1h-5.6zM235.7 349.5h5.6v1.1h-5.6zM245.1 227.8h5.6v1.1h-5.6zM254.5 96.7h5.6v1.1h-5.6zM254.5 180.9h5.6v1.1h-5.6zM263.8 218.4h5.6v1.1h-5.6zM263.8 358.9h5.6v1.1h-5.6zM273.2 152.8h5.6v1.1h-5.6zM273.2 283.9h5.6v1.1h-5.6zM273.2 340.1h5.6v1.1h-5.6zM282.5 124.7h5.6v1.1h-5.6zM282.5 209.0h5.6v1.1h-5.6zM282.5 246.5h5.6v1.1h-5.6zM291.9 246.5h5.6v1.1h-5.6zM291.9 368.2h5.6v1.1h-5.6zM301.3 96.7h5.6v1.1h-5.6zM301.3 162.2h5.6v1.1h-5.6zM301.3 237.1h5.6v1.1h-5.6zM301.3 405.7h5.6v1.1h-5.6zM310.6 21.7h5.6v1.1h-5.6zM310.6 199.7h5.6v1.1h-5.6zM310.6 330.8h5.6v1.1h-5.6zM310.6 433.8h5.6v1.1h-5.6zM329.4 40.5h5.6v1.1h-5.6zM329.4 461.9h5.6v1.1h-5.6zM338.7 115.4h5.6v1.1h-5.6zM348.1 143.5h5.6v1.1h-5.6zM348.1 302.7h5.6v1.1h-5.6zM366.8 3.0h5.6v1.1h-5.6zM366.8 31.1h5.6v1.1h-5.6zM366.8 77.9h5.6v1.1h-5.6zM366.8 152.8h5.6v1.1h-5.6zM366.8 199.7h5.6v1.1h-5.6zM376.2 59.2h5.6v1.1h-5.6zM376.2 87.3h5.6v1.1h-5.6zM376.2 190.3h5.6v1.1h-5.6zM376.2 283.9h5.6v1.1h-5.6zM376.2 293.3h5.6v1.1h-5.6zM376.2 405.7h5.6v1.1h-5.6zM385.6 96.7h5.6v1.1h-5.6zM385.6 106.0h5.6v1.1h-5.6zM394.9 3.0h5.6v1.1h-5.6zM394.9 40.5h5.6v1.1h-5.6zM394.9 87.3h5.6v1.1h-5.6zM394.9 293.3h5.6v1.1h-5.6zM394.9 349.5h5.6v1.1h-5.6zM404.3 143.5h5.6v1.1h-5.6zM413.7 143.5h5.6v1.1h-5.6zM413.7 227.8h5.6v1.1h-5.6zM423.0 152.8h5.6v1.1h-5.6zM432.4 96.7h5.6v1.1h-5.6zM432.4 124.7h5.6v1.1h-5.6zM432.4 302.7h5.6v1.1h-5.6zM432.4 330.8h5.6v1.1h-5.6zM441.8 115.4h5.6v1.1h-5.6zM441.8 415.1h5.6v1.1h-5.6zM441.8 461.9h5.6v1.1h-5.6zM451.1 68.6h5.6v1.1h-5.6zM451.1 330.8h5.6v1.1h-5.6zM460.5 3.0h5.6v1.1h-5.6zM460.5 134.1h5.6v1.1h-5.6zM460.5 162.2h5.6v1.1h-5.6zM460.5 209.0h5.6v1.1h-5.6zM460.5 283.9h5.6v1.1h-5.6zM460.5 302.7h5.6v1.1h-5.6zM460.5 387.0h5.6v1.1h-5.6z"/><path fill="#d4ccc0" d="M1.6 180.9h5.6v1.1h-5.6zM1.6 461.9h5.6v1.1h-5.6zM11.0 190.3h5.6v1.1h-5.6zM11.0 424.4h5.6v1.1h-5.6zM20.3 358.9h5.6v1.1h-5.6zM29.7 21.7h5.6v1.1h-5.6zM29.7 134.1h5.6v1.1h-5.6zM29.7 283.9h5.6v1.1h-5.6zM39.1 12.4h5.6v1.1h-5.6zM39.1 124.7h5.6v1.1h-5.6zM39.1 180.9h5.6v1.1h-5.6zM48.4 415.1h5.6v1.1h-5.6zM48.4 461.9h5.6v1.1h-5.6zM57.8 134.1h5.6v1.1h-5.6zM57.8 152.8h5.6v1.1h-5.6zM67.2 246.5h5.6v1.1h-5.6zM67.2 471.2h5.6v1.1h-5.6zM76.5 -6.4h5.6v1.1h-5.6zM76.5 21.7h5.6v1.1h-5.6zM76.5 255.9h5.6v1.1h-5.6zM85.9 190.3h5.6v1.1h-5.6zM85.9 443.2h5.6v1.1h-5.6zM95.2 3.0h5.6v1.1h-5.6zM95.2 349.5h5.6v1.1h-5.6zM104.6 199.7h5.6v1.1h-5.6zM104.6 321.4h5.6v1.1h-5.6zM114.0 12.4h5.6v1.1h-5.6zM114.0 237.1h5.6v1.1h-5.6zM123.3 49.8h5.6v1.1h-5.6zM123.3 106.0h5.6v1.1h-5.6zM123.3 293.3h5.6v1.1h-5.6zM123.3 452.5h5.6v1.1h-5.6zM132.7 40.5h5.6v1.1h-5.6zM132.7 199.7h5.6v1.1h-5.6zM132.7 443.2h5.6v1.1h-5.6zM142.1 87.3h5.6v1.1h-5.6zM142.1 321.4h5.6v1.1h-5.6zM142.1 340.1h5.6v1.1h-5.6zM151.4 115.4h5.6v1.1h-5.6zM151.4 162.2h5.6v1.1h-5.6zM151.4 255.9h5.6v1.1h-5.6zM160.8 190.3h5.6v1.1h-5.6zM160.8 452.5h5.6v1.1h-5.6zM170.2 3.0h5.6v1.1h-5.6zM179.5 134.1h5.6v1.1h-5.6zM179.5 171.6h5.6v1.1h-5.6zM179.5 190.3h5.6v1.1h-5.6zM188.9 40.5h5.6v1.1h-5.6zM188.9 87.3h5.6v1.1h-5.6zM188.9 190.3h5.6v1.1h-5.6zM207.6 49.8h5.6v1.1h-5.6zM207.6 209.0h5.6v1.1h-5.6zM217.0 255.9h5.6v1.1h-5.6zM217.0 433.8h5.6v1.1h-5.6zM235.7 87.3h5.6v1.1h-5.6zM235.7 115.4h5.6v1.1h-5.6zM235.7 143.5h5.6v1.1h-5.6zM245.1 152.8h5.6v1.1h-5.6zM245.1 358.9h5.6v1.1h-5.6zM254.5 115.4h5.6v1.1h-5.6zM263.8 405.7h5.6v1.1h-5.6zM273.2 3.0h5.6v1.1h-5.6zM273.2 227.8h5.6v1.1h-5.6zM282.5 312.0h5.6v1.1h-5.6zM282.5 415.1h5.6v1.1h-5.6zM291.9 115.4h5.6v1.1h-5.6zM291.9 396.3h5.6v1.1h-5.6zM291.9 443.2h5.6v1.1h-5.6zM310.6 68.6h5.6v1.1h-5.6zM310.6 171.6h5.6v1.1h-5.6zM310.6 265.2h5.6v1.1h-5.6zM310.6 415.1h5.6v1.1h-5.6zM320.0 12.4h5.6v1.1h-5.6zM320.0 21.7h5.6v1.1h-5.6zM320.0 134.1h5.6v1.1h-5.6zM329.4 171.6h5.6v1.1h-5.6zM329.4 265.2h5.6v1.1h-5.6zM329.4 274.6h5.6v1.1h-5.6zM329.4 349.5h5.6v1.1h-5.6zM348.1 31.1h5.6v1.1h-5.6zM348.1 452.5h5.6v1.1h-5.6zM357.5 31.1h5.6v1.1h-5.6zM357.5 143.5h5.6v1.1h-5.6zM366.8 227.8h5.6v1.1h-5.6zM366.8 349.5h5.6v1.1h-5.6zM376.2 77.9h5.6v1.1h-5.6zM376.2 349.5h5.6v1.1h-5.6zM376.2 452.5h5.6v1.1h-5.6zM385.6 124.7h5.6v1.1h-5.6zM385.6 162.2h5.6v1.1h-5.6zM385.6 218.4h5.6v1.1h-5.6zM385.6 283.9h5.6v1.1h-5.6zM385.6 396.3h5.6v1.1h-5.6zM394.9 77.9h5.6v1.1h-5.6zM394.9 358.9h5.6v1.1h-5.6zM394.9 471.2h5.6v1.1h-5.6zM404.3 124.7h5.6v1.1h-5.6zM404.3 415.1h5.6v1.1h-5.6zM432.4 106.0h5.6v1.1h-5.6zM441.8 68.6h5.6v1.1h-5.6zM441.8 106.0h5.6v1.1h-5.6zM451.1 115.4h5.6v1.1h-5.6zM451.1 387.0h5.6v1.1h-5.6zM451.1 415.1h5.6v1.1h-5.6zM451.1 424.4h5.6v1.1h-5.6zM460.5 424.4h5.6v1.1h-5.6z"/><path fill="#96c4bd" d="M1.6 246.5h5.6v1.1h-5.6zM1.6 387.0h5.6v1.1h-5.6zM11.0 199.7h5.6v1.1h-5.6zM11.0 368.2h5.6v1.1h-5.6zM20.3 134.1h5.6v1.1h-5.6zM29.7 124.7h5.6v1.1h-5.6zM29.7 152.8h5.6v1.1h-5.6zM29.7 162.2h5.6v1.1h-5.6zM29.7 396.3h5.6v1.1h-5.6zM29.7 471.2h5.6v1.1h-5.6zM39.1 3.0h5.6v1.1h-5.6zM39.1 96.7h5.6v1.1h-5.6zM39.1 452.5h5.6v1.1h-5.6zM48.4 40.5h5.6v1.1h-5.6zM48.4 349.5h5.6v1.1h-5.6zM57.8 143.5h5.6v1.1h-5.6zM57.8 237.1h5.6v1.1h-5.6zM57.8 358.9h5.6v1.1h-5.6zM67.2 180.9h5.6v1.1h-5.6zM76.5 340.1h5.6v1.1h-5.6zM76.5 387.0h5.6v1.1h-5.6zM85.9 68.6h5.6v1.1h-5.6zM95.2 -6.4h5.6v1.1h-5.6zM95.2 106.0h5.6v1.1h-5.6zM104.6 21.7h5.6v1.1h-5.6zM114.0 218.4h5.6v1.1h-5.6zM123.3 255.9h5.6v1.1h-5.6zM123.3 312.0h5.6v1.1h-5.6zM132.7 227.8h5.6v1.1h-5.6zM132.7 237.1h5.6v1.1h-5.6zM132.7 340.1h5.6v1.1h-5.6zM142.1 162.2h5.6v1.1h-5.6zM142.1 180.9h5.6v1.1h-5.6zM151.4 143.5h5.6v1.1h-5.6zM151.4 190.3h5.6v1.1h-5.6zM160.8 12.4h5.6v1.1h-5.6zM160.8 265.2h5.6v1.1h-5.6zM160.8 443.2h5.6v1.1h-5.6zM170.2 68.6h5.6v1.1h-5.6zM170.2 87.3h5.6v1.1h-5.6zM179.5 152.8h5.6v1.1h-5.6zM179.5 218.4h5.6v1.1h-5.6zM179.5 293.3h5.6v1.1h-5.6zM179.5 433.8h5.6v1.1h-5.6zM188.9 68.6h5.6v1.1h-5.6zM188.9 162.2h5.6v1.1h-5.6zM198.3 255.9h5.6v1.1h-5.6zM198.3 312.0h5.6v1.1h-5.6zM207.6 12.4h5.6v1.1h-5.6zM207.6 471.2h5.6v1.1h-5.6zM217.0 -6.4h5.6v1.1h-5.6zM217.0 96.7h5.6v1.1h-5.6zM217.0 115.4h5.6v1.1h-5.6zM217.0 387.0h5.6v1.1h-5.6zM217.0 471.2h5.6v1.1h-5.6zM226.4 115.4h5.6v1.1h-5.6zM226.4 134.1h5.6v1.1h-5.6zM235.7 152.8h5.6v1.1h-5.6zM235.7 246.5h5.6v1.1h-5.6zM254.5 21.7h5.6v1.1h-5.6zM254.5 68.6h5.6v1.1h-5.6zM254.5 143.5h5.6v1.1h-5.6zM254.5 152.8h5.6v1.1h-5.6zM254.5 415.1h5.6v1.1h-5.6zM263.8 77.9h5.6v1.1h-5.6zM263.8 143.5h5.6v1.1h-5.6zM273.2 246.5h5.6v1.1h-5.6zM273.2 302.7h5.6v1.1h-5.6zM273.2 415.1h5.6v1.1h-5.6zM282.5 106.0h5.6v1.1h-5.6zM282.5 115.4h5.6v1.1h-5.6zM282.5 237.1h5.6v1.1h-5.6zM291.9 162.2h5.6v1.1h-5.6zM291.9 283.9h5.6v1.1h-5.6zM291.9 340.1h5.6v1.1h-5.6zM291.9 358.9h5.6v1.1h-5.6zM301.3 49.8h5.6v1.1h-5.6zM301.3 106.0h5.6v1.1h-5.6zM301.3 143.5h5.6v1.1h-5.6zM301.3 190.3h5.6v1.1h-5.6zM301.3 246.5h5.6v1.1h-5.6zM301.3 349.5h5.6v1.1h-5.6zM301.3 377.6h5.6v1.1h-5.6zM310.6 106.0h5.6v1.1h-5.6zM310.6 255.9h5.6v1.1h-5.6zM320.0 106.0h5.6v1.1h-5.6zM320.0 461.9h5.6v1.1h-5.6zM329.4 368.2h5.6v1.1h-5.6zM338.7 106.0h5.6v1.1h-5.6zM338.7 180.9h5.6v1.1h-5.6zM338.7 387.0h5.6v1.1h-5.6zM348.1 77.9h5.6v1.1h-5.6zM348.1 330.8h5.6v1.1h-5.6zM348.1 461.9h5.6v1.1h-5.6zM357.5 -6.4h5.6v1.1h-5.6zM357.5 180.9h5.6v1.1h-5.6zM366.8 424.4h5.6v1.1h-5.6zM376.2 -6.4h5.6v1.1h-5.6zM376.2 106.0h5.6v1.1h-5.6zM376.2 218.4h5.6v1.1h-5.6zM385.6 190.3h5.6v1.1h-5.6zM385.6 227.8h5.6v1.1h-5.6zM385.6 274.6h5.6v1.1h-5.6zM385.6 433.8h5.6v1.1h-5.6zM394.9 171.6h5.6v1.1h-5.6zM394.9 190.3h5.6v1.1h-5.6zM394.9 443.2h5.6v1.1h-5.6zM404.3 77.9h5.6v1.1h-5.6zM404.3 209.0h5.6v1.1h-5.6zM404.3 368.2h5.6v1.1h-5.6zM423.0 302.7h5.6v1.1h-5.6zM432.4 77.9h5.6v1.1h-5.6zM432.4 321.4h5.6v1.1h-5.6zM441.8 340.1h5.6v1.1h-5.6zM441.8 387.0h5.6v1.1h-5.6zM451.1 -6.4h5.6v1.1h-5.6zM451.1 199.7h5.6v1.1h-5.6zM451.1 283.9h5.6v1.1h-5.6zM451.1 443.2h5.6v1.1h-5.6z"/><path fill="#e9e9e9" d="M1.6 255.9h5.6v1.1h-5.6zM1.6 321.4h5.6v1.1h-5.6zM11.0 443.2h5.6v1.1h-5.6zM20.3 199.7h5.6v1.1h-5.6zM29.7 330.8h5.6v1.1h-5.6zM29.7 340.1h5.6v1.1h-5.6zM29.7 461.9h5.6v1.1h-5.6zM39.1 246.5h5.6v1.1h-5.6zM39.1 433.8h5.6v1.1h-5.6zM57.8 31.1h5.6v1.1h-5.6zM67.2 21.7h5.6v1.1h-5.6zM67.2 77.9h5.6v1.1h-5.6zM67.2 143.5h5.6v1.1h-5.6zM76.5 87.3h5.6v1.1h-5.6zM85.9 171.6h5.6v1.1h-5.6zM85.9 433.8h5.6v1.1h-5.6zM95.2 31.1h5.6v1.1h-5.6zM95.2 49.8h5.6v1.1h-5.6zM95.2 471.2h5.6v1.1h-5.6zM104.6 274.6h5.6v1.1h-5.6zM104.6 349.5h5.6v1.1h-5.6zM114.0 59.2h5.6v1.1h-5.6zM123.3 246.5h5.6v1.1h-5.6zM123.3 283.9h5.6v1.1h-5.6zM123.3 377.6h5.6v1.1h-5.6zM123.3 443.2h5.6v1.1h-5.6zM132.7 68.6h5.6v1.1h-5.6zM132.7 209.0h5.6v1.1h-5.6zM132.7 293.3h5.6v1.1h-5.6zM142.1 152.8h5.6v1.1h-5.6zM142.1 255.9h5.6v1.1h-5.6zM151.4 40.5h5.6v1.1h-5.6zM151.4 246.5h5.6v1.1h-5.6zM151.4 396.3h5.6v1.1h-5.6zM151.4 433.8h5.6v1.1h-5.6zM151.4 471.2h5.6v1.1h-5.6zM160.8 3.0h5.6v1.1h-5.6zM160.8 209.0h5.6v1.1h-5.6zM160.8 227.8h5.6v1.1h-5.6zM160.8 461.9h5.6v1.1h-5.6zM170.2 134.1h5.6v1.1h-5.6zM170.2 433.8h5.6v1.1h-5.6zM179.5 162.2h5.6v1.1h-5.6zM179.5 330.8h5.6v1.1h-5.6zM179.5 377.6h5.6v1.1h-5.6zM188.9 134.1h5.6v1.1h-5.6zM188.9 396.3h5.6v1.1h-5.6zM198.3 218.4h5.6v1.1h-5.6zM198.3 265.2h5.6v1.1h-5.6zM207.6 59.2h5.6v1.1h-5.6zM207.6 293.3h5.6v1.1h-5.6zM217.0 59.2h5.6v1.1h-5.6zM217.0 171.6h5.6v1.1h-5.6zM217.0 358.9h5.6v1.1h-5.6zM217.0 415.1h5.6v1.1h-5.6zM226.4 -6.4h5.6v1.1h-5.6zM226.4 59.2h5.6v1.1h-5.6zM226.4 218.4h5.6v1.1h-5.6zM226.4 461.9h5.6v1.1h-5.6zM235.7 77.9h5.6v1.1h-5.6zM235.7 180.9h5.6v1.1h-5.6zM235.7 209.0h5.6v1.1h-5.6zM245.1 106.0h5.6v1.1h-5.6zM245.1 312.0h5.6v1.1h-5.6zM254.5 40.5h5.6v1.1h-5.6zM254.5 265.2h5.6v1.1h-5.6zM263.8 162.2h5.6v1.1h-5.6zM273.2 124.7h5.6v1.1h-5.6zM273.2 377.6h5.6v1.1h-5.6zM282.5 3.0h5.6v1.1h-5.6zM282.5 49.8h5.6v1.1h-5.6zM282.5 358.9h5.6v1.1h-5.6zM291.9 3.0h5.6v1.1h-5.6zM301.3 255.9h5.6v1.1h-5.6zM301.3 321.4h5.6v1.1h-5.6zM301.3 461.9h5.6v1.1h-5.6zM301.3 471.2h5.6v1.1h-5.6zM310.6 -6.4h5.6v1.1h-5.6zM310.6 293.3h5.6v1.1h-5.6zM310.6 302.7h5.6v1.1h-5.6zM320.0 321.4h5.6v1.1h-5.6zM329.4 209.0h5.6v1.1h-5.6zM329.4 246.5h5.6v1.1h-5.6zM329.4 424.4h5.6v1.1h-5.6zM338.7 -6.4h5.6v1.1h-5.6zM338.7 21.7h5.6v1.1h-5.6zM338.7 77.9h5.6v1.1h-5.6zM338.7 124.7h5.6v1.1h-5.6zM338.7 274.6h5.6v1.1h-5.6zM348.1 49.8h5.6v1.1h-5.6zM348.1 115.4h5.6v1.1h-5.6zM366.8 49.8h5.6v1.1h-5.6zM376.2 255.9h5.6v1.1h-5.6zM376.2 358.9h5.6v1.1h-5.6zM385.6 349.5h5.6v1.1h-5.6zM385.6 358.9h5.6v1.1h-5.6zM394.9 21.7h5.6v1.1h-5.6zM404.3 115.4h5.6v1.1h-5.6zM404.3 237.1h5.6v1.1h-5.6zM404.3 424.4h5.6v1.1h-5.6zM413.7 59.2h5.6v1.1h-5.6zM413.7 180.9h5.6v1.1h-5.6zM423.0 3.0h5.6v1.1h-5.6zM423.0 77.9h5.6v1.1h-5.6zM423.0 134.1h5.6v1.1h-5.6zM423.0 312.0h5.6v1.1h-5.6zM432.4 171.6h5.6v1.1h-5.6zM432.4 433.8h5.6v1.1h-5.6zM432.4 461.9h5.6v1.1h-5.6zM441.8 152.8h5.6v1.1h-5.6zM441.8 293.3h5.6v1.1h-5.6zM441.8 377.6h5.6v1.1h-5.6zM451.1 152.8h5.6v1.1h-5.6zM451.1 349.5h5.6v1.1h-5.6zM460.5 77.9h5.6v1.1h-5.6zM460.5 190.3h5.6v1.1h-5.6z"/><path fill="#debbbb" d="M1.6 330.8h5.6v1.1h-5.6zM11.0 87.3h5.6v1.1h-5.6zM20.3 59.2h5.6v1.1h-5.6zM20.3 87.3h5.6v1.1h-5.6zM29.7 246.5h5.6v1.1h-5.6zM48.4 171.6h5.6v1.1h-5.6zM57.8 312.0h5.6v1.1h-5.6zM67.2 237.1h5.6v1.1h-5.6zM76.5 424.4h5.6v1.1h-5.6zM76.5 433.8h5.6v1.1h-5.6zM85.9 40.5h5.6v1.1h-5.6zM85.9 227.8h5.6v1.1h-5.6zM85.9 358.9h5.6v1.1h-5.6zM85.9 368.2h5.6v1.1h-5.6zM114.0 283.9h5.6v1.1h-5.6zM123.3 152.8h5.6v1.1h-5.6zM123.3 237.1h5.6v1.1h-5.6zM142.1 433.8h5.6v1.1h-5.6zM151.4 461.9h5.6v1.1h-5.6zM160.8 96.7h5.6v1.1h-5.6zM179.5 405.7h5.6v1.1h-5.6zM198.3 443.2h5.6v1.1h-5.6zM207.6 190.3h5.6v1.1h-5.6zM207.6 405.7h5.6v1.1h-5.6zM235.7 255.9h5.6v1.1h-5.6zM235.7 433.8h5.6v1.1h-5.6zM245.1 87.3h5.6v1.1h-5.6zM245.1 321.4h5.6v1.1h-5.6zM263.8 171.6h5.6v1.1h-5.6zM263.8 461.9h5.6v1.1h-5.6zM282.5 -6.4h5.6v1.1h-5.6zM282.5 396.3h5.6v1.1h-5.6zM291.9 265.2h5.6v1.1h-5.6zM301.3 21.7h5.6v1.1h-5.6zM301.3 199.7h5.6v1.1h-5.6zM301.3 302.7h5.6v1.1h-5.6zM320.0 180.9h5.6v1.1h-5.6zM320.0 293.3h5.6v1.1h-5.6zM357.5 237.1h5.6v1.1h-5.6zM366.8 396.3h5.6v1.1h-5.6zM385.6 -6.4h5.6v1.1h-5.6zM385.6 49.8h5.6v1.1h-5.6zM385.6 265.2h5.6v1.1h-5.6zM385.6 452.5h5.6v1.1h-5.6zM413.7 396.3h5.6v1.1h-5.6zM423.0 190.3h5.6v1.1h-5.6zM423.0 349.5h5.6v1.1h-5.6zM423.0 433.8h5.6v1.1h-5.6zM451.1 87.3h5.6v1.1h-5.6zM451.1 461.9h5.6v1.1h-5.6zM460.5 87.3h5.6v1.1h-5.6z"/><path fill="#6e896f" d="M1.6 368.2h5.6v1.1h-5.6zM11.0 21.7h5.6v1.1h-5.6zM11.0 115.4h5.6v1.1h-5.6zM11.0 143.5h5.6v1.1h-5.6zM11.0 246.5h5.6v1.1h-5.6zM11.0 340.1h5.6v1.1h-5.6zM11.0 471.2h5.6v1.1h-5.6zM20.3 368.2h5.6v1.1h-5.6zM20.3 377.6h5.6v1.1h-5.6zM29.7 265.2h5.6v1.1h-5.6zM29.7 377.6h5.6v1.1h-5.6zM29.7 452.5h5.6v1.1h-5.6zM39.1 340.1h5.6v1.1h-5.6zM39.1 424.4h5.6v1.1h-5.6zM39.1 471.2h5.6v1.1h-5.6zM48.4 134.1h5.6v1.1h-5.6zM48.4 180.9h5.6v1.1h-5.6zM48.4 199.7h5.6v1.1h-5.6zM48.4 302.7h5.6v1.1h-5.6zM48.4 452.5h5.6v1.1h-5.6zM57.8 77.9h5.6v1.1h-5.6zM57.8 405.7h5.6v1.1h-5.6zM67.2 152.8h5.6v1.1h-5.6zM67.2 199.7h5.6v1.1h-5.6zM67.2 433.8h5.6v1.1h-5.6zM67.2 452.5h5.6v1.1h-5.6zM76.5 68.6h5.6v1.1h-5.6zM85.9 49.8h5.6v1.1h-5.6zM85.9 199.7h5.6v1.1h-5.6zM85.9 218.4h5.6v1.1h-5.6zM85.9 396.3h5.6v1.1h-5.6zM85.9 405.7h5.6v1.1h-5.6zM85.9 471.2h5.6v1.1h-5.6zM95.2 12.4h5.6v1.1h-5.6zM95.2 162.2h5.6v1.1h-5.6zM95.2 190.3h5.6v1.1h-5.6zM95.2 199.7h5.6v1.1h-5.6zM104.6 96.7h5.6v1.1h-5.6zM104.6 162.2h5.6v1.1h-5.6zM104.6 293.3h5.6v1.1h-5.6zM104.6 330.8h5.6v1.1h-5.6zM114.0 96.7h5.6v1.1h-5.6zM114.0 171.6h5.6v1.1h-5.6zM114.0 330.8h5.6v1.1h-5.6zM123.3 40.5h5.6v1.1h-5.6zM123.3 77.9h5.6v1.1h-5.6zM123.3 143.5h5.6v1.1h-5.6zM123.3 368.2h5.6v1.1h-5.6zM132.7 265.2h5.6v1.1h-5.6zM142.1 77.9h5.6v1.1h-5.6zM142.1 134.1h5.6v1.1h-5.6zM142.1 377.6h5.6v1.1h-5.6zM142.1 396.3h5.6v1.1h-5.6zM151.4 180.9h5.6v1.1h-5.6zM151.4 302.7h5.6v1.1h-5.6zM160.8 293.3h5.6v1.1h-5.6zM160.8 433.8h5.6v1.1h-5.6zM170.2 12.4h5.6v1.1h-5.6zM170.2 349.5h5.6v1.1h-5.6zM170.2 358.9h5.6v1.1h-5.6zM170.2 387.0h5.6v1.1h-5.6zM170.2 424.4h5.6v1.1h-5.6zM170.2 443.2h5.6v1.1h-5.6zM179.5 3.0h5.6v1.1h-5.6zM179.5 180.9h5.6v1.1h-5.6zM188.9 124.7h5.6v1.1h-5.6zM188.9 415.1h5.6v1.1h-5.6zM198.3 77.9h5.6v1.1h-5.6zM198.3 358.9h5.6v1.1h-5.6zM198.3 377.6h5.6v1.1h-5.6zM207.6 3.0h5.6v1.1h-5.6zM207.6 218.4h5.6v1.1h-5.6zM207.6 255.9h5.6v1.1h-5.6zM217.0 312.0h5.6v1.1h-5.6zM217.0 452.5h5.6v1.1h-5.6zM217.0 461.9h5.6v1.1h-5.6zM226.4 3.0h5.6v1.1h-5.6zM226.4 77.9h5.6v1.1h-5.6zM226.4 283.9h5.6v1.1h-5.6zM226.4 396.3h5.6v1.1h-5.6zM226.4 433.8h5.6v1.1h-5.6zM235.7 171.6h5.6v1.1h-5.6zM235.7 283.9h5.6v1.1h-5.6zM235.7 452.5h5.6v1.1h-5.6zM245.1 59.2h5.6v1.1h-5.6zM245.1 143.5h5.6v1.1h-5.6zM254.5 87.3h5.6v1.1h-5.6zM254.5 162.2h5.6v1.1h-5.6zM254.5 321.4h5.6v1.1h-5.6zM263.8 199.7h5.6v1.1h-5.6zM263.8 255.9h5.6v1.1h-5.6zM263.8 274.6h5.6v1.1h-5.6zM263.8 293.3h5.6v1.1h-5.6zM263.8 302.7h5.6v1.1h-5.6zM263.8 349.5h5.6v1.1h-5.6zM273.2 21.7h5.6v1.1h-5.6zM273.2 96.7h5.6v1.1h-5.6zM273.2 134.1h5.6v1.1h-5.6zM282.5 21.7h5.6v1.1h-5.6zM282.5 265.2h5.6v1.1h-5.6zM282.5 321.4h5.6v1.1h-5.6zM291.9 87.3h5.6v1.1h-5.6zM291.9 218.4h5.6v1.1h-5.6zM291.9 255.9h5.6v1.1h-5.6zM301.3 312.0h5.6v1.1h-5.6zM301.3 358.9h5.6v1.1h-5.6zM301.3 443.2h5.6v1.1h-5.6zM310.6 190.3h5.6v1.1h-5.6zM310.6 349.5h5.6v1.1h-5.6zM320.0 -6.4h5.6v1.1h-5.6zM320.0 255.9h5.6v1.1h-5.6zM320.0 396.3h5.6v1.1h-5.6zM320.0 443.2h5.6v1.1h-5.6zM320.0 471.2h5.6v1.1h-5.6zM329.4 134.1h5.6v1.1h-5.6zM329.4 218.4h5.6v1.1h-5.6zM329.4 433.8h5.6v1.1h-5.6zM338.7 59.2h5.6v1.1h-5.6zM338.7 218.4h5.6v1.1h-5.6zM338.7 246.5h5.6v1.1h-5.6zM338.7 349.5h5.6v1.1h-5.6zM338.7 471.2h5.6v1.1h-5.6zM348.1 218.4h5.6v1.1h-5.6zM348.1 443.2h5.6v1.1h-5.6zM357.5 396.3h5.6v1.1h-5.6zM366.8 68.6h5.6v1.1h-5.6zM366.8 96.7h5.6v1.1h-5.6zM366.8 209.0h5.6v1.1h-5.6zM366.8 283.9h5.6v1.1h-5.6zM366.8 312.0h5.6v1.1h-5.6zM366.8 471.2h5.6v1.1h-5.6zM376.2 68.6h5.6v1.1h-5.6zM376.2 143.5h5.6v1.1h-5.6zM376.2 152.8h5.6v1.1h-5.6zM376.2 237.1h5.6v1.1h-5.6zM376.2 246.5h5.6v1.1h-5.6zM376.2 415.1h5.6v1.1h-5.6zM385.6 134.1h5.6v1.1h-5.6zM385.6 143.5h5.6v1.1h-5.6zM394.9 31.1h5.6v1.1h-5.6zM394.9 312.0h5.6v1.1h-5.6zM394.9 368.2h5.6v1.1h-5.6zM404.3 -6.4h5.6v1.1h-5.6zM404.3 68.6h5.6v1.1h-5.6zM404.3 349.5h5.6v1.1h-5.6zM404.3 461.9h5.6v1.1h-5.6zM423.0 180.9h5.6v1.1h-5.6zM423.0 471.2h5.6v1.1h-5.6zM432.4 246.5h5.6v1.1h-5.6zM432.4 377.6h5.6v1.1h-5.6zM441.8 -6.4h5.6v1.1h-5.6zM441.8 21.7h5.6v1.1h-5.6zM441.8 134.1h5.6v1.1h-5.6zM451.1 31.1h5.6v1.1h-5.6zM451.1 40.5h5.6v1.1h-5.6zM451.1 106.0h5.6v1.1h-5.6zM451.1 143.5h5.6v1.1h-5.6zM451.1 265.2h5.6v1.1h-5.6zM451.1 321.4h5.6v1.1h-5.6zM451.1 377.6h5.6v1.1h-5.6zM460.5 21.7h5.6v1.1h-5.6zM460.5 96.7h5.6v1.1h-5.6zM460.5 274.6h5.6v1.1h-5.6zM460.5 368.2h5.6v1.1h-5.6z"/><path fill="#d9d59a" d="M1.6 396.3h5.6v1.1h-5.6zM11.0 171.6h5.6v1.1h-5.6zM29.7 40.5h5.6v1.1h-5.6zM48.4 218.4h5.6v1.1h-5.6zM48.4 377.6h5.6v1.1h-5.6zM57.8 283.9h5.6v1.1h-5.6zM67.2 274.6h5.6v1.1h-5.6zM76.5 218.4h5.6v1.1h-5.6zM95.2 134.1h5.6v1.1h-5.6zM95.2 302.7h5.6v1.1h-5.6zM114.0 152.8h5.6v1.1h-5.6zM114.0 433.8h5.6v1.1h-5.6zM123.3 115.4h5.6v1.1h-5.6zM132.7 471.2h5.6v1.1h-5.6zM142.1 387.0h5.6v1.1h-5.6zM198.3 321.4h5.6v1.1h-5.6zM198.3 461.9h5.6v1.1h-5.6zM207.6 237.1h5.6v1.1h-5.6zM207.6 424.4h5.6v1.1h-5.6zM217.0 227.8h5.6v1.1h-5.6zM217.0 340.1h5.6v1.1h-5.6zM226.4 68.6h5.6v1.1h-5.6zM226.4 124.7h5.6v1.1h-5.6zM235.7 -6.4h5.6v1.1h-5.6zM235.7 415.1h5.6v1.1h-5.6zM245.1 21.7h5.6v1.1h-5.6zM245.1 246.5h5.6v1.1h-5.6zM245.1 433.8h5.6v1.1h-5.6zM273.2 461.9h5.6v1.1h-5.6zM291.9 31.1h5.6v1.1h-5.6zM291.9 77.9h5.6v1.1h-5.6zM291.9 124.7h5.6v1.1h-5.6zM291.9 405.7h5.6v1.1h-5.6zM310.6 3.0h5.6v1.1h-5.6zM320.0 115.4h5.6v1.1h-5.6zM320.0 312.0h5.6v1.1h-5.6zM329.4 31.1h5.6v1.1h-5.6zM338.7 12.4h5.6v1.1h-5.6zM338.7 96.7h5.6v1.1h-5.6zM338.7 377.6h5.6v1.1h-5.6zM338.7 415.1h5.6v1.1h-5.6zM348.1 106.0h5.6v1.1h-5.6zM348.1 162.2h5.6v1.1h-5.6zM348.1 190.3h5.6v1.1h-5.6zM366.8 59.2h5.6v1.1h-5.6zM376.2 3.0h5.6v1.1h-5.6zM394.9 237.1h5.6v1.1h-5.6zM404.3 302.7h5.6v1.1h-5.6zM413.7 -6.4h5.6v1.1h-5.6zM413.7 302.7h5.6v1.1h-5.6zM413.7 443.2h5.6v1.1h-5.6zM423.0 40.5h5.6v1.1h-5.6zM423.0 162.2h5.6v1.1h-5.6zM432.4 3.0h5.6v1.1h-5.6zM432.4 68.6h5.6v1.1h-5.6zM432.4 199.7h5.6v1.1h-5.6zM432.4 471.2h5.6v1.1h-5.6zM441.8 96.7h5.6v1.1h-5.6zM451.1 3.0h5.6v1.1h-5.6zM460.5 396.3h5.6v1.1h-5.6z"/><path fill="#bbd7c3" d="M1.6 433.8h5.6v1.1h-5.6zM11.0 68.6h5.6v1.1h-5.6zM11.0 321.4h5.6v1.1h-5.6zM11.0 358.9h5.6v1.1h-5.6zM11.0 415.1h5.6v1.1h-5.6zM20.3 106.0h5.6v1.1h-5.6zM20.3 124.7h5.6v1.1h-5.6zM20.3 283.9h5.6v1.1h-5.6zM29.7 358.9h5.6v1.1h-5.6zM29.7 424.4h5.6v1.1h-5.6zM39.1 87.3h5.6v1.1h-5.6zM39.1 227.8h5.6v1.1h-5.6zM39.1 321.4h5.6v1.1h-5.6zM39.1 358.9h5.6v1.1h-5.6zM48.4 124.7h5.6v1.1h-5.6zM48.4 227.8h5.6v1.1h-5.6zM48.4 358.9h5.6v1.1h-5.6zM48.4 405.7h5.6v1.1h-5.6zM57.8 227.8h5.6v1.1h-5.6zM67.2 387.0h5.6v1.1h-5.6zM76.5 227.8h5.6v1.1h-5.6zM76.5 312.0h5.6v1.1h-5.6zM76.5 415.1h5.6v1.1h-5.6zM85.9 424.4h5.6v1.1h-5.6zM95.2 124.7h5.6v1.1h-5.6zM95.2 152.8h5.6v1.1h-5.6zM95.2 312.0h5.6v1.1h-5.6zM104.6 12.4h5.6v1.1h-5.6zM104.6 283.9h5.6v1.1h-5.6zM104.6 312.0h5.6v1.1h-5.6zM104.6 415.1h5.6v1.1h-5.6zM114.0 124.7h5.6v1.1h-5.6zM114.0 162.2h5.6v1.1h-5.6zM123.3 68.6h5.6v1.1h-5.6zM132.7 12.4h5.6v1.1h-5.6zM132.7 21.7h5.6v1.1h-5.6zM132.7 312.0h5.6v1.1h-5.6zM132.7 415.1h5.6v1.1h-5.6zM142.1 330.8h5.6v1.1h-5.6zM151.4 77.9h5.6v1.1h-5.6zM160.8 246.5h5.6v1.1h-5.6zM160.8 283.9h5.6v1.1h-5.6zM160.8 340.1h5.6v1.1h-5.6zM170.2 49.8h5.6v1.1h-5.6zM170.2 209.0h5.6v1.1h-5.6zM179.5 274.6h5.6v1.1h-5.6zM179.5 415.1h5.6v1.1h-5.6zM188.9 -6.4h5.6v1.1h-5.6zM188.9 21.7h5.6v1.1h-5.6zM188.9 283.9h5.6v1.1h-5.6zM198.3 -6.4h5.6v1.1h-5.6zM198.3 115.4h5.6v1.1h-5.6zM198.3 302.7h5.6v1.1h-5.6zM207.6 68.6h5.6v1.1h-5.6zM207.6 143.5h5.6v1.1h-5.6zM207.6 171.6h5.6v1.1h-5.6zM207.6 321.4h5.6v1.1h-5.6zM217.0 3.0h5.6v1.1h-5.6zM226.4 180.9h5.6v1.1h-5.6zM226.4 199.7h5.6v1.1h-5.6zM226.4 237.1h5.6v1.1h-5.6zM226.4 265.2h5.6v1.1h-5.6zM226.4 443.2h5.6v1.1h-5.6zM235.7 330.8h5.6v1.1h-5.6zM235.7 396.3h5.6v1.1h-5.6zM254.5 405.7h5.6v1.1h-5.6zM263.8 68.6h5.6v1.1h-5.6zM263.8 96.7h5.6v1.1h-5.6zM263.8 134.1h5.6v1.1h-5.6zM263.8 209.0h5.6v1.1h-5.6zM273.2 31.1h5.6v1.1h-5.6zM273.2 330.8h5.6v1.1h-5.6zM273.2 424.4h5.6v1.1h-5.6zM301.3 3.0h5.6v1.1h-5.6zM301.3 40.5h5.6v1.1h-5.6zM301.3 115.4h5.6v1.1h-5.6zM301.3 415.1h5.6v1.1h-5.6zM301.3 424.4h5.6v1.1h-5.6zM310.6 340.1h5.6v1.1h-5.6zM310.6 368.2h5.6v1.1h-5.6zM320.0 68.6h5.6v1.1h-5.6zM320.0 77.9h5.6v1.1h-5.6zM320.0 377.6h5.6v1.1h-5.6zM329.4 59.2h5.6v1.1h-5.6zM329.4 152.8h5.6v1.1h-5.6zM329.4 190.3h5.6v1.1h-5.6zM329.4 312.0h5.6v1.1h-5.6zM329.4 443.2h5.6v1.1h-5.6zM338.7 237.1h5.6v1.1h-5.6zM338.7 255.9h5.6v1.1h-5.6zM338.7 452.5h5.6v1.1h-5.6zM348.1 471.2h5.6v1.1h-5.6zM357.5 190.3h5.6v1.1h-5.6zM357.5 199.7h5.6v1.1h-5.6zM366.8 274.6h5.6v1.1h-5.6zM376.2 31.1h5.6v1.1h-5.6zM376.2 115.4h5.6v1.1h-5.6zM376.2 377.6h5.6v1.1h-5.6zM385.6 115.4h5.6v1.1h-5.6zM385.6 255.9h5.6v1.1h-5.6zM385.6 293.3h5.6v1.1h-5.6zM394.9 283.9h5.6v1.1h-5.6zM394.9 340.1h5.6v1.1h-5.6zM394.9 433.8h5.6v1.1h-5.6zM404.3 59.2h5.6v1.1h-5.6zM413.7 12.4h5.6v1.1h-5.6zM413.7 68.6h5.6v1.1h-5.6zM413.7 330.8h5.6v1.1h-5.6zM413.7 349.5h5.6v1.1h-5.6zM423.0 21.7h5.6v1.1h-5.6zM432.4 283.9h5.6v1.1h-5.6zM451.1 12.4h5.6v1.1h-5.6zM451.1 293.3h5.6v1.1h-5.6zM451.1 396.3h5.6v1.1h-5.6zM460.5 59.2h5.6v1.1h-5.6zM460.5 199.7h5.6v1.1h-5.6z"/><path fill="#afcad6" d="M1.6 443.2h5.6v1.1h-5.6zM11.0 3.0h5.6v1.1h-5.6zM29.7 171.6h5.6v1.1h-5.6zM29.7 443.2h5.6v1.1h-5.6zM39.1 49.8h5.6v1.1h-5.6zM48.4 -6.4h5.6v1.1h-5.6zM48.4 115.4h5.6v1.1h-5.6zM57.8 49.8h5.6v1.1h-5.6zM67.2 49.8h5.6v1.1h-5.6zM67.2 124.7h5.6v1.1h-5.6zM67.2 340.1h5.6v1.1h-5.6zM76.5 199.7h5.6v1.1h-5.6zM76.5 274.6h5.6v1.1h-5.6zM76.5 330.8h5.6v1.1h-5.6zM85.9 77.9h5.6v1.1h-5.6zM85.9 124.7h5.6v1.1h-5.6zM85.9 162.2h5.6v1.1h-5.6zM85.9 180.9h5.6v1.1h-5.6zM85.9 293.3h5.6v1.1h-5.6zM95.2 265.2h5.6v1.1h-5.6zM104.6 68.6h5.6v1.1h-5.6zM104.6 87.3h5.6v1.1h-5.6zM104.6 106.0h5.6v1.1h-5.6zM104.6 190.3h5.6v1.1h-5.6zM104.6 424.4h5.6v1.1h-5.6zM114.0 302.7h5.6v1.1h-5.6zM123.3 265.2h5.6v1.1h-5.6zM123.3 340.1h5.6v1.1h-5.6zM132.7 31.1h5.6v1.1h-5.6zM132.7 87.3h5.6v1.1h-5.6zM132.7 405.7h5.6v1.1h-5.6zM142.1 21.7h5.6v1.1h-5.6zM142.1 171.6h5.6v1.1h-5.6zM142.1 265.2h5.6v1.1h-5.6zM142.1 443.2h5.6v1.1h-5.6zM151.4 31.1h5.6v1.1h-5.6zM160.8 218.4h5.6v1.1h-5.6zM170.2 199.7h5.6v1.1h-5.6zM170.2 237.1h5.6v1.1h-5.6zM179.5 49.8h5.6v1.1h-5.6zM179.5 143.5h5.6v1.1h-5.6zM179.5 255.9h5.6v1.1h-5.6zM188.9 143.5h5.6v1.1h-5.6zM198.3 96.7h5.6v1.1h-5.6zM198.3 349.5h5.6v1.1h-5.6zM198.3 368.2h5.6v1.1h-5.6zM198.3 433.8h5.6v1.1h-5.6zM207.6 106.0h5.6v1.1h-5.6zM207.6 124.7h5.6v1.1h-5.6zM207.6 265.2h5.6v1.1h-5.6zM207.6 433.8h5.6v1.1h-5.6zM217.0 162.2h5.6v1.1h-5.6zM226.4 302.7h5.6v1.1h-5.6zM226.4 312.0h5.6v1.1h-5.6zM226.4 377.6h5.6v1.1h-5.6zM235.7 96.7h5.6v1.1h-5.6zM235.7 162.2h5.6v1.1h-5.6zM235.7 321.4h5.6v1.1h-5.6zM235.7 358.9h5.6v1.1h-5.6zM235.7 387.0h5.6v1.1h-5.6zM245.1 471.2h5.6v1.1h-5.6zM254.5 283.9h5.6v1.1h-5.6zM263.8 190.3h5.6v1.1h-5.6zM273.2 49.8h5.6v1.1h-5.6zM273.2 321.4h5.6v1.1h-5.6zM282.5 461.9h5.6v1.1h-5.6zM291.9 -6.4h5.6v1.1h-5.6zM291.9 49.8h5.6v1.1h-5.6zM291.9 190.3h5.6v1.1h-5.6zM301.3 265.2h5.6v1.1h-5.6zM301.3 340.1h5.6v1.1h-5.6zM320.0 162.2h5.6v1.1h-5.6zM320.0 209.0h5.6v1.1h-5.6zM329.4 330.8h5.6v1.1h-5.6zM338.7 143.5h5.6v1.1h-5.6zM338.7 162.2h5.6v1.1h-5.6zM338.7 433.8h5.6v1.1h-5.6zM348.1 312.0h5.6v1.1h-5.6zM366.8 321.4h5.6v1.1h-5.6zM366.8 358.9h5.6v1.1h-5.6zM366.8 443.2h5.6v1.1h-5.6zM366.8 452.5h5.6v1.1h-5.6zM366.8 461.9h5.6v1.1h-5.6zM376.2 162.2h5.6v1.1h-5.6zM394.9 124.7h5.6v1.1h-5.6zM404.3 31.1h5.6v1.1h-5.6zM404.3 396.3h5.6v1.1h-5.6zM423.0 31.1h5.6v1.1h-5.6zM423.0 330.8h5.6v1.1h-5.6zM423.0 368.2h5.6v1.1h-5.6zM423.0 443.2h5.6v1.1h-5.6zM432.4 340.1h5.6v1.1h-5.6zM441.8 77.9h5.6v1.1h-5.6zM441.8 358.9h5.6v1.1h-5.6zM451.1 162.2h5.6v1.1h-5.6zM460.5 405.7h5.6v1.1h-5.6zM460.5 433.8h5.6v1.1h-5.6z"/><path fill="#c5867f" d="M11.0 40.5h5.6v1.1h-5.6zM11.0 152.8h5.6v1.1h-5.6zM11.0 227.8h5.6v1.1h-5.6zM29.7 387.0h5.6v1.1h-5.6zM29.7 415.1h5.6v1.1h-5.6zM39.1 134.1h5.6v1.1h-5.6zM48.4 340.1h5.6v1.1h-5.6zM48.4 387.0h5.6v1.1h-5.6zM67.2 396.3h5.6v1.1h-5.6zM76.5 209.0h5.6v1.1h-5.6zM85.9 106.0h5.6v1.1h-5.6zM85.9 349.5h5.6v1.1h-5.6zM104.6 218.4h5.6v1.1h-5.6zM123.3 180.9h5.6v1.1h-5.6zM123.3 405.7h5.6v1.1h-5.6zM132.7 106.0h5.6v1.1h-5.6zM142.1 461.9h5.6v1.1h-5.6zM151.4 152.8h5.6v1.1h-5.6zM170.2 340.1h5.6v1.1h-5.6zM188.9 209.0h5.6v1.1h-5.6zM188.9 312.0h5.6v1.1h-5.6zM207.6 199.7h5.6v1.1h-5.6zM226.4 368.2h5.6v1.1h-5.6zM245.1 115.4h5.6v1.1h-5.6zM254.5 349.5h5.6v1.1h-5.6zM263.8 -6.4h5.6v1.1h-5.6zM263.8 124.7h5.6v1.1h-5.6zM263.8 368.2h5.6v1.1h-5.6zM273.2 237.1h5.6v1.1h-5.6zM273.2 405.7h5.6v1.1h-5.6zM282.5 12.4h5.6v1.1h-5.6zM282.5 87.3h5.6v1.1h-5.6zM310.6 461.9h5.6v1.1h-5.6zM329.4 199.7h5.6v1.1h-5.6zM394.9 12.4h5.6v1.1h-5.6zM404.3 274.6h5.6v1.1h-5.6zM413.7 134.1h5.6v1.1h-5.6zM413.7 209.0h5.6v1.1h-5.6zM413.7 405.7h5.6v1.1h-5.6zM413.7 433.8h5.6v1.1h-5.6zM432.4 209.0h5.6v1.1h-5.6zM432.4 358.9h5.6v1.1h-5.6zM441.8 218.4h5.6v1.1h-5.6zM451.1 227.8h5.6v1.1h-5.6zM451.1 274.6h5.6v1.1h-5.6zM460.5 115.4h5.6v1.1h-5.6z"/><path fill="#8aa9bd" d="M11.0 49.8h5.6v1.1h-5.6zM11.0 283.9h5.6v1.1h-5.6zM20.3 115.4h5.6v1.1h-5.6zM29.7 77.9h5.6v1.1h-5.6zM29.7 96.7h5.6v1.1h-5.6zM29.7 433.8h5.6v1.1h-5.6zM48.4 87.3h5.6v1.1h-5.6zM57.8 190.3h5.6v1.1h-5.6zM85.9 237.1h5.6v1.1h-5.6zM114.0 321.4h5.6v1.1h-5.6zM114.0 358.9h5.6v1.1h-5.6zM132.7 349.5h5.6v1.1h-5.6zM142.1 190.3h5.6v1.1h-5.6zM142.1 237.1h5.6v1.1h-5.6zM151.4 321.4h5.6v1.1h-5.6zM170.2 405.7h5.6v1.1h-5.6zM170.2 415.1h5.6v1.1h-5.6zM179.5 59.2h5.6v1.1h-5.6zM188.9 115.4h5.6v1.1h-5.6zM198.3 3.0h5.6v1.1h-5.6zM198.3 171.6h5.6v1.1h-5.6zM217.0 321.4h5.6v1.1h-5.6zM217.0 424.4h5.6v1.1h-5.6zM226.4 405.7h5.6v1.1h-5.6zM235.7 405.7h5.6v1.1h-5.6zM245.1 12.4h5.6v1.1h-5.6zM245.1 124.7h5.6v1.1h-5.6zM245.1 190.3h5.6v1.1h-5.6zM245.1 340.1h5.6v1.1h-5.6zM254.5 59.2h5.6v1.1h-5.6zM263.8 40.5h5.6v1.1h-5.6zM263.8 115.4h5.6v1.1h-5.6zM273.2 115.4h5.6v1.1h-5.6zM282.5 31.1h5.6v1.1h-5.6zM282.5 68.6h5.6v1.1h-5.6zM291.9 21.7h5.6v1.1h-5.6zM301.3 387.0h5.6v1.1h-5.6zM310.6 218.4h5.6v1.1h-5.6zM310.6 246.5h5.6v1.1h-5.6zM338.7 3.0h5.6v1.1h-5.6zM348.1 405.7h5.6v1.1h-5.6zM357.5 152.8h5.6v1.1h-5.6zM366.8 246.5h5.6v1.1h-5.6zM376.2 49.8h5.6v1.1h-5.6zM376.2 433.8h5.6v1.1h-5.6zM394.9 218.4h5.6v1.1h-5.6zM413.7 115.4h5.6v1.1h-5.6zM413.7 340.1h5.6v1.1h-5.6zM423.0 227.8h5.6v1.1h-5.6zM432.4 49.8h5.6v1.1h-5.6zM432.4 387.0h5.6v1.1h-5.6zM441.8 265.2h5.6v1.1h-5.6z"/><path fill="#ebf1ec" d="M2.5 -4.4h1.5v2.8h-1.5zM4.8 -4.4h1.5v2.8h-1.5zM2.5 42.5h1.5v2.8h-1.5zM4.8 42.5h1.5v2.8h-1.5zM2.5 239.1h1.5v2.8h-1.5zM4.8 239.1h1.5v2.8h-1.5zM2.5 351.5h1.5v2.8h-1.5zM4.8 351.5h1.5v2.8h-1.5zM11.9 79.9h1.5v2.8h-1.5zM14.2 79.9h1.5v2.8h-1.5zM11.9 407.7h1.5v2.8h-1.5zM14.2 407.7h1.5v2.8h-1.5zM21.2 33.1h1.5v2.8h-1.5zM23.5 33.1h1.5v2.8h-1.5zM21.2 220.4h1.5v2.8h-1.5zM23.5 220.4h1.5v2.8h-1.5zM21.2 267.2h1.5v2.8h-1.5zM23.5 267.2h1.5v2.8h-1.5zM21.2 323.4h1.5v2.8h-1.5zM23.5 323.4h1.5v2.8h-1.5zM21.2 332.8h1.5v2.8h-1.5zM23.5 332.8h1.5v2.8h-1.5zM21.2 407.7h1.5v2.8h-1.5zM23.5 407.7h1.5v2.8h-1.5zM30.6 61.2h1.5v2.8h-1.5zM32.9 61.2h1.5v2.8h-1.5zM30.6 108.0h1.5v2.8h-1.5zM32.9 108.0h1.5v2.8h-1.5zM30.6 201.7h1.5v2.8h-1.5zM32.9 201.7h1.5v2.8h-1.5zM30.6 304.7h1.5v2.8h-1.5zM32.9 304.7h1.5v2.8h-1.5zM40.0 -4.4h1.5v2.8h-1.5zM42.3 -4.4h1.5v2.8h-1.5zM40.0 145.5h1.5v2.8h-1.5zM42.3 145.5h1.5v2.8h-1.5zM40.0 332.8h1.5v2.8h-1.5zM42.3 332.8h1.5v2.8h-1.5zM49.3 14.4h1.5v2.8h-1.5zM51.6 14.4h1.5v2.8h-1.5zM58.7 23.7h1.5v2.8h-1.5zM61.0 23.7h1.5v2.8h-1.5zM58.7 42.5h1.5v2.8h-1.5zM61.0 42.5h1.5v2.8h-1.5zM58.7 98.7h1.5v2.8h-1.5zM61.0 98.7h1.5v2.8h-1.5zM58.7 417.1h1.5v2.8h-1.5zM61.0 417.1h1.5v2.8h-1.5zM68.1 33.1h1.5v2.8h-1.5zM70.4 33.1h1.5v2.8h-1.5zM68.1 42.5h1.5v2.8h-1.5zM70.4 42.5h1.5v2.8h-1.5zM68.1 89.3h1.5v2.8h-1.5zM70.4 89.3h1.5v2.8h-1.5zM68.1 257.9h1.5v2.8h-1.5zM70.4 257.9h1.5v2.8h-1.5zM68.1 304.7h1.5v2.8h-1.5zM70.4 304.7h1.5v2.8h-1.5zM77.4 33.1h1.5v2.8h-1.5zM79.7 33.1h1.5v2.8h-1.5zM77.4 42.5h1.5v2.8h-1.5zM79.7 42.5h1.5v2.8h-1.5zM77.4 248.5h1.5v2.8h-1.5zM79.7 248.5h1.5v2.8h-1.5zM77.4 473.2h1.5v2.8h-1.5zM79.7 473.2h1.5v2.8h-1.5zM86.8 304.7h1.5v2.8h-1.5zM89.1 304.7h1.5v2.8h-1.5zM96.1 229.8h1.5v2.8h-1.5zM98.4 229.8h1.5v2.8h-1.5zM96.1 239.1h1.5v2.8h-1.5zM98.4 239.1h1.5v2.8h-1.5zM96.1 370.2h1.5v2.8h-1.5zM98.4 370.2h1.5v2.8h-1.5zM105.5 173.6h1.5v2.8h-1.5zM107.8 173.6h1.5v2.8h-1.5zM105.5 370.2h1.5v2.8h-1.5zM107.8 370.2h1.5v2.8h-1.5zM105.5 473.2h1.5v2.8h-1.5zM107.8 473.2h1.5v2.8h-1.5zM124.2 126.7h1.5v2.8h-1.5zM126.5 126.7h1.5v2.8h-1.5zM124.2 220.4h1.5v2.8h-1.5zM126.5 220.4h1.5v2.8h-1.5zM124.2 304.7h1.5v2.8h-1.5zM126.5 304.7h1.5v2.8h-1.5zM133.6 61.2h1.5v2.8h-1.5zM135.9 61.2h1.5v2.8h-1.5zM133.6 136.1h1.5v2.8h-1.5zM135.9 136.1h1.5v2.8h-1.5zM133.6 173.6h1.5v2.8h-1.5zM135.9 173.6h1.5v2.8h-1.5zM133.6 220.4h1.5v2.8h-1.5zM135.9 220.4h1.5v2.8h-1.5zM133.6 304.7h1.5v2.8h-1.5zM135.9 304.7h1.5v2.8h-1.5zM133.6 426.4h1.5v2.8h-1.5zM135.9 426.4h1.5v2.8h-1.5zM143.0 -4.4h1.5v2.8h-1.5zM145.3 -4.4h1.5v2.8h-1.5zM143.0 211.0h1.5v2.8h-1.5zM145.3 211.0h1.5v2.8h-1.5zM143.0 220.4h1.5v2.8h-1.5zM145.3 220.4h1.5v2.8h-1.5zM143.0 229.8h1.5v2.8h-1.5zM145.3 229.8h1.5v2.8h-1.5zM143.0 314.0h1.5v2.8h-1.5zM145.3 314.0h1.5v2.8h-1.5zM152.3 98.7h1.5v2.8h-1.5zM154.6 98.7h1.5v2.8h-1.5zM152.3 379.6h1.5v2.8h-1.5zM154.6 379.6h1.5v2.8h-1.5zM152.3 454.5h1.5v2.8h-1.5zM154.6 454.5h1.5v2.8h-1.5zM161.7 -4.4h1.5v2.8h-1.5zM164.0 -4.4h1.5v2.8h-1.5zM161.7 126.7h1.5v2.8h-1.5zM164.0 126.7h1.5v2.8h-1.5zM161.7 145.5h1.5v2.8h-1.5zM164.0 145.5h1.5v2.8h-1.5zM161.7 164.2h1.5v2.8h-1.5zM164.0 164.2h1.5v2.8h-1.5zM161.7 201.7h1.5v2.8h-1.5zM164.0 201.7h1.5v2.8h-1.5zM171.1 304.7h1.5v2.8h-1.5zM173.4 304.7h1.5v2.8h-1.5zM180.4 248.5h1.5v2.8h-1.5zM182.7 248.5h1.5v2.8h-1.5zM180.4 360.9h1.5v2.8h-1.5zM182.7 360.9h1.5v2.8h-1.5zM180.4 473.2h1.5v2.8h-1.5zM182.7 473.2h1.5v2.8h-1.5zM189.8 108.0h1.5v2.8h-1.5zM192.1 108.0h1.5v2.8h-1.5zM189.8 220.4h1.5v2.8h-1.5zM192.1 220.4h1.5v2.8h-1.5zM189.8 342.1h1.5v2.8h-1.5zM192.1 342.1h1.5v2.8h-1.5zM189.8 360.9h1.5v2.8h-1.5zM192.1 360.9h1.5v2.8h-1.5zM199.2 61.2h1.5v2.8h-1.5zM201.5 61.2h1.5v2.8h-1.5zM199.2 276.6h1.5v2.8h-1.5zM201.5 276.6h1.5v2.8h-1.5zM199.2 426.4h1.5v2.8h-1.5zM201.5 426.4h1.5v2.8h-1.5zM208.5 136.1h1.5v2.8h-1.5zM210.8 136.1h1.5v2.8h-1.5zM208.5 154.8h1.5v2.8h-1.5zM210.8 154.8h1.5v2.8h-1.5zM208.5 285.9h1.5v2.8h-1.5zM210.8 285.9h1.5v2.8h-1.5zM208.5 370.2h1.5v2.8h-1.5zM210.8 370.2h1.5v2.8h-1.5zM208.5 463.9h1.5v2.8h-1.5zM210.8 463.9h1.5v2.8h-1.5zM217.9 182.9h1.5v2.8h-1.5zM220.2 182.9h1.5v2.8h-1.5zM217.9 239.1h1.5v2.8h-1.5zM220.2 239.1h1.5v2.8h-1.5zM217.9 248.5h1.5v2.8h-1.5zM220.2 248.5h1.5v2.8h-1.5zM217.9 332.8h1.5v2.8h-1.5zM220.2 332.8h1.5v2.8h-1.5zM227.3 14.4h1.5v2.8h-1.5zM229.6 14.4h1.5v2.8h-1.5zM227.3 154.8h1.5v2.8h-1.5zM229.6 154.8h1.5v2.8h-1.5zM227.3 332.8h1.5v2.8h-1.5zM229.6 332.8h1.5v2.8h-1.5zM227.3 342.1h1.5v2.8h-1.5zM229.6 342.1h1.5v2.8h-1.5zM236.6 42.5h1.5v2.8h-1.5zM238.9 42.5h1.5v2.8h-1.5zM236.6 70.6h1.5v2.8h-1.5zM238.9 70.6h1.5v2.8h-1.5zM236.6 463.9h1.5v2.8h-1.5zM238.9 463.9h1.5v2.8h-1.5zM246.0 370.2h1.5v2.8h-1.5zM248.3 370.2h1.5v2.8h-1.5zM246.0 445.2h1.5v2.8h-1.5zM248.3 445.2h1.5v2.8h-1.5zM255.4 126.7h1.5v2.8h-1.5zM257.7 126.7h1.5v2.8h-1.5zM255.4 211.0h1.5v2.8h-1.5zM257.7 211.0h1.5v2.8h-1.5zM255.4 360.9h1.5v2.8h-1.5zM257.7 360.9h1.5v2.8h-1.5zM264.7 51.8h1.5v2.8h-1.5zM267.0 51.8h1.5v2.8h-1.5zM274.1 -4.4h1.5v2.8h-1.5zM276.4 -4.4h1.5v2.8h-1.5zM274.1 70.6h1.5v2.8h-1.5zM276.4 70.6h1.5v2.8h-1.5zM274.1 89.3h1.5v2.8h-1.5zM276.4 89.3h1.5v2.8h-1.5zM274.1 257.9h1.5v2.8h-1.5zM276.4 257.9h1.5v2.8h-1.5zM274.1 267.2h1.5v2.8h-1.5zM276.4 267.2h1.5v2.8h-1.5zM283.4 98.7h1.5v2.8h-1.5zM285.7 98.7h1.5v2.8h-1.5zM283.4 164.2h1.5v2.8h-1.5zM285.7 164.2h1.5v2.8h-1.5zM292.8 182.9h1.5v2.8h-1.5zM295.1 182.9h1.5v2.8h-1.5zM292.8 239.1h1.5v2.8h-1.5zM295.1 239.1h1.5v2.8h-1.5zM292.8 295.3h1.5v2.8h-1.5zM295.1 295.3h1.5v2.8h-1.5zM292.8 426.4h1.5v2.8h-1.5zM295.1 426.4h1.5v2.8h-1.5zM292.8 473.2h1.5v2.8h-1.5zM295.1 473.2h1.5v2.8h-1.5zM302.2 220.4h1.5v2.8h-1.5zM304.5 220.4h1.5v2.8h-1.5zM311.5 14.4h1.5v2.8h-1.5zM313.8 14.4h1.5v2.8h-1.5zM311.5 136.1h1.5v2.8h-1.5zM313.8 136.1h1.5v2.8h-1.5zM320.9 61.2h1.5v2.8h-1.5zM323.2 61.2h1.5v2.8h-1.5zM320.9 229.8h1.5v2.8h-1.5zM323.2 229.8h1.5v2.8h-1.5zM320.9 454.5h1.5v2.8h-1.5zM323.2 454.5h1.5v2.8h-1.5zM330.3 117.4h1.5v2.8h-1.5zM332.6 117.4h1.5v2.8h-1.5zM330.3 145.5h1.5v2.8h-1.5zM332.6 145.5h1.5v2.8h-1.5zM330.3 257.9h1.5v2.8h-1.5zM332.6 257.9h1.5v2.8h-1.5zM330.3 379.6h1.5v2.8h-1.5zM332.6 379.6h1.5v2.8h-1.5zM339.6 192.3h1.5v2.8h-1.5zM341.9 192.3h1.5v2.8h-1.5zM339.6 295.3h1.5v2.8h-1.5zM341.9 295.3h1.5v2.8h-1.5zM339.6 407.7h1.5v2.8h-1.5zM341.9 407.7h1.5v2.8h-1.5zM349.0 417.1h1.5v2.8h-1.5zM351.3 417.1h1.5v2.8h-1.5zM349.0 435.8h1.5v2.8h-1.5zM351.3 435.8h1.5v2.8h-1.5zM358.4 79.9h1.5v2.8h-1.5zM360.7 79.9h1.5v2.8h-1.5zM358.4 332.8h1.5v2.8h-1.5zM360.7 332.8h1.5v2.8h-1.5zM367.7 108.0h1.5v2.8h-1.5zM370.0 108.0h1.5v2.8h-1.5zM367.7 173.6h1.5v2.8h-1.5zM370.0 173.6h1.5v2.8h-1.5zM367.7 379.6h1.5v2.8h-1.5zM370.0 379.6h1.5v2.8h-1.5zM367.7 389.0h1.5v2.8h-1.5zM370.0 389.0h1.5v2.8h-1.5zM377.1 211.0h1.5v2.8h-1.5zM379.4 211.0h1.5v2.8h-1.5zM377.1 323.4h1.5v2.8h-1.5zM379.4 323.4h1.5v2.8h-1.5zM386.5 14.4h1.5v2.8h-1.5zM388.8 14.4h1.5v2.8h-1.5zM386.5 33.1h1.5v2.8h-1.5zM388.8 33.1h1.5v2.8h-1.5zM386.5 173.6h1.5v2.8h-1.5zM388.8 173.6h1.5v2.8h-1.5zM386.5 211.0h1.5v2.8h-1.5zM388.8 211.0h1.5v2.8h-1.5zM386.5 389.0h1.5v2.8h-1.5zM388.8 389.0h1.5v2.8h-1.5zM386.5 445.2h1.5v2.8h-1.5zM388.8 445.2h1.5v2.8h-1.5zM386.5 473.2h1.5v2.8h-1.5zM388.8 473.2h1.5v2.8h-1.5zM395.8 229.8h1.5v2.8h-1.5zM398.1 229.8h1.5v2.8h-1.5zM395.8 248.5h1.5v2.8h-1.5zM398.1 248.5h1.5v2.8h-1.5zM395.8 304.7h1.5v2.8h-1.5zM398.1 304.7h1.5v2.8h-1.5zM395.8 426.4h1.5v2.8h-1.5zM398.1 426.4h1.5v2.8h-1.5zM405.2 51.8h1.5v2.8h-1.5zM407.5 51.8h1.5v2.8h-1.5zM405.2 108.0h1.5v2.8h-1.5zM407.5 108.0h1.5v2.8h-1.5zM405.2 220.4h1.5v2.8h-1.5zM407.5 220.4h1.5v2.8h-1.5zM405.2 285.9h1.5v2.8h-1.5zM407.5 285.9h1.5v2.8h-1.5zM405.2 389.0h1.5v2.8h-1.5zM407.5 389.0h1.5v2.8h-1.5zM414.6 33.1h1.5v2.8h-1.5zM416.9 33.1h1.5v2.8h-1.5zM414.6 154.8h1.5v2.8h-1.5zM416.9 154.8h1.5v2.8h-1.5zM414.6 201.7h1.5v2.8h-1.5zM416.9 201.7h1.5v2.8h-1.5zM414.6 239.1h1.5v2.8h-1.5zM416.9 239.1h1.5v2.8h-1.5zM414.6 276.6h1.5v2.8h-1.5zM416.9 276.6h1.5v2.8h-1.5zM414.6 417.1h1.5v2.8h-1.5zM416.9 417.1h1.5v2.8h-1.5zM414.6 473.2h1.5v2.8h-1.5zM416.9 473.2h1.5v2.8h-1.5zM423.9 117.4h1.5v2.8h-1.5zM426.2 117.4h1.5v2.8h-1.5zM423.9 201.7h1.5v2.8h-1.5zM426.2 201.7h1.5v2.8h-1.5zM433.3 154.8h1.5v2.8h-1.5zM435.6 154.8h1.5v2.8h-1.5zM433.3 182.9h1.5v2.8h-1.5zM435.6 182.9h1.5v2.8h-1.5zM433.3 267.2h1.5v2.8h-1.5zM435.6 267.2h1.5v2.8h-1.5zM433.3 314.0h1.5v2.8h-1.5zM435.6 314.0h1.5v2.8h-1.5zM433.3 426.4h1.5v2.8h-1.5zM435.6 426.4h1.5v2.8h-1.5zM442.7 14.4h1.5v2.8h-1.5zM445.0 14.4h1.5v2.8h-1.5zM442.7 33.1h1.5v2.8h-1.5zM445.0 33.1h1.5v2.8h-1.5zM442.7 370.2h1.5v2.8h-1.5zM445.0 370.2h1.5v2.8h-1.5zM442.7 398.3h1.5v2.8h-1.5zM445.0 398.3h1.5v2.8h-1.5zM442.7 407.7h1.5v2.8h-1.5zM445.0 407.7h1.5v2.8h-1.5zM442.7 426.4h1.5v2.8h-1.5zM445.0 426.4h1.5v2.8h-1.5zM452.0 257.9h1.5v2.8h-1.5zM454.3 257.9h1.5v2.8h-1.5zM452.0 342.1h1.5v2.8h-1.5zM454.3 342.1h1.5v2.8h-1.5zM452.0 370.2h1.5v2.8h-1.5zM454.3 370.2h1.5v2.8h-1.5zM461.4 51.8h1.5v2.8h-1.5zM463.7 51.8h1.5v2.8h-1.5z"/><path fill="#f8f8f8" d="M2.5 5.0h1.5v2.8h-1.5zM4.8 5.0h1.5v2.8h-1.5zM2.5 220.4h1.5v2.8h-1.5zM4.8 220.4h1.5v2.8h-1.5zM11.9 14.4h1.5v2.8h-1.5zM14.2 14.4h1.5v2.8h-1.5zM11.9 257.9h1.5v2.8h-1.5zM14.2 257.9h1.5v2.8h-1.5zM11.9 435.8h1.5v2.8h-1.5zM14.2 435.8h1.5v2.8h-1.5zM21.2 211.0h1.5v2.8h-1.5zM23.5 211.0h1.5v2.8h-1.5zM21.2 248.5h1.5v2.8h-1.5zM23.5 248.5h1.5v2.8h-1.5zM21.2 304.7h1.5v2.8h-1.5zM23.5 304.7h1.5v2.8h-1.5zM21.2 435.8h1.5v2.8h-1.5zM23.5 435.8h1.5v2.8h-1.5zM21.2 473.2h1.5v2.8h-1.5zM23.5 473.2h1.5v2.8h-1.5zM30.6 70.6h1.5v2.8h-1.5zM32.9 70.6h1.5v2.8h-1.5zM40.0 61.2h1.5v2.8h-1.5zM42.3 61.2h1.5v2.8h-1.5zM40.0 79.9h1.5v2.8h-1.5zM42.3 79.9h1.5v2.8h-1.5zM40.0 108.0h1.5v2.8h-1.5zM42.3 108.0h1.5v2.8h-1.5zM40.0 164.2h1.5v2.8h-1.5zM42.3 164.2h1.5v2.8h-1.5zM40.0 314.0h1.5v2.8h-1.5zM42.3 314.0h1.5v2.8h-1.5zM40.0 463.9h1.5v2.8h-1.5zM42.3 463.9h1.5v2.8h-1.5zM49.3 285.9h1.5v2.8h-1.5zM51.6 285.9h1.5v2.8h-1.5zM49.3 370.2h1.5v2.8h-1.5zM51.6 370.2h1.5v2.8h-1.5zM49.3 398.3h1.5v2.8h-1.5zM51.6 398.3h1.5v2.8h-1.5zM58.7 -4.4h1.5v2.8h-1.5zM61.0 -4.4h1.5v2.8h-1.5zM58.7 257.9h1.5v2.8h-1.5zM61.0 257.9h1.5v2.8h-1.5zM68.1 5.0h1.5v2.8h-1.5zM70.4 5.0h1.5v2.8h-1.5zM68.1 360.9h1.5v2.8h-1.5zM70.4 360.9h1.5v2.8h-1.5zM68.1 445.2h1.5v2.8h-1.5zM70.4 445.2h1.5v2.8h-1.5zM77.4 267.2h1.5v2.8h-1.5zM79.7 267.2h1.5v2.8h-1.5zM77.4 351.5h1.5v2.8h-1.5zM79.7 351.5h1.5v2.8h-1.5zM77.4 463.9h1.5v2.8h-1.5zM79.7 463.9h1.5v2.8h-1.5zM86.8 276.6h1.5v2.8h-1.5zM89.1 276.6h1.5v2.8h-1.5zM96.1 70.6h1.5v2.8h-1.5zM98.4 70.6h1.5v2.8h-1.5zM96.1 98.7h1.5v2.8h-1.5zM98.4 98.7h1.5v2.8h-1.5zM96.1 220.4h1.5v2.8h-1.5zM98.4 220.4h1.5v2.8h-1.5zM105.5 257.9h1.5v2.8h-1.5zM107.8 257.9h1.5v2.8h-1.5zM105.5 267.2h1.5v2.8h-1.5zM107.8 267.2h1.5v2.8h-1.5zM105.5 342.1h1.5v2.8h-1.5zM107.8 342.1h1.5v2.8h-1.5zM114.9 267.2h1.5v2.8h-1.5zM117.2 267.2h1.5v2.8h-1.5zM124.2 426.4h1.5v2.8h-1.5zM126.5 426.4h1.5v2.8h-1.5zM124.2 463.9h1.5v2.8h-1.5zM126.5 463.9h1.5v2.8h-1.5zM133.6 145.5h1.5v2.8h-1.5zM135.9 145.5h1.5v2.8h-1.5zM152.3 70.6h1.5v2.8h-1.5zM154.6 70.6h1.5v2.8h-1.5zM152.3 389.0h1.5v2.8h-1.5zM154.6 389.0h1.5v2.8h-1.5zM161.7 89.3h1.5v2.8h-1.5zM164.0 89.3h1.5v2.8h-1.5zM161.7 304.7h1.5v2.8h-1.5zM164.0 304.7h1.5v2.8h-1.5zM161.7 389.0h1.5v2.8h-1.5zM164.0 389.0h1.5v2.8h-1.5zM171.1 79.9h1.5v2.8h-1.5zM173.4 79.9h1.5v2.8h-1.5zM180.4 117.4h1.5v2.8h-1.5zM182.7 117.4h1.5v2.8h-1.5zM180.4 211.0h1.5v2.8h-1.5zM182.7 211.0h1.5v2.8h-1.5zM180.4 267.2h1.5v2.8h-1.5zM182.7 267.2h1.5v2.8h-1.5zM180.4 304.7h1.5v2.8h-1.5zM182.7 304.7h1.5v2.8h-1.5zM180.4 389.0h1.5v2.8h-1.5zM182.7 389.0h1.5v2.8h-1.5zM180.4 426.4h1.5v2.8h-1.5zM182.7 426.4h1.5v2.8h-1.5zM189.8 248.5h1.5v2.8h-1.5zM192.1 248.5h1.5v2.8h-1.5zM189.8 295.3h1.5v2.8h-1.5zM192.1 295.3h1.5v2.8h-1.5zM189.8 426.4h1.5v2.8h-1.5zM192.1 426.4h1.5v2.8h-1.5zM189.8 454.5h1.5v2.8h-1.5zM192.1 454.5h1.5v2.8h-1.5zM199.2 211.0h1.5v2.8h-1.5zM201.5 211.0h1.5v2.8h-1.5zM208.5 332.8h1.5v2.8h-1.5zM210.8 332.8h1.5v2.8h-1.5zM208.5 379.6h1.5v2.8h-1.5zM210.8 379.6h1.5v2.8h-1.5zM217.9 398.3h1.5v2.8h-1.5zM220.2 398.3h1.5v2.8h-1.5zM227.3 351.5h1.5v2.8h-1.5zM229.6 351.5h1.5v2.8h-1.5zM227.3 389.0h1.5v2.8h-1.5zM229.6 389.0h1.5v2.8h-1.5zM236.6 14.4h1.5v2.8h-1.5zM238.9 14.4h1.5v2.8h-1.5zM236.6 23.7h1.5v2.8h-1.5zM238.9 23.7h1.5v2.8h-1.5zM236.6 61.2h1.5v2.8h-1.5zM238.9 61.2h1.5v2.8h-1.5zM236.6 295.3h1.5v2.8h-1.5zM238.9 295.3h1.5v2.8h-1.5zM246.0 182.9h1.5v2.8h-1.5zM248.3 182.9h1.5v2.8h-1.5zM255.4 426.4h1.5v2.8h-1.5zM257.7 426.4h1.5v2.8h-1.5zM264.7 23.7h1.5v2.8h-1.5zM267.0 23.7h1.5v2.8h-1.5zM264.7 61.2h1.5v2.8h-1.5zM267.0 61.2h1.5v2.8h-1.5zM264.7 89.3h1.5v2.8h-1.5zM267.0 89.3h1.5v2.8h-1.5zM264.7 248.5h1.5v2.8h-1.5zM267.0 248.5h1.5v2.8h-1.5zM264.7 285.9h1.5v2.8h-1.5zM267.0 285.9h1.5v2.8h-1.5zM283.4 370.2h1.5v2.8h-1.5zM285.7 370.2h1.5v2.8h-1.5zM292.8 201.7h1.5v2.8h-1.5zM295.1 201.7h1.5v2.8h-1.5zM292.8 276.6h1.5v2.8h-1.5zM295.1 276.6h1.5v2.8h-1.5zM311.5 51.8h1.5v2.8h-1.5zM313.8 51.8h1.5v2.8h-1.5zM311.5 117.4h1.5v2.8h-1.5zM313.8 117.4h1.5v2.8h-1.5zM320.9 5.0h1.5v2.8h-1.5zM323.2 5.0h1.5v2.8h-1.5zM320.9 154.8h1.5v2.8h-1.5zM323.2 154.8h1.5v2.8h-1.5zM320.9 267.2h1.5v2.8h-1.5zM323.2 267.2h1.5v2.8h-1.5zM320.9 285.9h1.5v2.8h-1.5zM323.2 285.9h1.5v2.8h-1.5zM320.9 389.0h1.5v2.8h-1.5zM323.2 389.0h1.5v2.8h-1.5zM330.3 5.0h1.5v2.8h-1.5zM332.6 5.0h1.5v2.8h-1.5zM330.3 51.8h1.5v2.8h-1.5zM332.6 51.8h1.5v2.8h-1.5zM330.3 89.3h1.5v2.8h-1.5zM332.6 89.3h1.5v2.8h-1.5zM330.3 126.7h1.5v2.8h-1.5zM332.6 126.7h1.5v2.8h-1.5zM330.3 389.0h1.5v2.8h-1.5zM332.6 389.0h1.5v2.8h-1.5zM330.3 473.2h1.5v2.8h-1.5zM332.6 473.2h1.5v2.8h-1.5zM339.6 304.7h1.5v2.8h-1.5zM341.9 304.7h1.5v2.8h-1.5zM349.0 267.2h1.5v2.8h-1.5zM351.3 267.2h1.5v2.8h-1.5zM349.0 295.3h1.5v2.8h-1.5zM351.3 295.3h1.5v2.8h-1.5zM349.0 323.4h1.5v2.8h-1.5zM351.3 323.4h1.5v2.8h-1.5zM358.4 136.1h1.5v2.8h-1.5zM360.7 136.1h1.5v2.8h-1.5zM358.4 417.1h1.5v2.8h-1.5zM360.7 417.1h1.5v2.8h-1.5zM358.4 435.8h1.5v2.8h-1.5zM360.7 435.8h1.5v2.8h-1.5zM367.7 257.9h1.5v2.8h-1.5zM370.0 257.9h1.5v2.8h-1.5zM367.7 370.2h1.5v2.8h-1.5zM370.0 370.2h1.5v2.8h-1.5zM377.1 276.6h1.5v2.8h-1.5zM379.4 276.6h1.5v2.8h-1.5zM386.5 201.7h1.5v2.8h-1.5zM388.8 201.7h1.5v2.8h-1.5zM386.5 314.0h1.5v2.8h-1.5zM388.8 314.0h1.5v2.8h-1.5zM395.8 117.4h1.5v2.8h-1.5zM398.1 117.4h1.5v2.8h-1.5zM395.8 154.8h1.5v2.8h-1.5zM398.1 154.8h1.5v2.8h-1.5zM395.8 257.9h1.5v2.8h-1.5zM398.1 257.9h1.5v2.8h-1.5zM405.2 98.7h1.5v2.8h-1.5zM407.5 98.7h1.5v2.8h-1.5zM405.2 295.3h1.5v2.8h-1.5zM407.5 295.3h1.5v2.8h-1.5zM405.2 379.6h1.5v2.8h-1.5zM407.5 379.6h1.5v2.8h-1.5zM405.2 473.2h1.5v2.8h-1.5zM407.5 473.2h1.5v2.8h-1.5zM414.6 370.2h1.5v2.8h-1.5zM416.9 370.2h1.5v2.8h-1.5zM423.9 70.6h1.5v2.8h-1.5zM426.2 70.6h1.5v2.8h-1.5zM433.3 192.3h1.5v2.8h-1.5zM435.6 192.3h1.5v2.8h-1.5zM433.3 295.3h1.5v2.8h-1.5zM435.6 295.3h1.5v2.8h-1.5zM433.3 351.5h1.5v2.8h-1.5zM435.6 351.5h1.5v2.8h-1.5zM442.7 42.5h1.5v2.8h-1.5zM445.0 42.5h1.5v2.8h-1.5zM442.7 248.5h1.5v2.8h-1.5zM445.0 248.5h1.5v2.8h-1.5zM442.7 332.8h1.5v2.8h-1.5zM445.0 332.8h1.5v2.8h-1.5zM452.0 51.8h1.5v2.8h-1.5zM454.3 51.8h1.5v2.8h-1.5zM452.0 98.7h1.5v2.8h-1.5zM454.3 98.7h1.5v2.8h-1.5zM452.0 304.7h1.5v2.8h-1.5zM454.3 304.7h1.5v2.8h-1.5zM461.4 473.2h1.5v2.8h-1.5zM463.7 473.2h1.5v2.8h-1.5z"/><path fill="#f9f2ed" d="M2.5 14.4h1.5v2.8h-1.5zM4.8 14.4h1.5v2.8h-1.5zM2.5 276.6h1.5v2.8h-1.5zM4.8 276.6h1.5v2.8h-1.5zM11.9 182.9h1.5v2.8h-1.5zM14.2 182.9h1.5v2.8h-1.5zM21.2 173.6h1.5v2.8h-1.5zM23.5 173.6h1.5v2.8h-1.5zM40.0 192.3h1.5v2.8h-1.5zM42.3 192.3h1.5v2.8h-1.5zM58.7 351.5h1.5v2.8h-1.5zM61.0 351.5h1.5v2.8h-1.5zM68.1 285.9h1.5v2.8h-1.5zM70.4 285.9h1.5v2.8h-1.5zM77.4 285.9h1.5v2.8h-1.5zM79.7 285.9h1.5v2.8h-1.5zM86.8 257.9h1.5v2.8h-1.5zM89.1 257.9h1.5v2.8h-1.5zM105.5 33.1h1.5v2.8h-1.5zM107.8 33.1h1.5v2.8h-1.5zM105.5 117.4h1.5v2.8h-1.5zM107.8 117.4h1.5v2.8h-1.5zM114.9 314.0h1.5v2.8h-1.5zM117.2 314.0h1.5v2.8h-1.5zM114.9 389.0h1.5v2.8h-1.5zM117.2 389.0h1.5v2.8h-1.5zM114.9 426.4h1.5v2.8h-1.5zM117.2 426.4h1.5v2.8h-1.5zM124.2 61.2h1.5v2.8h-1.5zM126.5 61.2h1.5v2.8h-1.5zM143.0 42.5h1.5v2.8h-1.5zM145.3 42.5h1.5v2.8h-1.5zM152.3 426.4h1.5v2.8h-1.5zM154.6 426.4h1.5v2.8h-1.5zM161.7 70.6h1.5v2.8h-1.5zM164.0 70.6h1.5v2.8h-1.5zM161.7 332.8h1.5v2.8h-1.5zM164.0 332.8h1.5v2.8h-1.5zM180.4 33.1h1.5v2.8h-1.5zM182.7 33.1h1.5v2.8h-1.5zM180.4 463.9h1.5v2.8h-1.5zM182.7 463.9h1.5v2.8h-1.5zM189.8 182.9h1.5v2.8h-1.5zM192.1 182.9h1.5v2.8h-1.5zM189.8 473.2h1.5v2.8h-1.5zM192.1 473.2h1.5v2.8h-1.5zM199.2 42.5h1.5v2.8h-1.5zM201.5 42.5h1.5v2.8h-1.5zM199.2 70.6h1.5v2.8h-1.5zM201.5 70.6h1.5v2.8h-1.5zM199.2 248.5h1.5v2.8h-1.5zM201.5 248.5h1.5v2.8h-1.5zM208.5 42.5h1.5v2.8h-1.5zM210.8 42.5h1.5v2.8h-1.5zM208.5 182.9h1.5v2.8h-1.5zM210.8 182.9h1.5v2.8h-1.5zM208.5 417.1h1.5v2.8h-1.5zM210.8 417.1h1.5v2.8h-1.5zM217.9 108.0h1.5v2.8h-1.5zM220.2 108.0h1.5v2.8h-1.5zM217.9 126.7h1.5v2.8h-1.5zM220.2 126.7h1.5v2.8h-1.5zM227.3 98.7h1.5v2.8h-1.5zM229.6 98.7h1.5v2.8h-1.5zM227.3 323.4h1.5v2.8h-1.5zM229.6 323.4h1.5v2.8h-1.5zM236.6 192.3h1.5v2.8h-1.5zM238.9 192.3h1.5v2.8h-1.5zM236.6 276.6h1.5v2.8h-1.5zM238.9 276.6h1.5v2.8h-1.5zM236.6 445.2h1.5v2.8h-1.5zM238.9 445.2h1.5v2.8h-1.5zM246.0 267.2h1.5v2.8h-1.5zM248.3 267.2h1.5v2.8h-1.5zM255.4 79.9h1.5v2.8h-1.5zM257.7 79.9h1.5v2.8h-1.5zM255.4 136.1h1.5v2.8h-1.5zM257.7 136.1h1.5v2.8h-1.5zM255.4 342.1h1.5v2.8h-1.5zM257.7 342.1h1.5v2.8h-1.5zM255.4 445.2h1.5v2.8h-1.5zM257.7 445.2h1.5v2.8h-1.5zM264.7 426.4h1.5v2.8h-1.5zM267.0 426.4h1.5v2.8h-1.5zM264.7 435.8h1.5v2.8h-1.5zM267.0 435.8h1.5v2.8h-1.5zM274.1 295.3h1.5v2.8h-1.5zM276.4 295.3h1.5v2.8h-1.5zM283.4 182.9h1.5v2.8h-1.5zM285.7 182.9h1.5v2.8h-1.5zM283.4 351.5h1.5v2.8h-1.5zM285.7 351.5h1.5v2.8h-1.5zM292.8 154.8h1.5v2.8h-1.5zM295.1 154.8h1.5v2.8h-1.5zM292.8 304.7h1.5v2.8h-1.5zM295.1 304.7h1.5v2.8h-1.5zM311.5 98.7h1.5v2.8h-1.5zM313.8 98.7h1.5v2.8h-1.5zM311.5 445.2h1.5v2.8h-1.5zM313.8 445.2h1.5v2.8h-1.5zM320.9 126.7h1.5v2.8h-1.5zM323.2 126.7h1.5v2.8h-1.5zM358.4 70.6h1.5v2.8h-1.5zM360.7 70.6h1.5v2.8h-1.5zM358.4 173.6h1.5v2.8h-1.5zM360.7 173.6h1.5v2.8h-1.5zM358.4 220.4h1.5v2.8h-1.5zM360.7 220.4h1.5v2.8h-1.5zM358.4 342.1h1.5v2.8h-1.5zM360.7 342.1h1.5v2.8h-1.5zM367.7 42.5h1.5v2.8h-1.5zM370.0 42.5h1.5v2.8h-1.5zM386.5 407.7h1.5v2.8h-1.5zM388.8 407.7h1.5v2.8h-1.5zM395.8 61.2h1.5v2.8h-1.5zM398.1 61.2h1.5v2.8h-1.5zM423.9 126.7h1.5v2.8h-1.5zM426.2 126.7h1.5v2.8h-1.5zM433.3 117.4h1.5v2.8h-1.5zM435.6 117.4h1.5v2.8h-1.5zM442.7 192.3h1.5v2.8h-1.5zM445.0 192.3h1.5v2.8h-1.5zM442.7 304.7h1.5v2.8h-1.5zM445.0 304.7h1.5v2.8h-1.5zM461.4 33.1h1.5v2.8h-1.5zM463.7 33.1h1.5v2.8h-1.5z"/><path fill="#f1f1f1" d="M2.5 23.7h1.5v2.8h-1.5zM4.8 23.7h1.5v2.8h-1.5zM2.5 89.3h1.5v2.8h-1.5zM4.8 89.3h1.5v2.8h-1.5zM2.5 98.7h1.5v2.8h-1.5zM4.8 98.7h1.5v2.8h-1.5zM2.5 126.7h1.5v2.8h-1.5zM4.8 126.7h1.5v2.8h-1.5zM2.5 229.8h1.5v2.8h-1.5zM4.8 229.8h1.5v2.8h-1.5zM2.5 473.2h1.5v2.8h-1.5zM4.8 473.2h1.5v2.8h-1.5zM11.9 267.2h1.5v2.8h-1.5zM14.2 267.2h1.5v2.8h-1.5zM11.9 295.3h1.5v2.8h-1.5zM14.2 295.3h1.5v2.8h-1.5zM11.9 332.8h1.5v2.8h-1.5zM14.2 332.8h1.5v2.8h-1.5zM21.2 164.2h1.5v2.8h-1.5zM23.5 164.2h1.5v2.8h-1.5zM21.2 192.3h1.5v2.8h-1.5zM23.5 192.3h1.5v2.8h-1.5zM21.2 257.9h1.5v2.8h-1.5zM23.5 257.9h1.5v2.8h-1.5zM21.2 342.1h1.5v2.8h-1.5zM23.5 342.1h1.5v2.8h-1.5zM21.2 389.0h1.5v2.8h-1.5zM23.5 389.0h1.5v2.8h-1.5zM21.2 398.3h1.5v2.8h-1.5zM23.5 398.3h1.5v2.8h-1.5zM30.6 407.7h1.5v2.8h-1.5zM32.9 407.7h1.5v2.8h-1.5zM40.0 70.6h1.5v2.8h-1.5zM42.3 70.6h1.5v2.8h-1.5zM49.3 51.8h1.5v2.8h-1.5zM51.6 51.8h1.5v2.8h-1.5zM49.3 295.3h1.5v2.8h-1.5zM51.6 295.3h1.5v2.8h-1.5zM49.3 314.0h1.5v2.8h-1.5zM51.6 314.0h1.5v2.8h-1.5zM49.3 332.8h1.5v2.8h-1.5zM51.6 332.8h1.5v2.8h-1.5zM58.7 164.2h1.5v2.8h-1.5zM61.0 164.2h1.5v2.8h-1.5zM58.7 211.0h1.5v2.8h-1.5zM61.0 211.0h1.5v2.8h-1.5zM58.7 295.3h1.5v2.8h-1.5zM61.0 295.3h1.5v2.8h-1.5zM58.7 332.8h1.5v2.8h-1.5zM61.0 332.8h1.5v2.8h-1.5zM58.7 370.2h1.5v2.8h-1.5zM61.0 370.2h1.5v2.8h-1.5zM58.7 389.0h1.5v2.8h-1.5zM61.0 389.0h1.5v2.8h-1.5zM58.7 454.5h1.5v2.8h-1.5zM61.0 454.5h1.5v2.8h-1.5zM68.1 -4.4h1.5v2.8h-1.5zM70.4 -4.4h1.5v2.8h-1.5zM68.1 173.6h1.5v2.8h-1.5zM70.4 173.6h1.5v2.8h-1.5zM68.1 323.4h1.5v2.8h-1.5zM70.4 323.4h1.5v2.8h-1.5zM68.1 332.8h1.5v2.8h-1.5zM70.4 332.8h1.5v2.8h-1.5zM68.1 370.2h1.5v2.8h-1.5zM70.4 370.2h1.5v2.8h-1.5zM77.4 126.7h1.5v2.8h-1.5zM79.7 126.7h1.5v2.8h-1.5zM86.8 -4.4h1.5v2.8h-1.5zM89.1 -4.4h1.5v2.8h-1.5zM86.8 117.4h1.5v2.8h-1.5zM89.1 117.4h1.5v2.8h-1.5zM86.8 145.5h1.5v2.8h-1.5zM89.1 145.5h1.5v2.8h-1.5zM86.8 267.2h1.5v2.8h-1.5zM89.1 267.2h1.5v2.8h-1.5zM86.8 417.1h1.5v2.8h-1.5zM89.1 417.1h1.5v2.8h-1.5zM96.1 285.9h1.5v2.8h-1.5zM98.4 285.9h1.5v2.8h-1.5zM96.1 407.7h1.5v2.8h-1.5zM98.4 407.7h1.5v2.8h-1.5zM105.5 154.8h1.5v2.8h-1.5zM107.8 154.8h1.5v2.8h-1.5zM105.5 360.9h1.5v2.8h-1.5zM107.8 360.9h1.5v2.8h-1.5zM105.5 379.6h1.5v2.8h-1.5zM107.8 379.6h1.5v2.8h-1.5zM114.9 23.7h1.5v2.8h-1.5zM117.2 23.7h1.5v2.8h-1.5zM114.9 257.9h1.5v2.8h-1.5zM117.2 257.9h1.5v2.8h-1.5zM114.9 407.7h1.5v2.8h-1.5zM117.2 407.7h1.5v2.8h-1.5zM114.9 445.2h1.5v2.8h-1.5zM117.2 445.2h1.5v2.8h-1.5zM114.9 454.5h1.5v2.8h-1.5zM117.2 454.5h1.5v2.8h-1.5zM133.6 192.3h1.5v2.8h-1.5zM135.9 192.3h1.5v2.8h-1.5zM143.0 248.5h1.5v2.8h-1.5zM145.3 248.5h1.5v2.8h-1.5zM143.0 360.9h1.5v2.8h-1.5zM145.3 360.9h1.5v2.8h-1.5zM143.0 370.2h1.5v2.8h-1.5zM145.3 370.2h1.5v2.8h-1.5zM143.0 473.2h1.5v2.8h-1.5zM145.3 473.2h1.5v2.8h-1.5zM152.3 173.6h1.5v2.8h-1.5zM154.6 173.6h1.5v2.8h-1.5zM152.3 239.1h1.5v2.8h-1.5zM154.6 239.1h1.5v2.8h-1.5zM152.3 342.1h1.5v2.8h-1.5zM154.6 342.1h1.5v2.8h-1.5zM161.7 42.5h1.5v2.8h-1.5zM164.0 42.5h1.5v2.8h-1.5zM161.7 79.9h1.5v2.8h-1.5zM164.0 79.9h1.5v2.8h-1.5zM161.7 351.5h1.5v2.8h-1.5zM164.0 351.5h1.5v2.8h-1.5zM161.7 426.4h1.5v2.8h-1.5zM164.0 426.4h1.5v2.8h-1.5zM161.7 473.2h1.5v2.8h-1.5zM164.0 473.2h1.5v2.8h-1.5zM171.1 182.9h1.5v2.8h-1.5zM173.4 182.9h1.5v2.8h-1.5zM171.1 267.2h1.5v2.8h-1.5zM173.4 267.2h1.5v2.8h-1.5zM171.1 454.5h1.5v2.8h-1.5zM173.4 454.5h1.5v2.8h-1.5zM171.1 463.9h1.5v2.8h-1.5zM173.4 463.9h1.5v2.8h-1.5zM180.4 -4.4h1.5v2.8h-1.5zM182.7 -4.4h1.5v2.8h-1.5zM180.4 42.5h1.5v2.8h-1.5zM182.7 42.5h1.5v2.8h-1.5zM180.4 239.1h1.5v2.8h-1.5zM182.7 239.1h1.5v2.8h-1.5zM180.4 445.2h1.5v2.8h-1.5zM182.7 445.2h1.5v2.8h-1.5zM189.8 33.1h1.5v2.8h-1.5zM192.1 33.1h1.5v2.8h-1.5zM189.8 351.5h1.5v2.8h-1.5zM192.1 351.5h1.5v2.8h-1.5zM189.8 463.9h1.5v2.8h-1.5zM192.1 463.9h1.5v2.8h-1.5zM199.2 398.3h1.5v2.8h-1.5zM201.5 398.3h1.5v2.8h-1.5zM208.5 314.0h1.5v2.8h-1.5zM210.8 314.0h1.5v2.8h-1.5zM208.5 351.5h1.5v2.8h-1.5zM210.8 351.5h1.5v2.8h-1.5zM208.5 445.2h1.5v2.8h-1.5zM210.8 445.2h1.5v2.8h-1.5zM217.9 14.4h1.5v2.8h-1.5zM220.2 14.4h1.5v2.8h-1.5zM217.9 51.8h1.5v2.8h-1.5zM220.2 51.8h1.5v2.8h-1.5zM217.9 70.6h1.5v2.8h-1.5zM220.2 70.6h1.5v2.8h-1.5zM217.9 145.5h1.5v2.8h-1.5zM220.2 145.5h1.5v2.8h-1.5zM217.9 154.8h1.5v2.8h-1.5zM220.2 154.8h1.5v2.8h-1.5zM217.9 379.6h1.5v2.8h-1.5zM220.2 379.6h1.5v2.8h-1.5zM227.3 89.3h1.5v2.8h-1.5zM229.6 89.3h1.5v2.8h-1.5zM227.3 108.0h1.5v2.8h-1.5zM229.6 108.0h1.5v2.8h-1.5zM227.3 192.3h1.5v2.8h-1.5zM229.6 192.3h1.5v2.8h-1.5zM227.3 426.4h1.5v2.8h-1.5zM229.6 426.4h1.5v2.8h-1.5zM236.6 108.0h1.5v2.8h-1.5zM238.9 108.0h1.5v2.8h-1.5zM236.6 126.7h1.5v2.8h-1.5zM238.9 126.7h1.5v2.8h-1.5zM236.6 201.7h1.5v2.8h-1.5zM238.9 201.7h1.5v2.8h-1.5zM246.0 -4.4h1.5v2.8h-1.5zM248.3 -4.4h1.5v2.8h-1.5zM246.0 220.4h1.5v2.8h-1.5zM248.3 220.4h1.5v2.8h-1.5zM246.0 351.5h1.5v2.8h-1.5zM248.3 351.5h1.5v2.8h-1.5zM255.4 51.8h1.5v2.8h-1.5zM257.7 51.8h1.5v2.8h-1.5zM255.4 192.3h1.5v2.8h-1.5zM257.7 192.3h1.5v2.8h-1.5zM264.7 14.4h1.5v2.8h-1.5zM267.0 14.4h1.5v2.8h-1.5zM264.7 417.1h1.5v2.8h-1.5zM267.0 417.1h1.5v2.8h-1.5zM283.4 42.5h1.5v2.8h-1.5zM285.7 42.5h1.5v2.8h-1.5zM283.4 229.8h1.5v2.8h-1.5zM285.7 229.8h1.5v2.8h-1.5zM283.4 342.1h1.5v2.8h-1.5zM285.7 342.1h1.5v2.8h-1.5zM283.4 407.7h1.5v2.8h-1.5zM285.7 407.7h1.5v2.8h-1.5zM283.4 426.4h1.5v2.8h-1.5zM285.7 426.4h1.5v2.8h-1.5zM283.4 445.2h1.5v2.8h-1.5zM285.7 445.2h1.5v2.8h-1.5zM292.8 61.2h1.5v2.8h-1.5zM295.1 61.2h1.5v2.8h-1.5zM292.8 173.6h1.5v2.8h-1.5zM295.1 173.6h1.5v2.8h-1.5zM302.2 229.8h1.5v2.8h-1.5zM304.5 229.8h1.5v2.8h-1.5zM302.2 370.2h1.5v2.8h-1.5zM304.5 370.2h1.5v2.8h-1.5zM311.5 89.3h1.5v2.8h-1.5zM313.8 89.3h1.5v2.8h-1.5zM311.5 314.0h1.5v2.8h-1.5zM313.8 314.0h1.5v2.8h-1.5zM311.5 407.7h1.5v2.8h-1.5zM313.8 407.7h1.5v2.8h-1.5zM320.9 220.4h1.5v2.8h-1.5zM323.2 220.4h1.5v2.8h-1.5zM320.9 248.5h1.5v2.8h-1.5zM323.2 248.5h1.5v2.8h-1.5zM320.9 407.7h1.5v2.8h-1.5zM323.2 407.7h1.5v2.8h-1.5zM330.3 164.2h1.5v2.8h-1.5zM332.6 164.2h1.5v2.8h-1.5zM330.3 295.3h1.5v2.8h-1.5zM332.6 295.3h1.5v2.8h-1.5zM339.6 33.1h1.5v2.8h-1.5zM341.9 33.1h1.5v2.8h-1.5zM339.6 42.5h1.5v2.8h-1.5zM341.9 42.5h1.5v2.8h-1.5zM339.6 136.1h1.5v2.8h-1.5zM341.9 136.1h1.5v2.8h-1.5zM339.6 370.2h1.5v2.8h-1.5zM341.9 370.2h1.5v2.8h-1.5zM349.0 61.2h1.5v2.8h-1.5zM351.3 61.2h1.5v2.8h-1.5zM349.0 98.7h1.5v2.8h-1.5zM351.3 98.7h1.5v2.8h-1.5zM349.0 173.6h1.5v2.8h-1.5zM351.3 173.6h1.5v2.8h-1.5zM349.0 211.0h1.5v2.8h-1.5zM351.3 211.0h1.5v2.8h-1.5zM349.0 248.5h1.5v2.8h-1.5zM351.3 248.5h1.5v2.8h-1.5zM358.4 98.7h1.5v2.8h-1.5zM360.7 98.7h1.5v2.8h-1.5zM358.4 351.5h1.5v2.8h-1.5zM360.7 351.5h1.5v2.8h-1.5zM358.4 426.4h1.5v2.8h-1.5zM360.7 426.4h1.5v2.8h-1.5zM367.7 -4.4h1.5v2.8h-1.5zM370.0 -4.4h1.5v2.8h-1.5zM367.7 267.2h1.5v2.8h-1.5zM370.0 267.2h1.5v2.8h-1.5zM367.7 332.8h1.5v2.8h-1.5zM370.0 332.8h1.5v2.8h-1.5zM377.1 23.7h1.5v2.8h-1.5zM379.4 23.7h1.5v2.8h-1.5zM377.1 304.7h1.5v2.8h-1.5zM379.4 304.7h1.5v2.8h-1.5zM386.5 70.6h1.5v2.8h-1.5zM388.8 70.6h1.5v2.8h-1.5zM386.5 248.5h1.5v2.8h-1.5zM388.8 248.5h1.5v2.8h-1.5zM395.8 108.0h1.5v2.8h-1.5zM398.1 108.0h1.5v2.8h-1.5zM395.8 136.1h1.5v2.8h-1.5zM398.1 136.1h1.5v2.8h-1.5zM395.8 145.5h1.5v2.8h-1.5zM398.1 145.5h1.5v2.8h-1.5zM395.8 276.6h1.5v2.8h-1.5zM398.1 276.6h1.5v2.8h-1.5zM405.2 154.8h1.5v2.8h-1.5zM407.5 154.8h1.5v2.8h-1.5zM405.2 192.3h1.5v2.8h-1.5zM407.5 192.3h1.5v2.8h-1.5zM405.2 201.7h1.5v2.8h-1.5zM407.5 201.7h1.5v2.8h-1.5zM405.2 314.0h1.5v2.8h-1.5zM407.5 314.0h1.5v2.8h-1.5zM405.2 342.1h1.5v2.8h-1.5zM407.5 342.1h1.5v2.8h-1.5zM414.6 79.9h1.5v2.8h-1.5zM416.9 79.9h1.5v2.8h-1.5zM414.6 173.6h1.5v2.8h-1.5zM416.9 173.6h1.5v2.8h-1.5zM414.6 220.4h1.5v2.8h-1.5zM416.9 220.4h1.5v2.8h-1.5zM414.6 267.2h1.5v2.8h-1.5zM416.9 267.2h1.5v2.8h-1.5zM414.6 295.3h1.5v2.8h-1.5zM416.9 295.3h1.5v2.8h-1.5zM423.9 14.4h1.5v2.8h-1.5zM426.2 14.4h1.5v2.8h-1.5zM423.9 295.3h1.5v2.8h-1.5zM426.2 295.3h1.5v2.8h-1.5zM423.9 342.1h1.5v2.8h-1.5zM426.2 342.1h1.5v2.8h-1.5zM423.9 398.3h1.5v2.8h-1.5zM426.2 398.3h1.5v2.8h-1.5zM433.3 42.5h1.5v2.8h-1.5zM435.6 42.5h1.5v2.8h-1.5zM433.3 407.7h1.5v2.8h-1.5zM435.6 407.7h1.5v2.8h-1.5zM442.7 5.0h1.5v2.8h-1.5zM445.0 5.0h1.5v2.8h-1.5zM442.7 51.8h1.5v2.8h-1.5zM445.0 51.8h1.5v2.8h-1.5zM442.7 89.3h1.5v2.8h-1.5zM445.0 89.3h1.5v2.8h-1.5zM442.7 126.7h1.5v2.8h-1.5zM445.0 126.7h1.5v2.8h-1.5zM452.0 79.9h1.5v2.8h-1.5zM454.3 79.9h1.5v2.8h-1.5zM452.0 126.7h1.5v2.8h-1.5zM454.3 126.7h1.5v2.8h-1.5zM452.0 360.9h1.5v2.8h-1.5zM454.3 360.9h1.5v2.8h-1.5zM461.4 108.0h1.5v2.8h-1.5zM463.7 108.0h1.5v2.8h-1.5zM461.4 182.9h1.5v2.8h-1.5zM463.7 182.9h1.5v2.8h-1.5zM461.4 220.4h1.5v2.8h-1.5zM463.7 220.4h1.5v2.8h-1.5zM461.4 248.5h1.5v2.8h-1.5zM463.7 248.5h1.5v2.8h-1.5zM461.4 314.0h1.5v2.8h-1.5zM463.7 314.0h1.5v2.8h-1.5zM461.4 342.1h1.5v2.8h-1.5zM463.7 342.1h1.5v2.8h-1.5zM461.4 360.9h1.5v2.8h-1.5zM463.7 360.9h1.5v2.8h-1.5zM461.4 417.1h1.5v2.8h-1.5zM463.7 417.1h1.5v2.8h-1.5zM461.4 445.2h1.5v2.8h-1.5zM463.7 445.2h1.5v2.8h-1.5z"/><path fill="#f2efed" d="M2.5 33.1h1.5v2.8h-1.5zM4.8 33.1h1.5v2.8h-1.5zM2.5 61.2h1.5v2.8h-1.5zM4.8 61.2h1.5v2.8h-1.5zM2.5 426.4h1.5v2.8h-1.5zM4.8 426.4h1.5v2.8h-1.5zM21.2 70.6h1.5v2.8h-1.5zM23.5 70.6h1.5v2.8h-1.5zM21.2 463.9h1.5v2.8h-1.5zM23.5 463.9h1.5v2.8h-1.5zM30.6 -4.4h1.5v2.8h-1.5zM32.9 -4.4h1.5v2.8h-1.5zM30.6 14.4h1.5v2.8h-1.5zM32.9 14.4h1.5v2.8h-1.5zM30.6 89.3h1.5v2.8h-1.5zM32.9 89.3h1.5v2.8h-1.5zM30.6 192.3h1.5v2.8h-1.5zM32.9 192.3h1.5v2.8h-1.5zM40.0 201.7h1.5v2.8h-1.5zM42.3 201.7h1.5v2.8h-1.5zM40.0 389.0h1.5v2.8h-1.5zM42.3 389.0h1.5v2.8h-1.5zM40.0 398.3h1.5v2.8h-1.5zM42.3 398.3h1.5v2.8h-1.5zM40.0 407.7h1.5v2.8h-1.5zM42.3 407.7h1.5v2.8h-1.5zM49.3 23.7h1.5v2.8h-1.5zM51.6 23.7h1.5v2.8h-1.5zM49.3 98.7h1.5v2.8h-1.5zM51.6 98.7h1.5v2.8h-1.5zM49.3 154.8h1.5v2.8h-1.5zM51.6 154.8h1.5v2.8h-1.5zM49.3 164.2h1.5v2.8h-1.5zM51.6 164.2h1.5v2.8h-1.5zM49.3 192.3h1.5v2.8h-1.5zM51.6 192.3h1.5v2.8h-1.5zM58.7 14.4h1.5v2.8h-1.5zM61.0 14.4h1.5v2.8h-1.5zM58.7 117.4h1.5v2.8h-1.5zM61.0 117.4h1.5v2.8h-1.5zM58.7 463.9h1.5v2.8h-1.5zM61.0 463.9h1.5v2.8h-1.5zM68.1 70.6h1.5v2.8h-1.5zM70.4 70.6h1.5v2.8h-1.5zM68.1 229.8h1.5v2.8h-1.5zM70.4 229.8h1.5v2.8h-1.5zM77.4 79.9h1.5v2.8h-1.5zM79.7 79.9h1.5v2.8h-1.5zM77.4 98.7h1.5v2.8h-1.5zM79.7 98.7h1.5v2.8h-1.5zM77.4 192.3h1.5v2.8h-1.5zM79.7 192.3h1.5v2.8h-1.5zM77.4 360.9h1.5v2.8h-1.5zM79.7 360.9h1.5v2.8h-1.5zM77.4 370.2h1.5v2.8h-1.5zM79.7 370.2h1.5v2.8h-1.5zM86.8 89.3h1.5v2.8h-1.5zM89.1 89.3h1.5v2.8h-1.5zM86.8 98.7h1.5v2.8h-1.5zM89.1 98.7h1.5v2.8h-1.5zM86.8 389.0h1.5v2.8h-1.5zM89.1 389.0h1.5v2.8h-1.5zM96.1 79.9h1.5v2.8h-1.5zM98.4 79.9h1.5v2.8h-1.5zM96.1 117.4h1.5v2.8h-1.5zM98.4 117.4h1.5v2.8h-1.5zM96.1 463.9h1.5v2.8h-1.5zM98.4 463.9h1.5v2.8h-1.5zM105.5 454.5h1.5v2.8h-1.5zM107.8 454.5h1.5v2.8h-1.5zM114.9 33.1h1.5v2.8h-1.5zM117.2 33.1h1.5v2.8h-1.5zM114.9 276.6h1.5v2.8h-1.5zM117.2 276.6h1.5v2.8h-1.5zM114.9 463.9h1.5v2.8h-1.5zM117.2 463.9h1.5v2.8h-1.5zM124.2 276.6h1.5v2.8h-1.5zM126.5 276.6h1.5v2.8h-1.5zM152.3 126.7h1.5v2.8h-1.5zM154.6 126.7h1.5v2.8h-1.5zM161.7 379.6h1.5v2.8h-1.5zM164.0 379.6h1.5v2.8h-1.5zM161.7 407.7h1.5v2.8h-1.5zM164.0 407.7h1.5v2.8h-1.5zM171.1 164.2h1.5v2.8h-1.5zM173.4 164.2h1.5v2.8h-1.5zM180.4 14.4h1.5v2.8h-1.5zM182.7 14.4h1.5v2.8h-1.5zM180.4 70.6h1.5v2.8h-1.5zM182.7 70.6h1.5v2.8h-1.5zM180.4 89.3h1.5v2.8h-1.5zM182.7 89.3h1.5v2.8h-1.5zM180.4 314.0h1.5v2.8h-1.5zM182.7 314.0h1.5v2.8h-1.5zM180.4 351.5h1.5v2.8h-1.5zM182.7 351.5h1.5v2.8h-1.5zM180.4 454.5h1.5v2.8h-1.5zM182.7 454.5h1.5v2.8h-1.5zM189.8 276.6h1.5v2.8h-1.5zM192.1 276.6h1.5v2.8h-1.5zM199.2 136.1h1.5v2.8h-1.5zM201.5 136.1h1.5v2.8h-1.5zM199.2 239.1h1.5v2.8h-1.5zM201.5 239.1h1.5v2.8h-1.5zM208.5 23.7h1.5v2.8h-1.5zM210.8 23.7h1.5v2.8h-1.5zM217.9 267.2h1.5v2.8h-1.5zM220.2 267.2h1.5v2.8h-1.5zM217.9 351.5h1.5v2.8h-1.5zM220.2 351.5h1.5v2.8h-1.5zM227.3 248.5h1.5v2.8h-1.5zM229.6 248.5h1.5v2.8h-1.5zM227.3 295.3h1.5v2.8h-1.5zM229.6 295.3h1.5v2.8h-1.5zM236.6 51.8h1.5v2.8h-1.5zM238.9 51.8h1.5v2.8h-1.5zM236.6 267.2h1.5v2.8h-1.5zM238.9 267.2h1.5v2.8h-1.5zM246.0 173.6h1.5v2.8h-1.5zM248.3 173.6h1.5v2.8h-1.5zM246.0 211.0h1.5v2.8h-1.5zM248.3 211.0h1.5v2.8h-1.5zM246.0 239.1h1.5v2.8h-1.5zM248.3 239.1h1.5v2.8h-1.5zM246.0 257.9h1.5v2.8h-1.5zM248.3 257.9h1.5v2.8h-1.5zM246.0 285.9h1.5v2.8h-1.5zM248.3 285.9h1.5v2.8h-1.5zM255.4 5.0h1.5v2.8h-1.5zM257.7 5.0h1.5v2.8h-1.5zM264.7 182.9h1.5v2.8h-1.5zM267.0 182.9h1.5v2.8h-1.5zM264.7 314.0h1.5v2.8h-1.5zM267.0 314.0h1.5v2.8h-1.5zM274.1 14.4h1.5v2.8h-1.5zM276.4 14.4h1.5v2.8h-1.5zM274.1 108.0h1.5v2.8h-1.5zM276.4 108.0h1.5v2.8h-1.5zM274.1 201.7h1.5v2.8h-1.5zM276.4 201.7h1.5v2.8h-1.5zM274.1 220.4h1.5v2.8h-1.5zM276.4 220.4h1.5v2.8h-1.5zM302.2 435.8h1.5v2.8h-1.5zM304.5 435.8h1.5v2.8h-1.5zM311.5 42.5h1.5v2.8h-1.5zM313.8 42.5h1.5v2.8h-1.5zM311.5 145.5h1.5v2.8h-1.5zM313.8 145.5h1.5v2.8h-1.5zM330.3 417.1h1.5v2.8h-1.5zM332.6 417.1h1.5v2.8h-1.5zM339.6 342.1h1.5v2.8h-1.5zM341.9 342.1h1.5v2.8h-1.5zM339.6 360.9h1.5v2.8h-1.5zM341.9 360.9h1.5v2.8h-1.5zM349.0 -4.4h1.5v2.8h-1.5zM351.3 -4.4h1.5v2.8h-1.5zM349.0 5.0h1.5v2.8h-1.5zM351.3 5.0h1.5v2.8h-1.5zM349.0 14.4h1.5v2.8h-1.5zM351.3 14.4h1.5v2.8h-1.5zM349.0 154.8h1.5v2.8h-1.5zM351.3 154.8h1.5v2.8h-1.5zM349.0 229.8h1.5v2.8h-1.5zM351.3 229.8h1.5v2.8h-1.5zM349.0 379.6h1.5v2.8h-1.5zM351.3 379.6h1.5v2.8h-1.5zM358.4 23.7h1.5v2.8h-1.5zM360.7 23.7h1.5v2.8h-1.5zM358.4 89.3h1.5v2.8h-1.5zM360.7 89.3h1.5v2.8h-1.5zM358.4 117.4h1.5v2.8h-1.5zM360.7 117.4h1.5v2.8h-1.5zM358.4 257.9h1.5v2.8h-1.5zM360.7 257.9h1.5v2.8h-1.5zM358.4 295.3h1.5v2.8h-1.5zM360.7 295.3h1.5v2.8h-1.5zM358.4 379.6h1.5v2.8h-1.5zM360.7 379.6h1.5v2.8h-1.5zM358.4 407.7h1.5v2.8h-1.5zM360.7 407.7h1.5v2.8h-1.5zM367.7 136.1h1.5v2.8h-1.5zM370.0 136.1h1.5v2.8h-1.5zM367.7 435.8h1.5v2.8h-1.5zM370.0 435.8h1.5v2.8h-1.5zM377.1 445.2h1.5v2.8h-1.5zM379.4 445.2h1.5v2.8h-1.5zM377.1 463.9h1.5v2.8h-1.5zM379.4 463.9h1.5v2.8h-1.5zM377.1 473.2h1.5v2.8h-1.5zM379.4 473.2h1.5v2.8h-1.5zM386.5 61.2h1.5v2.8h-1.5zM388.8 61.2h1.5v2.8h-1.5zM386.5 182.9h1.5v2.8h-1.5zM388.8 182.9h1.5v2.8h-1.5zM386.5 239.1h1.5v2.8h-1.5zM388.8 239.1h1.5v2.8h-1.5zM386.5 332.8h1.5v2.8h-1.5zM388.8 332.8h1.5v2.8h-1.5zM386.5 342.1h1.5v2.8h-1.5zM388.8 342.1h1.5v2.8h-1.5zM395.8 70.6h1.5v2.8h-1.5zM398.1 70.6h1.5v2.8h-1.5zM395.8 164.2h1.5v2.8h-1.5zM398.1 164.2h1.5v2.8h-1.5zM405.2 164.2h1.5v2.8h-1.5zM407.5 164.2h1.5v2.8h-1.5zM405.2 445.2h1.5v2.8h-1.5zM407.5 445.2h1.5v2.8h-1.5zM414.6 89.3h1.5v2.8h-1.5zM416.9 89.3h1.5v2.8h-1.5zM414.6 98.7h1.5v2.8h-1.5zM416.9 98.7h1.5v2.8h-1.5zM414.6 248.5h1.5v2.8h-1.5zM416.9 248.5h1.5v2.8h-1.5zM433.3 23.7h1.5v2.8h-1.5zM435.6 23.7h1.5v2.8h-1.5zM433.3 239.1h1.5v2.8h-1.5zM435.6 239.1h1.5v2.8h-1.5zM442.7 164.2h1.5v2.8h-1.5zM445.0 164.2h1.5v2.8h-1.5zM452.0 239.1h1.5v2.8h-1.5zM454.3 239.1h1.5v2.8h-1.5zM461.4 154.8h1.5v2.8h-1.5zM463.7 154.8h1.5v2.8h-1.5zM461.4 257.9h1.5v2.8h-1.5zM463.7 257.9h1.5v2.8h-1.5zM461.4 323.4h1.5v2.8h-1.5zM463.7 323.4h1.5v2.8h-1.5z"/><path fill="#f4f4f4" d="M2.5 51.8h1.5v2.8h-1.5zM4.8 51.8h1.5v2.8h-1.5zM2.5 70.6h1.5v2.8h-1.5zM4.8 70.6h1.5v2.8h-1.5zM2.5 192.3h1.5v2.8h-1.5zM4.8 192.3h1.5v2.8h-1.5zM2.5 304.7h1.5v2.8h-1.5zM4.8 304.7h1.5v2.8h-1.5zM2.5 314.0h1.5v2.8h-1.5zM4.8 314.0h1.5v2.8h-1.5zM11.9 33.1h1.5v2.8h-1.5zM14.2 33.1h1.5v2.8h-1.5zM11.9 164.2h1.5v2.8h-1.5zM14.2 164.2h1.5v2.8h-1.5zM11.9 239.1h1.5v2.8h-1.5zM14.2 239.1h1.5v2.8h-1.5zM11.9 276.6h1.5v2.8h-1.5zM14.2 276.6h1.5v2.8h-1.5zM21.2 14.4h1.5v2.8h-1.5zM23.5 14.4h1.5v2.8h-1.5zM21.2 98.7h1.5v2.8h-1.5zM23.5 98.7h1.5v2.8h-1.5zM21.2 182.9h1.5v2.8h-1.5zM23.5 182.9h1.5v2.8h-1.5zM21.2 229.8h1.5v2.8h-1.5zM23.5 229.8h1.5v2.8h-1.5zM21.2 239.1h1.5v2.8h-1.5zM23.5 239.1h1.5v2.8h-1.5zM21.2 276.6h1.5v2.8h-1.5zM23.5 276.6h1.5v2.8h-1.5zM21.2 445.2h1.5v2.8h-1.5zM23.5 445.2h1.5v2.8h-1.5zM30.6 5.0h1.5v2.8h-1.5zM32.9 5.0h1.5v2.8h-1.5zM30.6 211.0h1.5v2.8h-1.5zM32.9 211.0h1.5v2.8h-1.5zM30.6 220.4h1.5v2.8h-1.5zM32.9 220.4h1.5v2.8h-1.5zM40.0 173.6h1.5v2.8h-1.5zM42.3 173.6h1.5v2.8h-1.5zM40.0 417.1h1.5v2.8h-1.5zM42.3 417.1h1.5v2.8h-1.5zM40.0 445.2h1.5v2.8h-1.5zM42.3 445.2h1.5v2.8h-1.5zM58.7 61.2h1.5v2.8h-1.5zM61.0 61.2h1.5v2.8h-1.5zM58.7 89.3h1.5v2.8h-1.5zM61.0 89.3h1.5v2.8h-1.5zM58.7 126.7h1.5v2.8h-1.5zM61.0 126.7h1.5v2.8h-1.5zM58.7 182.9h1.5v2.8h-1.5zM61.0 182.9h1.5v2.8h-1.5zM58.7 304.7h1.5v2.8h-1.5zM61.0 304.7h1.5v2.8h-1.5zM68.1 14.4h1.5v2.8h-1.5zM70.4 14.4h1.5v2.8h-1.5zM68.1 98.7h1.5v2.8h-1.5zM70.4 98.7h1.5v2.8h-1.5zM68.1 117.4h1.5v2.8h-1.5zM70.4 117.4h1.5v2.8h-1.5zM68.1 314.0h1.5v2.8h-1.5zM70.4 314.0h1.5v2.8h-1.5zM77.4 51.8h1.5v2.8h-1.5zM79.7 51.8h1.5v2.8h-1.5zM77.4 108.0h1.5v2.8h-1.5zM79.7 108.0h1.5v2.8h-1.5zM77.4 145.5h1.5v2.8h-1.5zM79.7 145.5h1.5v2.8h-1.5zM77.4 154.8h1.5v2.8h-1.5zM79.7 154.8h1.5v2.8h-1.5zM77.4 295.3h1.5v2.8h-1.5zM79.7 295.3h1.5v2.8h-1.5zM77.4 454.5h1.5v2.8h-1.5zM79.7 454.5h1.5v2.8h-1.5zM86.8 61.2h1.5v2.8h-1.5zM89.1 61.2h1.5v2.8h-1.5zM86.8 323.4h1.5v2.8h-1.5zM89.1 323.4h1.5v2.8h-1.5zM86.8 332.8h1.5v2.8h-1.5zM89.1 332.8h1.5v2.8h-1.5zM86.8 463.9h1.5v2.8h-1.5zM89.1 463.9h1.5v2.8h-1.5zM96.1 173.6h1.5v2.8h-1.5zM98.4 173.6h1.5v2.8h-1.5zM96.1 182.9h1.5v2.8h-1.5zM98.4 182.9h1.5v2.8h-1.5zM96.1 257.9h1.5v2.8h-1.5zM98.4 257.9h1.5v2.8h-1.5zM96.1 398.3h1.5v2.8h-1.5zM98.4 398.3h1.5v2.8h-1.5zM105.5 79.9h1.5v2.8h-1.5zM107.8 79.9h1.5v2.8h-1.5zM105.5 136.1h1.5v2.8h-1.5zM107.8 136.1h1.5v2.8h-1.5zM114.9 -4.4h1.5v2.8h-1.5zM117.2 -4.4h1.5v2.8h-1.5zM114.9 136.1h1.5v2.8h-1.5zM117.2 136.1h1.5v2.8h-1.5zM114.9 145.5h1.5v2.8h-1.5zM117.2 145.5h1.5v2.8h-1.5zM114.9 192.3h1.5v2.8h-1.5zM117.2 192.3h1.5v2.8h-1.5zM114.9 351.5h1.5v2.8h-1.5zM117.2 351.5h1.5v2.8h-1.5zM124.2 23.7h1.5v2.8h-1.5zM126.5 23.7h1.5v2.8h-1.5zM124.2 136.1h1.5v2.8h-1.5zM126.5 136.1h1.5v2.8h-1.5zM124.2 211.0h1.5v2.8h-1.5zM126.5 211.0h1.5v2.8h-1.5zM124.2 473.2h1.5v2.8h-1.5zM126.5 473.2h1.5v2.8h-1.5zM133.6 -4.4h1.5v2.8h-1.5zM135.9 -4.4h1.5v2.8h-1.5zM133.6 98.7h1.5v2.8h-1.5zM135.9 98.7h1.5v2.8h-1.5zM133.6 154.8h1.5v2.8h-1.5zM135.9 154.8h1.5v2.8h-1.5zM133.6 257.9h1.5v2.8h-1.5zM135.9 257.9h1.5v2.8h-1.5zM133.6 323.4h1.5v2.8h-1.5zM135.9 323.4h1.5v2.8h-1.5zM133.6 360.9h1.5v2.8h-1.5zM135.9 360.9h1.5v2.8h-1.5zM133.6 370.2h1.5v2.8h-1.5zM135.9 370.2h1.5v2.8h-1.5zM133.6 379.6h1.5v2.8h-1.5zM135.9 379.6h1.5v2.8h-1.5zM143.0 14.4h1.5v2.8h-1.5zM145.3 14.4h1.5v2.8h-1.5zM143.0 61.2h1.5v2.8h-1.5zM145.3 61.2h1.5v2.8h-1.5zM143.0 285.9h1.5v2.8h-1.5zM145.3 285.9h1.5v2.8h-1.5zM143.0 295.3h1.5v2.8h-1.5zM145.3 295.3h1.5v2.8h-1.5zM152.3 220.4h1.5v2.8h-1.5zM154.6 220.4h1.5v2.8h-1.5zM152.3 445.2h1.5v2.8h-1.5zM154.6 445.2h1.5v2.8h-1.5zM161.7 33.1h1.5v2.8h-1.5zM164.0 33.1h1.5v2.8h-1.5zM161.7 239.1h1.5v2.8h-1.5zM164.0 239.1h1.5v2.8h-1.5zM161.7 314.0h1.5v2.8h-1.5zM164.0 314.0h1.5v2.8h-1.5zM171.1 23.7h1.5v2.8h-1.5zM173.4 23.7h1.5v2.8h-1.5zM171.1 220.4h1.5v2.8h-1.5zM173.4 220.4h1.5v2.8h-1.5zM171.1 248.5h1.5v2.8h-1.5zM173.4 248.5h1.5v2.8h-1.5zM171.1 370.2h1.5v2.8h-1.5zM173.4 370.2h1.5v2.8h-1.5zM180.4 23.7h1.5v2.8h-1.5zM182.7 23.7h1.5v2.8h-1.5zM180.4 79.9h1.5v2.8h-1.5zM182.7 79.9h1.5v2.8h-1.5zM180.4 370.2h1.5v2.8h-1.5zM182.7 370.2h1.5v2.8h-1.5zM189.8 154.8h1.5v2.8h-1.5zM192.1 154.8h1.5v2.8h-1.5zM189.8 229.8h1.5v2.8h-1.5zM192.1 229.8h1.5v2.8h-1.5zM189.8 239.1h1.5v2.8h-1.5zM192.1 239.1h1.5v2.8h-1.5zM189.8 323.4h1.5v2.8h-1.5zM192.1 323.4h1.5v2.8h-1.5zM189.8 332.8h1.5v2.8h-1.5zM192.1 332.8h1.5v2.8h-1.5zM199.2 33.1h1.5v2.8h-1.5zM201.5 33.1h1.5v2.8h-1.5zM199.2 126.7h1.5v2.8h-1.5zM201.5 126.7h1.5v2.8h-1.5zM199.2 164.2h1.5v2.8h-1.5zM201.5 164.2h1.5v2.8h-1.5zM199.2 182.9h1.5v2.8h-1.5zM201.5 182.9h1.5v2.8h-1.5zM199.2 295.3h1.5v2.8h-1.5zM201.5 295.3h1.5v2.8h-1.5zM199.2 332.8h1.5v2.8h-1.5zM201.5 332.8h1.5v2.8h-1.5zM199.2 417.1h1.5v2.8h-1.5zM201.5 417.1h1.5v2.8h-1.5zM208.5 79.9h1.5v2.8h-1.5zM210.8 79.9h1.5v2.8h-1.5zM208.5 342.1h1.5v2.8h-1.5zM210.8 342.1h1.5v2.8h-1.5zM208.5 389.0h1.5v2.8h-1.5zM210.8 389.0h1.5v2.8h-1.5zM208.5 398.3h1.5v2.8h-1.5zM210.8 398.3h1.5v2.8h-1.5zM217.9 79.9h1.5v2.8h-1.5zM220.2 79.9h1.5v2.8h-1.5zM217.9 201.7h1.5v2.8h-1.5zM220.2 201.7h1.5v2.8h-1.5zM217.9 295.3h1.5v2.8h-1.5zM220.2 295.3h1.5v2.8h-1.5zM217.9 407.7h1.5v2.8h-1.5zM220.2 407.7h1.5v2.8h-1.5zM217.9 445.2h1.5v2.8h-1.5zM220.2 445.2h1.5v2.8h-1.5zM227.3 211.0h1.5v2.8h-1.5zM229.6 211.0h1.5v2.8h-1.5zM236.6 229.8h1.5v2.8h-1.5zM238.9 229.8h1.5v2.8h-1.5zM246.0 164.2h1.5v2.8h-1.5zM248.3 164.2h1.5v2.8h-1.5zM246.0 379.6h1.5v2.8h-1.5zM248.3 379.6h1.5v2.8h-1.5zM246.0 407.7h1.5v2.8h-1.5zM248.3 407.7h1.5v2.8h-1.5zM255.4 276.6h1.5v2.8h-1.5zM257.7 276.6h1.5v2.8h-1.5zM255.4 389.0h1.5v2.8h-1.5zM257.7 389.0h1.5v2.8h-1.5zM255.4 454.5h1.5v2.8h-1.5zM257.7 454.5h1.5v2.8h-1.5zM255.4 463.9h1.5v2.8h-1.5zM257.7 463.9h1.5v2.8h-1.5zM264.7 267.2h1.5v2.8h-1.5zM267.0 267.2h1.5v2.8h-1.5zM264.7 332.8h1.5v2.8h-1.5zM267.0 332.8h1.5v2.8h-1.5zM264.7 445.2h1.5v2.8h-1.5zM267.0 445.2h1.5v2.8h-1.5zM274.1 42.5h1.5v2.8h-1.5zM276.4 42.5h1.5v2.8h-1.5zM274.1 314.0h1.5v2.8h-1.5zM276.4 314.0h1.5v2.8h-1.5zM274.1 351.5h1.5v2.8h-1.5zM276.4 351.5h1.5v2.8h-1.5zM274.1 370.2h1.5v2.8h-1.5zM276.4 370.2h1.5v2.8h-1.5zM283.4 61.2h1.5v2.8h-1.5zM285.7 61.2h1.5v2.8h-1.5zM283.4 201.7h1.5v2.8h-1.5zM285.7 201.7h1.5v2.8h-1.5zM283.4 220.4h1.5v2.8h-1.5zM285.7 220.4h1.5v2.8h-1.5zM283.4 276.6h1.5v2.8h-1.5zM285.7 276.6h1.5v2.8h-1.5zM283.4 379.6h1.5v2.8h-1.5zM285.7 379.6h1.5v2.8h-1.5zM283.4 389.0h1.5v2.8h-1.5zM285.7 389.0h1.5v2.8h-1.5zM283.4 454.5h1.5v2.8h-1.5zM285.7 454.5h1.5v2.8h-1.5zM292.8 14.4h1.5v2.8h-1.5zM295.1 14.4h1.5v2.8h-1.5zM292.8 136.1h1.5v2.8h-1.5zM295.1 136.1h1.5v2.8h-1.5zM292.8 145.5h1.5v2.8h-1.5zM295.1 145.5h1.5v2.8h-1.5zM292.8 229.8h1.5v2.8h-1.5zM295.1 229.8h1.5v2.8h-1.5zM292.8 389.0h1.5v2.8h-1.5zM295.1 389.0h1.5v2.8h-1.5zM302.2 70.6h1.5v2.8h-1.5zM304.5 70.6h1.5v2.8h-1.5zM302.2 126.7h1.5v2.8h-1.5zM304.5 126.7h1.5v2.8h-1.5zM311.5 61.2h1.5v2.8h-1.5zM313.8 61.2h1.5v2.8h-1.5zM311.5 154.8h1.5v2.8h-1.5zM313.8 154.8h1.5v2.8h-1.5zM311.5 164.2h1.5v2.8h-1.5zM313.8 164.2h1.5v2.8h-1.5zM311.5 285.9h1.5v2.8h-1.5zM313.8 285.9h1.5v2.8h-1.5zM311.5 323.4h1.5v2.8h-1.5zM313.8 323.4h1.5v2.8h-1.5zM311.5 379.6h1.5v2.8h-1.5zM313.8 379.6h1.5v2.8h-1.5zM320.9 42.5h1.5v2.8h-1.5zM323.2 42.5h1.5v2.8h-1.5zM320.9 98.7h1.5v2.8h-1.5zM323.2 98.7h1.5v2.8h-1.5zM320.9 145.5h1.5v2.8h-1.5zM323.2 145.5h1.5v2.8h-1.5zM320.9 304.7h1.5v2.8h-1.5zM323.2 304.7h1.5v2.8h-1.5zM320.9 332.8h1.5v2.8h-1.5zM323.2 332.8h1.5v2.8h-1.5zM330.3 23.7h1.5v2.8h-1.5zM332.6 23.7h1.5v2.8h-1.5zM330.3 182.9h1.5v2.8h-1.5zM332.6 182.9h1.5v2.8h-1.5zM330.3 323.4h1.5v2.8h-1.5zM332.6 323.4h1.5v2.8h-1.5zM330.3 360.9h1.5v2.8h-1.5zM332.6 360.9h1.5v2.8h-1.5zM330.3 398.3h1.5v2.8h-1.5zM332.6 398.3h1.5v2.8h-1.5zM339.6 173.6h1.5v2.8h-1.5zM341.9 173.6h1.5v2.8h-1.5zM339.6 229.8h1.5v2.8h-1.5zM341.9 229.8h1.5v2.8h-1.5zM339.6 332.8h1.5v2.8h-1.5zM341.9 332.8h1.5v2.8h-1.5zM339.6 445.2h1.5v2.8h-1.5zM341.9 445.2h1.5v2.8h-1.5zM349.0 23.7h1.5v2.8h-1.5zM351.3 23.7h1.5v2.8h-1.5zM349.0 89.3h1.5v2.8h-1.5zM351.3 89.3h1.5v2.8h-1.5zM349.0 126.7h1.5v2.8h-1.5zM351.3 126.7h1.5v2.8h-1.5zM349.0 201.7h1.5v2.8h-1.5zM351.3 201.7h1.5v2.8h-1.5zM358.4 14.4h1.5v2.8h-1.5zM360.7 14.4h1.5v2.8h-1.5zM358.4 126.7h1.5v2.8h-1.5zM360.7 126.7h1.5v2.8h-1.5zM358.4 211.0h1.5v2.8h-1.5zM360.7 211.0h1.5v2.8h-1.5zM367.7 164.2h1.5v2.8h-1.5zM370.0 164.2h1.5v2.8h-1.5zM367.7 295.3h1.5v2.8h-1.5zM370.0 295.3h1.5v2.8h-1.5zM377.1 42.5h1.5v2.8h-1.5zM379.4 42.5h1.5v2.8h-1.5zM377.1 389.0h1.5v2.8h-1.5zM379.4 389.0h1.5v2.8h-1.5zM377.1 398.3h1.5v2.8h-1.5zM379.4 398.3h1.5v2.8h-1.5zM386.5 417.1h1.5v2.8h-1.5zM388.8 417.1h1.5v2.8h-1.5zM386.5 463.9h1.5v2.8h-1.5zM388.8 463.9h1.5v2.8h-1.5zM395.8 201.7h1.5v2.8h-1.5zM398.1 201.7h1.5v2.8h-1.5zM395.8 211.0h1.5v2.8h-1.5zM398.1 211.0h1.5v2.8h-1.5zM395.8 332.8h1.5v2.8h-1.5zM398.1 332.8h1.5v2.8h-1.5zM395.8 398.3h1.5v2.8h-1.5zM398.1 398.3h1.5v2.8h-1.5zM405.2 267.2h1.5v2.8h-1.5zM407.5 267.2h1.5v2.8h-1.5zM414.6 389.0h1.5v2.8h-1.5zM416.9 389.0h1.5v2.8h-1.5zM423.9 51.8h1.5v2.8h-1.5zM426.2 51.8h1.5v2.8h-1.5zM423.9 61.2h1.5v2.8h-1.5zM426.2 61.2h1.5v2.8h-1.5zM423.9 108.0h1.5v2.8h-1.5zM426.2 108.0h1.5v2.8h-1.5zM423.9 211.0h1.5v2.8h-1.5zM426.2 211.0h1.5v2.8h-1.5zM423.9 248.5h1.5v2.8h-1.5zM426.2 248.5h1.5v2.8h-1.5zM423.9 276.6h1.5v2.8h-1.5zM426.2 276.6h1.5v2.8h-1.5zM433.3 -4.4h1.5v2.8h-1.5zM435.6 -4.4h1.5v2.8h-1.5zM433.3 61.2h1.5v2.8h-1.5zM435.6 61.2h1.5v2.8h-1.5zM433.3 145.5h1.5v2.8h-1.5zM435.6 145.5h1.5v2.8h-1.5zM433.3 445.2h1.5v2.8h-1.5zM435.6 445.2h1.5v2.8h-1.5zM442.7 61.2h1.5v2.8h-1.5zM445.0 61.2h1.5v2.8h-1.5zM442.7 173.6h1.5v2.8h-1.5zM445.0 173.6h1.5v2.8h-1.5zM442.7 257.9h1.5v2.8h-1.5zM445.0 257.9h1.5v2.8h-1.5zM442.7 454.5h1.5v2.8h-1.5zM445.0 454.5h1.5v2.8h-1.5zM452.0 136.1h1.5v2.8h-1.5zM454.3 136.1h1.5v2.8h-1.5zM452.0 173.6h1.5v2.8h-1.5zM454.3 173.6h1.5v2.8h-1.5zM452.0 454.5h1.5v2.8h-1.5zM454.3 454.5h1.5v2.8h-1.5zM461.4 70.6h1.5v2.8h-1.5zM463.7 70.6h1.5v2.8h-1.5z"/><path fill="#f1f6f0" d="M2.5 79.9h1.5v2.8h-1.5zM4.8 79.9h1.5v2.8h-1.5zM2.5 108.0h1.5v2.8h-1.5zM4.8 108.0h1.5v2.8h-1.5zM2.5 173.6h1.5v2.8h-1.5zM4.8 173.6h1.5v2.8h-1.5zM2.5 285.9h1.5v2.8h-1.5zM4.8 285.9h1.5v2.8h-1.5zM2.5 342.1h1.5v2.8h-1.5zM4.8 342.1h1.5v2.8h-1.5zM11.9 -4.4h1.5v2.8h-1.5zM14.2 -4.4h1.5v2.8h-1.5zM11.9 220.4h1.5v2.8h-1.5zM14.2 220.4h1.5v2.8h-1.5zM11.9 314.0h1.5v2.8h-1.5zM14.2 314.0h1.5v2.8h-1.5zM11.9 398.3h1.5v2.8h-1.5zM14.2 398.3h1.5v2.8h-1.5zM21.2 23.7h1.5v2.8h-1.5zM23.5 23.7h1.5v2.8h-1.5zM21.2 145.5h1.5v2.8h-1.5zM23.5 145.5h1.5v2.8h-1.5zM21.2 154.8h1.5v2.8h-1.5zM23.5 154.8h1.5v2.8h-1.5zM40.0 23.7h1.5v2.8h-1.5zM42.3 23.7h1.5v2.8h-1.5zM40.0 33.1h1.5v2.8h-1.5zM42.3 33.1h1.5v2.8h-1.5zM40.0 220.4h1.5v2.8h-1.5zM42.3 220.4h1.5v2.8h-1.5zM40.0 304.7h1.5v2.8h-1.5zM42.3 304.7h1.5v2.8h-1.5zM40.0 370.2h1.5v2.8h-1.5zM42.3 370.2h1.5v2.8h-1.5zM49.3 445.2h1.5v2.8h-1.5zM51.6 445.2h1.5v2.8h-1.5zM58.7 5.0h1.5v2.8h-1.5zM61.0 5.0h1.5v2.8h-1.5zM58.7 220.4h1.5v2.8h-1.5zM61.0 220.4h1.5v2.8h-1.5zM58.7 323.4h1.5v2.8h-1.5zM61.0 323.4h1.5v2.8h-1.5zM68.1 192.3h1.5v2.8h-1.5zM70.4 192.3h1.5v2.8h-1.5zM68.1 220.4h1.5v2.8h-1.5zM70.4 220.4h1.5v2.8h-1.5zM68.1 295.3h1.5v2.8h-1.5zM70.4 295.3h1.5v2.8h-1.5zM77.4 61.2h1.5v2.8h-1.5zM79.7 61.2h1.5v2.8h-1.5zM77.4 136.1h1.5v2.8h-1.5zM79.7 136.1h1.5v2.8h-1.5zM77.4 239.1h1.5v2.8h-1.5zM79.7 239.1h1.5v2.8h-1.5zM86.8 211.0h1.5v2.8h-1.5zM89.1 211.0h1.5v2.8h-1.5zM96.1 332.8h1.5v2.8h-1.5zM98.4 332.8h1.5v2.8h-1.5zM96.1 342.1h1.5v2.8h-1.5zM98.4 342.1h1.5v2.8h-1.5zM96.1 379.6h1.5v2.8h-1.5zM98.4 379.6h1.5v2.8h-1.5zM105.5 -4.4h1.5v2.8h-1.5zM107.8 -4.4h1.5v2.8h-1.5zM105.5 248.5h1.5v2.8h-1.5zM107.8 248.5h1.5v2.8h-1.5zM105.5 435.8h1.5v2.8h-1.5zM107.8 435.8h1.5v2.8h-1.5zM105.5 445.2h1.5v2.8h-1.5zM107.8 445.2h1.5v2.8h-1.5zM105.5 463.9h1.5v2.8h-1.5zM107.8 463.9h1.5v2.8h-1.5zM114.9 89.3h1.5v2.8h-1.5zM117.2 89.3h1.5v2.8h-1.5zM114.9 201.7h1.5v2.8h-1.5zM117.2 201.7h1.5v2.8h-1.5zM124.2 -4.4h1.5v2.8h-1.5zM126.5 -4.4h1.5v2.8h-1.5zM124.2 164.2h1.5v2.8h-1.5zM126.5 164.2h1.5v2.8h-1.5zM124.2 229.8h1.5v2.8h-1.5zM126.5 229.8h1.5v2.8h-1.5zM124.2 398.3h1.5v2.8h-1.5zM126.5 398.3h1.5v2.8h-1.5zM124.2 435.8h1.5v2.8h-1.5zM126.5 435.8h1.5v2.8h-1.5zM133.6 5.0h1.5v2.8h-1.5zM135.9 5.0h1.5v2.8h-1.5zM133.6 117.4h1.5v2.8h-1.5zM135.9 117.4h1.5v2.8h-1.5zM133.6 126.7h1.5v2.8h-1.5zM135.9 126.7h1.5v2.8h-1.5zM133.6 248.5h1.5v2.8h-1.5zM135.9 248.5h1.5v2.8h-1.5zM133.6 276.6h1.5v2.8h-1.5zM135.9 276.6h1.5v2.8h-1.5zM133.6 332.8h1.5v2.8h-1.5zM135.9 332.8h1.5v2.8h-1.5zM143.0 108.0h1.5v2.8h-1.5zM145.3 108.0h1.5v2.8h-1.5zM143.0 126.7h1.5v2.8h-1.5zM145.3 126.7h1.5v2.8h-1.5zM143.0 417.1h1.5v2.8h-1.5zM145.3 417.1h1.5v2.8h-1.5zM152.3 23.7h1.5v2.8h-1.5zM154.6 23.7h1.5v2.8h-1.5zM152.3 108.0h1.5v2.8h-1.5zM154.6 108.0h1.5v2.8h-1.5zM152.3 285.9h1.5v2.8h-1.5zM154.6 285.9h1.5v2.8h-1.5zM161.7 51.8h1.5v2.8h-1.5zM164.0 51.8h1.5v2.8h-1.5zM161.7 108.0h1.5v2.8h-1.5zM164.0 108.0h1.5v2.8h-1.5zM161.7 173.6h1.5v2.8h-1.5zM164.0 173.6h1.5v2.8h-1.5zM161.7 257.9h1.5v2.8h-1.5zM164.0 257.9h1.5v2.8h-1.5zM161.7 276.6h1.5v2.8h-1.5zM164.0 276.6h1.5v2.8h-1.5zM161.7 370.2h1.5v2.8h-1.5zM164.0 370.2h1.5v2.8h-1.5zM171.1 42.5h1.5v2.8h-1.5zM173.4 42.5h1.5v2.8h-1.5zM171.1 108.0h1.5v2.8h-1.5zM173.4 108.0h1.5v2.8h-1.5zM171.1 154.8h1.5v2.8h-1.5zM173.4 154.8h1.5v2.8h-1.5zM171.1 173.6h1.5v2.8h-1.5zM173.4 173.6h1.5v2.8h-1.5zM171.1 314.0h1.5v2.8h-1.5zM173.4 314.0h1.5v2.8h-1.5zM171.1 332.8h1.5v2.8h-1.5zM173.4 332.8h1.5v2.8h-1.5zM171.1 473.2h1.5v2.8h-1.5zM173.4 473.2h1.5v2.8h-1.5zM180.4 98.7h1.5v2.8h-1.5zM182.7 98.7h1.5v2.8h-1.5zM189.8 61.2h1.5v2.8h-1.5zM192.1 61.2h1.5v2.8h-1.5zM189.8 267.2h1.5v2.8h-1.5zM192.1 267.2h1.5v2.8h-1.5zM199.2 14.4h1.5v2.8h-1.5zM201.5 14.4h1.5v2.8h-1.5zM199.2 145.5h1.5v2.8h-1.5zM201.5 145.5h1.5v2.8h-1.5zM217.9 192.3h1.5v2.8h-1.5zM220.2 192.3h1.5v2.8h-1.5zM217.9 304.7h1.5v2.8h-1.5zM220.2 304.7h1.5v2.8h-1.5zM227.3 164.2h1.5v2.8h-1.5zM229.6 164.2h1.5v2.8h-1.5zM227.3 173.6h1.5v2.8h-1.5zM229.6 173.6h1.5v2.8h-1.5zM227.3 257.9h1.5v2.8h-1.5zM229.6 257.9h1.5v2.8h-1.5zM236.6 136.1h1.5v2.8h-1.5zM238.9 136.1h1.5v2.8h-1.5zM236.6 220.4h1.5v2.8h-1.5zM238.9 220.4h1.5v2.8h-1.5zM236.6 239.1h1.5v2.8h-1.5zM238.9 239.1h1.5v2.8h-1.5zM236.6 314.0h1.5v2.8h-1.5zM238.9 314.0h1.5v2.8h-1.5zM236.6 342.1h1.5v2.8h-1.5zM238.9 342.1h1.5v2.8h-1.5zM236.6 370.2h1.5v2.8h-1.5zM238.9 370.2h1.5v2.8h-1.5zM246.0 5.0h1.5v2.8h-1.5zM248.3 5.0h1.5v2.8h-1.5zM246.0 51.8h1.5v2.8h-1.5zM248.3 51.8h1.5v2.8h-1.5zM246.0 79.9h1.5v2.8h-1.5zM248.3 79.9h1.5v2.8h-1.5zM246.0 136.1h1.5v2.8h-1.5zM248.3 136.1h1.5v2.8h-1.5zM246.0 295.3h1.5v2.8h-1.5zM248.3 295.3h1.5v2.8h-1.5zM246.0 332.8h1.5v2.8h-1.5zM248.3 332.8h1.5v2.8h-1.5zM246.0 398.3h1.5v2.8h-1.5zM248.3 398.3h1.5v2.8h-1.5zM246.0 417.1h1.5v2.8h-1.5zM248.3 417.1h1.5v2.8h-1.5zM246.0 426.4h1.5v2.8h-1.5zM248.3 426.4h1.5v2.8h-1.5zM255.4 33.1h1.5v2.8h-1.5zM257.7 33.1h1.5v2.8h-1.5zM255.4 239.1h1.5v2.8h-1.5zM257.7 239.1h1.5v2.8h-1.5zM255.4 257.9h1.5v2.8h-1.5zM257.7 257.9h1.5v2.8h-1.5zM255.4 332.8h1.5v2.8h-1.5zM257.7 332.8h1.5v2.8h-1.5zM264.7 389.0h1.5v2.8h-1.5zM267.0 389.0h1.5v2.8h-1.5zM264.7 398.3h1.5v2.8h-1.5zM267.0 398.3h1.5v2.8h-1.5zM274.1 145.5h1.5v2.8h-1.5zM276.4 145.5h1.5v2.8h-1.5zM274.1 192.3h1.5v2.8h-1.5zM276.4 192.3h1.5v2.8h-1.5zM283.4 154.8h1.5v2.8h-1.5zM285.7 154.8h1.5v2.8h-1.5zM283.4 173.6h1.5v2.8h-1.5zM285.7 173.6h1.5v2.8h-1.5zM283.4 285.9h1.5v2.8h-1.5zM285.7 285.9h1.5v2.8h-1.5zM283.4 332.8h1.5v2.8h-1.5zM285.7 332.8h1.5v2.8h-1.5zM292.8 323.4h1.5v2.8h-1.5zM295.1 323.4h1.5v2.8h-1.5zM292.8 332.8h1.5v2.8h-1.5zM295.1 332.8h1.5v2.8h-1.5zM302.2 -4.4h1.5v2.8h-1.5zM304.5 -4.4h1.5v2.8h-1.5zM302.2 14.4h1.5v2.8h-1.5zM304.5 14.4h1.5v2.8h-1.5zM302.2 89.3h1.5v2.8h-1.5zM304.5 89.3h1.5v2.8h-1.5zM311.5 33.1h1.5v2.8h-1.5zM313.8 33.1h1.5v2.8h-1.5zM311.5 79.9h1.5v2.8h-1.5zM313.8 79.9h1.5v2.8h-1.5zM311.5 229.8h1.5v2.8h-1.5zM313.8 229.8h1.5v2.8h-1.5zM311.5 398.3h1.5v2.8h-1.5zM313.8 398.3h1.5v2.8h-1.5zM311.5 473.2h1.5v2.8h-1.5zM313.8 473.2h1.5v2.8h-1.5zM330.3 79.9h1.5v2.8h-1.5zM332.6 79.9h1.5v2.8h-1.5zM339.6 154.8h1.5v2.8h-1.5zM341.9 154.8h1.5v2.8h-1.5zM339.6 314.0h1.5v2.8h-1.5zM341.9 314.0h1.5v2.8h-1.5zM339.6 426.4h1.5v2.8h-1.5zM341.9 426.4h1.5v2.8h-1.5zM349.0 257.9h1.5v2.8h-1.5zM351.3 257.9h1.5v2.8h-1.5zM349.0 351.5h1.5v2.8h-1.5zM351.3 351.5h1.5v2.8h-1.5zM349.0 360.9h1.5v2.8h-1.5zM351.3 360.9h1.5v2.8h-1.5zM349.0 389.0h1.5v2.8h-1.5zM351.3 389.0h1.5v2.8h-1.5zM358.4 61.2h1.5v2.8h-1.5zM360.7 61.2h1.5v2.8h-1.5zM358.4 108.0h1.5v2.8h-1.5zM360.7 108.0h1.5v2.8h-1.5zM358.4 304.7h1.5v2.8h-1.5zM360.7 304.7h1.5v2.8h-1.5zM358.4 454.5h1.5v2.8h-1.5zM360.7 454.5h1.5v2.8h-1.5zM367.7 145.5h1.5v2.8h-1.5zM370.0 145.5h1.5v2.8h-1.5zM367.7 304.7h1.5v2.8h-1.5zM370.0 304.7h1.5v2.8h-1.5zM377.1 98.7h1.5v2.8h-1.5zM379.4 98.7h1.5v2.8h-1.5zM377.1 136.1h1.5v2.8h-1.5zM379.4 136.1h1.5v2.8h-1.5zM377.1 182.9h1.5v2.8h-1.5zM379.4 182.9h1.5v2.8h-1.5zM377.1 201.7h1.5v2.8h-1.5zM379.4 201.7h1.5v2.8h-1.5zM377.1 370.2h1.5v2.8h-1.5zM379.4 370.2h1.5v2.8h-1.5zM386.5 5.0h1.5v2.8h-1.5zM388.8 5.0h1.5v2.8h-1.5zM386.5 79.9h1.5v2.8h-1.5zM388.8 79.9h1.5v2.8h-1.5zM386.5 89.3h1.5v2.8h-1.5zM388.8 89.3h1.5v2.8h-1.5zM386.5 304.7h1.5v2.8h-1.5zM388.8 304.7h1.5v2.8h-1.5zM386.5 426.4h1.5v2.8h-1.5zM388.8 426.4h1.5v2.8h-1.5zM395.8 98.7h1.5v2.8h-1.5zM398.1 98.7h1.5v2.8h-1.5zM395.8 323.4h1.5v2.8h-1.5zM398.1 323.4h1.5v2.8h-1.5zM405.2 23.7h1.5v2.8h-1.5zM407.5 23.7h1.5v2.8h-1.5zM405.2 173.6h1.5v2.8h-1.5zM407.5 173.6h1.5v2.8h-1.5zM405.2 182.9h1.5v2.8h-1.5zM407.5 182.9h1.5v2.8h-1.5zM405.2 407.7h1.5v2.8h-1.5zM407.5 407.7h1.5v2.8h-1.5zM414.6 126.7h1.5v2.8h-1.5zM416.9 126.7h1.5v2.8h-1.5zM414.6 164.2h1.5v2.8h-1.5zM416.9 164.2h1.5v2.8h-1.5zM414.6 323.4h1.5v2.8h-1.5zM416.9 323.4h1.5v2.8h-1.5zM414.6 426.4h1.5v2.8h-1.5zM416.9 426.4h1.5v2.8h-1.5zM423.9 98.7h1.5v2.8h-1.5zM426.2 98.7h1.5v2.8h-1.5zM423.9 360.9h1.5v2.8h-1.5zM426.2 360.9h1.5v2.8h-1.5zM423.9 417.1h1.5v2.8h-1.5zM426.2 417.1h1.5v2.8h-1.5zM433.3 14.4h1.5v2.8h-1.5zM435.6 14.4h1.5v2.8h-1.5zM433.3 164.2h1.5v2.8h-1.5zM435.6 164.2h1.5v2.8h-1.5zM442.7 145.5h1.5v2.8h-1.5zM445.0 145.5h1.5v2.8h-1.5zM452.0 211.0h1.5v2.8h-1.5zM454.3 211.0h1.5v2.8h-1.5zM452.0 248.5h1.5v2.8h-1.5zM454.3 248.5h1.5v2.8h-1.5zM461.4 126.7h1.5v2.8h-1.5zM463.7 126.7h1.5v2.8h-1.5zM461.4 145.5h1.5v2.8h-1.5zM463.7 145.5h1.5v2.8h-1.5zM461.4 173.6h1.5v2.8h-1.5zM463.7 173.6h1.5v2.8h-1.5zM461.4 351.5h1.5v2.8h-1.5zM463.7 351.5h1.5v2.8h-1.5zM461.4 463.9h1.5v2.8h-1.5zM463.7 463.9h1.5v2.8h-1.5z"/><path fill="#ebeded" d="M2.5 117.4h1.5v2.8h-1.5zM4.8 117.4h1.5v2.8h-1.5zM2.5 201.7h1.5v2.8h-1.5zM4.8 201.7h1.5v2.8h-1.5zM11.9 126.7h1.5v2.8h-1.5zM14.2 126.7h1.5v2.8h-1.5zM11.9 379.6h1.5v2.8h-1.5zM14.2 379.6h1.5v2.8h-1.5zM21.2 351.5h1.5v2.8h-1.5zM23.5 351.5h1.5v2.8h-1.5zM21.2 426.4h1.5v2.8h-1.5zM23.5 426.4h1.5v2.8h-1.5zM30.6 33.1h1.5v2.8h-1.5zM32.9 33.1h1.5v2.8h-1.5zM30.6 145.5h1.5v2.8h-1.5zM32.9 145.5h1.5v2.8h-1.5zM30.6 370.2h1.5v2.8h-1.5zM32.9 370.2h1.5v2.8h-1.5zM40.0 117.4h1.5v2.8h-1.5zM42.3 117.4h1.5v2.8h-1.5zM40.0 239.1h1.5v2.8h-1.5zM42.3 239.1h1.5v2.8h-1.5zM49.3 276.6h1.5v2.8h-1.5zM51.6 276.6h1.5v2.8h-1.5zM49.3 473.2h1.5v2.8h-1.5zM51.6 473.2h1.5v2.8h-1.5zM58.7 379.6h1.5v2.8h-1.5zM61.0 379.6h1.5v2.8h-1.5zM58.7 398.3h1.5v2.8h-1.5zM61.0 398.3h1.5v2.8h-1.5zM68.1 211.0h1.5v2.8h-1.5zM70.4 211.0h1.5v2.8h-1.5zM68.1 267.2h1.5v2.8h-1.5zM70.4 267.2h1.5v2.8h-1.5zM68.1 379.6h1.5v2.8h-1.5zM70.4 379.6h1.5v2.8h-1.5zM77.4 304.7h1.5v2.8h-1.5zM79.7 304.7h1.5v2.8h-1.5zM77.4 379.6h1.5v2.8h-1.5zM79.7 379.6h1.5v2.8h-1.5zM77.4 398.3h1.5v2.8h-1.5zM79.7 398.3h1.5v2.8h-1.5zM86.8 5.0h1.5v2.8h-1.5zM89.1 5.0h1.5v2.8h-1.5zM96.1 248.5h1.5v2.8h-1.5zM98.4 248.5h1.5v2.8h-1.5zM96.1 276.6h1.5v2.8h-1.5zM98.4 276.6h1.5v2.8h-1.5zM96.1 417.1h1.5v2.8h-1.5zM98.4 417.1h1.5v2.8h-1.5zM114.9 51.8h1.5v2.8h-1.5zM117.2 51.8h1.5v2.8h-1.5zM114.9 117.4h1.5v2.8h-1.5zM117.2 117.4h1.5v2.8h-1.5zM114.9 229.8h1.5v2.8h-1.5zM117.2 229.8h1.5v2.8h-1.5zM143.0 454.5h1.5v2.8h-1.5zM145.3 454.5h1.5v2.8h-1.5zM152.3 -4.4h1.5v2.8h-1.5zM154.6 -4.4h1.5v2.8h-1.5zM152.3 201.7h1.5v2.8h-1.5zM154.6 201.7h1.5v2.8h-1.5zM152.3 295.3h1.5v2.8h-1.5zM154.6 295.3h1.5v2.8h-1.5zM161.7 182.9h1.5v2.8h-1.5zM164.0 182.9h1.5v2.8h-1.5zM171.1 117.4h1.5v2.8h-1.5zM173.4 117.4h1.5v2.8h-1.5zM171.1 126.7h1.5v2.8h-1.5zM173.4 126.7h1.5v2.8h-1.5zM171.1 257.9h1.5v2.8h-1.5zM173.4 257.9h1.5v2.8h-1.5zM180.4 126.7h1.5v2.8h-1.5zM182.7 126.7h1.5v2.8h-1.5zM199.2 342.1h1.5v2.8h-1.5zM201.5 342.1h1.5v2.8h-1.5zM199.2 454.5h1.5v2.8h-1.5zM201.5 454.5h1.5v2.8h-1.5zM208.5 229.8h1.5v2.8h-1.5zM210.8 229.8h1.5v2.8h-1.5zM208.5 248.5h1.5v2.8h-1.5zM210.8 248.5h1.5v2.8h-1.5zM217.9 23.7h1.5v2.8h-1.5zM220.2 23.7h1.5v2.8h-1.5zM217.9 89.3h1.5v2.8h-1.5zM220.2 89.3h1.5v2.8h-1.5zM217.9 276.6h1.5v2.8h-1.5zM220.2 276.6h1.5v2.8h-1.5zM217.9 370.2h1.5v2.8h-1.5zM220.2 370.2h1.5v2.8h-1.5zM227.3 23.7h1.5v2.8h-1.5zM229.6 23.7h1.5v2.8h-1.5zM227.3 360.9h1.5v2.8h-1.5zM229.6 360.9h1.5v2.8h-1.5zM236.6 5.0h1.5v2.8h-1.5zM238.9 5.0h1.5v2.8h-1.5zM236.6 426.4h1.5v2.8h-1.5zM238.9 426.4h1.5v2.8h-1.5zM246.0 276.6h1.5v2.8h-1.5zM248.3 276.6h1.5v2.8h-1.5zM255.4 201.7h1.5v2.8h-1.5zM257.7 201.7h1.5v2.8h-1.5zM255.4 220.4h1.5v2.8h-1.5zM257.7 220.4h1.5v2.8h-1.5zM255.4 379.6h1.5v2.8h-1.5zM257.7 379.6h1.5v2.8h-1.5zM255.4 398.3h1.5v2.8h-1.5zM257.7 398.3h1.5v2.8h-1.5zM255.4 435.8h1.5v2.8h-1.5zM257.7 435.8h1.5v2.8h-1.5zM264.7 154.8h1.5v2.8h-1.5zM267.0 154.8h1.5v2.8h-1.5zM264.7 323.4h1.5v2.8h-1.5zM267.0 323.4h1.5v2.8h-1.5zM264.7 342.1h1.5v2.8h-1.5zM267.0 342.1h1.5v2.8h-1.5zM264.7 379.6h1.5v2.8h-1.5zM267.0 379.6h1.5v2.8h-1.5zM274.1 79.9h1.5v2.8h-1.5zM276.4 79.9h1.5v2.8h-1.5zM274.1 164.2h1.5v2.8h-1.5zM276.4 164.2h1.5v2.8h-1.5zM274.1 182.9h1.5v2.8h-1.5zM276.4 182.9h1.5v2.8h-1.5zM283.4 435.8h1.5v2.8h-1.5zM285.7 435.8h1.5v2.8h-1.5zM292.8 42.5h1.5v2.8h-1.5zM295.1 42.5h1.5v2.8h-1.5zM292.8 211.0h1.5v2.8h-1.5zM295.1 211.0h1.5v2.8h-1.5zM292.8 417.1h1.5v2.8h-1.5zM295.1 417.1h1.5v2.8h-1.5zM292.8 454.5h1.5v2.8h-1.5zM295.1 454.5h1.5v2.8h-1.5zM302.2 136.1h1.5v2.8h-1.5zM304.5 136.1h1.5v2.8h-1.5zM302.2 154.8h1.5v2.8h-1.5zM304.5 154.8h1.5v2.8h-1.5zM302.2 182.9h1.5v2.8h-1.5zM304.5 182.9h1.5v2.8h-1.5zM311.5 182.9h1.5v2.8h-1.5zM313.8 182.9h1.5v2.8h-1.5zM320.9 89.3h1.5v2.8h-1.5zM323.2 89.3h1.5v2.8h-1.5zM320.9 370.2h1.5v2.8h-1.5zM323.2 370.2h1.5v2.8h-1.5zM320.9 426.4h1.5v2.8h-1.5zM323.2 426.4h1.5v2.8h-1.5zM330.3 108.0h1.5v2.8h-1.5zM332.6 108.0h1.5v2.8h-1.5zM330.3 407.7h1.5v2.8h-1.5zM332.6 407.7h1.5v2.8h-1.5zM339.6 201.7h1.5v2.8h-1.5zM341.9 201.7h1.5v2.8h-1.5zM339.6 211.0h1.5v2.8h-1.5zM341.9 211.0h1.5v2.8h-1.5zM339.6 285.9h1.5v2.8h-1.5zM341.9 285.9h1.5v2.8h-1.5zM339.6 398.3h1.5v2.8h-1.5zM341.9 398.3h1.5v2.8h-1.5zM349.0 182.9h1.5v2.8h-1.5zM351.3 182.9h1.5v2.8h-1.5zM349.0 285.9h1.5v2.8h-1.5zM351.3 285.9h1.5v2.8h-1.5zM349.0 370.2h1.5v2.8h-1.5zM351.3 370.2h1.5v2.8h-1.5zM358.4 5.0h1.5v2.8h-1.5zM360.7 5.0h1.5v2.8h-1.5zM367.7 14.4h1.5v2.8h-1.5zM370.0 14.4h1.5v2.8h-1.5zM367.7 182.9h1.5v2.8h-1.5zM370.0 182.9h1.5v2.8h-1.5zM367.7 417.1h1.5v2.8h-1.5zM370.0 417.1h1.5v2.8h-1.5zM377.1 229.8h1.5v2.8h-1.5zM379.4 229.8h1.5v2.8h-1.5zM377.1 332.8h1.5v2.8h-1.5zM379.4 332.8h1.5v2.8h-1.5zM377.1 342.1h1.5v2.8h-1.5zM379.4 342.1h1.5v2.8h-1.5zM395.8 -4.4h1.5v2.8h-1.5zM398.1 -4.4h1.5v2.8h-1.5zM395.8 417.1h1.5v2.8h-1.5zM398.1 417.1h1.5v2.8h-1.5zM405.2 332.8h1.5v2.8h-1.5zM407.5 332.8h1.5v2.8h-1.5zM405.2 360.9h1.5v2.8h-1.5zM407.5 360.9h1.5v2.8h-1.5zM414.6 192.3h1.5v2.8h-1.5zM416.9 192.3h1.5v2.8h-1.5zM414.6 360.9h1.5v2.8h-1.5zM416.9 360.9h1.5v2.8h-1.5zM414.6 463.9h1.5v2.8h-1.5zM416.9 463.9h1.5v2.8h-1.5zM423.9 145.5h1.5v2.8h-1.5zM426.2 145.5h1.5v2.8h-1.5zM423.9 220.4h1.5v2.8h-1.5zM426.2 220.4h1.5v2.8h-1.5zM423.9 257.9h1.5v2.8h-1.5zM426.2 257.9h1.5v2.8h-1.5zM423.9 379.6h1.5v2.8h-1.5zM426.2 379.6h1.5v2.8h-1.5zM423.9 454.5h1.5v2.8h-1.5zM426.2 454.5h1.5v2.8h-1.5zM433.3 398.3h1.5v2.8h-1.5zM435.6 398.3h1.5v2.8h-1.5zM442.7 276.6h1.5v2.8h-1.5zM445.0 276.6h1.5v2.8h-1.5zM442.7 314.0h1.5v2.8h-1.5zM445.0 314.0h1.5v2.8h-1.5zM442.7 351.5h1.5v2.8h-1.5zM445.0 351.5h1.5v2.8h-1.5zM442.7 435.8h1.5v2.8h-1.5zM445.0 435.8h1.5v2.8h-1.5zM452.0 182.9h1.5v2.8h-1.5zM454.3 182.9h1.5v2.8h-1.5zM452.0 192.3h1.5v2.8h-1.5zM454.3 192.3h1.5v2.8h-1.5zM452.0 407.7h1.5v2.8h-1.5zM454.3 407.7h1.5v2.8h-1.5zM461.4 229.8h1.5v2.8h-1.5zM463.7 229.8h1.5v2.8h-1.5zM461.4 379.6h1.5v2.8h-1.5zM463.7 379.6h1.5v2.8h-1.5zM461.4 454.5h1.5v2.8h-1.5zM463.7 454.5h1.5v2.8h-1.5z"/><path fill="#edf4ed" d="M2.5 136.1h1.5v2.8h-1.5zM4.8 136.1h1.5v2.8h-1.5zM2.5 211.0h1.5v2.8h-1.5zM4.8 211.0h1.5v2.8h-1.5zM2.5 379.6h1.5v2.8h-1.5zM4.8 379.6h1.5v2.8h-1.5zM2.5 407.7h1.5v2.8h-1.5zM4.8 407.7h1.5v2.8h-1.5zM2.5 454.5h1.5v2.8h-1.5zM4.8 454.5h1.5v2.8h-1.5zM11.9 211.0h1.5v2.8h-1.5zM14.2 211.0h1.5v2.8h-1.5zM11.9 304.7h1.5v2.8h-1.5zM14.2 304.7h1.5v2.8h-1.5zM11.9 389.0h1.5v2.8h-1.5zM14.2 389.0h1.5v2.8h-1.5zM11.9 454.5h1.5v2.8h-1.5zM14.2 454.5h1.5v2.8h-1.5zM11.9 463.9h1.5v2.8h-1.5zM14.2 463.9h1.5v2.8h-1.5zM21.2 5.0h1.5v2.8h-1.5zM23.5 5.0h1.5v2.8h-1.5zM21.2 314.0h1.5v2.8h-1.5zM23.5 314.0h1.5v2.8h-1.5zM21.2 417.1h1.5v2.8h-1.5zM23.5 417.1h1.5v2.8h-1.5zM30.6 51.8h1.5v2.8h-1.5zM32.9 51.8h1.5v2.8h-1.5zM30.6 117.4h1.5v2.8h-1.5zM32.9 117.4h1.5v2.8h-1.5zM30.6 182.9h1.5v2.8h-1.5zM32.9 182.9h1.5v2.8h-1.5zM30.6 229.8h1.5v2.8h-1.5zM32.9 229.8h1.5v2.8h-1.5zM30.6 239.1h1.5v2.8h-1.5zM32.9 239.1h1.5v2.8h-1.5zM30.6 314.0h1.5v2.8h-1.5zM32.9 314.0h1.5v2.8h-1.5zM30.6 323.4h1.5v2.8h-1.5zM32.9 323.4h1.5v2.8h-1.5zM40.0 257.9h1.5v2.8h-1.5zM42.3 257.9h1.5v2.8h-1.5zM40.0 267.2h1.5v2.8h-1.5zM42.3 267.2h1.5v2.8h-1.5zM40.0 276.6h1.5v2.8h-1.5zM42.3 276.6h1.5v2.8h-1.5zM40.0 295.3h1.5v2.8h-1.5zM42.3 295.3h1.5v2.8h-1.5zM49.3 70.6h1.5v2.8h-1.5zM51.6 70.6h1.5v2.8h-1.5zM49.3 79.9h1.5v2.8h-1.5zM51.6 79.9h1.5v2.8h-1.5zM49.3 248.5h1.5v2.8h-1.5zM51.6 248.5h1.5v2.8h-1.5zM49.3 323.4h1.5v2.8h-1.5zM51.6 323.4h1.5v2.8h-1.5zM49.3 426.4h1.5v2.8h-1.5zM51.6 426.4h1.5v2.8h-1.5zM58.7 173.6h1.5v2.8h-1.5zM61.0 173.6h1.5v2.8h-1.5zM58.7 201.7h1.5v2.8h-1.5zM61.0 201.7h1.5v2.8h-1.5zM58.7 248.5h1.5v2.8h-1.5zM61.0 248.5h1.5v2.8h-1.5zM58.7 445.2h1.5v2.8h-1.5zM61.0 445.2h1.5v2.8h-1.5zM58.7 473.2h1.5v2.8h-1.5zM61.0 473.2h1.5v2.8h-1.5zM68.1 61.2h1.5v2.8h-1.5zM70.4 61.2h1.5v2.8h-1.5zM68.1 108.0h1.5v2.8h-1.5zM70.4 108.0h1.5v2.8h-1.5zM68.1 351.5h1.5v2.8h-1.5zM70.4 351.5h1.5v2.8h-1.5zM68.1 407.7h1.5v2.8h-1.5zM70.4 407.7h1.5v2.8h-1.5zM68.1 417.1h1.5v2.8h-1.5zM70.4 417.1h1.5v2.8h-1.5zM68.1 426.4h1.5v2.8h-1.5zM70.4 426.4h1.5v2.8h-1.5zM68.1 463.9h1.5v2.8h-1.5zM70.4 463.9h1.5v2.8h-1.5zM77.4 14.4h1.5v2.8h-1.5zM79.7 14.4h1.5v2.8h-1.5zM77.4 117.4h1.5v2.8h-1.5zM79.7 117.4h1.5v2.8h-1.5zM77.4 164.2h1.5v2.8h-1.5zM79.7 164.2h1.5v2.8h-1.5zM77.4 173.6h1.5v2.8h-1.5zM79.7 173.6h1.5v2.8h-1.5zM77.4 445.2h1.5v2.8h-1.5zM79.7 445.2h1.5v2.8h-1.5zM86.8 136.1h1.5v2.8h-1.5zM89.1 136.1h1.5v2.8h-1.5zM86.8 154.8h1.5v2.8h-1.5zM89.1 154.8h1.5v2.8h-1.5zM86.8 285.9h1.5v2.8h-1.5zM89.1 285.9h1.5v2.8h-1.5zM86.8 342.1h1.5v2.8h-1.5zM89.1 342.1h1.5v2.8h-1.5zM86.8 379.6h1.5v2.8h-1.5zM89.1 379.6h1.5v2.8h-1.5zM96.1 23.7h1.5v2.8h-1.5zM98.4 23.7h1.5v2.8h-1.5zM96.1 145.5h1.5v2.8h-1.5zM98.4 145.5h1.5v2.8h-1.5zM96.1 211.0h1.5v2.8h-1.5zM98.4 211.0h1.5v2.8h-1.5zM96.1 323.4h1.5v2.8h-1.5zM98.4 323.4h1.5v2.8h-1.5zM96.1 389.0h1.5v2.8h-1.5zM98.4 389.0h1.5v2.8h-1.5zM96.1 426.4h1.5v2.8h-1.5zM98.4 426.4h1.5v2.8h-1.5zM96.1 445.2h1.5v2.8h-1.5zM98.4 445.2h1.5v2.8h-1.5zM96.1 454.5h1.5v2.8h-1.5zM98.4 454.5h1.5v2.8h-1.5zM105.5 126.7h1.5v2.8h-1.5zM107.8 126.7h1.5v2.8h-1.5zM105.5 182.9h1.5v2.8h-1.5zM107.8 182.9h1.5v2.8h-1.5zM105.5 211.0h1.5v2.8h-1.5zM107.8 211.0h1.5v2.8h-1.5zM105.5 229.8h1.5v2.8h-1.5zM107.8 229.8h1.5v2.8h-1.5zM105.5 304.7h1.5v2.8h-1.5zM107.8 304.7h1.5v2.8h-1.5zM105.5 389.0h1.5v2.8h-1.5zM107.8 389.0h1.5v2.8h-1.5zM105.5 398.3h1.5v2.8h-1.5zM107.8 398.3h1.5v2.8h-1.5zM114.9 5.0h1.5v2.8h-1.5zM117.2 5.0h1.5v2.8h-1.5zM114.9 70.6h1.5v2.8h-1.5zM117.2 70.6h1.5v2.8h-1.5zM114.9 79.9h1.5v2.8h-1.5zM117.2 79.9h1.5v2.8h-1.5zM114.9 248.5h1.5v2.8h-1.5zM117.2 248.5h1.5v2.8h-1.5zM114.9 370.2h1.5v2.8h-1.5zM117.2 370.2h1.5v2.8h-1.5zM114.9 398.3h1.5v2.8h-1.5zM117.2 398.3h1.5v2.8h-1.5zM114.9 417.1h1.5v2.8h-1.5zM117.2 417.1h1.5v2.8h-1.5zM124.2 5.0h1.5v2.8h-1.5zM126.5 5.0h1.5v2.8h-1.5zM124.2 33.1h1.5v2.8h-1.5zM126.5 33.1h1.5v2.8h-1.5zM124.2 89.3h1.5v2.8h-1.5zM126.5 89.3h1.5v2.8h-1.5zM124.2 98.7h1.5v2.8h-1.5zM126.5 98.7h1.5v2.8h-1.5zM124.2 173.6h1.5v2.8h-1.5zM126.5 173.6h1.5v2.8h-1.5zM124.2 201.7h1.5v2.8h-1.5zM126.5 201.7h1.5v2.8h-1.5zM124.2 323.4h1.5v2.8h-1.5zM126.5 323.4h1.5v2.8h-1.5zM124.2 332.8h1.5v2.8h-1.5zM126.5 332.8h1.5v2.8h-1.5zM124.2 351.5h1.5v2.8h-1.5zM126.5 351.5h1.5v2.8h-1.5zM124.2 389.0h1.5v2.8h-1.5zM126.5 389.0h1.5v2.8h-1.5zM133.6 164.2h1.5v2.8h-1.5zM135.9 164.2h1.5v2.8h-1.5zM133.6 398.3h1.5v2.8h-1.5zM135.9 398.3h1.5v2.8h-1.5zM133.6 435.8h1.5v2.8h-1.5zM135.9 435.8h1.5v2.8h-1.5zM133.6 463.9h1.5v2.8h-1.5zM135.9 463.9h1.5v2.8h-1.5zM143.0 5.0h1.5v2.8h-1.5zM145.3 5.0h1.5v2.8h-1.5zM143.0 70.6h1.5v2.8h-1.5zM145.3 70.6h1.5v2.8h-1.5zM143.0 117.4h1.5v2.8h-1.5zM145.3 117.4h1.5v2.8h-1.5zM143.0 276.6h1.5v2.8h-1.5zM145.3 276.6h1.5v2.8h-1.5zM143.0 351.5h1.5v2.8h-1.5zM145.3 351.5h1.5v2.8h-1.5zM143.0 407.7h1.5v2.8h-1.5zM145.3 407.7h1.5v2.8h-1.5zM152.3 5.0h1.5v2.8h-1.5zM154.6 5.0h1.5v2.8h-1.5zM152.3 51.8h1.5v2.8h-1.5zM154.6 51.8h1.5v2.8h-1.5zM152.3 61.2h1.5v2.8h-1.5zM154.6 61.2h1.5v2.8h-1.5zM152.3 136.1h1.5v2.8h-1.5zM154.6 136.1h1.5v2.8h-1.5zM152.3 229.8h1.5v2.8h-1.5zM154.6 229.8h1.5v2.8h-1.5zM152.3 314.0h1.5v2.8h-1.5zM154.6 314.0h1.5v2.8h-1.5zM152.3 370.2h1.5v2.8h-1.5zM154.6 370.2h1.5v2.8h-1.5zM152.3 407.7h1.5v2.8h-1.5zM154.6 407.7h1.5v2.8h-1.5zM161.7 117.4h1.5v2.8h-1.5zM164.0 117.4h1.5v2.8h-1.5zM161.7 398.3h1.5v2.8h-1.5zM164.0 398.3h1.5v2.8h-1.5zM171.1 98.7h1.5v2.8h-1.5zM173.4 98.7h1.5v2.8h-1.5zM171.1 145.5h1.5v2.8h-1.5zM173.4 145.5h1.5v2.8h-1.5zM171.1 192.3h1.5v2.8h-1.5zM173.4 192.3h1.5v2.8h-1.5zM171.1 398.3h1.5v2.8h-1.5zM173.4 398.3h1.5v2.8h-1.5zM180.4 285.9h1.5v2.8h-1.5zM182.7 285.9h1.5v2.8h-1.5zM180.4 342.1h1.5v2.8h-1.5zM182.7 342.1h1.5v2.8h-1.5zM189.8 79.9h1.5v2.8h-1.5zM192.1 79.9h1.5v2.8h-1.5zM189.8 173.6h1.5v2.8h-1.5zM192.1 173.6h1.5v2.8h-1.5zM189.8 304.7h1.5v2.8h-1.5zM192.1 304.7h1.5v2.8h-1.5zM189.8 370.2h1.5v2.8h-1.5zM192.1 370.2h1.5v2.8h-1.5zM189.8 445.2h1.5v2.8h-1.5zM192.1 445.2h1.5v2.8h-1.5zM199.2 23.7h1.5v2.8h-1.5zM201.5 23.7h1.5v2.8h-1.5zM199.2 108.0h1.5v2.8h-1.5zM201.5 108.0h1.5v2.8h-1.5zM199.2 154.8h1.5v2.8h-1.5zM201.5 154.8h1.5v2.8h-1.5zM199.2 285.9h1.5v2.8h-1.5zM201.5 285.9h1.5v2.8h-1.5zM199.2 389.0h1.5v2.8h-1.5zM201.5 389.0h1.5v2.8h-1.5zM199.2 407.7h1.5v2.8h-1.5zM201.5 407.7h1.5v2.8h-1.5zM199.2 473.2h1.5v2.8h-1.5zM201.5 473.2h1.5v2.8h-1.5zM208.5 33.1h1.5v2.8h-1.5zM210.8 33.1h1.5v2.8h-1.5zM208.5 89.3h1.5v2.8h-1.5zM210.8 89.3h1.5v2.8h-1.5zM208.5 98.7h1.5v2.8h-1.5zM210.8 98.7h1.5v2.8h-1.5zM208.5 164.2h1.5v2.8h-1.5zM210.8 164.2h1.5v2.8h-1.5zM217.9 136.1h1.5v2.8h-1.5zM220.2 136.1h1.5v2.8h-1.5zM217.9 211.0h1.5v2.8h-1.5zM220.2 211.0h1.5v2.8h-1.5zM217.9 220.4h1.5v2.8h-1.5zM220.2 220.4h1.5v2.8h-1.5zM227.3 33.1h1.5v2.8h-1.5zM229.6 33.1h1.5v2.8h-1.5zM227.3 51.8h1.5v2.8h-1.5zM229.6 51.8h1.5v2.8h-1.5zM227.3 229.8h1.5v2.8h-1.5zM229.6 229.8h1.5v2.8h-1.5zM227.3 276.6h1.5v2.8h-1.5zM229.6 276.6h1.5v2.8h-1.5zM227.3 454.5h1.5v2.8h-1.5zM229.6 454.5h1.5v2.8h-1.5zM227.3 473.2h1.5v2.8h-1.5zM229.6 473.2h1.5v2.8h-1.5zM236.6 33.1h1.5v2.8h-1.5zM238.9 33.1h1.5v2.8h-1.5zM236.6 379.6h1.5v2.8h-1.5zM238.9 379.6h1.5v2.8h-1.5zM246.0 42.5h1.5v2.8h-1.5zM248.3 42.5h1.5v2.8h-1.5zM246.0 389.0h1.5v2.8h-1.5zM248.3 389.0h1.5v2.8h-1.5zM246.0 454.5h1.5v2.8h-1.5zM248.3 454.5h1.5v2.8h-1.5zM246.0 463.9h1.5v2.8h-1.5zM248.3 463.9h1.5v2.8h-1.5zM255.4 14.4h1.5v2.8h-1.5zM257.7 14.4h1.5v2.8h-1.5zM255.4 108.0h1.5v2.8h-1.5zM257.7 108.0h1.5v2.8h-1.5zM255.4 173.6h1.5v2.8h-1.5zM257.7 173.6h1.5v2.8h-1.5zM255.4 229.8h1.5v2.8h-1.5zM257.7 229.8h1.5v2.8h-1.5zM255.4 248.5h1.5v2.8h-1.5zM257.7 248.5h1.5v2.8h-1.5zM255.4 295.3h1.5v2.8h-1.5zM257.7 295.3h1.5v2.8h-1.5zM255.4 304.7h1.5v2.8h-1.5zM257.7 304.7h1.5v2.8h-1.5zM255.4 314.0h1.5v2.8h-1.5zM257.7 314.0h1.5v2.8h-1.5zM264.7 5.0h1.5v2.8h-1.5zM267.0 5.0h1.5v2.8h-1.5zM264.7 33.1h1.5v2.8h-1.5zM267.0 33.1h1.5v2.8h-1.5zM264.7 229.8h1.5v2.8h-1.5zM267.0 229.8h1.5v2.8h-1.5zM264.7 239.1h1.5v2.8h-1.5zM267.0 239.1h1.5v2.8h-1.5zM274.1 173.6h1.5v2.8h-1.5zM276.4 173.6h1.5v2.8h-1.5zM274.1 211.0h1.5v2.8h-1.5zM276.4 211.0h1.5v2.8h-1.5zM274.1 276.6h1.5v2.8h-1.5zM276.4 276.6h1.5v2.8h-1.5zM274.1 360.9h1.5v2.8h-1.5zM276.4 360.9h1.5v2.8h-1.5zM283.4 136.1h1.5v2.8h-1.5zM285.7 136.1h1.5v2.8h-1.5zM283.4 145.5h1.5v2.8h-1.5zM285.7 145.5h1.5v2.8h-1.5zM283.4 473.2h1.5v2.8h-1.5zM285.7 473.2h1.5v2.8h-1.5zM292.8 108.0h1.5v2.8h-1.5zM295.1 108.0h1.5v2.8h-1.5zM292.8 379.6h1.5v2.8h-1.5zM295.1 379.6h1.5v2.8h-1.5zM302.2 61.2h1.5v2.8h-1.5zM304.5 61.2h1.5v2.8h-1.5zM302.2 79.9h1.5v2.8h-1.5zM304.5 79.9h1.5v2.8h-1.5zM302.2 173.6h1.5v2.8h-1.5zM304.5 173.6h1.5v2.8h-1.5zM302.2 285.9h1.5v2.8h-1.5zM304.5 285.9h1.5v2.8h-1.5zM302.2 332.8h1.5v2.8h-1.5zM304.5 332.8h1.5v2.8h-1.5zM302.2 398.3h1.5v2.8h-1.5zM304.5 398.3h1.5v2.8h-1.5zM311.5 211.0h1.5v2.8h-1.5zM313.8 211.0h1.5v2.8h-1.5zM311.5 276.6h1.5v2.8h-1.5zM313.8 276.6h1.5v2.8h-1.5zM311.5 426.4h1.5v2.8h-1.5zM313.8 426.4h1.5v2.8h-1.5zM320.9 33.1h1.5v2.8h-1.5zM323.2 33.1h1.5v2.8h-1.5zM320.9 51.8h1.5v2.8h-1.5zM323.2 51.8h1.5v2.8h-1.5zM320.9 192.3h1.5v2.8h-1.5zM323.2 192.3h1.5v2.8h-1.5zM320.9 239.1h1.5v2.8h-1.5zM323.2 239.1h1.5v2.8h-1.5zM320.9 276.6h1.5v2.8h-1.5zM323.2 276.6h1.5v2.8h-1.5zM320.9 351.5h1.5v2.8h-1.5zM323.2 351.5h1.5v2.8h-1.5zM330.3 14.4h1.5v2.8h-1.5zM332.6 14.4h1.5v2.8h-1.5zM330.3 70.6h1.5v2.8h-1.5zM332.6 70.6h1.5v2.8h-1.5zM330.3 98.7h1.5v2.8h-1.5zM332.6 98.7h1.5v2.8h-1.5zM330.3 229.8h1.5v2.8h-1.5zM332.6 229.8h1.5v2.8h-1.5zM330.3 239.1h1.5v2.8h-1.5zM332.6 239.1h1.5v2.8h-1.5zM330.3 304.7h1.5v2.8h-1.5zM332.6 304.7h1.5v2.8h-1.5zM330.3 342.1h1.5v2.8h-1.5zM332.6 342.1h1.5v2.8h-1.5zM330.3 454.5h1.5v2.8h-1.5zM332.6 454.5h1.5v2.8h-1.5zM339.6 70.6h1.5v2.8h-1.5zM341.9 70.6h1.5v2.8h-1.5zM339.6 267.2h1.5v2.8h-1.5zM341.9 267.2h1.5v2.8h-1.5zM349.0 42.5h1.5v2.8h-1.5zM351.3 42.5h1.5v2.8h-1.5zM349.0 70.6h1.5v2.8h-1.5zM351.3 70.6h1.5v2.8h-1.5zM349.0 239.1h1.5v2.8h-1.5zM351.3 239.1h1.5v2.8h-1.5zM349.0 426.4h1.5v2.8h-1.5zM351.3 426.4h1.5v2.8h-1.5zM358.4 51.8h1.5v2.8h-1.5zM360.7 51.8h1.5v2.8h-1.5zM358.4 229.8h1.5v2.8h-1.5zM360.7 229.8h1.5v2.8h-1.5zM358.4 248.5h1.5v2.8h-1.5zM360.7 248.5h1.5v2.8h-1.5zM358.4 285.9h1.5v2.8h-1.5zM360.7 285.9h1.5v2.8h-1.5zM358.4 323.4h1.5v2.8h-1.5zM360.7 323.4h1.5v2.8h-1.5zM358.4 389.0h1.5v2.8h-1.5zM360.7 389.0h1.5v2.8h-1.5zM358.4 445.2h1.5v2.8h-1.5zM360.7 445.2h1.5v2.8h-1.5zM358.4 463.9h1.5v2.8h-1.5zM360.7 463.9h1.5v2.8h-1.5zM358.4 473.2h1.5v2.8h-1.5zM360.7 473.2h1.5v2.8h-1.5zM367.7 117.4h1.5v2.8h-1.5zM370.0 117.4h1.5v2.8h-1.5zM367.7 126.7h1.5v2.8h-1.5zM370.0 126.7h1.5v2.8h-1.5zM367.7 192.3h1.5v2.8h-1.5zM370.0 192.3h1.5v2.8h-1.5zM367.7 220.4h1.5v2.8h-1.5zM370.0 220.4h1.5v2.8h-1.5zM367.7 239.1h1.5v2.8h-1.5zM370.0 239.1h1.5v2.8h-1.5zM367.7 342.1h1.5v2.8h-1.5zM370.0 342.1h1.5v2.8h-1.5zM377.1 173.6h1.5v2.8h-1.5zM379.4 173.6h1.5v2.8h-1.5zM377.1 267.2h1.5v2.8h-1.5zM379.4 267.2h1.5v2.8h-1.5zM386.5 323.4h1.5v2.8h-1.5zM388.8 323.4h1.5v2.8h-1.5zM395.8 51.8h1.5v2.8h-1.5zM398.1 51.8h1.5v2.8h-1.5zM395.8 267.2h1.5v2.8h-1.5zM398.1 267.2h1.5v2.8h-1.5zM395.8 389.0h1.5v2.8h-1.5zM398.1 389.0h1.5v2.8h-1.5zM395.8 454.5h1.5v2.8h-1.5zM398.1 454.5h1.5v2.8h-1.5zM405.2 14.4h1.5v2.8h-1.5zM407.5 14.4h1.5v2.8h-1.5zM405.2 42.5h1.5v2.8h-1.5zM407.5 42.5h1.5v2.8h-1.5zM405.2 89.3h1.5v2.8h-1.5zM407.5 89.3h1.5v2.8h-1.5zM405.2 136.1h1.5v2.8h-1.5zM407.5 136.1h1.5v2.8h-1.5zM405.2 229.8h1.5v2.8h-1.5zM407.5 229.8h1.5v2.8h-1.5zM405.2 248.5h1.5v2.8h-1.5zM407.5 248.5h1.5v2.8h-1.5zM405.2 257.9h1.5v2.8h-1.5zM407.5 257.9h1.5v2.8h-1.5zM405.2 323.4h1.5v2.8h-1.5zM407.5 323.4h1.5v2.8h-1.5zM405.2 454.5h1.5v2.8h-1.5zM407.5 454.5h1.5v2.8h-1.5zM414.6 5.0h1.5v2.8h-1.5zM416.9 5.0h1.5v2.8h-1.5zM414.6 42.5h1.5v2.8h-1.5zM416.9 42.5h1.5v2.8h-1.5zM414.6 108.0h1.5v2.8h-1.5zM416.9 108.0h1.5v2.8h-1.5zM414.6 257.9h1.5v2.8h-1.5zM416.9 257.9h1.5v2.8h-1.5zM414.6 285.9h1.5v2.8h-1.5zM416.9 285.9h1.5v2.8h-1.5zM414.6 314.0h1.5v2.8h-1.5zM416.9 314.0h1.5v2.8h-1.5zM414.6 379.6h1.5v2.8h-1.5zM416.9 379.6h1.5v2.8h-1.5zM414.6 454.5h1.5v2.8h-1.5zM416.9 454.5h1.5v2.8h-1.5zM423.9 89.3h1.5v2.8h-1.5zM426.2 89.3h1.5v2.8h-1.5zM423.9 173.6h1.5v2.8h-1.5zM426.2 173.6h1.5v2.8h-1.5zM423.9 239.1h1.5v2.8h-1.5zM426.2 239.1h1.5v2.8h-1.5zM423.9 285.9h1.5v2.8h-1.5zM426.2 285.9h1.5v2.8h-1.5zM423.9 389.0h1.5v2.8h-1.5zM426.2 389.0h1.5v2.8h-1.5zM433.3 89.3h1.5v2.8h-1.5zM435.6 89.3h1.5v2.8h-1.5zM433.3 136.1h1.5v2.8h-1.5zM435.6 136.1h1.5v2.8h-1.5zM433.3 220.4h1.5v2.8h-1.5zM435.6 220.4h1.5v2.8h-1.5zM433.3 229.8h1.5v2.8h-1.5zM435.6 229.8h1.5v2.8h-1.5zM433.3 276.6h1.5v2.8h-1.5zM435.6 276.6h1.5v2.8h-1.5zM433.3 417.1h1.5v2.8h-1.5zM435.6 417.1h1.5v2.8h-1.5zM433.3 454.5h1.5v2.8h-1.5zM435.6 454.5h1.5v2.8h-1.5zM442.7 229.8h1.5v2.8h-1.5zM445.0 229.8h1.5v2.8h-1.5zM442.7 239.1h1.5v2.8h-1.5zM445.0 239.1h1.5v2.8h-1.5zM442.7 285.9h1.5v2.8h-1.5zM445.0 285.9h1.5v2.8h-1.5zM442.7 445.2h1.5v2.8h-1.5zM445.0 445.2h1.5v2.8h-1.5zM452.0 61.2h1.5v2.8h-1.5zM454.3 61.2h1.5v2.8h-1.5zM452.0 220.4h1.5v2.8h-1.5zM454.3 220.4h1.5v2.8h-1.5zM452.0 314.0h1.5v2.8h-1.5zM454.3 314.0h1.5v2.8h-1.5zM461.4 -4.4h1.5v2.8h-1.5zM463.7 -4.4h1.5v2.8h-1.5zM461.4 42.5h1.5v2.8h-1.5zM463.7 42.5h1.5v2.8h-1.5zM461.4 239.1h1.5v2.8h-1.5zM463.7 239.1h1.5v2.8h-1.5zM461.4 267.2h1.5v2.8h-1.5zM463.7 267.2h1.5v2.8h-1.5zM461.4 295.3h1.5v2.8h-1.5zM463.7 295.3h1.5v2.8h-1.5z"/><path fill="#f7f4f2" d="M2.5 145.5h1.5v2.8h-1.5zM4.8 145.5h1.5v2.8h-1.5zM11.9 98.7h1.5v2.8h-1.5zM14.2 98.7h1.5v2.8h-1.5zM21.2 -4.4h1.5v2.8h-1.5zM23.5 -4.4h1.5v2.8h-1.5zM21.2 79.9h1.5v2.8h-1.5zM23.5 79.9h1.5v2.8h-1.5zM21.2 295.3h1.5v2.8h-1.5zM23.5 295.3h1.5v2.8h-1.5zM30.6 351.5h1.5v2.8h-1.5zM32.9 351.5h1.5v2.8h-1.5zM49.3 145.5h1.5v2.8h-1.5zM51.6 145.5h1.5v2.8h-1.5zM58.7 108.0h1.5v2.8h-1.5zM61.0 108.0h1.5v2.8h-1.5zM77.4 323.4h1.5v2.8h-1.5zM79.7 323.4h1.5v2.8h-1.5zM86.8 23.7h1.5v2.8h-1.5zM89.1 23.7h1.5v2.8h-1.5zM86.8 33.1h1.5v2.8h-1.5zM89.1 33.1h1.5v2.8h-1.5zM86.8 248.5h1.5v2.8h-1.5zM89.1 248.5h1.5v2.8h-1.5zM96.1 360.9h1.5v2.8h-1.5zM98.4 360.9h1.5v2.8h-1.5zM114.9 42.5h1.5v2.8h-1.5zM117.2 42.5h1.5v2.8h-1.5zM114.9 182.9h1.5v2.8h-1.5zM117.2 182.9h1.5v2.8h-1.5zM124.2 14.4h1.5v2.8h-1.5zM126.5 14.4h1.5v2.8h-1.5zM133.6 454.5h1.5v2.8h-1.5zM135.9 454.5h1.5v2.8h-1.5zM143.0 201.7h1.5v2.8h-1.5zM145.3 201.7h1.5v2.8h-1.5zM143.0 426.4h1.5v2.8h-1.5zM145.3 426.4h1.5v2.8h-1.5zM152.3 351.5h1.5v2.8h-1.5zM154.6 351.5h1.5v2.8h-1.5zM152.3 360.9h1.5v2.8h-1.5zM154.6 360.9h1.5v2.8h-1.5zM152.3 417.1h1.5v2.8h-1.5zM154.6 417.1h1.5v2.8h-1.5zM161.7 360.9h1.5v2.8h-1.5zM164.0 360.9h1.5v2.8h-1.5zM171.1 61.2h1.5v2.8h-1.5zM173.4 61.2h1.5v2.8h-1.5zM171.1 276.6h1.5v2.8h-1.5zM173.4 276.6h1.5v2.8h-1.5zM171.1 295.3h1.5v2.8h-1.5zM173.4 295.3h1.5v2.8h-1.5zM171.1 379.6h1.5v2.8h-1.5zM173.4 379.6h1.5v2.8h-1.5zM189.8 51.8h1.5v2.8h-1.5zM192.1 51.8h1.5v2.8h-1.5zM189.8 257.9h1.5v2.8h-1.5zM192.1 257.9h1.5v2.8h-1.5zM189.8 389.0h1.5v2.8h-1.5zM192.1 389.0h1.5v2.8h-1.5zM189.8 407.7h1.5v2.8h-1.5zM192.1 407.7h1.5v2.8h-1.5zM199.2 229.8h1.5v2.8h-1.5zM201.5 229.8h1.5v2.8h-1.5zM208.5 304.7h1.5v2.8h-1.5zM210.8 304.7h1.5v2.8h-1.5zM208.5 454.5h1.5v2.8h-1.5zM210.8 454.5h1.5v2.8h-1.5zM217.9 285.9h1.5v2.8h-1.5zM220.2 285.9h1.5v2.8h-1.5zM227.3 145.5h1.5v2.8h-1.5zM229.6 145.5h1.5v2.8h-1.5zM236.6 304.7h1.5v2.8h-1.5zM238.9 304.7h1.5v2.8h-1.5zM236.6 473.2h1.5v2.8h-1.5zM238.9 473.2h1.5v2.8h-1.5zM246.0 33.1h1.5v2.8h-1.5zM248.3 33.1h1.5v2.8h-1.5zM246.0 70.6h1.5v2.8h-1.5zM248.3 70.6h1.5v2.8h-1.5zM264.7 108.0h1.5v2.8h-1.5zM267.0 108.0h1.5v2.8h-1.5zM264.7 454.5h1.5v2.8h-1.5zM267.0 454.5h1.5v2.8h-1.5zM274.1 61.2h1.5v2.8h-1.5zM276.4 61.2h1.5v2.8h-1.5zM274.1 398.3h1.5v2.8h-1.5zM276.4 398.3h1.5v2.8h-1.5zM274.1 435.8h1.5v2.8h-1.5zM276.4 435.8h1.5v2.8h-1.5zM274.1 445.2h1.5v2.8h-1.5zM276.4 445.2h1.5v2.8h-1.5zM274.1 454.5h1.5v2.8h-1.5zM276.4 454.5h1.5v2.8h-1.5zM274.1 473.2h1.5v2.8h-1.5zM276.4 473.2h1.5v2.8h-1.5zM283.4 295.3h1.5v2.8h-1.5zM285.7 295.3h1.5v2.8h-1.5zM292.8 70.6h1.5v2.8h-1.5zM295.1 70.6h1.5v2.8h-1.5zM292.8 314.0h1.5v2.8h-1.5zM295.1 314.0h1.5v2.8h-1.5zM292.8 435.8h1.5v2.8h-1.5zM295.1 435.8h1.5v2.8h-1.5zM292.8 463.9h1.5v2.8h-1.5zM295.1 463.9h1.5v2.8h-1.5zM302.2 33.1h1.5v2.8h-1.5zM304.5 33.1h1.5v2.8h-1.5zM302.2 295.3h1.5v2.8h-1.5zM304.5 295.3h1.5v2.8h-1.5zM302.2 454.5h1.5v2.8h-1.5zM304.5 454.5h1.5v2.8h-1.5zM311.5 126.7h1.5v2.8h-1.5zM313.8 126.7h1.5v2.8h-1.5zM311.5 389.0h1.5v2.8h-1.5zM313.8 389.0h1.5v2.8h-1.5zM320.9 201.7h1.5v2.8h-1.5zM323.2 201.7h1.5v2.8h-1.5zM320.9 435.8h1.5v2.8h-1.5zM323.2 435.8h1.5v2.8h-1.5zM330.3 -4.4h1.5v2.8h-1.5zM332.6 -4.4h1.5v2.8h-1.5zM339.6 51.8h1.5v2.8h-1.5zM341.9 51.8h1.5v2.8h-1.5zM339.6 89.3h1.5v2.8h-1.5zM341.9 89.3h1.5v2.8h-1.5zM339.6 323.4h1.5v2.8h-1.5zM341.9 323.4h1.5v2.8h-1.5zM349.0 136.1h1.5v2.8h-1.5zM351.3 136.1h1.5v2.8h-1.5zM349.0 276.6h1.5v2.8h-1.5zM351.3 276.6h1.5v2.8h-1.5zM358.4 276.6h1.5v2.8h-1.5zM360.7 276.6h1.5v2.8h-1.5zM358.4 360.9h1.5v2.8h-1.5zM360.7 360.9h1.5v2.8h-1.5zM367.7 23.7h1.5v2.8h-1.5zM370.0 23.7h1.5v2.8h-1.5zM367.7 89.3h1.5v2.8h-1.5zM370.0 89.3h1.5v2.8h-1.5zM367.7 407.7h1.5v2.8h-1.5zM370.0 407.7h1.5v2.8h-1.5zM377.1 126.7h1.5v2.8h-1.5zM379.4 126.7h1.5v2.8h-1.5zM386.5 23.7h1.5v2.8h-1.5zM388.8 23.7h1.5v2.8h-1.5zM386.5 154.8h1.5v2.8h-1.5zM388.8 154.8h1.5v2.8h-1.5zM386.5 370.2h1.5v2.8h-1.5zM388.8 370.2h1.5v2.8h-1.5zM386.5 379.6h1.5v2.8h-1.5zM388.8 379.6h1.5v2.8h-1.5zM395.8 182.9h1.5v2.8h-1.5zM398.1 182.9h1.5v2.8h-1.5zM395.8 379.6h1.5v2.8h-1.5zM398.1 379.6h1.5v2.8h-1.5zM395.8 463.9h1.5v2.8h-1.5zM398.1 463.9h1.5v2.8h-1.5zM414.6 23.7h1.5v2.8h-1.5zM416.9 23.7h1.5v2.8h-1.5zM414.6 51.8h1.5v2.8h-1.5zM416.9 51.8h1.5v2.8h-1.5zM423.9 -4.4h1.5v2.8h-1.5zM426.2 -4.4h1.5v2.8h-1.5zM423.9 267.2h1.5v2.8h-1.5zM426.2 267.2h1.5v2.8h-1.5zM423.9 463.9h1.5v2.8h-1.5zM426.2 463.9h1.5v2.8h-1.5zM433.3 370.2h1.5v2.8h-1.5zM435.6 370.2h1.5v2.8h-1.5zM442.7 201.7h1.5v2.8h-1.5zM445.0 201.7h1.5v2.8h-1.5zM442.7 473.2h1.5v2.8h-1.5zM445.0 473.2h1.5v2.8h-1.5zM452.0 435.8h1.5v2.8h-1.5zM454.3 435.8h1.5v2.8h-1.5zM452.0 473.2h1.5v2.8h-1.5zM454.3 473.2h1.5v2.8h-1.5zM461.4 332.8h1.5v2.8h-1.5zM463.7 332.8h1.5v2.8h-1.5z"/><path fill="#eeeeed" d="M2.5 154.8h1.5v2.8h-1.5zM4.8 154.8h1.5v2.8h-1.5zM11.9 136.1h1.5v2.8h-1.5zM14.2 136.1h1.5v2.8h-1.5zM21.2 51.8h1.5v2.8h-1.5zM23.5 51.8h1.5v2.8h-1.5zM21.2 454.5h1.5v2.8h-1.5zM23.5 454.5h1.5v2.8h-1.5zM30.6 257.9h1.5v2.8h-1.5zM32.9 257.9h1.5v2.8h-1.5zM30.6 276.6h1.5v2.8h-1.5zM32.9 276.6h1.5v2.8h-1.5zM30.6 295.3h1.5v2.8h-1.5zM32.9 295.3h1.5v2.8h-1.5zM40.0 42.5h1.5v2.8h-1.5zM42.3 42.5h1.5v2.8h-1.5zM40.0 211.0h1.5v2.8h-1.5zM42.3 211.0h1.5v2.8h-1.5zM40.0 379.6h1.5v2.8h-1.5zM42.3 379.6h1.5v2.8h-1.5zM49.3 211.0h1.5v2.8h-1.5zM51.6 211.0h1.5v2.8h-1.5zM49.3 239.1h1.5v2.8h-1.5zM51.6 239.1h1.5v2.8h-1.5zM49.3 267.2h1.5v2.8h-1.5zM51.6 267.2h1.5v2.8h-1.5zM49.3 435.8h1.5v2.8h-1.5zM51.6 435.8h1.5v2.8h-1.5zM58.7 267.2h1.5v2.8h-1.5zM61.0 267.2h1.5v2.8h-1.5zM58.7 342.1h1.5v2.8h-1.5zM61.0 342.1h1.5v2.8h-1.5zM58.7 435.8h1.5v2.8h-1.5zM61.0 435.8h1.5v2.8h-1.5zM68.1 164.2h1.5v2.8h-1.5zM70.4 164.2h1.5v2.8h-1.5zM86.8 454.5h1.5v2.8h-1.5zM89.1 454.5h1.5v2.8h-1.5zM96.1 42.5h1.5v2.8h-1.5zM98.4 42.5h1.5v2.8h-1.5zM96.1 89.3h1.5v2.8h-1.5zM98.4 89.3h1.5v2.8h-1.5zM96.1 295.3h1.5v2.8h-1.5zM98.4 295.3h1.5v2.8h-1.5zM96.1 435.8h1.5v2.8h-1.5zM98.4 435.8h1.5v2.8h-1.5zM105.5 5.0h1.5v2.8h-1.5zM107.8 5.0h1.5v2.8h-1.5zM105.5 42.5h1.5v2.8h-1.5zM107.8 42.5h1.5v2.8h-1.5zM105.5 51.8h1.5v2.8h-1.5zM107.8 51.8h1.5v2.8h-1.5zM105.5 145.5h1.5v2.8h-1.5zM107.8 145.5h1.5v2.8h-1.5zM114.9 108.0h1.5v2.8h-1.5zM117.2 108.0h1.5v2.8h-1.5zM114.9 211.0h1.5v2.8h-1.5zM117.2 211.0h1.5v2.8h-1.5zM114.9 295.3h1.5v2.8h-1.5zM117.2 295.3h1.5v2.8h-1.5zM114.9 379.6h1.5v2.8h-1.5zM117.2 379.6h1.5v2.8h-1.5zM124.2 192.3h1.5v2.8h-1.5zM126.5 192.3h1.5v2.8h-1.5zM124.2 360.9h1.5v2.8h-1.5zM126.5 360.9h1.5v2.8h-1.5zM124.2 417.1h1.5v2.8h-1.5zM126.5 417.1h1.5v2.8h-1.5zM133.6 51.8h1.5v2.8h-1.5zM135.9 51.8h1.5v2.8h-1.5zM133.6 79.9h1.5v2.8h-1.5zM135.9 79.9h1.5v2.8h-1.5zM133.6 182.9h1.5v2.8h-1.5zM135.9 182.9h1.5v2.8h-1.5zM133.6 285.9h1.5v2.8h-1.5zM135.9 285.9h1.5v2.8h-1.5zM133.6 389.0h1.5v2.8h-1.5zM135.9 389.0h1.5v2.8h-1.5zM143.0 33.1h1.5v2.8h-1.5zM145.3 33.1h1.5v2.8h-1.5zM143.0 51.8h1.5v2.8h-1.5zM145.3 51.8h1.5v2.8h-1.5zM143.0 98.7h1.5v2.8h-1.5zM145.3 98.7h1.5v2.8h-1.5zM143.0 145.5h1.5v2.8h-1.5zM145.3 145.5h1.5v2.8h-1.5zM152.3 211.0h1.5v2.8h-1.5zM154.6 211.0h1.5v2.8h-1.5zM152.3 276.6h1.5v2.8h-1.5zM154.6 276.6h1.5v2.8h-1.5zM152.3 332.8h1.5v2.8h-1.5zM154.6 332.8h1.5v2.8h-1.5zM161.7 136.1h1.5v2.8h-1.5zM164.0 136.1h1.5v2.8h-1.5zM161.7 417.1h1.5v2.8h-1.5zM164.0 417.1h1.5v2.8h-1.5zM171.1 -4.4h1.5v2.8h-1.5zM173.4 -4.4h1.5v2.8h-1.5zM171.1 33.1h1.5v2.8h-1.5zM173.4 33.1h1.5v2.8h-1.5zM180.4 108.0h1.5v2.8h-1.5zM182.7 108.0h1.5v2.8h-1.5zM180.4 201.7h1.5v2.8h-1.5zM182.7 201.7h1.5v2.8h-1.5zM180.4 229.8h1.5v2.8h-1.5zM182.7 229.8h1.5v2.8h-1.5zM180.4 323.4h1.5v2.8h-1.5zM182.7 323.4h1.5v2.8h-1.5zM180.4 398.3h1.5v2.8h-1.5zM182.7 398.3h1.5v2.8h-1.5zM189.8 435.8h1.5v2.8h-1.5zM192.1 435.8h1.5v2.8h-1.5zM199.2 89.3h1.5v2.8h-1.5zM201.5 89.3h1.5v2.8h-1.5zM199.2 201.7h1.5v2.8h-1.5zM201.5 201.7h1.5v2.8h-1.5zM208.5 117.4h1.5v2.8h-1.5zM210.8 117.4h1.5v2.8h-1.5zM208.5 360.9h1.5v2.8h-1.5zM210.8 360.9h1.5v2.8h-1.5zM217.9 33.1h1.5v2.8h-1.5zM220.2 33.1h1.5v2.8h-1.5zM217.9 42.5h1.5v2.8h-1.5zM220.2 42.5h1.5v2.8h-1.5zM227.3 42.5h1.5v2.8h-1.5zM229.6 42.5h1.5v2.8h-1.5zM246.0 98.7h1.5v2.8h-1.5zM248.3 98.7h1.5v2.8h-1.5zM246.0 201.7h1.5v2.8h-1.5zM248.3 201.7h1.5v2.8h-1.5zM246.0 304.7h1.5v2.8h-1.5zM248.3 304.7h1.5v2.8h-1.5zM255.4 -4.4h1.5v2.8h-1.5zM257.7 -4.4h1.5v2.8h-1.5zM255.4 370.2h1.5v2.8h-1.5zM257.7 370.2h1.5v2.8h-1.5zM255.4 473.2h1.5v2.8h-1.5zM257.7 473.2h1.5v2.8h-1.5zM264.7 473.2h1.5v2.8h-1.5zM267.0 473.2h1.5v2.8h-1.5zM274.1 389.0h1.5v2.8h-1.5zM276.4 389.0h1.5v2.8h-1.5zM283.4 79.9h1.5v2.8h-1.5zM285.7 79.9h1.5v2.8h-1.5zM283.4 192.3h1.5v2.8h-1.5zM285.7 192.3h1.5v2.8h-1.5zM283.4 257.9h1.5v2.8h-1.5zM285.7 257.9h1.5v2.8h-1.5zM283.4 304.7h1.5v2.8h-1.5zM285.7 304.7h1.5v2.8h-1.5zM292.8 98.7h1.5v2.8h-1.5zM295.1 98.7h1.5v2.8h-1.5zM292.8 351.5h1.5v2.8h-1.5zM295.1 351.5h1.5v2.8h-1.5zM302.2 211.0h1.5v2.8h-1.5zM304.5 211.0h1.5v2.8h-1.5zM302.2 276.6h1.5v2.8h-1.5zM304.5 276.6h1.5v2.8h-1.5zM311.5 239.1h1.5v2.8h-1.5zM313.8 239.1h1.5v2.8h-1.5zM311.5 360.9h1.5v2.8h-1.5zM313.8 360.9h1.5v2.8h-1.5zM311.5 454.5h1.5v2.8h-1.5zM313.8 454.5h1.5v2.8h-1.5zM320.9 173.6h1.5v2.8h-1.5zM323.2 173.6h1.5v2.8h-1.5zM320.9 342.1h1.5v2.8h-1.5zM323.2 342.1h1.5v2.8h-1.5zM320.9 360.9h1.5v2.8h-1.5zM323.2 360.9h1.5v2.8h-1.5zM320.9 417.1h1.5v2.8h-1.5zM323.2 417.1h1.5v2.8h-1.5zM330.3 285.9h1.5v2.8h-1.5zM332.6 285.9h1.5v2.8h-1.5zM339.6 463.9h1.5v2.8h-1.5zM341.9 463.9h1.5v2.8h-1.5zM349.0 342.1h1.5v2.8h-1.5zM351.3 342.1h1.5v2.8h-1.5zM349.0 398.3h1.5v2.8h-1.5zM351.3 398.3h1.5v2.8h-1.5zM358.4 42.5h1.5v2.8h-1.5zM360.7 42.5h1.5v2.8h-1.5zM358.4 164.2h1.5v2.8h-1.5zM360.7 164.2h1.5v2.8h-1.5zM358.4 267.2h1.5v2.8h-1.5zM360.7 267.2h1.5v2.8h-1.5zM358.4 314.0h1.5v2.8h-1.5zM360.7 314.0h1.5v2.8h-1.5zM358.4 370.2h1.5v2.8h-1.5zM360.7 370.2h1.5v2.8h-1.5zM377.1 14.4h1.5v2.8h-1.5zM379.4 14.4h1.5v2.8h-1.5zM377.1 314.0h1.5v2.8h-1.5zM379.4 314.0h1.5v2.8h-1.5zM377.1 426.4h1.5v2.8h-1.5zM379.4 426.4h1.5v2.8h-1.5zM386.5 42.5h1.5v2.8h-1.5zM388.8 42.5h1.5v2.8h-1.5zM395.8 407.7h1.5v2.8h-1.5zM398.1 407.7h1.5v2.8h-1.5zM405.2 5.0h1.5v2.8h-1.5zM407.5 5.0h1.5v2.8h-1.5zM405.2 435.8h1.5v2.8h-1.5zM407.5 435.8h1.5v2.8h-1.5zM423.9 323.4h1.5v2.8h-1.5zM426.2 323.4h1.5v2.8h-1.5zM423.9 407.7h1.5v2.8h-1.5zM426.2 407.7h1.5v2.8h-1.5zM423.9 426.4h1.5v2.8h-1.5zM426.2 426.4h1.5v2.8h-1.5zM433.3 33.1h1.5v2.8h-1.5zM435.6 33.1h1.5v2.8h-1.5zM433.3 257.9h1.5v2.8h-1.5zM435.6 257.9h1.5v2.8h-1.5zM442.7 182.9h1.5v2.8h-1.5zM445.0 182.9h1.5v2.8h-1.5zM442.7 211.0h1.5v2.8h-1.5zM445.0 211.0h1.5v2.8h-1.5zM442.7 323.4h1.5v2.8h-1.5zM445.0 323.4h1.5v2.8h-1.5zM452.0 23.7h1.5v2.8h-1.5zM454.3 23.7h1.5v2.8h-1.5zM461.4 14.4h1.5v2.8h-1.5zM463.7 14.4h1.5v2.8h-1.5z"/><path fill="#efedeb" d="M2.5 164.2h1.5v2.8h-1.5zM4.8 164.2h1.5v2.8h-1.5zM2.5 267.2h1.5v2.8h-1.5zM4.8 267.2h1.5v2.8h-1.5zM2.5 295.3h1.5v2.8h-1.5zM4.8 295.3h1.5v2.8h-1.5zM2.5 360.9h1.5v2.8h-1.5zM4.8 360.9h1.5v2.8h-1.5zM2.5 417.1h1.5v2.8h-1.5zM4.8 417.1h1.5v2.8h-1.5zM11.9 61.2h1.5v2.8h-1.5zM14.2 61.2h1.5v2.8h-1.5zM11.9 108.0h1.5v2.8h-1.5zM14.2 108.0h1.5v2.8h-1.5zM11.9 351.5h1.5v2.8h-1.5zM14.2 351.5h1.5v2.8h-1.5zM21.2 42.5h1.5v2.8h-1.5zM23.5 42.5h1.5v2.8h-1.5zM40.0 154.8h1.5v2.8h-1.5zM42.3 154.8h1.5v2.8h-1.5zM40.0 285.9h1.5v2.8h-1.5zM42.3 285.9h1.5v2.8h-1.5zM40.0 351.5h1.5v2.8h-1.5zM42.3 351.5h1.5v2.8h-1.5zM49.3 5.0h1.5v2.8h-1.5zM51.6 5.0h1.5v2.8h-1.5zM49.3 33.1h1.5v2.8h-1.5zM51.6 33.1h1.5v2.8h-1.5zM49.3 61.2h1.5v2.8h-1.5zM51.6 61.2h1.5v2.8h-1.5zM49.3 108.0h1.5v2.8h-1.5zM51.6 108.0h1.5v2.8h-1.5zM49.3 257.9h1.5v2.8h-1.5zM51.6 257.9h1.5v2.8h-1.5zM58.7 70.6h1.5v2.8h-1.5zM61.0 70.6h1.5v2.8h-1.5zM58.7 276.6h1.5v2.8h-1.5zM61.0 276.6h1.5v2.8h-1.5zM58.7 426.4h1.5v2.8h-1.5zM61.0 426.4h1.5v2.8h-1.5zM68.1 136.1h1.5v2.8h-1.5zM70.4 136.1h1.5v2.8h-1.5zM77.4 5.0h1.5v2.8h-1.5zM79.7 5.0h1.5v2.8h-1.5zM77.4 182.9h1.5v2.8h-1.5zM79.7 182.9h1.5v2.8h-1.5zM77.4 407.7h1.5v2.8h-1.5zM79.7 407.7h1.5v2.8h-1.5zM86.8 14.4h1.5v2.8h-1.5zM89.1 14.4h1.5v2.8h-1.5zM86.8 314.0h1.5v2.8h-1.5zM89.1 314.0h1.5v2.8h-1.5zM96.1 61.2h1.5v2.8h-1.5zM98.4 61.2h1.5v2.8h-1.5zM105.5 61.2h1.5v2.8h-1.5zM107.8 61.2h1.5v2.8h-1.5zM105.5 239.1h1.5v2.8h-1.5zM107.8 239.1h1.5v2.8h-1.5zM105.5 407.7h1.5v2.8h-1.5zM107.8 407.7h1.5v2.8h-1.5zM114.9 342.1h1.5v2.8h-1.5zM117.2 342.1h1.5v2.8h-1.5zM114.9 473.2h1.5v2.8h-1.5zM117.2 473.2h1.5v2.8h-1.5zM143.0 304.7h1.5v2.8h-1.5zM145.3 304.7h1.5v2.8h-1.5zM152.3 14.4h1.5v2.8h-1.5zM154.6 14.4h1.5v2.8h-1.5zM152.3 89.3h1.5v2.8h-1.5zM154.6 89.3h1.5v2.8h-1.5zM152.3 267.2h1.5v2.8h-1.5zM154.6 267.2h1.5v2.8h-1.5zM161.7 23.7h1.5v2.8h-1.5zM164.0 23.7h1.5v2.8h-1.5zM161.7 61.2h1.5v2.8h-1.5zM164.0 61.2h1.5v2.8h-1.5zM161.7 154.8h1.5v2.8h-1.5zM164.0 154.8h1.5v2.8h-1.5zM161.7 323.4h1.5v2.8h-1.5zM164.0 323.4h1.5v2.8h-1.5zM171.1 229.8h1.5v2.8h-1.5zM173.4 229.8h1.5v2.8h-1.5zM171.1 285.9h1.5v2.8h-1.5zM173.4 285.9h1.5v2.8h-1.5zM171.1 323.4h1.5v2.8h-1.5zM173.4 323.4h1.5v2.8h-1.5zM189.8 5.0h1.5v2.8h-1.5zM192.1 5.0h1.5v2.8h-1.5zM189.8 14.4h1.5v2.8h-1.5zM192.1 14.4h1.5v2.8h-1.5zM189.8 98.7h1.5v2.8h-1.5zM192.1 98.7h1.5v2.8h-1.5zM189.8 201.7h1.5v2.8h-1.5zM192.1 201.7h1.5v2.8h-1.5zM189.8 379.6h1.5v2.8h-1.5zM192.1 379.6h1.5v2.8h-1.5zM199.2 51.8h1.5v2.8h-1.5zM201.5 51.8h1.5v2.8h-1.5zM199.2 192.3h1.5v2.8h-1.5zM201.5 192.3h1.5v2.8h-1.5zM208.5 -4.4h1.5v2.8h-1.5zM210.8 -4.4h1.5v2.8h-1.5zM208.5 276.6h1.5v2.8h-1.5zM210.8 276.6h1.5v2.8h-1.5zM227.3 417.1h1.5v2.8h-1.5zM229.6 417.1h1.5v2.8h-1.5zM236.6 351.5h1.5v2.8h-1.5zM238.9 351.5h1.5v2.8h-1.5zM246.0 229.8h1.5v2.8h-1.5zM248.3 229.8h1.5v2.8h-1.5zM255.4 98.7h1.5v2.8h-1.5zM257.7 98.7h1.5v2.8h-1.5zM255.4 182.9h1.5v2.8h-1.5zM257.7 182.9h1.5v2.8h-1.5zM264.7 220.4h1.5v2.8h-1.5zM267.0 220.4h1.5v2.8h-1.5zM264.7 360.9h1.5v2.8h-1.5zM267.0 360.9h1.5v2.8h-1.5zM274.1 154.8h1.5v2.8h-1.5zM276.4 154.8h1.5v2.8h-1.5zM274.1 285.9h1.5v2.8h-1.5zM276.4 285.9h1.5v2.8h-1.5zM274.1 342.1h1.5v2.8h-1.5zM276.4 342.1h1.5v2.8h-1.5zM283.4 126.7h1.5v2.8h-1.5zM285.7 126.7h1.5v2.8h-1.5zM283.4 211.0h1.5v2.8h-1.5zM285.7 211.0h1.5v2.8h-1.5zM283.4 248.5h1.5v2.8h-1.5zM285.7 248.5h1.5v2.8h-1.5zM292.8 248.5h1.5v2.8h-1.5zM295.1 248.5h1.5v2.8h-1.5zM292.8 370.2h1.5v2.8h-1.5zM295.1 370.2h1.5v2.8h-1.5zM302.2 98.7h1.5v2.8h-1.5zM304.5 98.7h1.5v2.8h-1.5zM302.2 164.2h1.5v2.8h-1.5zM304.5 164.2h1.5v2.8h-1.5zM302.2 239.1h1.5v2.8h-1.5zM304.5 239.1h1.5v2.8h-1.5zM302.2 407.7h1.5v2.8h-1.5zM304.5 407.7h1.5v2.8h-1.5zM311.5 23.7h1.5v2.8h-1.5zM313.8 23.7h1.5v2.8h-1.5zM311.5 201.7h1.5v2.8h-1.5zM313.8 201.7h1.5v2.8h-1.5zM311.5 332.8h1.5v2.8h-1.5zM313.8 332.8h1.5v2.8h-1.5zM311.5 435.8h1.5v2.8h-1.5zM313.8 435.8h1.5v2.8h-1.5zM330.3 42.5h1.5v2.8h-1.5zM332.6 42.5h1.5v2.8h-1.5zM330.3 463.9h1.5v2.8h-1.5zM332.6 463.9h1.5v2.8h-1.5zM339.6 117.4h1.5v2.8h-1.5zM341.9 117.4h1.5v2.8h-1.5zM349.0 145.5h1.5v2.8h-1.5zM351.3 145.5h1.5v2.8h-1.5zM349.0 304.7h1.5v2.8h-1.5zM351.3 304.7h1.5v2.8h-1.5zM367.7 5.0h1.5v2.8h-1.5zM370.0 5.0h1.5v2.8h-1.5zM367.7 33.1h1.5v2.8h-1.5zM370.0 33.1h1.5v2.8h-1.5zM367.7 79.9h1.5v2.8h-1.5zM370.0 79.9h1.5v2.8h-1.5zM367.7 154.8h1.5v2.8h-1.5zM370.0 154.8h1.5v2.8h-1.5zM367.7 201.7h1.5v2.8h-1.5zM370.0 201.7h1.5v2.8h-1.5zM377.1 61.2h1.5v2.8h-1.5zM379.4 61.2h1.5v2.8h-1.5zM377.1 89.3h1.5v2.8h-1.5zM379.4 89.3h1.5v2.8h-1.5zM377.1 192.3h1.5v2.8h-1.5zM379.4 192.3h1.5v2.8h-1.5zM377.1 285.9h1.5v2.8h-1.5zM379.4 285.9h1.5v2.8h-1.5zM377.1 295.3h1.5v2.8h-1.5zM379.4 295.3h1.5v2.8h-1.5zM377.1 407.7h1.5v2.8h-1.5zM379.4 407.7h1.5v2.8h-1.5zM386.5 98.7h1.5v2.8h-1.5zM388.8 98.7h1.5v2.8h-1.5zM386.5 108.0h1.5v2.8h-1.5zM388.8 108.0h1.5v2.8h-1.5zM395.8 5.0h1.5v2.8h-1.5zM398.1 5.0h1.5v2.8h-1.5zM395.8 42.5h1.5v2.8h-1.5zM398.1 42.5h1.5v2.8h-1.5zM395.8 89.3h1.5v2.8h-1.5zM398.1 89.3h1.5v2.8h-1.5zM395.8 295.3h1.5v2.8h-1.5zM398.1 295.3h1.5v2.8h-1.5zM395.8 351.5h1.5v2.8h-1.5zM398.1 351.5h1.5v2.8h-1.5zM405.2 145.5h1.5v2.8h-1.5zM407.5 145.5h1.5v2.8h-1.5zM414.6 145.5h1.5v2.8h-1.5zM416.9 145.5h1.5v2.8h-1.5zM414.6 229.8h1.5v2.8h-1.5zM416.9 229.8h1.5v2.8h-1.5zM423.9 154.8h1.5v2.8h-1.5zM426.2 154.8h1.5v2.8h-1.5zM433.3 98.7h1.5v2.8h-1.5zM435.6 98.7h1.5v2.8h-1.5zM433.3 126.7h1.5v2.8h-1.5zM435.6 126.7h1.5v2.8h-1.5zM433.3 304.7h1.5v2.8h-1.5zM435.6 304.7h1.5v2.8h-1.5zM433.3 332.8h1.5v2.8h-1.5zM435.6 332.8h1.5v2.8h-1.5zM442.7 117.4h1.5v2.8h-1.5zM445.0 117.4h1.5v2.8h-1.5zM442.7 417.1h1.5v2.8h-1.5zM445.0 417.1h1.5v2.8h-1.5zM442.7 463.9h1.5v2.8h-1.5zM445.0 463.9h1.5v2.8h-1.5zM452.0 70.6h1.5v2.8h-1.5zM454.3 70.6h1.5v2.8h-1.5zM452.0 332.8h1.5v2.8h-1.5zM454.3 332.8h1.5v2.8h-1.5zM461.4 5.0h1.5v2.8h-1.5zM463.7 5.0h1.5v2.8h-1.5zM461.4 136.1h1.5v2.8h-1.5zM463.7 136.1h1.5v2.8h-1.5zM461.4 164.2h1.5v2.8h-1.5zM463.7 164.2h1.5v2.8h-1.5zM461.4 211.0h1.5v2.8h-1.5zM463.7 211.0h1.5v2.8h-1.5zM461.4 285.9h1.5v2.8h-1.5zM463.7 285.9h1.5v2.8h-1.5zM461.4 304.7h1.5v2.8h-1.5zM463.7 304.7h1.5v2.8h-1.5zM461.4 389.0h1.5v2.8h-1.5zM463.7 389.0h1.5v2.8h-1.5z"/><path fill="#f8f7f6" d="M2.5 182.9h1.5v2.8h-1.5zM4.8 182.9h1.5v2.8h-1.5zM2.5 463.9h1.5v2.8h-1.5zM4.8 463.9h1.5v2.8h-1.5zM11.9 192.3h1.5v2.8h-1.5zM14.2 192.3h1.5v2.8h-1.5zM11.9 426.4h1.5v2.8h-1.5zM14.2 426.4h1.5v2.8h-1.5zM21.2 360.9h1.5v2.8h-1.5zM23.5 360.9h1.5v2.8h-1.5zM30.6 23.7h1.5v2.8h-1.5zM32.9 23.7h1.5v2.8h-1.5zM30.6 136.1h1.5v2.8h-1.5zM32.9 136.1h1.5v2.8h-1.5zM30.6 285.9h1.5v2.8h-1.5zM32.9 285.9h1.5v2.8h-1.5zM40.0 14.4h1.5v2.8h-1.5zM42.3 14.4h1.5v2.8h-1.5zM40.0 126.7h1.5v2.8h-1.5zM42.3 126.7h1.5v2.8h-1.5zM40.0 182.9h1.5v2.8h-1.5zM42.3 182.9h1.5v2.8h-1.5zM49.3 417.1h1.5v2.8h-1.5zM51.6 417.1h1.5v2.8h-1.5zM49.3 463.9h1.5v2.8h-1.5zM51.6 463.9h1.5v2.8h-1.5zM58.7 136.1h1.5v2.8h-1.5zM61.0 136.1h1.5v2.8h-1.5zM58.7 154.8h1.5v2.8h-1.5zM61.0 154.8h1.5v2.8h-1.5zM68.1 248.5h1.5v2.8h-1.5zM70.4 248.5h1.5v2.8h-1.5zM68.1 473.2h1.5v2.8h-1.5zM70.4 473.2h1.5v2.8h-1.5zM77.4 -4.4h1.5v2.8h-1.5zM79.7 -4.4h1.5v2.8h-1.5zM77.4 23.7h1.5v2.8h-1.5zM79.7 23.7h1.5v2.8h-1.5zM77.4 257.9h1.5v2.8h-1.5zM79.7 257.9h1.5v2.8h-1.5zM86.8 192.3h1.5v2.8h-1.5zM89.1 192.3h1.5v2.8h-1.5zM86.8 445.2h1.5v2.8h-1.5zM89.1 445.2h1.5v2.8h-1.5zM96.1 5.0h1.5v2.8h-1.5zM98.4 5.0h1.5v2.8h-1.5zM96.1 351.5h1.5v2.8h-1.5zM98.4 351.5h1.5v2.8h-1.5zM105.5 201.7h1.5v2.8h-1.5zM107.8 201.7h1.5v2.8h-1.5zM105.5 323.4h1.5v2.8h-1.5zM107.8 323.4h1.5v2.8h-1.5zM114.9 14.4h1.5v2.8h-1.5zM117.2 14.4h1.5v2.8h-1.5zM114.9 239.1h1.5v2.8h-1.5zM117.2 239.1h1.5v2.8h-1.5zM124.2 51.8h1.5v2.8h-1.5zM126.5 51.8h1.5v2.8h-1.5zM124.2 108.0h1.5v2.8h-1.5zM126.5 108.0h1.5v2.8h-1.5zM124.2 295.3h1.5v2.8h-1.5zM126.5 295.3h1.5v2.8h-1.5zM124.2 454.5h1.5v2.8h-1.5zM126.5 454.5h1.5v2.8h-1.5zM133.6 42.5h1.5v2.8h-1.5zM135.9 42.5h1.5v2.8h-1.5zM133.6 201.7h1.5v2.8h-1.5zM135.9 201.7h1.5v2.8h-1.5zM133.6 445.2h1.5v2.8h-1.5zM135.9 445.2h1.5v2.8h-1.5zM143.0 89.3h1.5v2.8h-1.5zM145.3 89.3h1.5v2.8h-1.5zM143.0 323.4h1.5v2.8h-1.5zM145.3 323.4h1.5v2.8h-1.5zM143.0 342.1h1.5v2.8h-1.5zM145.3 342.1h1.5v2.8h-1.5zM152.3 117.4h1.5v2.8h-1.5zM154.6 117.4h1.5v2.8h-1.5zM152.3 164.2h1.5v2.8h-1.5zM154.6 164.2h1.5v2.8h-1.5zM152.3 257.9h1.5v2.8h-1.5zM154.6 257.9h1.5v2.8h-1.5zM161.7 192.3h1.5v2.8h-1.5zM164.0 192.3h1.5v2.8h-1.5zM161.7 454.5h1.5v2.8h-1.5zM164.0 454.5h1.5v2.8h-1.5zM171.1 5.0h1.5v2.8h-1.5zM173.4 5.0h1.5v2.8h-1.5zM180.4 136.1h1.5v2.8h-1.5zM182.7 136.1h1.5v2.8h-1.5zM180.4 173.6h1.5v2.8h-1.5zM182.7 173.6h1.5v2.8h-1.5zM180.4 192.3h1.5v2.8h-1.5zM182.7 192.3h1.5v2.8h-1.5zM189.8 42.5h1.5v2.8h-1.5zM192.1 42.5h1.5v2.8h-1.5zM189.8 89.3h1.5v2.8h-1.5zM192.1 89.3h1.5v2.8h-1.5zM189.8 192.3h1.5v2.8h-1.5zM192.1 192.3h1.5v2.8h-1.5zM208.5 51.8h1.5v2.8h-1.5zM210.8 51.8h1.5v2.8h-1.5zM208.5 211.0h1.5v2.8h-1.5zM210.8 211.0h1.5v2.8h-1.5zM217.9 257.9h1.5v2.8h-1.5zM220.2 257.9h1.5v2.8h-1.5zM217.9 435.8h1.5v2.8h-1.5zM220.2 435.8h1.5v2.8h-1.5zM236.6 89.3h1.5v2.8h-1.5zM238.9 89.3h1.5v2.8h-1.5zM236.6 117.4h1.5v2.8h-1.5zM238.9 117.4h1.5v2.8h-1.5zM236.6 145.5h1.5v2.8h-1.5zM238.9 145.5h1.5v2.8h-1.5zM246.0 154.8h1.5v2.8h-1.5zM248.3 154.8h1.5v2.8h-1.5zM246.0 360.9h1.5v2.8h-1.5zM248.3 360.9h1.5v2.8h-1.5zM255.4 117.4h1.5v2.8h-1.5zM257.7 117.4h1.5v2.8h-1.5zM264.7 407.7h1.5v2.8h-1.5zM267.0 407.7h1.5v2.8h-1.5zM274.1 5.0h1.5v2.8h-1.5zM276.4 5.0h1.5v2.8h-1.5zM274.1 229.8h1.5v2.8h-1.5zM276.4 229.8h1.5v2.8h-1.5zM283.4 314.0h1.5v2.8h-1.5zM285.7 314.0h1.5v2.8h-1.5zM283.4 417.1h1.5v2.8h-1.5zM285.7 417.1h1.5v2.8h-1.5zM292.8 117.4h1.5v2.8h-1.5zM295.1 117.4h1.5v2.8h-1.5zM292.8 398.3h1.5v2.8h-1.5zM295.1 398.3h1.5v2.8h-1.5zM292.8 445.2h1.5v2.8h-1.5zM295.1 445.2h1.5v2.8h-1.5zM311.5 70.6h1.5v2.8h-1.5zM313.8 70.6h1.5v2.8h-1.5zM311.5 173.6h1.5v2.8h-1.5zM313.8 173.6h1.5v2.8h-1.5zM311.5 267.2h1.5v2.8h-1.5zM313.8 267.2h1.5v2.8h-1.5zM311.5 417.1h1.5v2.8h-1.5zM313.8 417.1h1.5v2.8h-1.5zM320.9 14.4h1.5v2.8h-1.5zM323.2 14.4h1.5v2.8h-1.5zM320.9 23.7h1.5v2.8h-1.5zM323.2 23.7h1.5v2.8h-1.5zM320.9 136.1h1.5v2.8h-1.5zM323.2 136.1h1.5v2.8h-1.5zM330.3 173.6h1.5v2.8h-1.5zM332.6 173.6h1.5v2.8h-1.5zM330.3 267.2h1.5v2.8h-1.5zM332.6 267.2h1.5v2.8h-1.5zM330.3 276.6h1.5v2.8h-1.5zM332.6 276.6h1.5v2.8h-1.5zM330.3 351.5h1.5v2.8h-1.5zM332.6 351.5h1.5v2.8h-1.5zM349.0 33.1h1.5v2.8h-1.5zM351.3 33.1h1.5v2.8h-1.5zM349.0 454.5h1.5v2.8h-1.5zM351.3 454.5h1.5v2.8h-1.5zM358.4 33.1h1.5v2.8h-1.5zM360.7 33.1h1.5v2.8h-1.5zM358.4 145.5h1.5v2.8h-1.5zM360.7 145.5h1.5v2.8h-1.5zM367.7 229.8h1.5v2.8h-1.5zM370.0 229.8h1.5v2.8h-1.5zM367.7 351.5h1.5v2.8h-1.5zM370.0 351.5h1.5v2.8h-1.5zM377.1 79.9h1.5v2.8h-1.5zM379.4 79.9h1.5v2.8h-1.5zM377.1 351.5h1.5v2.8h-1.5zM379.4 351.5h1.5v2.8h-1.5zM377.1 454.5h1.5v2.8h-1.5zM379.4 454.5h1.5v2.8h-1.5zM386.5 126.7h1.5v2.8h-1.5zM388.8 126.7h1.5v2.8h-1.5zM386.5 164.2h1.5v2.8h-1.5zM388.8 164.2h1.5v2.8h-1.5zM386.5 220.4h1.5v2.8h-1.5zM388.8 220.4h1.5v2.8h-1.5zM386.5 285.9h1.5v2.8h-1.5zM388.8 285.9h1.5v2.8h-1.5zM386.5 398.3h1.5v2.8h-1.5zM388.8 398.3h1.5v2.8h-1.5zM395.8 79.9h1.5v2.8h-1.5zM398.1 79.9h1.5v2.8h-1.5zM395.8 360.9h1.5v2.8h-1.5zM398.1 360.9h1.5v2.8h-1.5zM395.8 473.2h1.5v2.8h-1.5zM398.1 473.2h1.5v2.8h-1.5zM405.2 126.7h1.5v2.8h-1.5zM407.5 126.7h1.5v2.8h-1.5zM405.2 417.1h1.5v2.8h-1.5zM407.5 417.1h1.5v2.8h-1.5zM433.3 108.0h1.5v2.8h-1.5zM435.6 108.0h1.5v2.8h-1.5zM442.7 70.6h1.5v2.8h-1.5zM445.0 70.6h1.5v2.8h-1.5zM442.7 108.0h1.5v2.8h-1.5zM445.0 108.0h1.5v2.8h-1.5zM452.0 117.4h1.5v2.8h-1.5zM454.3 117.4h1.5v2.8h-1.5zM452.0 389.0h1.5v2.8h-1.5zM454.3 389.0h1.5v2.8h-1.5zM452.0 417.1h1.5v2.8h-1.5zM454.3 417.1h1.5v2.8h-1.5zM452.0 426.4h1.5v2.8h-1.5zM454.3 426.4h1.5v2.8h-1.5zM461.4 426.4h1.5v2.8h-1.5zM463.7 426.4h1.5v2.8h-1.5z"/><path fill="#f0f6f5" d="M2.5 248.5h1.5v2.8h-1.5zM4.8 248.5h1.5v2.8h-1.5zM2.5 389.0h1.5v2.8h-1.5zM4.8 389.0h1.5v2.8h-1.5zM11.9 201.7h1.5v2.8h-1.5zM14.2 201.7h1.5v2.8h-1.5zM11.9 370.2h1.5v2.8h-1.5zM14.2 370.2h1.5v2.8h-1.5zM21.2 136.1h1.5v2.8h-1.5zM23.5 136.1h1.5v2.8h-1.5zM30.6 126.7h1.5v2.8h-1.5zM32.9 126.7h1.5v2.8h-1.5zM30.6 154.8h1.5v2.8h-1.5zM32.9 154.8h1.5v2.8h-1.5zM30.6 164.2h1.5v2.8h-1.5zM32.9 164.2h1.5v2.8h-1.5zM30.6 398.3h1.5v2.8h-1.5zM32.9 398.3h1.5v2.8h-1.5zM30.6 473.2h1.5v2.8h-1.5zM32.9 473.2h1.5v2.8h-1.5zM40.0 5.0h1.5v2.8h-1.5zM42.3 5.0h1.5v2.8h-1.5zM40.0 98.7h1.5v2.8h-1.5zM42.3 98.7h1.5v2.8h-1.5zM40.0 454.5h1.5v2.8h-1.5zM42.3 454.5h1.5v2.8h-1.5zM49.3 42.5h1.5v2.8h-1.5zM51.6 42.5h1.5v2.8h-1.5zM49.3 351.5h1.5v2.8h-1.5zM51.6 351.5h1.5v2.8h-1.5zM58.7 145.5h1.5v2.8h-1.5zM61.0 145.5h1.5v2.8h-1.5zM58.7 239.1h1.5v2.8h-1.5zM61.0 239.1h1.5v2.8h-1.5zM58.7 360.9h1.5v2.8h-1.5zM61.0 360.9h1.5v2.8h-1.5zM68.1 182.9h1.5v2.8h-1.5zM70.4 182.9h1.5v2.8h-1.5zM77.4 342.1h1.5v2.8h-1.5zM79.7 342.1h1.5v2.8h-1.5zM77.4 389.0h1.5v2.8h-1.5zM79.7 389.0h1.5v2.8h-1.5zM86.8 70.6h1.5v2.8h-1.5zM89.1 70.6h1.5v2.8h-1.5zM96.1 -4.4h1.5v2.8h-1.5zM98.4 -4.4h1.5v2.8h-1.5zM96.1 108.0h1.5v2.8h-1.5zM98.4 108.0h1.5v2.8h-1.5zM105.5 23.7h1.5v2.8h-1.5zM107.8 23.7h1.5v2.8h-1.5zM114.9 220.4h1.5v2.8h-1.5zM117.2 220.4h1.5v2.8h-1.5zM124.2 257.9h1.5v2.8h-1.5zM126.5 257.9h1.5v2.8h-1.5zM124.2 314.0h1.5v2.8h-1.5zM126.5 314.0h1.5v2.8h-1.5zM133.6 229.8h1.5v2.8h-1.5zM135.9 229.8h1.5v2.8h-1.5zM133.6 239.1h1.5v2.8h-1.5zM135.9 239.1h1.5v2.8h-1.5zM133.6 342.1h1.5v2.8h-1.5zM135.9 342.1h1.5v2.8h-1.5zM143.0 164.2h1.5v2.8h-1.5zM145.3 164.2h1.5v2.8h-1.5zM143.0 182.9h1.5v2.8h-1.5zM145.3 182.9h1.5v2.8h-1.5zM152.3 145.5h1.5v2.8h-1.5zM154.6 145.5h1.5v2.8h-1.5zM152.3 192.3h1.5v2.8h-1.5zM154.6 192.3h1.5v2.8h-1.5zM161.7 14.4h1.5v2.8h-1.5zM164.0 14.4h1.5v2.8h-1.5zM161.7 267.2h1.5v2.8h-1.5zM164.0 267.2h1.5v2.8h-1.5zM161.7 445.2h1.5v2.8h-1.5zM164.0 445.2h1.5v2.8h-1.5zM171.1 70.6h1.5v2.8h-1.5zM173.4 70.6h1.5v2.8h-1.5zM171.1 89.3h1.5v2.8h-1.5zM173.4 89.3h1.5v2.8h-1.5zM180.4 154.8h1.5v2.8h-1.5zM182.7 154.8h1.5v2.8h-1.5zM180.4 220.4h1.5v2.8h-1.5zM182.7 220.4h1.5v2.8h-1.5zM180.4 295.3h1.5v2.8h-1.5zM182.7 295.3h1.5v2.8h-1.5zM180.4 435.8h1.5v2.8h-1.5zM182.7 435.8h1.5v2.8h-1.5zM189.8 70.6h1.5v2.8h-1.5zM192.1 70.6h1.5v2.8h-1.5zM189.8 164.2h1.5v2.8h-1.5zM192.1 164.2h1.5v2.8h-1.5zM199.2 257.9h1.5v2.8h-1.5zM201.5 257.9h1.5v2.8h-1.5zM199.2 314.0h1.5v2.8h-1.5zM201.5 314.0h1.5v2.8h-1.5zM208.5 14.4h1.5v2.8h-1.5zM210.8 14.4h1.5v2.8h-1.5zM208.5 473.2h1.5v2.8h-1.5zM210.8 473.2h1.5v2.8h-1.5zM217.9 -4.4h1.5v2.8h-1.5zM220.2 -4.4h1.5v2.8h-1.5zM217.9 98.7h1.5v2.8h-1.5zM220.2 98.7h1.5v2.8h-1.5zM217.9 117.4h1.5v2.8h-1.5zM220.2 117.4h1.5v2.8h-1.5zM217.9 389.0h1.5v2.8h-1.5zM220.2 389.0h1.5v2.8h-1.5zM217.9 473.2h1.5v2.8h-1.5zM220.2 473.2h1.5v2.8h-1.5zM227.3 117.4h1.5v2.8h-1.5zM229.6 117.4h1.5v2.8h-1.5zM227.3 136.1h1.5v2.8h-1.5zM229.6 136.1h1.5v2.8h-1.5zM236.6 154.8h1.5v2.8h-1.5zM238.9 154.8h1.5v2.8h-1.5zM236.6 248.5h1.5v2.8h-1.5zM238.9 248.5h1.5v2.8h-1.5zM255.4 23.7h1.5v2.8h-1.5zM257.7 23.7h1.5v2.8h-1.5zM255.4 70.6h1.5v2.8h-1.5zM257.7 70.6h1.5v2.8h-1.5zM255.4 145.5h1.5v2.8h-1.5zM257.7 145.5h1.5v2.8h-1.5zM255.4 154.8h1.5v2.8h-1.5zM257.7 154.8h1.5v2.8h-1.5zM255.4 417.1h1.5v2.8h-1.5zM257.7 417.1h1.5v2.8h-1.5zM264.7 79.9h1.5v2.8h-1.5zM267.0 79.9h1.5v2.8h-1.5zM264.7 145.5h1.5v2.8h-1.5zM267.0 145.5h1.5v2.8h-1.5zM274.1 248.5h1.5v2.8h-1.5zM276.4 248.5h1.5v2.8h-1.5zM274.1 304.7h1.5v2.8h-1.5zM276.4 304.7h1.5v2.8h-1.5zM274.1 417.1h1.5v2.8h-1.5zM276.4 417.1h1.5v2.8h-1.5zM283.4 108.0h1.5v2.8h-1.5zM285.7 108.0h1.5v2.8h-1.5zM283.4 117.4h1.5v2.8h-1.5zM285.7 117.4h1.5v2.8h-1.5zM283.4 239.1h1.5v2.8h-1.5zM285.7 239.1h1.5v2.8h-1.5zM292.8 164.2h1.5v2.8h-1.5zM295.1 164.2h1.5v2.8h-1.5zM292.8 285.9h1.5v2.8h-1.5zM295.1 285.9h1.5v2.8h-1.5zM292.8 342.1h1.5v2.8h-1.5zM295.1 342.1h1.5v2.8h-1.5zM292.8 360.9h1.5v2.8h-1.5zM295.1 360.9h1.5v2.8h-1.5zM302.2 51.8h1.5v2.8h-1.5zM304.5 51.8h1.5v2.8h-1.5zM302.2 108.0h1.5v2.8h-1.5zM304.5 108.0h1.5v2.8h-1.5zM302.2 145.5h1.5v2.8h-1.5zM304.5 145.5h1.5v2.8h-1.5zM302.2 192.3h1.5v2.8h-1.5zM304.5 192.3h1.5v2.8h-1.5zM302.2 248.5h1.5v2.8h-1.5zM304.5 248.5h1.5v2.8h-1.5zM302.2 351.5h1.5v2.8h-1.5zM304.5 351.5h1.5v2.8h-1.5zM302.2 379.6h1.5v2.8h-1.5zM304.5 379.6h1.5v2.8h-1.5zM311.5 108.0h1.5v2.8h-1.5zM313.8 108.0h1.5v2.8h-1.5zM311.5 257.9h1.5v2.8h-1.5zM313.8 257.9h1.5v2.8h-1.5zM320.9 108.0h1.5v2.8h-1.5zM323.2 108.0h1.5v2.8h-1.5zM320.9 463.9h1.5v2.8h-1.5zM323.2 463.9h1.5v2.8h-1.5zM330.3 370.2h1.5v2.8h-1.5zM332.6 370.2h1.5v2.8h-1.5zM339.6 108.0h1.5v2.8h-1.5zM341.9 108.0h1.5v2.8h-1.5zM339.6 182.9h1.5v2.8h-1.5zM341.9 182.9h1.5v2.8h-1.5zM339.6 389.0h1.5v2.8h-1.5zM341.9 389.0h1.5v2.8h-1.5zM349.0 79.9h1.5v2.8h-1.5zM351.3 79.9h1.5v2.8h-1.5zM349.0 332.8h1.5v2.8h-1.5zM351.3 332.8h1.5v2.8h-1.5zM349.0 463.9h1.5v2.8h-1.5zM351.3 463.9h1.5v2.8h-1.5zM358.4 -4.4h1.5v2.8h-1.5zM360.7 -4.4h1.5v2.8h-1.5zM358.4 182.9h1.5v2.8h-1.5zM360.7 182.9h1.5v2.8h-1.5zM367.7 426.4h1.5v2.8h-1.5zM370.0 426.4h1.5v2.8h-1.5zM377.1 -4.4h1.5v2.8h-1.5zM379.4 -4.4h1.5v2.8h-1.5zM377.1 108.0h1.5v2.8h-1.5zM379.4 108.0h1.5v2.8h-1.5zM377.1 220.4h1.5v2.8h-1.5zM379.4 220.4h1.5v2.8h-1.5zM386.5 192.3h1.5v2.8h-1.5zM388.8 192.3h1.5v2.8h-1.5zM386.5 229.8h1.5v2.8h-1.5zM388.8 229.8h1.5v2.8h-1.5zM386.5 276.6h1.5v2.8h-1.5zM388.8 276.6h1.5v2.8h-1.5zM386.5 435.8h1.5v2.8h-1.5zM388.8 435.8h1.5v2.8h-1.5zM395.8 173.6h1.5v2.8h-1.5zM398.1 173.6h1.5v2.8h-1.5zM395.8 192.3h1.5v2.8h-1.5zM398.1 192.3h1.5v2.8h-1.5zM395.8 445.2h1.5v2.8h-1.5zM398.1 445.2h1.5v2.8h-1.5zM405.2 79.9h1.5v2.8h-1.5zM407.5 79.9h1.5v2.8h-1.5zM405.2 211.0h1.5v2.8h-1.5zM407.5 211.0h1.5v2.8h-1.5zM405.2 370.2h1.5v2.8h-1.5zM407.5 370.2h1.5v2.8h-1.5zM423.9 304.7h1.5v2.8h-1.5zM426.2 304.7h1.5v2.8h-1.5zM433.3 79.9h1.5v2.8h-1.5zM435.6 79.9h1.5v2.8h-1.5zM433.3 323.4h1.5v2.8h-1.5zM435.6 323.4h1.5v2.8h-1.5zM442.7 342.1h1.5v2.8h-1.5zM445.0 342.1h1.5v2.8h-1.5zM442.7 389.0h1.5v2.8h-1.5zM445.0 389.0h1.5v2.8h-1.5zM452.0 -4.4h1.5v2.8h-1.5zM454.3 -4.4h1.5v2.8h-1.5zM452.0 201.7h1.5v2.8h-1.5zM454.3 201.7h1.5v2.8h-1.5zM452.0 285.9h1.5v2.8h-1.5zM454.3 285.9h1.5v2.8h-1.5zM452.0 445.2h1.5v2.8h-1.5zM454.3 445.2h1.5v2.8h-1.5z"/><path fill="#fbfbfb" d="M2.5 257.9h1.5v2.8h-1.5zM4.8 257.9h1.5v2.8h-1.5zM2.5 323.4h1.5v2.8h-1.5zM4.8 323.4h1.5v2.8h-1.5zM11.9 445.2h1.5v2.8h-1.5zM14.2 445.2h1.5v2.8h-1.5zM21.2 201.7h1.5v2.8h-1.5zM23.5 201.7h1.5v2.8h-1.5zM30.6 332.8h1.5v2.8h-1.5zM32.9 332.8h1.5v2.8h-1.5zM30.6 342.1h1.5v2.8h-1.5zM32.9 342.1h1.5v2.8h-1.5zM30.6 463.9h1.5v2.8h-1.5zM32.9 463.9h1.5v2.8h-1.5zM40.0 248.5h1.5v2.8h-1.5zM42.3 248.5h1.5v2.8h-1.5zM40.0 435.8h1.5v2.8h-1.5zM42.3 435.8h1.5v2.8h-1.5zM58.7 33.1h1.5v2.8h-1.5zM61.0 33.1h1.5v2.8h-1.5zM68.1 23.7h1.5v2.8h-1.5zM70.4 23.7h1.5v2.8h-1.5zM68.1 79.9h1.5v2.8h-1.5zM70.4 79.9h1.5v2.8h-1.5zM68.1 145.5h1.5v2.8h-1.5zM70.4 145.5h1.5v2.8h-1.5zM77.4 89.3h1.5v2.8h-1.5zM79.7 89.3h1.5v2.8h-1.5zM86.8 173.6h1.5v2.8h-1.5zM89.1 173.6h1.5v2.8h-1.5zM86.8 435.8h1.5v2.8h-1.5zM89.1 435.8h1.5v2.8h-1.5zM96.1 33.1h1.5v2.8h-1.5zM98.4 33.1h1.5v2.8h-1.5zM96.1 51.8h1.5v2.8h-1.5zM98.4 51.8h1.5v2.8h-1.5zM96.1 473.2h1.5v2.8h-1.5zM98.4 473.2h1.5v2.8h-1.5zM105.5 276.6h1.5v2.8h-1.5zM107.8 276.6h1.5v2.8h-1.5zM105.5 351.5h1.5v2.8h-1.5zM107.8 351.5h1.5v2.8h-1.5zM114.9 61.2h1.5v2.8h-1.5zM117.2 61.2h1.5v2.8h-1.5zM124.2 248.5h1.5v2.8h-1.5zM126.5 248.5h1.5v2.8h-1.5zM124.2 285.9h1.5v2.8h-1.5zM126.5 285.9h1.5v2.8h-1.5zM124.2 379.6h1.5v2.8h-1.5zM126.5 379.6h1.5v2.8h-1.5zM124.2 445.2h1.5v2.8h-1.5zM126.5 445.2h1.5v2.8h-1.5zM133.6 70.6h1.5v2.8h-1.5zM135.9 70.6h1.5v2.8h-1.5zM133.6 211.0h1.5v2.8h-1.5zM135.9 211.0h1.5v2.8h-1.5zM133.6 295.3h1.5v2.8h-1.5zM135.9 295.3h1.5v2.8h-1.5zM143.0 154.8h1.5v2.8h-1.5zM145.3 154.8h1.5v2.8h-1.5zM143.0 257.9h1.5v2.8h-1.5zM145.3 257.9h1.5v2.8h-1.5zM152.3 42.5h1.5v2.8h-1.5zM154.6 42.5h1.5v2.8h-1.5zM152.3 248.5h1.5v2.8h-1.5zM154.6 248.5h1.5v2.8h-1.5zM152.3 398.3h1.5v2.8h-1.5zM154.6 398.3h1.5v2.8h-1.5zM152.3 435.8h1.5v2.8h-1.5zM154.6 435.8h1.5v2.8h-1.5zM152.3 473.2h1.5v2.8h-1.5zM154.6 473.2h1.5v2.8h-1.5zM161.7 5.0h1.5v2.8h-1.5zM164.0 5.0h1.5v2.8h-1.5zM161.7 211.0h1.5v2.8h-1.5zM164.0 211.0h1.5v2.8h-1.5zM161.7 229.8h1.5v2.8h-1.5zM164.0 229.8h1.5v2.8h-1.5zM161.7 463.9h1.5v2.8h-1.5zM164.0 463.9h1.5v2.8h-1.5zM171.1 136.1h1.5v2.8h-1.5zM173.4 136.1h1.5v2.8h-1.5zM171.1 435.8h1.5v2.8h-1.5zM173.4 435.8h1.5v2.8h-1.5zM180.4 164.2h1.5v2.8h-1.5zM182.7 164.2h1.5v2.8h-1.5zM180.4 332.8h1.5v2.8h-1.5zM182.7 332.8h1.5v2.8h-1.5zM180.4 379.6h1.5v2.8h-1.5zM182.7 379.6h1.5v2.8h-1.5zM189.8 136.1h1.5v2.8h-1.5zM192.1 136.1h1.5v2.8h-1.5zM189.8 398.3h1.5v2.8h-1.5zM192.1 398.3h1.5v2.8h-1.5zM199.2 220.4h1.5v2.8h-1.5zM201.5 220.4h1.5v2.8h-1.5zM199.2 267.2h1.5v2.8h-1.5zM201.5 267.2h1.5v2.8h-1.5zM208.5 61.2h1.5v2.8h-1.5zM210.8 61.2h1.5v2.8h-1.5zM208.5 295.3h1.5v2.8h-1.5zM210.8 295.3h1.5v2.8h-1.5zM217.9 61.2h1.5v2.8h-1.5zM220.2 61.2h1.5v2.8h-1.5zM217.9 173.6h1.5v2.8h-1.5zM220.2 173.6h1.5v2.8h-1.5zM217.9 360.9h1.5v2.8h-1.5zM220.2 360.9h1.5v2.8h-1.5zM217.9 417.1h1.5v2.8h-1.5zM220.2 417.1h1.5v2.8h-1.5zM227.3 -4.4h1.5v2.8h-1.5zM229.6 -4.4h1.5v2.8h-1.5zM227.3 61.2h1.5v2.8h-1.5zM229.6 61.2h1.5v2.8h-1.5zM227.3 220.4h1.5v2.8h-1.5zM229.6 220.4h1.5v2.8h-1.5zM227.3 463.9h1.5v2.8h-1.5zM229.6 463.9h1.5v2.8h-1.5zM236.6 79.9h1.5v2.8h-1.5zM238.9 79.9h1.5v2.8h-1.5zM236.6 182.9h1.5v2.8h-1.5zM238.9 182.9h1.5v2.8h-1.5zM236.6 211.0h1.5v2.8h-1.5zM238.9 211.0h1.5v2.8h-1.5zM246.0 108.0h1.5v2.8h-1.5zM248.3 108.0h1.5v2.8h-1.5zM246.0 314.0h1.5v2.8h-1.5zM248.3 314.0h1.5v2.8h-1.5zM255.4 42.5h1.5v2.8h-1.5zM257.7 42.5h1.5v2.8h-1.5zM255.4 267.2h1.5v2.8h-1.5zM257.7 267.2h1.5v2.8h-1.5zM264.7 164.2h1.5v2.8h-1.5zM267.0 164.2h1.5v2.8h-1.5zM274.1 126.7h1.5v2.8h-1.5zM276.4 126.7h1.5v2.8h-1.5zM274.1 379.6h1.5v2.8h-1.5zM276.4 379.6h1.5v2.8h-1.5zM283.4 5.0h1.5v2.8h-1.5zM285.7 5.0h1.5v2.8h-1.5zM283.4 51.8h1.5v2.8h-1.5zM285.7 51.8h1.5v2.8h-1.5zM283.4 360.9h1.5v2.8h-1.5zM285.7 360.9h1.5v2.8h-1.5zM292.8 5.0h1.5v2.8h-1.5zM295.1 5.0h1.5v2.8h-1.5zM302.2 257.9h1.5v2.8h-1.5zM304.5 257.9h1.5v2.8h-1.5zM302.2 323.4h1.5v2.8h-1.5zM304.5 323.4h1.5v2.8h-1.5zM302.2 463.9h1.5v2.8h-1.5zM304.5 463.9h1.5v2.8h-1.5zM302.2 473.2h1.5v2.8h-1.5zM304.5 473.2h1.5v2.8h-1.5zM311.5 -4.4h1.5v2.8h-1.5zM313.8 -4.4h1.5v2.8h-1.5zM311.5 295.3h1.5v2.8h-1.5zM313.8 295.3h1.5v2.8h-1.5zM311.5 304.7h1.5v2.8h-1.5zM313.8 304.7h1.5v2.8h-1.5zM320.9 323.4h1.5v2.8h-1.5zM323.2 323.4h1.5v2.8h-1.5zM330.3 211.0h1.5v2.8h-1.5zM332.6 211.0h1.5v2.8h-1.5zM330.3 248.5h1.5v2.8h-1.5zM332.6 248.5h1.5v2.8h-1.5zM330.3 426.4h1.5v2.8h-1.5zM332.6 426.4h1.5v2.8h-1.5zM339.6 -4.4h1.5v2.8h-1.5zM341.9 -4.4h1.5v2.8h-1.5zM339.6 23.7h1.5v2.8h-1.5zM341.9 23.7h1.5v2.8h-1.5zM339.6 79.9h1.5v2.8h-1.5zM341.9 79.9h1.5v2.8h-1.5zM339.6 126.7h1.5v2.8h-1.5zM341.9 126.7h1.5v2.8h-1.5zM339.6 276.6h1.5v2.8h-1.5zM341.9 276.6h1.5v2.8h-1.5zM349.0 51.8h1.5v2.8h-1.5zM351.3 51.8h1.5v2.8h-1.5zM349.0 117.4h1.5v2.8h-1.5zM351.3 117.4h1.5v2.8h-1.5zM367.7 51.8h1.5v2.8h-1.5zM370.0 51.8h1.5v2.8h-1.5zM377.1 257.9h1.5v2.8h-1.5zM379.4 257.9h1.5v2.8h-1.5zM377.1 360.9h1.5v2.8h-1.5zM379.4 360.9h1.5v2.8h-1.5zM386.5 351.5h1.5v2.8h-1.5zM388.8 351.5h1.5v2.8h-1.5zM386.5 360.9h1.5v2.8h-1.5zM388.8 360.9h1.5v2.8h-1.5zM395.8 23.7h1.5v2.8h-1.5zM398.1 23.7h1.5v2.8h-1.5zM405.2 117.4h1.5v2.8h-1.5zM407.5 117.4h1.5v2.8h-1.5zM405.2 239.1h1.5v2.8h-1.5zM407.5 239.1h1.5v2.8h-1.5zM405.2 426.4h1.5v2.8h-1.5zM407.5 426.4h1.5v2.8h-1.5zM414.6 61.2h1.5v2.8h-1.5zM416.9 61.2h1.5v2.8h-1.5zM414.6 182.9h1.5v2.8h-1.5zM416.9 182.9h1.5v2.8h-1.5zM423.9 5.0h1.5v2.8h-1.5zM426.2 5.0h1.5v2.8h-1.5zM423.9 79.9h1.5v2.8h-1.5zM426.2 79.9h1.5v2.8h-1.5zM423.9 136.1h1.5v2.8h-1.5zM426.2 136.1h1.5v2.8h-1.5zM423.9 314.0h1.5v2.8h-1.5zM426.2 314.0h1.5v2.8h-1.5zM433.3 173.6h1.5v2.8h-1.5zM435.6 173.6h1.5v2.8h-1.5zM433.3 435.8h1.5v2.8h-1.5zM435.6 435.8h1.5v2.8h-1.5zM433.3 463.9h1.5v2.8h-1.5zM435.6 463.9h1.5v2.8h-1.5zM442.7 154.8h1.5v2.8h-1.5zM445.0 154.8h1.5v2.8h-1.5zM442.7 295.3h1.5v2.8h-1.5zM445.0 295.3h1.5v2.8h-1.5zM442.7 379.6h1.5v2.8h-1.5zM445.0 379.6h1.5v2.8h-1.5zM452.0 154.8h1.5v2.8h-1.5zM454.3 154.8h1.5v2.8h-1.5zM452.0 351.5h1.5v2.8h-1.5zM454.3 351.5h1.5v2.8h-1.5zM461.4 79.9h1.5v2.8h-1.5zM463.7 79.9h1.5v2.8h-1.5zM461.4 192.3h1.5v2.8h-1.5zM463.7 192.3h1.5v2.8h-1.5z"/><path fill="#faf5f5" d="M2.5 332.8h1.5v2.8h-1.5zM4.8 332.8h1.5v2.8h-1.5zM11.9 89.3h1.5v2.8h-1.5zM14.2 89.3h1.5v2.8h-1.5zM21.2 61.2h1.5v2.8h-1.5zM23.5 61.2h1.5v2.8h-1.5zM21.2 89.3h1.5v2.8h-1.5zM23.5 89.3h1.5v2.8h-1.5zM30.6 248.5h1.5v2.8h-1.5zM32.9 248.5h1.5v2.8h-1.5zM49.3 173.6h1.5v2.8h-1.5zM51.6 173.6h1.5v2.8h-1.5zM58.7 314.0h1.5v2.8h-1.5zM61.0 314.0h1.5v2.8h-1.5zM68.1 239.1h1.5v2.8h-1.5zM70.4 239.1h1.5v2.8h-1.5zM77.4 426.4h1.5v2.8h-1.5zM79.7 426.4h1.5v2.8h-1.5zM77.4 435.8h1.5v2.8h-1.5zM79.7 435.8h1.5v2.8h-1.5zM86.8 42.5h1.5v2.8h-1.5zM89.1 42.5h1.5v2.8h-1.5zM86.8 229.8h1.5v2.8h-1.5zM89.1 229.8h1.5v2.8h-1.5zM86.8 360.9h1.5v2.8h-1.5zM89.1 360.9h1.5v2.8h-1.5zM86.8 370.2h1.5v2.8h-1.5zM89.1 370.2h1.5v2.8h-1.5zM114.9 285.9h1.5v2.8h-1.5zM117.2 285.9h1.5v2.8h-1.5zM124.2 154.8h1.5v2.8h-1.5zM126.5 154.8h1.5v2.8h-1.5zM124.2 239.1h1.5v2.8h-1.5zM126.5 239.1h1.5v2.8h-1.5zM143.0 435.8h1.5v2.8h-1.5zM145.3 435.8h1.5v2.8h-1.5zM152.3 463.9h1.5v2.8h-1.5zM154.6 463.9h1.5v2.8h-1.5zM161.7 98.7h1.5v2.8h-1.5zM164.0 98.7h1.5v2.8h-1.5zM180.4 407.7h1.5v2.8h-1.5zM182.7 407.7h1.5v2.8h-1.5zM199.2 445.2h1.5v2.8h-1.5zM201.5 445.2h1.5v2.8h-1.5zM208.5 192.3h1.5v2.8h-1.5zM210.8 192.3h1.5v2.8h-1.5zM208.5 407.7h1.5v2.8h-1.5zM210.8 407.7h1.5v2.8h-1.5zM236.6 257.9h1.5v2.8h-1.5zM238.9 257.9h1.5v2.8h-1.5zM236.6 435.8h1.5v2.8h-1.5zM238.9 435.8h1.5v2.8h-1.5zM246.0 89.3h1.5v2.8h-1.5zM248.3 89.3h1.5v2.8h-1.5zM246.0 323.4h1.5v2.8h-1.5zM248.3 323.4h1.5v2.8h-1.5zM264.7 173.6h1.5v2.8h-1.5zM267.0 173.6h1.5v2.8h-1.5zM264.7 463.9h1.5v2.8h-1.5zM267.0 463.9h1.5v2.8h-1.5zM283.4 -4.4h1.5v2.8h-1.5zM285.7 -4.4h1.5v2.8h-1.5zM283.4 398.3h1.5v2.8h-1.5zM285.7 398.3h1.5v2.8h-1.5zM292.8 267.2h1.5v2.8h-1.5zM295.1 267.2h1.5v2.8h-1.5zM302.2 23.7h1.5v2.8h-1.5zM304.5 23.7h1.5v2.8h-1.5zM302.2 201.7h1.5v2.8h-1.5zM304.5 201.7h1.5v2.8h-1.5zM302.2 304.7h1.5v2.8h-1.5zM304.5 304.7h1.5v2.8h-1.5zM320.9 182.9h1.5v2.8h-1.5zM323.2 182.9h1.5v2.8h-1.5zM320.9 295.3h1.5v2.8h-1.5zM323.2 295.3h1.5v2.8h-1.5zM358.4 239.1h1.5v2.8h-1.5zM360.7 239.1h1.5v2.8h-1.5zM367.7 398.3h1.5v2.8h-1.5zM370.0 398.3h1.5v2.8h-1.5zM386.5 -4.4h1.5v2.8h-1.5zM388.8 -4.4h1.5v2.8h-1.5zM386.5 51.8h1.5v2.8h-1.5zM388.8 51.8h1.5v2.8h-1.5zM386.5 267.2h1.5v2.8h-1.5zM388.8 267.2h1.5v2.8h-1.5zM386.5 454.5h1.5v2.8h-1.5zM388.8 454.5h1.5v2.8h-1.5zM414.6 398.3h1.5v2.8h-1.5zM416.9 398.3h1.5v2.8h-1.5zM423.9 192.3h1.5v2.8h-1.5zM426.2 192.3h1.5v2.8h-1.5zM423.9 351.5h1.5v2.8h-1.5zM426.2 351.5h1.5v2.8h-1.5zM423.9 435.8h1.5v2.8h-1.5zM426.2 435.8h1.5v2.8h-1.5zM452.0 89.3h1.5v2.8h-1.5zM454.3 89.3h1.5v2.8h-1.5zM452.0 463.9h1.5v2.8h-1.5zM454.3 463.9h1.5v2.8h-1.5zM461.4 89.3h1.5v2.8h-1.5zM463.7 89.3h1.5v2.8h-1.5z"/><path fill="#eaeeea" d="M2.5 370.2h1.5v2.8h-1.5zM4.8 370.2h1.5v2.8h-1.5zM11.9 23.7h1.5v2.8h-1.5zM14.2 23.7h1.5v2.8h-1.5zM11.9 117.4h1.5v2.8h-1.5zM14.2 117.4h1.5v2.8h-1.5zM11.9 145.5h1.5v2.8h-1.5zM14.2 145.5h1.5v2.8h-1.5zM11.9 248.5h1.5v2.8h-1.5zM14.2 248.5h1.5v2.8h-1.5zM11.9 342.1h1.5v2.8h-1.5zM14.2 342.1h1.5v2.8h-1.5zM11.9 473.2h1.5v2.8h-1.5zM14.2 473.2h1.5v2.8h-1.5zM21.2 370.2h1.5v2.8h-1.5zM23.5 370.2h1.5v2.8h-1.5zM21.2 379.6h1.5v2.8h-1.5zM23.5 379.6h1.5v2.8h-1.5zM30.6 267.2h1.5v2.8h-1.5zM32.9 267.2h1.5v2.8h-1.5zM30.6 379.6h1.5v2.8h-1.5zM32.9 379.6h1.5v2.8h-1.5zM30.6 454.5h1.5v2.8h-1.5zM32.9 454.5h1.5v2.8h-1.5zM40.0 342.1h1.5v2.8h-1.5zM42.3 342.1h1.5v2.8h-1.5zM40.0 426.4h1.5v2.8h-1.5zM42.3 426.4h1.5v2.8h-1.5zM40.0 473.2h1.5v2.8h-1.5zM42.3 473.2h1.5v2.8h-1.5zM49.3 136.1h1.5v2.8h-1.5zM51.6 136.1h1.5v2.8h-1.5zM49.3 182.9h1.5v2.8h-1.5zM51.6 182.9h1.5v2.8h-1.5zM49.3 201.7h1.5v2.8h-1.5zM51.6 201.7h1.5v2.8h-1.5zM49.3 304.7h1.5v2.8h-1.5zM51.6 304.7h1.5v2.8h-1.5zM49.3 454.5h1.5v2.8h-1.5zM51.6 454.5h1.5v2.8h-1.5zM58.7 79.9h1.5v2.8h-1.5zM61.0 79.9h1.5v2.8h-1.5zM58.7 407.7h1.5v2.8h-1.5zM61.0 407.7h1.5v2.8h-1.5zM68.1 154.8h1.5v2.8h-1.5zM70.4 154.8h1.5v2.8h-1.5zM68.1 201.7h1.5v2.8h-1.5zM70.4 201.7h1.5v2.8h-1.5zM68.1 435.8h1.5v2.8h-1.5zM70.4 435.8h1.5v2.8h-1.5zM68.1 454.5h1.5v2.8h-1.5zM70.4 454.5h1.5v2.8h-1.5zM77.4 70.6h1.5v2.8h-1.5zM79.7 70.6h1.5v2.8h-1.5zM86.8 51.8h1.5v2.8h-1.5zM89.1 51.8h1.5v2.8h-1.5zM86.8 201.7h1.5v2.8h-1.5zM89.1 201.7h1.5v2.8h-1.5zM86.8 220.4h1.5v2.8h-1.5zM89.1 220.4h1.5v2.8h-1.5zM86.8 398.3h1.5v2.8h-1.5zM89.1 398.3h1.5v2.8h-1.5zM86.8 407.7h1.5v2.8h-1.5zM89.1 407.7h1.5v2.8h-1.5zM86.8 473.2h1.5v2.8h-1.5zM89.1 473.2h1.5v2.8h-1.5zM96.1 14.4h1.5v2.8h-1.5zM98.4 14.4h1.5v2.8h-1.5zM96.1 164.2h1.5v2.8h-1.5zM98.4 164.2h1.5v2.8h-1.5zM96.1 192.3h1.5v2.8h-1.5zM98.4 192.3h1.5v2.8h-1.5zM96.1 201.7h1.5v2.8h-1.5zM98.4 201.7h1.5v2.8h-1.5zM105.5 98.7h1.5v2.8h-1.5zM107.8 98.7h1.5v2.8h-1.5zM105.5 164.2h1.5v2.8h-1.5zM107.8 164.2h1.5v2.8h-1.5zM105.5 295.3h1.5v2.8h-1.5zM107.8 295.3h1.5v2.8h-1.5zM105.5 332.8h1.5v2.8h-1.5zM107.8 332.8h1.5v2.8h-1.5zM114.9 98.7h1.5v2.8h-1.5zM117.2 98.7h1.5v2.8h-1.5zM114.9 173.6h1.5v2.8h-1.5zM117.2 173.6h1.5v2.8h-1.5zM114.9 332.8h1.5v2.8h-1.5zM117.2 332.8h1.5v2.8h-1.5zM124.2 42.5h1.5v2.8h-1.5zM126.5 42.5h1.5v2.8h-1.5zM124.2 79.9h1.5v2.8h-1.5zM126.5 79.9h1.5v2.8h-1.5zM124.2 145.5h1.5v2.8h-1.5zM126.5 145.5h1.5v2.8h-1.5zM124.2 370.2h1.5v2.8h-1.5zM126.5 370.2h1.5v2.8h-1.5zM133.6 267.2h1.5v2.8h-1.5zM135.9 267.2h1.5v2.8h-1.5zM143.0 79.9h1.5v2.8h-1.5zM145.3 79.9h1.5v2.8h-1.5zM143.0 136.1h1.5v2.8h-1.5zM145.3 136.1h1.5v2.8h-1.5zM143.0 379.6h1.5v2.8h-1.5zM145.3 379.6h1.5v2.8h-1.5zM143.0 398.3h1.5v2.8h-1.5zM145.3 398.3h1.5v2.8h-1.5zM152.3 182.9h1.5v2.8h-1.5zM154.6 182.9h1.5v2.8h-1.5zM152.3 304.7h1.5v2.8h-1.5zM154.6 304.7h1.5v2.8h-1.5zM161.7 295.3h1.5v2.8h-1.5zM164.0 295.3h1.5v2.8h-1.5zM161.7 435.8h1.5v2.8h-1.5zM164.0 435.8h1.5v2.8h-1.5zM171.1 14.4h1.5v2.8h-1.5zM173.4 14.4h1.5v2.8h-1.5zM171.1 351.5h1.5v2.8h-1.5zM173.4 351.5h1.5v2.8h-1.5zM171.1 360.9h1.5v2.8h-1.5zM173.4 360.9h1.5v2.8h-1.5zM171.1 389.0h1.5v2.8h-1.5zM173.4 389.0h1.5v2.8h-1.5zM171.1 426.4h1.5v2.8h-1.5zM173.4 426.4h1.5v2.8h-1.5zM171.1 445.2h1.5v2.8h-1.5zM173.4 445.2h1.5v2.8h-1.5zM180.4 5.0h1.5v2.8h-1.5zM182.7 5.0h1.5v2.8h-1.5zM180.4 182.9h1.5v2.8h-1.5zM182.7 182.9h1.5v2.8h-1.5zM189.8 126.7h1.5v2.8h-1.5zM192.1 126.7h1.5v2.8h-1.5zM189.8 417.1h1.5v2.8h-1.5zM192.1 417.1h1.5v2.8h-1.5zM199.2 79.9h1.5v2.8h-1.5zM201.5 79.9h1.5v2.8h-1.5zM199.2 360.9h1.5v2.8h-1.5zM201.5 360.9h1.5v2.8h-1.5zM199.2 379.6h1.5v2.8h-1.5zM201.5 379.6h1.5v2.8h-1.5zM208.5 5.0h1.5v2.8h-1.5zM210.8 5.0h1.5v2.8h-1.5zM208.5 220.4h1.5v2.8h-1.5zM210.8 220.4h1.5v2.8h-1.5zM208.5 257.9h1.5v2.8h-1.5zM210.8 257.9h1.5v2.8h-1.5zM217.9 314.0h1.5v2.8h-1.5zM220.2 314.0h1.5v2.8h-1.5zM217.9 454.5h1.5v2.8h-1.5zM220.2 454.5h1.5v2.8h-1.5zM217.9 463.9h1.5v2.8h-1.5zM220.2 463.9h1.5v2.8h-1.5zM227.3 5.0h1.5v2.8h-1.5zM229.6 5.0h1.5v2.8h-1.5zM227.3 79.9h1.5v2.8h-1.5zM229.6 79.9h1.5v2.8h-1.5zM227.3 285.9h1.5v2.8h-1.5zM229.6 285.9h1.5v2.8h-1.5zM227.3 398.3h1.5v2.8h-1.5zM229.6 398.3h1.5v2.8h-1.5zM227.3 435.8h1.5v2.8h-1.5zM229.6 435.8h1.5v2.8h-1.5zM236.6 173.6h1.5v2.8h-1.5zM238.9 173.6h1.5v2.8h-1.5zM236.6 285.9h1.5v2.8h-1.5zM238.9 285.9h1.5v2.8h-1.5zM236.6 454.5h1.5v2.8h-1.5zM238.9 454.5h1.5v2.8h-1.5zM246.0 61.2h1.5v2.8h-1.5zM248.3 61.2h1.5v2.8h-1.5zM246.0 145.5h1.5v2.8h-1.5zM248.3 145.5h1.5v2.8h-1.5zM255.4 89.3h1.5v2.8h-1.5zM257.7 89.3h1.5v2.8h-1.5zM255.4 164.2h1.5v2.8h-1.5zM257.7 164.2h1.5v2.8h-1.5zM255.4 323.4h1.5v2.8h-1.5zM257.7 323.4h1.5v2.8h-1.5zM264.7 201.7h1.5v2.8h-1.5zM267.0 201.7h1.5v2.8h-1.5zM264.7 257.9h1.5v2.8h-1.5zM267.0 257.9h1.5v2.8h-1.5zM264.7 276.6h1.5v2.8h-1.5zM267.0 276.6h1.5v2.8h-1.5zM264.7 295.3h1.5v2.8h-1.5zM267.0 295.3h1.5v2.8h-1.5zM264.7 304.7h1.5v2.8h-1.5zM267.0 304.7h1.5v2.8h-1.5zM264.7 351.5h1.5v2.8h-1.5zM267.0 351.5h1.5v2.8h-1.5zM274.1 23.7h1.5v2.8h-1.5zM276.4 23.7h1.5v2.8h-1.5zM274.1 98.7h1.5v2.8h-1.5zM276.4 98.7h1.5v2.8h-1.5zM274.1 136.1h1.5v2.8h-1.5zM276.4 136.1h1.5v2.8h-1.5zM283.4 23.7h1.5v2.8h-1.5zM285.7 23.7h1.5v2.8h-1.5zM283.4 267.2h1.5v2.8h-1.5zM285.7 267.2h1.5v2.8h-1.5zM283.4 323.4h1.5v2.8h-1.5zM285.7 323.4h1.5v2.8h-1.5zM292.8 89.3h1.5v2.8h-1.5zM295.1 89.3h1.5v2.8h-1.5zM292.8 220.4h1.5v2.8h-1.5zM295.1 220.4h1.5v2.8h-1.5zM292.8 257.9h1.5v2.8h-1.5zM295.1 257.9h1.5v2.8h-1.5zM302.2 314.0h1.5v2.8h-1.5zM304.5 314.0h1.5v2.8h-1.5zM302.2 360.9h1.5v2.8h-1.5zM304.5 360.9h1.5v2.8h-1.5zM302.2 445.2h1.5v2.8h-1.5zM304.5 445.2h1.5v2.8h-1.5zM311.5 192.3h1.5v2.8h-1.5zM313.8 192.3h1.5v2.8h-1.5zM311.5 351.5h1.5v2.8h-1.5zM313.8 351.5h1.5v2.8h-1.5zM320.9 -4.4h1.5v2.8h-1.5zM323.2 -4.4h1.5v2.8h-1.5zM320.9 257.9h1.5v2.8h-1.5zM323.2 257.9h1.5v2.8h-1.5zM320.9 398.3h1.5v2.8h-1.5zM323.2 398.3h1.5v2.8h-1.5zM320.9 445.2h1.5v2.8h-1.5zM323.2 445.2h1.5v2.8h-1.5zM320.9 473.2h1.5v2.8h-1.5zM323.2 473.2h1.5v2.8h-1.5zM330.3 136.1h1.5v2.8h-1.5zM332.6 136.1h1.5v2.8h-1.5zM330.3 220.4h1.5v2.8h-1.5zM332.6 220.4h1.5v2.8h-1.5zM330.3 435.8h1.5v2.8h-1.5zM332.6 435.8h1.5v2.8h-1.5zM339.6 61.2h1.5v2.8h-1.5zM341.9 61.2h1.5v2.8h-1.5zM339.6 220.4h1.5v2.8h-1.5zM341.9 220.4h1.5v2.8h-1.5zM339.6 248.5h1.5v2.8h-1.5zM341.9 248.5h1.5v2.8h-1.5zM339.6 351.5h1.5v2.8h-1.5zM341.9 351.5h1.5v2.8h-1.5zM339.6 473.2h1.5v2.8h-1.5zM341.9 473.2h1.5v2.8h-1.5zM349.0 220.4h1.5v2.8h-1.5zM351.3 220.4h1.5v2.8h-1.5zM349.0 445.2h1.5v2.8h-1.5zM351.3 445.2h1.5v2.8h-1.5zM358.4 398.3h1.5v2.8h-1.5zM360.7 398.3h1.5v2.8h-1.5zM367.7 70.6h1.5v2.8h-1.5zM370.0 70.6h1.5v2.8h-1.5zM367.7 98.7h1.5v2.8h-1.5zM370.0 98.7h1.5v2.8h-1.5zM367.7 211.0h1.5v2.8h-1.5zM370.0 211.0h1.5v2.8h-1.5zM367.7 285.9h1.5v2.8h-1.5zM370.0 285.9h1.5v2.8h-1.5zM367.7 314.0h1.5v2.8h-1.5zM370.0 314.0h1.5v2.8h-1.5zM367.7 473.2h1.5v2.8h-1.5zM370.0 473.2h1.5v2.8h-1.5zM377.1 70.6h1.5v2.8h-1.5zM379.4 70.6h1.5v2.8h-1.5zM377.1 145.5h1.5v2.8h-1.5zM379.4 145.5h1.5v2.8h-1.5zM377.1 154.8h1.5v2.8h-1.5zM379.4 154.8h1.5v2.8h-1.5zM377.1 239.1h1.5v2.8h-1.5zM379.4 239.1h1.5v2.8h-1.5zM377.1 248.5h1.5v2.8h-1.5zM379.4 248.5h1.5v2.8h-1.5zM377.1 417.1h1.5v2.8h-1.5zM379.4 417.1h1.5v2.8h-1.5zM386.5 136.1h1.5v2.8h-1.5zM388.8 136.1h1.5v2.8h-1.5zM386.5 145.5h1.5v2.8h-1.5zM388.8 145.5h1.5v2.8h-1.5zM395.8 33.1h1.5v2.8h-1.5zM398.1 33.1h1.5v2.8h-1.5zM395.8 314.0h1.5v2.8h-1.5zM398.1 314.0h1.5v2.8h-1.5zM395.8 370.2h1.5v2.8h-1.5zM398.1 370.2h1.5v2.8h-1.5zM405.2 -4.4h1.5v2.8h-1.5zM407.5 -4.4h1.5v2.8h-1.5zM405.2 70.6h1.5v2.8h-1.5zM407.5 70.6h1.5v2.8h-1.5zM405.2 351.5h1.5v2.8h-1.5zM407.5 351.5h1.5v2.8h-1.5zM405.2 463.9h1.5v2.8h-1.5zM407.5 463.9h1.5v2.8h-1.5zM423.9 182.9h1.5v2.8h-1.5zM426.2 182.9h1.5v2.8h-1.5zM423.9 473.2h1.5v2.8h-1.5zM426.2 473.2h1.5v2.8h-1.5zM433.3 248.5h1.5v2.8h-1.5zM435.6 248.5h1.5v2.8h-1.5zM433.3 379.6h1.5v2.8h-1.5zM435.6 379.6h1.5v2.8h-1.5zM442.7 -4.4h1.5v2.8h-1.5zM445.0 -4.4h1.5v2.8h-1.5zM442.7 23.7h1.5v2.8h-1.5zM445.0 23.7h1.5v2.8h-1.5zM442.7 136.1h1.5v2.8h-1.5zM445.0 136.1h1.5v2.8h-1.5zM452.0 33.1h1.5v2.8h-1.5zM454.3 33.1h1.5v2.8h-1.5zM452.0 42.5h1.5v2.8h-1.5zM454.3 42.5h1.5v2.8h-1.5zM452.0 108.0h1.5v2.8h-1.5zM454.3 108.0h1.5v2.8h-1.5zM452.0 145.5h1.5v2.8h-1.5zM454.3 145.5h1.5v2.8h-1.5zM452.0 267.2h1.5v2.8h-1.5zM454.3 267.2h1.5v2.8h-1.5zM452.0 323.4h1.5v2.8h-1.5zM454.3 323.4h1.5v2.8h-1.5zM452.0 379.6h1.5v2.8h-1.5zM454.3 379.6h1.5v2.8h-1.5zM461.4 23.7h1.5v2.8h-1.5zM463.7 23.7h1.5v2.8h-1.5zM461.4 98.7h1.5v2.8h-1.5zM463.7 98.7h1.5v2.8h-1.5zM461.4 276.6h1.5v2.8h-1.5zM463.7 276.6h1.5v2.8h-1.5zM461.4 370.2h1.5v2.8h-1.5zM463.7 370.2h1.5v2.8h-1.5z"/><path fill="#f9f9f0" d="M2.5 398.3h1.5v2.8h-1.5zM4.8 398.3h1.5v2.8h-1.5zM11.9 173.6h1.5v2.8h-1.5zM14.2 173.6h1.5v2.8h-1.5zM30.6 42.5h1.5v2.8h-1.5zM32.9 42.5h1.5v2.8h-1.5zM49.3 220.4h1.5v2.8h-1.5zM51.6 220.4h1.5v2.8h-1.5zM49.3 379.6h1.5v2.8h-1.5zM51.6 379.6h1.5v2.8h-1.5zM58.7 285.9h1.5v2.8h-1.5zM61.0 285.9h1.5v2.8h-1.5zM68.1 276.6h1.5v2.8h-1.5zM70.4 276.6h1.5v2.8h-1.5zM77.4 220.4h1.5v2.8h-1.5zM79.7 220.4h1.5v2.8h-1.5zM96.1 136.1h1.5v2.8h-1.5zM98.4 136.1h1.5v2.8h-1.5zM96.1 304.7h1.5v2.8h-1.5zM98.4 304.7h1.5v2.8h-1.5zM114.9 154.8h1.5v2.8h-1.5zM117.2 154.8h1.5v2.8h-1.5zM114.9 435.8h1.5v2.8h-1.5zM117.2 435.8h1.5v2.8h-1.5zM124.2 117.4h1.5v2.8h-1.5zM126.5 117.4h1.5v2.8h-1.5zM133.6 473.2h1.5v2.8h-1.5zM135.9 473.2h1.5v2.8h-1.5zM143.0 389.0h1.5v2.8h-1.5zM145.3 389.0h1.5v2.8h-1.5zM199.2 323.4h1.5v2.8h-1.5zM201.5 323.4h1.5v2.8h-1.5zM199.2 463.9h1.5v2.8h-1.5zM201.5 463.9h1.5v2.8h-1.5zM208.5 239.1h1.5v2.8h-1.5zM210.8 239.1h1.5v2.8h-1.5zM208.5 426.4h1.5v2.8h-1.5zM210.8 426.4h1.5v2.8h-1.5zM217.9 229.8h1.5v2.8h-1.5zM220.2 229.8h1.5v2.8h-1.5zM217.9 342.1h1.5v2.8h-1.5zM220.2 342.1h1.5v2.8h-1.5zM227.3 70.6h1.5v2.8h-1.5zM229.6 70.6h1.5v2.8h-1.5zM227.3 126.7h1.5v2.8h-1.5zM229.6 126.7h1.5v2.8h-1.5zM236.6 -4.4h1.5v2.8h-1.5zM238.9 -4.4h1.5v2.8h-1.5zM236.6 417.1h1.5v2.8h-1.5zM238.9 417.1h1.5v2.8h-1.5zM246.0 23.7h1.5v2.8h-1.5zM248.3 23.7h1.5v2.8h-1.5zM246.0 248.5h1.5v2.8h-1.5zM248.3 248.5h1.5v2.8h-1.5zM246.0 435.8h1.5v2.8h-1.5zM248.3 435.8h1.5v2.8h-1.5zM274.1 463.9h1.5v2.8h-1.5zM276.4 463.9h1.5v2.8h-1.5zM292.8 33.1h1.5v2.8h-1.5zM295.1 33.1h1.5v2.8h-1.5zM292.8 79.9h1.5v2.8h-1.5zM295.1 79.9h1.5v2.8h-1.5zM292.8 126.7h1.5v2.8h-1.5zM295.1 126.7h1.5v2.8h-1.5zM292.8 407.7h1.5v2.8h-1.5zM295.1 407.7h1.5v2.8h-1.5zM311.5 5.0h1.5v2.8h-1.5zM313.8 5.0h1.5v2.8h-1.5zM320.9 117.4h1.5v2.8h-1.5zM323.2 117.4h1.5v2.8h-1.5zM320.9 314.0h1.5v2.8h-1.5zM323.2 314.0h1.5v2.8h-1.5zM330.3 33.1h1.5v2.8h-1.5zM332.6 33.1h1.5v2.8h-1.5zM339.6 14.4h1.5v2.8h-1.5zM341.9 14.4h1.5v2.8h-1.5zM339.6 98.7h1.5v2.8h-1.5zM341.9 98.7h1.5v2.8h-1.5zM339.6 379.6h1.5v2.8h-1.5zM341.9 379.6h1.5v2.8h-1.5zM339.6 417.1h1.5v2.8h-1.5zM341.9 417.1h1.5v2.8h-1.5zM349.0 108.0h1.5v2.8h-1.5zM351.3 108.0h1.5v2.8h-1.5zM349.0 164.2h1.5v2.8h-1.5zM351.3 164.2h1.5v2.8h-1.5zM349.0 192.3h1.5v2.8h-1.5zM351.3 192.3h1.5v2.8h-1.5zM367.7 61.2h1.5v2.8h-1.5zM370.0 61.2h1.5v2.8h-1.5zM377.1 5.0h1.5v2.8h-1.5zM379.4 5.0h1.5v2.8h-1.5zM395.8 239.1h1.5v2.8h-1.5zM398.1 239.1h1.5v2.8h-1.5zM405.2 304.7h1.5v2.8h-1.5zM407.5 304.7h1.5v2.8h-1.5zM414.6 -4.4h1.5v2.8h-1.5zM416.9 -4.4h1.5v2.8h-1.5zM414.6 304.7h1.5v2.8h-1.5zM416.9 304.7h1.5v2.8h-1.5zM414.6 445.2h1.5v2.8h-1.5zM416.9 445.2h1.5v2.8h-1.5zM423.9 42.5h1.5v2.8h-1.5zM426.2 42.5h1.5v2.8h-1.5zM423.9 164.2h1.5v2.8h-1.5zM426.2 164.2h1.5v2.8h-1.5zM433.3 5.0h1.5v2.8h-1.5zM435.6 5.0h1.5v2.8h-1.5zM433.3 70.6h1.5v2.8h-1.5zM435.6 70.6h1.5v2.8h-1.5zM433.3 201.7h1.5v2.8h-1.5zM435.6 201.7h1.5v2.8h-1.5zM433.3 473.2h1.5v2.8h-1.5zM435.6 473.2h1.5v2.8h-1.5zM442.7 98.7h1.5v2.8h-1.5zM445.0 98.7h1.5v2.8h-1.5zM452.0 5.0h1.5v2.8h-1.5zM454.3 5.0h1.5v2.8h-1.5zM461.4 398.3h1.5v2.8h-1.5zM463.7 398.3h1.5v2.8h-1.5z"/><path fill="#f5f9f6" d="M2.5 435.8h1.5v2.8h-1.5zM4.8 435.8h1.5v2.8h-1.5zM11.9 70.6h1.5v2.8h-1.5zM14.2 70.6h1.5v2.8h-1.5zM11.9 323.4h1.5v2.8h-1.5zM14.2 323.4h1.5v2.8h-1.5zM11.9 360.9h1.5v2.8h-1.5zM14.2 360.9h1.5v2.8h-1.5zM11.9 417.1h1.5v2.8h-1.5zM14.2 417.1h1.5v2.8h-1.5zM21.2 108.0h1.5v2.8h-1.5zM23.5 108.0h1.5v2.8h-1.5zM21.2 126.7h1.5v2.8h-1.5zM23.5 126.7h1.5v2.8h-1.5zM21.2 285.9h1.5v2.8h-1.5zM23.5 285.9h1.5v2.8h-1.5zM30.6 360.9h1.5v2.8h-1.5zM32.9 360.9h1.5v2.8h-1.5zM30.6 426.4h1.5v2.8h-1.5zM32.9 426.4h1.5v2.8h-1.5zM40.0 89.3h1.5v2.8h-1.5zM42.3 89.3h1.5v2.8h-1.5zM40.0 229.8h1.5v2.8h-1.5zM42.3 229.8h1.5v2.8h-1.5zM40.0 323.4h1.5v2.8h-1.5zM42.3 323.4h1.5v2.8h-1.5zM40.0 360.9h1.5v2.8h-1.5zM42.3 360.9h1.5v2.8h-1.5zM49.3 126.7h1.5v2.8h-1.5zM51.6 126.7h1.5v2.8h-1.5zM49.3 229.8h1.5v2.8h-1.5zM51.6 229.8h1.5v2.8h-1.5zM49.3 360.9h1.5v2.8h-1.5zM51.6 360.9h1.5v2.8h-1.5zM49.3 407.7h1.5v2.8h-1.5zM51.6 407.7h1.5v2.8h-1.5zM58.7 229.8h1.5v2.8h-1.5zM61.0 229.8h1.5v2.8h-1.5zM68.1 389.0h1.5v2.8h-1.5zM70.4 389.0h1.5v2.8h-1.5zM77.4 229.8h1.5v2.8h-1.5zM79.7 229.8h1.5v2.8h-1.5zM77.4 314.0h1.5v2.8h-1.5zM79.7 314.0h1.5v2.8h-1.5zM77.4 417.1h1.5v2.8h-1.5zM79.7 417.1h1.5v2.8h-1.5zM86.8 426.4h1.5v2.8h-1.5zM89.1 426.4h1.5v2.8h-1.5zM96.1 126.7h1.5v2.8h-1.5zM98.4 126.7h1.5v2.8h-1.5zM96.1 154.8h1.5v2.8h-1.5zM98.4 154.8h1.5v2.8h-1.5zM96.1 314.0h1.5v2.8h-1.5zM98.4 314.0h1.5v2.8h-1.5zM105.5 14.4h1.5v2.8h-1.5zM107.8 14.4h1.5v2.8h-1.5zM105.5 285.9h1.5v2.8h-1.5zM107.8 285.9h1.5v2.8h-1.5zM105.5 314.0h1.5v2.8h-1.5zM107.8 314.0h1.5v2.8h-1.5zM105.5 417.1h1.5v2.8h-1.5zM107.8 417.1h1.5v2.8h-1.5zM114.9 126.7h1.5v2.8h-1.5zM117.2 126.7h1.5v2.8h-1.5zM114.9 164.2h1.5v2.8h-1.5zM117.2 164.2h1.5v2.8h-1.5zM124.2 70.6h1.5v2.8h-1.5zM126.5 70.6h1.5v2.8h-1.5zM133.6 14.4h1.5v2.8h-1.5zM135.9 14.4h1.5v2.8h-1.5zM133.6 23.7h1.5v2.8h-1.5zM135.9 23.7h1.5v2.8h-1.5zM133.6 314.0h1.5v2.8h-1.5zM135.9 314.0h1.5v2.8h-1.5zM133.6 417.1h1.5v2.8h-1.5zM135.9 417.1h1.5v2.8h-1.5zM143.0 332.8h1.5v2.8h-1.5zM145.3 332.8h1.5v2.8h-1.5zM152.3 79.9h1.5v2.8h-1.5zM154.6 79.9h1.5v2.8h-1.5zM161.7 248.5h1.5v2.8h-1.5zM164.0 248.5h1.5v2.8h-1.5zM161.7 285.9h1.5v2.8h-1.5zM164.0 285.9h1.5v2.8h-1.5zM161.7 342.1h1.5v2.8h-1.5zM164.0 342.1h1.5v2.8h-1.5zM171.1 51.8h1.5v2.8h-1.5zM173.4 51.8h1.5v2.8h-1.5zM171.1 211.0h1.5v2.8h-1.5zM173.4 211.0h1.5v2.8h-1.5zM180.4 276.6h1.5v2.8h-1.5zM182.7 276.6h1.5v2.8h-1.5zM180.4 417.1h1.5v2.8h-1.5zM182.7 417.1h1.5v2.8h-1.5zM189.8 -4.4h1.5v2.8h-1.5zM192.1 -4.4h1.5v2.8h-1.5zM189.8 23.7h1.5v2.8h-1.5zM192.1 23.7h1.5v2.8h-1.5zM189.8 285.9h1.5v2.8h-1.5zM192.1 285.9h1.5v2.8h-1.5zM199.2 -4.4h1.5v2.8h-1.5zM201.5 -4.4h1.5v2.8h-1.5zM199.2 117.4h1.5v2.8h-1.5zM201.5 117.4h1.5v2.8h-1.5zM199.2 304.7h1.5v2.8h-1.5zM201.5 304.7h1.5v2.8h-1.5zM208.5 70.6h1.5v2.8h-1.5zM210.8 70.6h1.5v2.8h-1.5zM208.5 145.5h1.5v2.8h-1.5zM210.8 145.5h1.5v2.8h-1.5zM208.5 173.6h1.5v2.8h-1.5zM210.8 173.6h1.5v2.8h-1.5zM208.5 323.4h1.5v2.8h-1.5zM210.8 323.4h1.5v2.8h-1.5zM217.9 5.0h1.5v2.8h-1.5zM220.2 5.0h1.5v2.8h-1.5zM227.3 182.9h1.5v2.8h-1.5zM229.6 182.9h1.5v2.8h-1.5zM227.3 201.7h1.5v2.8h-1.5zM229.6 201.7h1.5v2.8h-1.5zM227.3 239.1h1.5v2.8h-1.5zM229.6 239.1h1.5v2.8h-1.5zM227.3 267.2h1.5v2.8h-1.5zM229.6 267.2h1.5v2.8h-1.5zM227.3 445.2h1.5v2.8h-1.5zM229.6 445.2h1.5v2.8h-1.5zM236.6 332.8h1.5v2.8h-1.5zM238.9 332.8h1.5v2.8h-1.5zM236.6 398.3h1.5v2.8h-1.5zM238.9 398.3h1.5v2.8h-1.5zM255.4 407.7h1.5v2.8h-1.5zM257.7 407.7h1.5v2.8h-1.5zM264.7 70.6h1.5v2.8h-1.5zM267.0 70.6h1.5v2.8h-1.5zM264.7 98.7h1.5v2.8h-1.5zM267.0 98.7h1.5v2.8h-1.5zM264.7 136.1h1.5v2.8h-1.5zM267.0 136.1h1.5v2.8h-1.5zM264.7 211.0h1.5v2.8h-1.5zM267.0 211.0h1.5v2.8h-1.5zM274.1 33.1h1.5v2.8h-1.5zM276.4 33.1h1.5v2.8h-1.5zM274.1 332.8h1.5v2.8h-1.5zM276.4 332.8h1.5v2.8h-1.5zM274.1 426.4h1.5v2.8h-1.5zM276.4 426.4h1.5v2.8h-1.5zM302.2 5.0h1.5v2.8h-1.5zM304.5 5.0h1.5v2.8h-1.5zM302.2 42.5h1.5v2.8h-1.5zM304.5 42.5h1.5v2.8h-1.5zM302.2 117.4h1.5v2.8h-1.5zM304.5 117.4h1.5v2.8h-1.5zM302.2 417.1h1.5v2.8h-1.5zM304.5 417.1h1.5v2.8h-1.5zM302.2 426.4h1.5v2.8h-1.5zM304.5 426.4h1.5v2.8h-1.5zM311.5 342.1h1.5v2.8h-1.5zM313.8 342.1h1.5v2.8h-1.5zM311.5 370.2h1.5v2.8h-1.5zM313.8 370.2h1.5v2.8h-1.5zM320.9 70.6h1.5v2.8h-1.5zM323.2 70.6h1.5v2.8h-1.5zM320.9 79.9h1.5v2.8h-1.5zM323.2 79.9h1.5v2.8h-1.5zM320.9 379.6h1.5v2.8h-1.5zM323.2 379.6h1.5v2.8h-1.5zM330.3 61.2h1.5v2.8h-1.5zM332.6 61.2h1.5v2.8h-1.5zM330.3 154.8h1.5v2.8h-1.5zM332.6 154.8h1.5v2.8h-1.5zM330.3 192.3h1.5v2.8h-1.5zM332.6 192.3h1.5v2.8h-1.5zM330.3 314.0h1.5v2.8h-1.5zM332.6 314.0h1.5v2.8h-1.5zM330.3 445.2h1.5v2.8h-1.5zM332.6 445.2h1.5v2.8h-1.5zM339.6 239.1h1.5v2.8h-1.5zM341.9 239.1h1.5v2.8h-1.5zM339.6 257.9h1.5v2.8h-1.5zM341.9 257.9h1.5v2.8h-1.5zM339.6 454.5h1.5v2.8h-1.5zM341.9 454.5h1.5v2.8h-1.5zM349.0 473.2h1.5v2.8h-1.5zM351.3 473.2h1.5v2.8h-1.5zM358.4 192.3h1.5v2.8h-1.5zM360.7 192.3h1.5v2.8h-1.5zM358.4 201.7h1.5v2.8h-1.5zM360.7 201.7h1.5v2.8h-1.5zM367.7 276.6h1.5v2.8h-1.5zM370.0 276.6h1.5v2.8h-1.5zM377.1 33.1h1.5v2.8h-1.5zM379.4 33.1h1.5v2.8h-1.5zM377.1 117.4h1.5v2.8h-1.5zM379.4 117.4h1.5v2.8h-1.5zM377.1 379.6h1.5v2.8h-1.5zM379.4 379.6h1.5v2.8h-1.5zM386.5 117.4h1.5v2.8h-1.5zM388.8 117.4h1.5v2.8h-1.5zM386.5 257.9h1.5v2.8h-1.5zM388.8 257.9h1.5v2.8h-1.5zM386.5 295.3h1.5v2.8h-1.5zM388.8 295.3h1.5v2.8h-1.5zM395.8 285.9h1.5v2.8h-1.5zM398.1 285.9h1.5v2.8h-1.5zM395.8 342.1h1.5v2.8h-1.5zM398.1 342.1h1.5v2.8h-1.5zM395.8 435.8h1.5v2.8h-1.5zM398.1 435.8h1.5v2.8h-1.5zM405.2 61.2h1.5v2.8h-1.5zM407.5 61.2h1.5v2.8h-1.5zM414.6 14.4h1.5v2.8h-1.5zM416.9 14.4h1.5v2.8h-1.5zM414.6 70.6h1.5v2.8h-1.5zM416.9 70.6h1.5v2.8h-1.5zM414.6 332.8h1.5v2.8h-1.5zM416.9 332.8h1.5v2.8h-1.5zM414.6 351.5h1.5v2.8h-1.5zM416.9 351.5h1.5v2.8h-1.5zM423.9 23.7h1.5v2.8h-1.5zM426.2 23.7h1.5v2.8h-1.5zM433.3 285.9h1.5v2.8h-1.5zM435.6 285.9h1.5v2.8h-1.5zM452.0 14.4h1.5v2.8h-1.5zM454.3 14.4h1.5v2.8h-1.5zM452.0 295.3h1.5v2.8h-1.5zM454.3 295.3h1.5v2.8h-1.5zM452.0 398.3h1.5v2.8h-1.5zM454.3 398.3h1.5v2.8h-1.5zM461.4 61.2h1.5v2.8h-1.5zM463.7 61.2h1.5v2.8h-1.5zM461.4 201.7h1.5v2.8h-1.5zM463.7 201.7h1.5v2.8h-1.5z"/><path fill="#f3f7f9" d="M2.5 445.2h1.5v2.8h-1.5zM4.8 445.2h1.5v2.8h-1.5zM11.9 5.0h1.5v2.8h-1.5zM14.2 5.0h1.5v2.8h-1.5zM30.6 173.6h1.5v2.8h-1.5zM32.9 173.6h1.5v2.8h-1.5zM30.6 445.2h1.5v2.8h-1.5zM32.9 445.2h1.5v2.8h-1.5zM40.0 51.8h1.5v2.8h-1.5zM42.3 51.8h1.5v2.8h-1.5zM49.3 -4.4h1.5v2.8h-1.5zM51.6 -4.4h1.5v2.8h-1.5zM49.3 117.4h1.5v2.8h-1.5zM51.6 117.4h1.5v2.8h-1.5zM58.7 51.8h1.5v2.8h-1.5zM61.0 51.8h1.5v2.8h-1.5zM68.1 51.8h1.5v2.8h-1.5zM70.4 51.8h1.5v2.8h-1.5zM68.1 126.7h1.5v2.8h-1.5zM70.4 126.7h1.5v2.8h-1.5zM68.1 342.1h1.5v2.8h-1.5zM70.4 342.1h1.5v2.8h-1.5zM77.4 201.7h1.5v2.8h-1.5zM79.7 201.7h1.5v2.8h-1.5zM77.4 276.6h1.5v2.8h-1.5zM79.7 276.6h1.5v2.8h-1.5zM77.4 332.8h1.5v2.8h-1.5zM79.7 332.8h1.5v2.8h-1.5zM86.8 79.9h1.5v2.8h-1.5zM89.1 79.9h1.5v2.8h-1.5zM86.8 126.7h1.5v2.8h-1.5zM89.1 126.7h1.5v2.8h-1.5zM86.8 164.2h1.5v2.8h-1.5zM89.1 164.2h1.5v2.8h-1.5zM86.8 182.9h1.5v2.8h-1.5zM89.1 182.9h1.5v2.8h-1.5zM86.8 295.3h1.5v2.8h-1.5zM89.1 295.3h1.5v2.8h-1.5zM96.1 267.2h1.5v2.8h-1.5zM98.4 267.2h1.5v2.8h-1.5zM105.5 70.6h1.5v2.8h-1.5zM107.8 70.6h1.5v2.8h-1.5zM105.5 89.3h1.5v2.8h-1.5zM107.8 89.3h1.5v2.8h-1.5zM105.5 108.0h1.5v2.8h-1.5zM107.8 108.0h1.5v2.8h-1.5zM105.5 192.3h1.5v2.8h-1.5zM107.8 192.3h1.5v2.8h-1.5zM105.5 426.4h1.5v2.8h-1.5zM107.8 426.4h1.5v2.8h-1.5zM114.9 304.7h1.5v2.8h-1.5zM117.2 304.7h1.5v2.8h-1.5zM124.2 267.2h1.5v2.8h-1.5zM126.5 267.2h1.5v2.8h-1.5zM124.2 342.1h1.5v2.8h-1.5zM126.5 342.1h1.5v2.8h-1.5zM133.6 33.1h1.5v2.8h-1.5zM135.9 33.1h1.5v2.8h-1.5zM133.6 89.3h1.5v2.8h-1.5zM135.9 89.3h1.5v2.8h-1.5zM133.6 407.7h1.5v2.8h-1.5zM135.9 407.7h1.5v2.8h-1.5zM143.0 23.7h1.5v2.8h-1.5zM145.3 23.7h1.5v2.8h-1.5zM143.0 173.6h1.5v2.8h-1.5zM145.3 173.6h1.5v2.8h-1.5zM143.0 267.2h1.5v2.8h-1.5zM145.3 267.2h1.5v2.8h-1.5zM143.0 445.2h1.5v2.8h-1.5zM145.3 445.2h1.5v2.8h-1.5zM152.3 33.1h1.5v2.8h-1.5zM154.6 33.1h1.5v2.8h-1.5zM161.7 220.4h1.5v2.8h-1.5zM164.0 220.4h1.5v2.8h-1.5zM171.1 201.7h1.5v2.8h-1.5zM173.4 201.7h1.5v2.8h-1.5zM171.1 239.1h1.5v2.8h-1.5zM173.4 239.1h1.5v2.8h-1.5zM180.4 51.8h1.5v2.8h-1.5zM182.7 51.8h1.5v2.8h-1.5zM180.4 145.5h1.5v2.8h-1.5zM182.7 145.5h1.5v2.8h-1.5zM180.4 257.9h1.5v2.8h-1.5zM182.7 257.9h1.5v2.8h-1.5zM189.8 145.5h1.5v2.8h-1.5zM192.1 145.5h1.5v2.8h-1.5zM199.2 98.7h1.5v2.8h-1.5zM201.5 98.7h1.5v2.8h-1.5zM199.2 351.5h1.5v2.8h-1.5zM201.5 351.5h1.5v2.8h-1.5zM199.2 370.2h1.5v2.8h-1.5zM201.5 370.2h1.5v2.8h-1.5zM199.2 435.8h1.5v2.8h-1.5zM201.5 435.8h1.5v2.8h-1.5zM208.5 108.0h1.5v2.8h-1.5zM210.8 108.0h1.5v2.8h-1.5zM208.5 126.7h1.5v2.8h-1.5zM210.8 126.7h1.5v2.8h-1.5zM208.5 267.2h1.5v2.8h-1.5zM210.8 267.2h1.5v2.8h-1.5zM208.5 435.8h1.5v2.8h-1.5zM210.8 435.8h1.5v2.8h-1.5zM217.9 164.2h1.5v2.8h-1.5zM220.2 164.2h1.5v2.8h-1.5zM227.3 304.7h1.5v2.8h-1.5zM229.6 304.7h1.5v2.8h-1.5zM227.3 314.0h1.5v2.8h-1.5zM229.6 314.0h1.5v2.8h-1.5zM227.3 379.6h1.5v2.8h-1.5zM229.6 379.6h1.5v2.8h-1.5zM236.6 98.7h1.5v2.8h-1.5zM238.9 98.7h1.5v2.8h-1.5zM236.6 164.2h1.5v2.8h-1.5zM238.9 164.2h1.5v2.8h-1.5zM236.6 323.4h1.5v2.8h-1.5zM238.9 323.4h1.5v2.8h-1.5zM236.6 360.9h1.5v2.8h-1.5zM238.9 360.9h1.5v2.8h-1.5zM236.6 389.0h1.5v2.8h-1.5zM238.9 389.0h1.5v2.8h-1.5zM246.0 473.2h1.5v2.8h-1.5zM248.3 473.2h1.5v2.8h-1.5zM255.4 285.9h1.5v2.8h-1.5zM257.7 285.9h1.5v2.8h-1.5zM264.7 192.3h1.5v2.8h-1.5zM267.0 192.3h1.5v2.8h-1.5zM274.1 51.8h1.5v2.8h-1.5zM276.4 51.8h1.5v2.8h-1.5zM274.1 323.4h1.5v2.8h-1.5zM276.4 323.4h1.5v2.8h-1.5zM283.4 463.9h1.5v2.8h-1.5zM285.7 463.9h1.5v2.8h-1.5zM292.8 -4.4h1.5v2.8h-1.5zM295.1 -4.4h1.5v2.8h-1.5zM292.8 51.8h1.5v2.8h-1.5zM295.1 51.8h1.5v2.8h-1.5zM292.8 192.3h1.5v2.8h-1.5zM295.1 192.3h1.5v2.8h-1.5zM302.2 267.2h1.5v2.8h-1.5zM304.5 267.2h1.5v2.8h-1.5zM302.2 342.1h1.5v2.8h-1.5zM304.5 342.1h1.5v2.8h-1.5zM320.9 164.2h1.5v2.8h-1.5zM323.2 164.2h1.5v2.8h-1.5zM320.9 211.0h1.5v2.8h-1.5zM323.2 211.0h1.5v2.8h-1.5zM330.3 332.8h1.5v2.8h-1.5zM332.6 332.8h1.5v2.8h-1.5zM339.6 145.5h1.5v2.8h-1.5zM341.9 145.5h1.5v2.8h-1.5zM339.6 164.2h1.5v2.8h-1.5zM341.9 164.2h1.5v2.8h-1.5zM339.6 435.8h1.5v2.8h-1.5zM341.9 435.8h1.5v2.8h-1.5zM349.0 314.0h1.5v2.8h-1.5zM351.3 314.0h1.5v2.8h-1.5zM367.7 323.4h1.5v2.8h-1.5zM370.0 323.4h1.5v2.8h-1.5zM367.7 360.9h1.5v2.8h-1.5zM370.0 360.9h1.5v2.8h-1.5zM367.7 445.2h1.5v2.8h-1.5zM370.0 445.2h1.5v2.8h-1.5zM367.7 454.5h1.5v2.8h-1.5zM370.0 454.5h1.5v2.8h-1.5zM367.7 463.9h1.5v2.8h-1.5zM370.0 463.9h1.5v2.8h-1.5zM377.1 164.2h1.5v2.8h-1.5zM379.4 164.2h1.5v2.8h-1.5zM395.8 126.7h1.5v2.8h-1.5zM398.1 126.7h1.5v2.8h-1.5zM405.2 33.1h1.5v2.8h-1.5zM407.5 33.1h1.5v2.8h-1.5zM405.2 398.3h1.5v2.8h-1.5zM407.5 398.3h1.5v2.8h-1.5zM423.9 33.1h1.5v2.8h-1.5zM426.2 33.1h1.5v2.8h-1.5zM423.9 332.8h1.5v2.8h-1.5zM426.2 332.8h1.5v2.8h-1.5zM423.9 370.2h1.5v2.8h-1.5zM426.2 370.2h1.5v2.8h-1.5zM423.9 445.2h1.5v2.8h-1.5zM426.2 445.2h1.5v2.8h-1.5zM433.3 342.1h1.5v2.8h-1.5zM435.6 342.1h1.5v2.8h-1.5zM442.7 79.9h1.5v2.8h-1.5zM445.0 79.9h1.5v2.8h-1.5zM442.7 360.9h1.5v2.8h-1.5zM445.0 360.9h1.5v2.8h-1.5zM452.0 164.2h1.5v2.8h-1.5zM454.3 164.2h1.5v2.8h-1.5zM461.4 407.7h1.5v2.8h-1.5zM463.7 407.7h1.5v2.8h-1.5zM461.4 435.8h1.5v2.8h-1.5zM463.7 435.8h1.5v2.8h-1.5z"/><path fill="#f6edec" d="M11.9 42.5h1.5v2.8h-1.5zM14.2 42.5h1.5v2.8h-1.5zM11.9 154.8h1.5v2.8h-1.5zM14.2 154.8h1.5v2.8h-1.5zM11.9 229.8h1.5v2.8h-1.5zM14.2 229.8h1.5v2.8h-1.5zM30.6 389.0h1.5v2.8h-1.5zM32.9 389.0h1.5v2.8h-1.5zM30.6 417.1h1.5v2.8h-1.5zM32.9 417.1h1.5v2.8h-1.5zM40.0 136.1h1.5v2.8h-1.5zM42.3 136.1h1.5v2.8h-1.5zM49.3 342.1h1.5v2.8h-1.5zM51.6 342.1h1.5v2.8h-1.5zM49.3 389.0h1.5v2.8h-1.5zM51.6 389.0h1.5v2.8h-1.5zM68.1 398.3h1.5v2.8h-1.5zM70.4 398.3h1.5v2.8h-1.5zM77.4 211.0h1.5v2.8h-1.5zM79.7 211.0h1.5v2.8h-1.5zM86.8 108.0h1.5v2.8h-1.5zM89.1 108.0h1.5v2.8h-1.5zM86.8 351.5h1.5v2.8h-1.5zM89.1 351.5h1.5v2.8h-1.5zM105.5 220.4h1.5v2.8h-1.5zM107.8 220.4h1.5v2.8h-1.5zM124.2 182.9h1.5v2.8h-1.5zM126.5 182.9h1.5v2.8h-1.5zM124.2 407.7h1.5v2.8h-1.5zM126.5 407.7h1.5v2.8h-1.5zM133.6 108.0h1.5v2.8h-1.5zM135.9 108.0h1.5v2.8h-1.5zM143.0 463.9h1.5v2.8h-1.5zM145.3 463.9h1.5v2.8h-1.5zM152.3 154.8h1.5v2.8h-1.5zM154.6 154.8h1.5v2.8h-1.5zM171.1 342.1h1.5v2.8h-1.5zM173.4 342.1h1.5v2.8h-1.5zM189.8 211.0h1.5v2.8h-1.5zM192.1 211.0h1.5v2.8h-1.5zM189.8 314.0h1.5v2.8h-1.5zM192.1 314.0h1.5v2.8h-1.5zM208.5 201.7h1.5v2.8h-1.5zM210.8 201.7h1.5v2.8h-1.5zM227.3 370.2h1.5v2.8h-1.5zM229.6 370.2h1.5v2.8h-1.5zM246.0 117.4h1.5v2.8h-1.5zM248.3 117.4h1.5v2.8h-1.5zM255.4 351.5h1.5v2.8h-1.5zM257.7 351.5h1.5v2.8h-1.5zM264.7 -4.4h1.5v2.8h-1.5zM267.0 -4.4h1.5v2.8h-1.5zM264.7 126.7h1.5v2.8h-1.5zM267.0 126.7h1.5v2.8h-1.5zM264.7 370.2h1.5v2.8h-1.5zM267.0 370.2h1.5v2.8h-1.5zM274.1 239.1h1.5v2.8h-1.5zM276.4 239.1h1.5v2.8h-1.5zM274.1 407.7h1.5v2.8h-1.5zM276.4 407.7h1.5v2.8h-1.5zM283.4 14.4h1.5v2.8h-1.5zM285.7 14.4h1.5v2.8h-1.5zM283.4 89.3h1.5v2.8h-1.5zM285.7 89.3h1.5v2.8h-1.5zM311.5 463.9h1.5v2.8h-1.5zM313.8 463.9h1.5v2.8h-1.5zM330.3 201.7h1.5v2.8h-1.5zM332.6 201.7h1.5v2.8h-1.5zM395.8 14.4h1.5v2.8h-1.5zM398.1 14.4h1.5v2.8h-1.5zM405.2 276.6h1.5v2.8h-1.5zM407.5 276.6h1.5v2.8h-1.5zM414.6 136.1h1.5v2.8h-1.5zM416.9 136.1h1.5v2.8h-1.5zM414.6 211.0h1.5v2.8h-1.5zM416.9 211.0h1.5v2.8h-1.5zM414.6 407.7h1.5v2.8h-1.5zM416.9 407.7h1.5v2.8h-1.5zM414.6 435.8h1.5v2.8h-1.5zM416.9 435.8h1.5v2.8h-1.5zM433.3 211.0h1.5v2.8h-1.5zM435.6 211.0h1.5v2.8h-1.5zM433.3 360.9h1.5v2.8h-1.5zM435.6 360.9h1.5v2.8h-1.5zM442.7 220.4h1.5v2.8h-1.5zM445.0 220.4h1.5v2.8h-1.5zM452.0 229.8h1.5v2.8h-1.5zM454.3 229.8h1.5v2.8h-1.5zM452.0 276.6h1.5v2.8h-1.5zM454.3 276.6h1.5v2.8h-1.5zM461.4 117.4h1.5v2.8h-1.5zM463.7 117.4h1.5v2.8h-1.5z"/><path fill="#eef2f5" d="M11.9 51.8h1.5v2.8h-1.5zM14.2 51.8h1.5v2.8h-1.5zM11.9 285.9h1.5v2.8h-1.5zM14.2 285.9h1.5v2.8h-1.5zM21.2 117.4h1.5v2.8h-1.5zM23.5 117.4h1.5v2.8h-1.5zM30.6 79.9h1.5v2.8h-1.5zM32.9 79.9h1.5v2.8h-1.5zM30.6 98.7h1.5v2.8h-1.5zM32.9 98.7h1.5v2.8h-1.5zM30.6 435.8h1.5v2.8h-1.5zM32.9 435.8h1.5v2.8h-1.5zM49.3 89.3h1.5v2.8h-1.5zM51.6 89.3h1.5v2.8h-1.5zM58.7 192.3h1.5v2.8h-1.5zM61.0 192.3h1.5v2.8h-1.5zM86.8 239.1h1.5v2.8h-1.5zM89.1 239.1h1.5v2.8h-1.5zM114.9 323.4h1.5v2.8h-1.5zM117.2 323.4h1.5v2.8h-1.5zM114.9 360.9h1.5v2.8h-1.5zM117.2 360.9h1.5v2.8h-1.5zM133.6 351.5h1.5v2.8h-1.5zM135.9 351.5h1.5v2.8h-1.5zM143.0 192.3h1.5v2.8h-1.5zM145.3 192.3h1.5v2.8h-1.5zM143.0 239.1h1.5v2.8h-1.5zM145.3 239.1h1.5v2.8h-1.5zM152.3 323.4h1.5v2.8h-1.5zM154.6 323.4h1.5v2.8h-1.5zM171.1 407.7h1.5v2.8h-1.5zM173.4 407.7h1.5v2.8h-1.5zM171.1 417.1h1.5v2.8h-1.5zM173.4 417.1h1.5v2.8h-1.5zM180.4 61.2h1.5v2.8h-1.5zM182.7 61.2h1.5v2.8h-1.5zM189.8 117.4h1.5v2.8h-1.5zM192.1 117.4h1.5v2.8h-1.5zM199.2 5.0h1.5v2.8h-1.5zM201.5 5.0h1.5v2.8h-1.5zM199.2 173.6h1.5v2.8h-1.5zM201.5 173.6h1.5v2.8h-1.5zM217.9 323.4h1.5v2.8h-1.5zM220.2 323.4h1.5v2.8h-1.5zM217.9 426.4h1.5v2.8h-1.5zM220.2 426.4h1.5v2.8h-1.5zM227.3 407.7h1.5v2.8h-1.5zM229.6 407.7h1.5v2.8h-1.5zM236.6 407.7h1.5v2.8h-1.5zM238.9 407.7h1.5v2.8h-1.5zM246.0 14.4h1.5v2.8h-1.5zM248.3 14.4h1.5v2.8h-1.5zM246.0 126.7h1.5v2.8h-1.5zM248.3 126.7h1.5v2.8h-1.5zM246.0 192.3h1.5v2.8h-1.5zM248.3 192.3h1.5v2.8h-1.5zM246.0 342.1h1.5v2.8h-1.5zM248.3 342.1h1.5v2.8h-1.5zM255.4 61.2h1.5v2.8h-1.5zM257.7 61.2h1.5v2.8h-1.5zM264.7 42.5h1.5v2.8h-1.5zM267.0 42.5h1.5v2.8h-1.5zM264.7 117.4h1.5v2.8h-1.5zM267.0 117.4h1.5v2.8h-1.5zM274.1 117.4h1.5v2.8h-1.5zM276.4 117.4h1.5v2.8h-1.5zM283.4 33.1h1.5v2.8h-1.5zM285.7 33.1h1.5v2.8h-1.5zM283.4 70.6h1.5v2.8h-1.5zM285.7 70.6h1.5v2.8h-1.5zM292.8 23.7h1.5v2.8h-1.5zM295.1 23.7h1.5v2.8h-1.5zM302.2 389.0h1.5v2.8h-1.5zM304.5 389.0h1.5v2.8h-1.5zM311.5 220.4h1.5v2.8h-1.5zM313.8 220.4h1.5v2.8h-1.5zM311.5 248.5h1.5v2.8h-1.5zM313.8 248.5h1.5v2.8h-1.5zM339.6 5.0h1.5v2.8h-1.5zM341.9 5.0h1.5v2.8h-1.5zM349.0 407.7h1.5v2.8h-1.5zM351.3 407.7h1.5v2.8h-1.5zM358.4 154.8h1.5v2.8h-1.5zM360.7 154.8h1.5v2.8h-1.5zM367.7 248.5h1.5v2.8h-1.5zM370.0 248.5h1.5v2.8h-1.5zM377.1 51.8h1.5v2.8h-1.5zM379.4 51.8h1.5v2.8h-1.5zM377.1 435.8h1.5v2.8h-1.5zM379.4 435.8h1.5v2.8h-1.5zM395.8 220.4h1.5v2.8h-1.5zM398.1 220.4h1.5v2.8h-1.5zM414.6 117.4h1.5v2.8h-1.5zM416.9 117.4h1.5v2.8h-1.5zM414.6 342.1h1.5v2.8h-1.5zM416.9 342.1h1.5v2.8h-1.5zM423.9 229.8h1.5v2.8h-1.5zM426.2 229.8h1.5v2.8h-1.5zM433.3 51.8h1.5v2.8h-1.5zM435.6 51.8h1.5v2.8h-1.5zM433.3 389.0h1.5v2.8h-1.5zM435.6 389.0h1.5v2.8h-1.5zM442.7 267.2h1.5v2.8h-1.5zM445.0 267.2h1.5v2.8h-1.5z"/><path fill="#181818" d=""/><g transform="translate(135.6 108) scale(0.85 1)" fill="#d63c2c"><circle cx="0" cy="3" r="2.4"/><path d="M-2.2 5.8L2.2 5.8L6 11.2L4.8 12.4L2.8 10.2L3.8 18.5L-3.8 18.5L-2.8 10.2L-4.8 12.4L-6 11.2Z"/></g><g transform="translate(173.3 121.3) scale(0.85 1)" fill="#3a5fb4"><circle cx="0" cy="3" r="2.4"/><path d="M-2.2 5.8L2.2 5.8L6 11.2L4.8 12.4L2.8 10.2L3.8 21.5L-3.8 21.5L-2.8 10.2L-4.8 12.4L-6 11.2Z"/></g></svg>
</div>

<div class="a" style="left:730px;top:633px;width:472px;height:1px;background:#8a8a8a"></div>
<!-- splitter -->
<div class="a" style="left:0;top:669px;width:1202px;height:1px;background:#777"></div>
<div class="a" style="left:0;top:670px;width:1202px;height:4px;background:#f0f0f0"></div>
<svg class="a" style="left:4px;top:670px" width="20" height="5"><path d="M1 4.5h6L4 1z M12 1h6L15 4.5z" fill="#111"/></svg>
<!-- command center -->
<div class="a" style="left:0;top:674px;width:1202px;height:50px;background:#fff;border-left:2px solid #888"></div>
<div class="a" style="left:1px;top:674px;width:1201px;height:1px;background:#7a7a7a"></div>
<div class="a" style="left:2px;top:675px;width:1200px;height:17px;background:#bcbce4"></div>
<div class="t" style="left:4px;top:678.2px;font-size:11.8px;font-weight:bold;color:#111">Command Center</div>
<div class="a" style="left:2px;top:692px;width:1200px;height:1px;background:#7a7a7a"></div>
<div class="a" style="left:2px;top:693px;width:2px;height:15px;background:#bcbce4"></div>
<div class="a" style="left:2px;top:707px;width:1200px;height:1px;background:#7a7a7a"></div>
<div class="a" style="left:2px;top:708px;width:53px;height:14px;background:#bcbce4"></div>
<div class="t" style="left:4px;top:710.8px;font-size:11.3px;color:#111">observer&gt;</div>
<div class="a" style="left:59px;top:712px;width:1px;height:10px;background:#111"></div>
<div class="a" style="left:2px;top:722px;width:1200px;height:1px;background:#9a9a9a"></div>
</body></html>
